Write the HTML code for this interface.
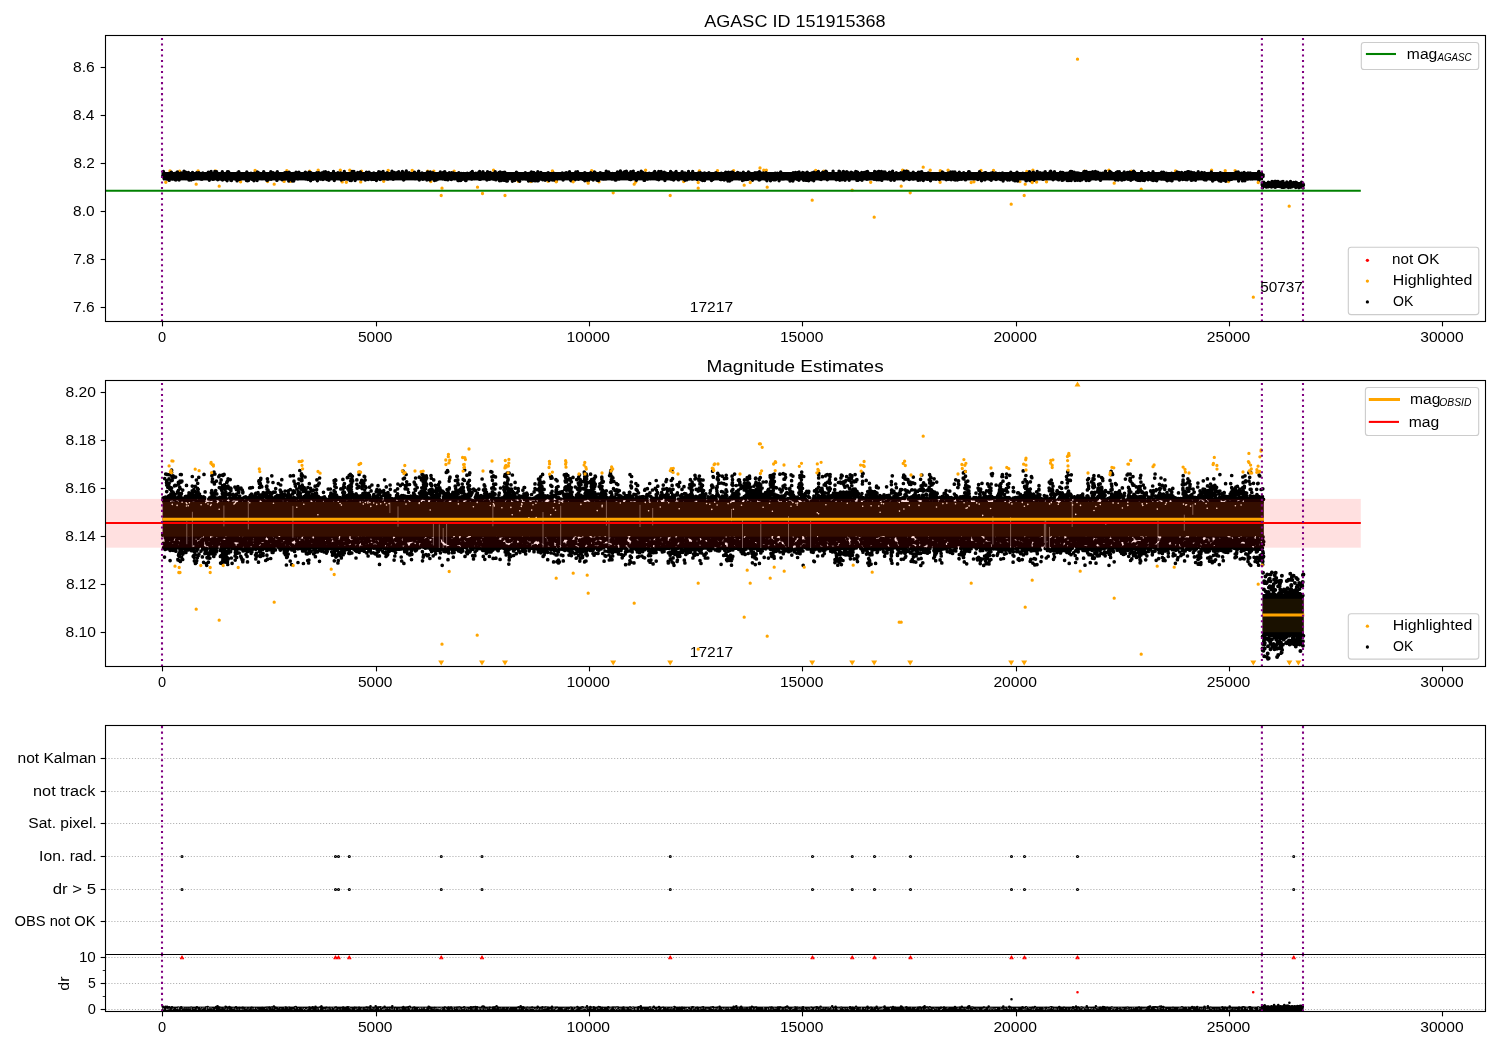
<!DOCTYPE html><html><head><meta charset="utf-8"><style>html,body{margin:0;padding:0;background:#fff;}svg{display:block;font-family:"Liberation Sans",sans-serif;will-change:transform;}</style></head><body>
<svg width="1500" height="1050" viewBox="0 0 1500 1050">
<rect width="1500" height="1050" fill="#fff"/>
<text x="704.30" y="27.20" font-size="16.9" textLength="181.35" lengthAdjust="spacingAndGlyphs" fill="#000">AGASC ID 151915368</text>
<clipPath id="c1"><rect x="105.5" y="35.5" width="1380.0" height="286.0"/></clipPath>
<g clip-path="url(#c1)">
<path d="M170.0 170.9h0M165.8 182.3h0M179.6 171.3h0M198.1 171.0h0M215.5 171.0h0M240.6 181.7h0M255.1 170.4h0M267.6 181.5h0M286.8 170.7h0M284.1 181.4h0M290.4 181.4h0M309.6 171.3h0M318.2 170.3h0M340.3 170.2h0M342.2 181.9h0M349.8 170.2h0M346.3 182.2h0M361.5 171.1h0M360.7 181.9h0M383.7 181.3h0M388.2 170.5h0M412.2 170.4h0M427.7 171.3h0M433.8 171.1h0M430.8 181.6h0M454.1 171.1h0M493.5 170.3h0M518.3 181.3h0M530.9 181.6h0M552.4 170.9h0M548.0 181.2h0M556.5 181.2h0M591.7 170.6h0M587.8 181.6h0M599.0 181.8h0M635.7 182.0h0M645.6 170.2h0M683.7 181.6h0M699.4 170.9h0M717.5 170.6h0M733.6 170.6h0M763.8 170.2h0M766.3 170.3h0M815.7 170.5h0M823.8 171.2h0M870.7 182.2h0M902.6 170.2h0M907.1 170.9h0M930.2 170.3h0M940.3 170.7h0M940.1 182.2h0M948.1 170.2h0M973.9 181.8h0M981.0 170.4h0M993.5 170.4h0M1026.8 171.4h0M1019.9 181.6h0M1032.9 170.2h0M1036.6 182.1h0M1046.5 181.7h0M1084.6 171.3h0M1108.9 170.2h0M1131.4 171.3h0M1175.5 171.0h0M1211.6 170.3h0M1225.2 170.7h0M1235.1 170.6h0M1228.4 181.6h0" stroke="#ffa500" stroke-width="3.4" stroke-linecap="round" fill="none"/>
<rect x="163" y="172" width="1100" height="8.4" fill="#000"/>
<rect x="1263" y="182" width="40" height="5.5" fill="#000"/>
<path d="M1153.4 177.2h0M1166.2 179.7h0M1193.4 177.1h0M1043.0 179.4h0M688.4 175.9h0M739.2 175.7h0M599.9 174.5h0M602.4 175.6h0M208.3 172.1h0M1042.0 175.8h0M433.4 175.7h0M194.8 174.4h0M676.1 171.4h0M952.9 171.9h0M642.6 177.4h0M563.4 174.1h0M887.5 178.8h0M341.8 174.4h0M175.0 176.6h0M814.8 172.9h0M746.5 175.0h0M1115.8 175.0h0M620.4 176.8h0M1028.0 180.0h0M182.2 177.8h0M192.5 172.4h0M821.5 175.9h0M411.6 175.1h0M236.6 175.0h0M303.2 178.0h0M575.1 179.8h0M533.7 175.4h0M783.2 178.9h0M1139.7 179.1h0M565.1 173.8h0M365.3 180.0h0M798.9 180.2h0M164.9 176.6h0M586.2 180.1h0M511.8 177.2h0M589.0 178.8h0M218.4 177.5h0M772.7 174.3h0M849.7 176.3h0M987.7 175.9h0M1216.7 175.6h0M553.1 173.6h0M885.1 174.1h0M649.2 173.2h0M399.3 178.1h0M1141.6 171.7h0M983.7 176.4h0M1200.5 174.9h0M1067.0 173.2h0M1172.6 177.8h0M303.5 174.9h0M179.8 178.4h0M381.1 175.6h0M616.2 176.3h0M919.6 175.6h0M645.2 177.3h0M727.7 178.7h0M1000.4 175.6h0M240.2 176.3h0M909.3 179.6h0M216.2 174.8h0M436.3 180.0h0M957.7 175.5h0M914.6 174.6h0M608.7 172.0h0M486.8 174.2h0M1074.2 172.2h0M465.0 174.8h0M196.9 177.1h0M434.7 175.9h0M185.8 174.3h0M1055.1 173.6h0M297.1 175.2h0M1234.8 173.4h0M397.0 172.8h0M499.5 180.7h0M806.8 176.9h0M501.8 174.5h0M580.1 177.8h0M277.2 179.6h0M590.9 174.8h0M190.3 175.3h0M409.1 172.7h0M1163.8 172.8h0M471.6 179.0h0M460.8 180.6h0M910.4 174.1h0M1134.6 172.3h0M488.2 179.3h0M576.8 178.6h0M949.4 177.5h0M1034.7 179.3h0M838.3 174.9h0M359.6 176.7h0M361.5 177.9h0M997.0 175.8h0M940.7 177.5h0M1149.3 175.7h0M1021.1 177.5h0M626.3 175.9h0M309.2 172.2h0M1142.9 176.3h0M928.3 173.0h0M797.1 174.6h0M913.2 172.1h0M586.5 178.1h0M540.5 175.5h0M796.1 175.6h0M694.0 178.6h0M943.1 178.0h0M1193.1 175.6h0M1095.4 171.4h0M589.1 177.7h0M572.6 175.7h0M1182.9 175.3h0M597.0 177.7h0M1043.6 174.5h0M264.6 175.9h0M659.2 178.0h0M730.9 177.9h0M1053.0 174.5h0M1128.7 178.9h0M330.6 178.6h0M842.0 179.8h0M855.2 175.7h0M329.3 176.6h0M1080.3 178.4h0M771.9 177.2h0M1221.3 177.0h0M367.6 175.9h0M740.5 175.9h0M518.6 175.2h0M869.9 174.6h0M832.0 176.6h0M726.7 175.9h0M520.2 173.6h0M717.3 176.5h0M572.4 179.9h0M1143.2 179.1h0M670.6 171.5h0M685.7 173.9h0M447.2 177.9h0M442.0 176.3h0M1212.7 176.7h0M508.2 176.4h0M1118.5 175.7h0M817.3 173.8h0M1242.1 179.0h0M343.1 173.7h0M1199.2 175.9h0M1013.0 180.0h0M787.9 178.9h0M943.0 176.5h0M957.9 176.3h0M656.2 174.7h0M861.1 174.9h0M414.1 175.0h0M186.0 178.5h0M907.3 174.7h0M684.9 177.0h0M1159.5 177.3h0M453.2 177.1h0M1063.1 175.3h0M1248.4 177.9h0M1151.3 176.6h0M1224.3 176.9h0M337.6 174.9h0M344.3 171.4h0M413.9 177.2h0M560.5 177.8h0M289.6 175.5h0M328.4 175.8h0M182.8 176.3h0M1190.1 174.0h0M560.1 177.7h0M851.8 177.4h0M662.9 177.9h0M980.6 178.3h0M1050.1 171.7h0M584.2 177.5h0M751.9 175.4h0M269.8 178.6h0M476.8 178.3h0M407.8 177.3h0M502.2 176.4h0M519.7 181.2h0M795.6 176.5h0M528.9 174.3h0M522.4 178.8h0M1077.7 173.0h0M175.9 180.1h0M168.3 178.2h0M225.4 179.2h0M1115.5 177.9h0M860.2 176.9h0M964.0 173.5h0M1216.9 175.4h0M402.5 176.9h0M1175.4 175.8h0M429.6 176.8h0M733.8 175.2h0M912.4 174.1h0M1040.3 176.7h0M435.7 177.8h0M687.7 175.9h0M212.7 173.9h0M479.5 172.4h0M1242.5 180.9h0M1159.0 173.9h0M803.4 174.6h0M1028.4 174.8h0M1155.8 178.3h0M527.9 175.0h0M1242.0 177.7h0M656.3 176.8h0M337.4 173.5h0M746.1 176.8h0M816.1 173.5h0M925.3 175.8h0M901.2 177.3h0M208.1 175.3h0M866.1 174.1h0M1177.2 175.3h0M900.3 175.3h0M1236.2 177.3h0M725.7 172.1h0M1054.5 171.8h0M316.9 177.5h0M1148.5 176.0h0M643.0 175.9h0M1127.7 176.1h0M515.7 176.3h0M849.9 174.8h0M1094.6 176.1h0M945.7 177.9h0M845.0 176.4h0M1231.2 176.7h0M259.4 173.9h0M274.8 176.7h0M769.8 173.7h0M1213.6 175.1h0M918.3 176.2h0M503.4 176.8h0M281.1 178.7h0M656.1 177.9h0M691.3 176.8h0M678.1 175.1h0M844.4 175.6h0M462.9 175.5h0M1131.8 179.5h0M479.9 177.0h0M280.4 174.9h0M546.7 174.3h0M1192.7 178.8h0M338.0 174.1h0M468.2 176.8h0M1182.7 176.5h0M545.7 178.5h0M1090.7 174.1h0M212.5 176.9h0M1140.7 176.4h0M423.7 177.5h0M361.3 179.1h0M979.7 176.4h0M1251.9 175.7h0M1218.7 178.6h0M990.8 173.3h0M1169.1 176.6h0M1249.3 174.1h0M771.1 173.6h0M321.7 172.9h0M1097.7 172.2h0M598.4 177.9h0M506.7 178.5h0M714.0 176.6h0M200.9 177.9h0M183.1 175.7h0M453.5 175.1h0M818.6 173.7h0M987.6 178.0h0M1216.4 178.4h0M1063.3 178.7h0M1198.7 174.5h0M863.1 175.4h0M970.5 173.3h0M809.2 178.8h0M252.2 177.8h0M230.7 177.5h0M999.4 176.5h0M385.3 175.6h0M1032.1 175.4h0M673.4 178.3h0M170.1 174.6h0M780.7 178.3h0M650.3 176.6h0M243.8 174.2h0M449.9 173.1h0M500.1 174.8h0M543.1 176.2h0M940.7 173.7h0M346.7 177.4h0M650.6 178.5h0M830.6 176.9h0M1204.4 172.7h0M289.1 172.1h0M249.8 178.2h0M373.6 179.4h0M405.4 174.7h0M341.7 177.1h0M246.2 175.7h0M393.2 174.4h0M408.4 177.7h0M690.5 174.6h0M875.7 177.9h0M563.1 180.0h0M347.7 175.7h0M266.7 180.3h0M452.1 173.3h0M350.6 178.0h0M692.1 175.9h0M1121.6 180.0h0M951.3 176.6h0M386.3 174.2h0M201.9 179.2h0M236.9 173.1h0M642.3 176.8h0M562.8 174.5h0M913.9 178.8h0M254.9 176.0h0M442.8 178.1h0M917.5 175.8h0M787.9 174.1h0M731.4 172.1h0M1155.2 180.2h0M287.3 177.1h0M377.7 173.6h0M785.2 175.8h0M784.9 178.6h0M1241.6 173.2h0M1238.6 181.0h0M809.1 175.8h0M998.0 175.8h0M930.4 179.1h0M308.9 177.1h0M825.6 173.6h0M499.1 178.5h0M557.7 177.1h0M334.6 178.5h0M171.7 173.9h0M1102.4 173.3h0M952.0 177.8h0M990.7 175.4h0M479.6 171.5h0M622.0 174.3h0M356.4 177.5h0M825.5 174.2h0M1086.5 178.8h0M1020.0 175.4h0M1190.6 175.9h0M449.3 172.6h0M934.7 174.6h0M302.0 176.3h0M753.0 177.6h0M283.9 176.9h0M757.4 178.6h0M759.4 171.7h0M544.5 176.2h0M547.3 175.8h0M945.4 174.2h0M692.1 175.7h0M611.3 174.1h0M286.6 177.4h0M473.3 175.2h0M1095.1 177.0h0M1232.7 174.6h0M573.4 179.1h0M1121.3 176.4h0M1124.4 179.5h0M402.6 175.2h0M464.0 174.9h0M928.8 176.5h0M499.4 175.4h0M1214.3 174.3h0M564.5 176.2h0M966.5 176.1h0M941.2 175.0h0M397.7 174.8h0M1115.9 173.4h0M524.4 176.9h0M283.7 173.5h0M217.7 179.8h0M660.0 176.1h0M859.4 178.0h0M461.3 173.4h0M1089.4 176.7h0M457.0 175.8h0M1095.6 178.0h0M198.9 177.5h0M451.7 172.6h0M338.1 178.5h0M655.4 172.7h0M548.8 179.1h0M597.1 176.0h0M1100.0 173.1h0M800.6 178.0h0M829.1 175.8h0M591.9 174.0h0M1052.1 174.2h0M715.0 177.4h0M983.9 173.2h0M1169.0 174.3h0M836.3 179.7h0M641.6 174.1h0M452.7 177.0h0M1166.6 177.2h0M1004.7 178.7h0M1042.8 177.8h0M406.3 171.0h0M643.3 174.8h0M1135.3 178.5h0M433.3 174.2h0M1058.6 179.9h0M755.6 176.8h0M403.4 172.8h0M575.9 177.6h0M246.4 180.6h0M903.6 174.1h0M962.8 177.5h0M194.4 173.6h0M494.4 175.0h0M1008.9 176.9h0M383.1 177.1h0M753.7 177.1h0M1049.8 176.3h0M790.0 181.0h0M297.1 174.3h0M1163.5 172.2h0M984.6 177.5h0M784.5 176.8h0M529.0 173.4h0M803.6 180.2h0M593.6 174.6h0M293.2 173.5h0M297.0 177.6h0M212.4 177.3h0M350.1 180.5h0M432.9 172.6h0M862.0 173.1h0M801.3 175.9h0M812.7 175.2h0M1067.5 175.8h0M267.2 174.6h0M590.7 172.8h0M249.8 175.2h0M623.6 177.1h0M249.3 178.0h0M235.5 174.9h0M277.3 177.5h0M591.8 177.1h0M1002.7 175.5h0M472.9 175.2h0M979.2 176.3h0M419.3 180.1h0M478.7 176.4h0M681.5 173.9h0M245.1 176.0h0M656.7 174.8h0M805.0 178.9h0M1070.4 171.5h0M224.3 173.8h0M1043.2 177.8h0M789.7 177.4h0M799.2 176.6h0M218.7 177.7h0M1131.2 172.8h0M467.8 176.8h0M764.2 173.7h0M755.5 173.4h0M1164.5 177.4h0M824.7 174.1h0M1254.0 175.3h0M418.1 177.0h0M891.5 173.4h0M797.6 177.9h0M727.9 181.1h0M853.5 175.4h0M768.7 178.4h0M533.4 178.2h0M868.9 173.2h0M254.3 173.2h0M689.9 175.8h0M661.1 171.5h0M397.3 175.7h0M788.0 177.1h0M900.1 176.7h0M300.1 177.7h0M489.5 179.2h0M230.8 175.6h0M820.0 179.0h0M252.4 177.4h0M415.1 176.8h0M655.6 175.7h0M659.9 178.2h0M198.8 174.0h0M1205.5 178.1h0M415.8 178.1h0M834.1 174.2h0M407.1 173.4h0M818.4 174.4h0M550.9 176.1h0M513.3 177.5h0M684.8 177.8h0M808.0 180.6h0M821.1 179.6h0M920.5 176.6h0M458.2 175.3h0M263.4 173.5h0M441.4 178.0h0M522.2 177.9h0M831.2 175.1h0M618.7 175.2h0M505.2 176.4h0M270.8 171.7h0M819.4 175.9h0M283.6 177.2h0M731.6 176.4h0M920.4 173.6h0M848.5 175.9h0M338.4 177.1h0M554.4 180.2h0M1198.5 178.6h0M262.4 177.5h0M909.8 175.6h0M643.0 172.9h0M838.0 174.7h0M596.0 173.1h0M298.8 176.5h0M781.7 178.8h0M169.2 178.3h0M1113.8 177.6h0M1041.9 176.0h0M574.0 178.6h0M754.1 175.7h0M743.3 172.2h0M1241.1 176.8h0M210.6 176.0h0M490.2 172.4h0M610.6 174.6h0M1029.4 171.8h0M966.2 175.2h0M628.6 178.3h0M175.4 174.4h0M875.9 178.9h0M610.3 176.3h0M291.1 175.0h0M857.2 172.0h0M652.3 177.7h0M499.9 178.0h0M458.8 172.8h0M735.9 175.7h0M435.2 178.5h0M595.5 174.5h0M1199.6 177.2h0M688.5 171.5h0M441.6 174.1h0M736.4 178.3h0M1172.5 173.6h0M1116.2 172.4h0M908.2 172.6h0M1152.4 175.5h0M995.6 173.0h0M911.3 175.5h0M633.8 176.9h0M327.0 179.6h0M968.5 175.4h0M860.8 179.6h0M1228.1 178.0h0M515.9 176.2h0M1127.8 176.9h0M403.1 179.0h0M1204.3 179.7h0M1258.9 177.8h0M214.4 175.8h0M519.9 178.6h0M1261.6 176.5h0M1228.6 177.1h0M900.9 176.2h0M310.6 180.7h0M169.8 173.3h0M436.9 175.9h0M1202.3 173.9h0M1048.7 177.8h0M634.3 178.2h0M1000.6 179.6h0M1155.9 175.5h0M492.7 176.4h0M1125.2 177.4h0M459.3 176.6h0M524.4 177.3h0M211.7 176.4h0M338.9 176.6h0M769.0 176.0h0M188.9 176.6h0M763.4 173.0h0M349.6 175.1h0M986.9 173.4h0M303.4 176.5h0M390.4 174.2h0M458.6 177.4h0M804.1 179.3h0M1052.6 173.1h0M991.8 174.7h0M978.6 177.0h0M913.1 179.0h0M760.7 178.0h0M539.7 177.3h0M360.5 176.0h0M1113.5 174.6h0M613.0 176.6h0M878.4 177.1h0M237.7 176.8h0M559.8 174.9h0M273.1 172.7h0M552.8 174.3h0M969.8 175.4h0M538.1 173.8h0M913.6 176.6h0M298.1 173.6h0M586.4 175.7h0M614.0 176.5h0M723.0 178.4h0M414.0 176.1h0M931.7 179.0h0M1133.9 174.6h0M1057.2 174.2h0M196.5 178.0h0M699.9 174.0h0M541.3 175.9h0M793.2 172.7h0M254.2 178.7h0M965.8 177.9h0M621.4 173.9h0M1201.7 172.5h0M183.5 176.3h0M622.4 176.2h0M698.4 178.5h0M1077.5 180.2h0M995.3 177.0h0M362.9 175.7h0M501.3 176.0h0M972.6 175.6h0M624.6 172.6h0M452.1 174.2h0M1187.1 175.9h0M1090.8 172.4h0M553.8 173.2h0M767.5 179.0h0M1185.5 174.6h0M400.9 177.4h0M1163.5 178.8h0M1136.3 176.0h0M962.4 178.2h0M917.9 175.5h0M916.7 174.0h0M761.7 176.0h0M803.6 176.6h0M379.8 176.4h0M781.9 176.6h0M903.4 174.8h0M697.1 178.3h0M910.4 175.3h0M667.0 175.1h0M1047.1 178.0h0M956.2 174.2h0M260.5 176.2h0M1009.5 180.0h0M476.1 176.2h0M252.2 179.4h0M296.0 176.2h0M519.2 175.6h0M740.1 176.3h0M526.1 175.4h0M386.5 175.2h0M1009.4 175.7h0M574.0 178.1h0M1124.7 176.6h0M431.7 175.6h0M922.1 174.4h0M556.1 180.6h0M1098.0 175.5h0M874.2 179.2h0M909.6 173.2h0M264.7 174.6h0M989.8 179.2h0M552.7 173.8h0M977.5 173.9h0M1093.1 175.9h0M297.3 175.1h0M179.4 175.2h0M997.0 176.9h0M1228.9 178.7h0M1153.8 176.8h0M642.0 176.6h0M1080.3 179.1h0M188.4 178.8h0M226.9 175.6h0M802.7 172.4h0M743.3 174.3h0M1070.7 178.5h0M419.5 174.7h0M671.9 174.5h0M1251.9 175.2h0M495.9 179.9h0M607.8 176.0h0M831.4 175.0h0M1258.1 174.6h0M363.7 173.8h0M923.3 180.5h0M618.5 175.6h0M603.7 176.3h0M445.3 175.6h0M674.9 178.3h0M795.4 174.4h0M594.4 172.0h0M719.3 175.3h0M862.7 176.8h0M1100.3 180.3h0M780.2 176.3h0M583.7 174.5h0M1221.1 176.3h0M352.4 174.4h0M212.6 174.3h0M1162.6 176.6h0M455.2 176.9h0M329.3 174.7h0M586.7 178.8h0M540.0 176.2h0M553.0 176.5h0M1099.6 174.7h0M482.3 176.9h0M308.5 177.6h0M400.0 177.1h0M1208.1 174.8h0M634.7 177.2h0M559.6 175.0h0M1018.4 176.9h0M1192.6 177.9h0M724.2 180.0h0M1059.3 175.0h0M453.8 173.8h0M548.3 176.6h0M797.2 179.3h0M422.8 175.1h0M465.5 180.5h0M369.0 172.1h0M451.3 179.6h0M1086.6 178.7h0M1037.6 178.6h0M287.9 174.8h0M546.7 179.3h0M957.7 179.1h0M1109.1 178.5h0M779.3 176.0h0M962.5 175.9h0M423.9 178.7h0M1023.3 177.3h0M1066.3 175.3h0M610.6 174.0h0M422.2 176.4h0M198.9 172.7h0M855.6 177.3h0M858.9 176.4h0M163.8 172.7h0M735.2 177.7h0M1195.7 179.0h0M194.3 176.2h0M313.8 173.7h0M226.1 175.1h0M643.1 177.8h0M586.1 173.5h0M1120.6 174.8h0M235.6 179.0h0M383.3 175.5h0M1195.2 175.0h0M183.4 177.5h0M447.8 179.9h0M596.6 177.1h0M163.1 173.2h0M478.7 172.5h0M826.3 175.3h0M839.9 171.8h0M832.7 175.6h0M879.1 178.1h0M839.0 171.2h0M200.6 175.3h0M883.4 176.7h0M805.3 175.3h0M402.2 176.5h0M624.4 176.8h0M424.2 178.2h0M1118.2 180.0h0M469.5 176.8h0M341.9 174.1h0M1039.6 173.8h0M1000.5 173.9h0M1100.7 177.4h0M908.3 176.5h0M621.4 176.7h0M686.0 176.3h0M773.8 179.9h0M818.7 178.5h0M1203.2 178.7h0M454.7 174.7h0M1008.5 176.0h0M181.1 172.9h0M371.9 174.8h0M1202.3 176.6h0M438.9 173.5h0M725.2 175.3h0M1171.6 180.7h0M883.2 175.6h0M700.3 172.7h0M935.2 173.7h0M1239.7 176.4h0M1198.8 178.2h0M362.1 176.0h0M316.7 178.5h0M479.5 176.8h0M322.3 173.9h0M1003.7 179.0h0M1080.5 175.2h0M317.4 180.7h0M243.1 175.1h0M518.9 176.5h0M918.8 174.8h0M1010.5 176.1h0M669.7 177.1h0M866.1 175.7h0M1172.7 178.9h0M1131.6 176.8h0M292.1 180.2h0M947.8 176.7h0M1017.5 179.5h0M1161.4 179.1h0M622.8 175.3h0M334.3 180.5h0M684.1 179.3h0M570.1 177.6h0M596.0 175.8h0M1046.3 175.8h0M880.2 175.7h0M911.3 176.5h0M881.1 173.5h0M318.5 176.6h0M226.8 175.1h0M597.5 179.9h0M1098.0 177.7h0M876.7 179.8h0M1033.8 180.6h0M847.8 176.9h0M1026.1 180.9h0M1259.3 177.0h0M947.8 178.0h0M1111.2 173.6h0M1233.6 177.0h0M977.9 179.5h0M1057.6 177.1h0M249.0 175.6h0M202.6 175.8h0M1179.2 174.6h0M424.2 174.4h0M498.7 173.4h0M311.4 179.2h0M861.1 178.5h0M195.2 175.5h0M1042.3 173.1h0M491.0 175.8h0M981.5 180.7h0M1165.2 173.5h0M922.5 175.1h0M629.9 174.7h0M850.5 177.7h0M1104.2 173.0h0M945.6 177.2h0M440.2 174.5h0M170.9 175.3h0M1131.1 173.2h0M848.9 177.1h0M232.4 175.4h0M769.1 175.1h0M811.0 178.8h0M485.5 177.0h0M1138.0 180.4h0M426.5 176.9h0M320.9 176.7h0M503.1 177.0h0M535.1 180.9h0M1135.9 178.8h0M885.9 175.4h0M296.8 177.6h0M595.9 175.2h0M275.6 177.9h0M939.5 175.5h0M1103.8 174.6h0M265.4 177.3h0M712.9 179.5h0M431.8 178.0h0M476.3 177.8h0M984.7 176.5h0M1238.2 172.0h0M469.6 175.8h0M759.9 175.9h0M504.2 177.9h0M230.9 180.4h0M825.8 177.7h0M333.5 172.3h0M919.6 176.2h0M985.2 175.9h0M319.2 178.1h0M819.0 176.0h0M391.9 171.7h0M1002.7 174.8h0M477.3 175.4h0M921.7 171.6h0M875.8 175.8h0M795.8 176.0h0M402.1 178.1h0M1081.0 175.9h0M553.2 174.9h0M1010.9 176.5h0M685.4 176.0h0M655.8 178.3h0M946.7 174.5h0M537.8 171.8h0M1003.1 181.1h0M652.4 177.8h0M977.8 176.4h0M930.5 180.8h0M1203.3 173.9h0M612.4 174.0h0M546.7 175.3h0M1257.8 177.2h0M731.0 175.7h0M623.2 177.4h0M934.0 175.7h0M437.9 179.1h0M1217.0 177.8h0M992.5 172.8h0M877.1 176.0h0M483.8 173.6h0M1053.6 175.6h0M1174.5 176.2h0M1033.8 180.6h0M1166.9 175.8h0M264.0 172.6h0M978.6 176.5h0M1116.3 173.0h0M686.8 179.9h0M250.7 177.9h0M759.9 179.8h0M429.5 175.1h0M198.4 173.3h0M1192.8 176.8h0M1078.9 173.1h0M861.0 173.9h0M986.6 174.7h0M901.8 175.4h0M672.1 172.6h0M296.0 172.2h0M480.4 179.3h0M719.7 175.3h0M803.4 176.1h0M494.5 177.7h0M302.6 177.7h0M539.4 174.9h0M366.9 175.2h0M1187.1 179.8h0M405.8 178.4h0M596.4 177.9h0M759.1 180.0h0M440.3 172.0h0M707.4 176.5h0M771.0 175.7h0M216.6 171.8h0M1205.6 177.3h0M754.8 177.8h0M323.3 176.9h0M1244.1 172.4h0M347.7 175.6h0M963.4 176.9h0M693.7 175.4h0M446.1 176.9h0M580.5 177.6h0M692.3 179.1h0M570.9 176.9h0M434.5 180.5h0M620.6 176.2h0M642.3 176.6h0M919.7 177.8h0M380.0 176.0h0M212.6 175.3h0M1080.5 179.0h0M238.8 171.8h0M857.7 172.1h0M766.9 180.7h0M1236.0 178.4h0M371.6 177.5h0M1139.8 176.8h0M306.0 177.4h0M351.3 174.0h0M882.3 175.4h0M344.9 173.8h0M808.2 179.1h0M905.7 177.2h0M300.6 177.4h0M1032.5 177.2h0M628.3 175.4h0M1227.2 174.3h0M175.1 179.8h0M249.0 177.9h0M845.3 175.5h0M445.7 177.7h0M605.9 178.9h0M1163.2 179.1h0M541.1 177.9h0M218.9 178.1h0M320.0 176.0h0M774.2 179.5h0M1015.5 178.9h0M996.8 178.8h0M681.7 173.1h0M426.3 177.4h0M304.0 178.4h0M408.3 177.5h0M383.1 171.5h0M1161.6 172.3h0M611.4 176.5h0M291.0 174.6h0M865.1 177.0h0M665.9 176.0h0M194.5 177.6h0M1241.2 175.3h0M1204.4 174.1h0M451.6 177.5h0M1079.6 175.6h0M663.6 173.5h0M904.2 171.3h0M881.8 180.4h0M968.3 175.5h0M647.5 175.5h0M323.9 171.9h0M1048.0 173.6h0M647.4 175.7h0M649.2 176.8h0M998.4 178.4h0M917.1 174.3h0M1251.4 177.3h0M589.6 179.0h0M861.5 174.9h0M254.7 176.1h0M286.4 172.5h0M442.9 174.4h0M470.7 172.9h0M653.8 177.6h0M414.4 175.2h0M1193.2 179.8h0M633.7 176.2h0M583.5 178.2h0M1155.6 177.5h0M1038.6 176.5h0M1010.5 174.3h0M1168.9 180.1h0M973.5 176.1h0M499.0 172.4h0M1220.9 175.5h0M192.4 173.1h0M1150.2 179.0h0M624.3 178.0h0M534.3 180.0h0M685.0 180.3h0M602.7 174.6h0M1109.8 171.4h0M1050.0 173.8h0M984.6 177.3h0M418.7 171.1h0M646.8 174.6h0M245.1 178.3h0M980.0 174.4h0M208.9 175.6h0M598.4 174.1h0M328.9 180.2h0M1100.6 180.2h0M1173.8 173.9h0M481.3 174.2h0M1123.0 176.0h0M358.5 177.8h0M945.5 177.6h0M438.5 177.7h0M653.0 178.4h0M835.2 178.6h0M549.1 180.6h0M380.3 176.7h0M809.7 175.5h0M1036.6 176.2h0M1258.9 180.5h0M517.4 178.9h0M446.1 178.1h0M246.7 179.7h0M387.9 179.0h0M191.1 180.1h0M437.4 174.6h0M961.8 177.1h0M288.8 178.6h0M874.1 178.2h0M487.2 175.6h0M414.5 172.2h0M694.9 175.6h0M642.8 174.6h0M654.4 176.1h0M292.0 179.5h0M784.1 178.4h0M1155.7 174.0h0M172.7 174.5h0M251.7 177.0h0M807.6 179.3h0M513.2 176.8h0M439.9 176.9h0M1250.2 173.0h0M501.8 175.7h0M1176.4 174.6h0M841.6 176.4h0M195.8 175.2h0M455.2 174.4h0M245.9 174.0h0M754.8 177.0h0M1162.6 175.0h0M220.4 178.9h0M193.4 176.1h0M194.8 175.1h0M463.1 178.3h0M345.5 173.4h0M1228.6 178.9h0M1015.8 175.1h0M1196.7 178.0h0M800.9 175.1h0M1066.5 173.9h0M943.0 172.4h0M484.1 176.3h0M881.1 177.1h0M481.0 172.9h0M673.6 180.1h0M1068.3 176.0h0M405.5 173.0h0M355.1 180.5h0M1100.1 174.9h0M672.5 179.4h0M353.9 171.5h0M512.4 181.2h0M471.4 176.5h0M1149.2 176.3h0M683.0 176.6h0M1175.6 173.6h0M680.3 178.0h0M1196.8 177.3h0M1171.6 177.0h0M787.4 175.2h0M1028.3 173.7h0M478.6 176.9h0M289.6 178.5h0M827.8 176.1h0M223.3 175.8h0M677.2 174.7h0M845.1 177.4h0M1007.6 180.0h0M1149.7 175.9h0M387.2 174.0h0M1115.4 180.0h0M708.9 172.7h0M848.2 176.4h0M671.2 175.8h0M1095.9 178.9h0M492.8 176.0h0M171.4 172.2h0M1075.5 173.5h0M891.0 176.0h0M951.4 176.4h0M299.2 175.2h0M389.5 174.6h0M851.1 172.3h0M985.1 173.0h0M890.4 174.4h0M818.7 174.5h0M883.4 175.6h0M325.2 173.6h0M658.7 179.7h0M525.3 172.7h0M973.1 178.2h0M732.2 177.9h0M955.3 180.1h0M927.5 179.4h0M1159.1 173.4h0M1105.2 176.6h0M219.3 177.9h0M897.7 177.9h0M573.7 177.6h0M273.5 175.0h0M689.1 178.8h0M1090.9 175.8h0M1039.3 175.0h0M279.0 176.9h0M385.3 175.0h0M927.6 174.8h0M1228.5 177.1h0M247.5 180.8h0M260.2 177.0h0M928.4 176.5h0M840.7 174.8h0M1055.5 176.8h0M380.8 173.5h0M706.7 177.4h0M1044.3 176.6h0M583.5 176.7h0M602.5 177.2h0M198.6 175.3h0M1040.9 177.6h0M654.2 177.4h0M578.7 177.7h0M884.1 176.0h0M1101.6 177.9h0M1116.3 175.3h0M539.5 179.3h0M832.2 175.6h0M589.1 179.3h0M1086.1 176.8h0M1036.2 176.1h0M891.1 173.6h0M1069.2 177.6h0M723.8 177.5h0M791.2 176.8h0M341.6 177.0h0M941.9 176.9h0M479.8 174.1h0M781.1 173.9h0M164.8 177.6h0M600.0 176.6h0M840.5 179.3h0M856.9 180.4h0M783.2 178.4h0M440.0 177.7h0M883.0 177.3h0M890.5 176.1h0M812.0 174.9h0M577.6 171.8h0M329.9 178.0h0M775.3 177.8h0M219.6 176.4h0M1171.3 176.7h0M550.7 178.5h0M474.0 178.2h0M658.7 176.7h0M276.8 175.9h0M1136.0 177.4h0M1241.0 178.4h0M1068.9 180.5h0M794.2 174.6h0M1198.2 177.5h0M526.3 174.8h0M674.6 175.0h0M351.4 180.5h0M630.1 174.8h0M1183.8 176.0h0M892.9 174.6h0M763.3 178.3h0M752.6 175.5h0M861.7 172.4h0M834.0 176.2h0M660.7 178.1h0M724.9 176.7h0M274.1 176.7h0M650.7 174.6h0M905.4 173.7h0M408.4 175.7h0M467.4 173.6h0M1048.6 175.0h0M312.1 174.5h0M377.7 175.7h0M1063.7 177.8h0M295.7 176.7h0M493.4 179.0h0M1164.8 177.2h0M617.1 175.4h0M1062.6 174.0h0M1004.3 177.0h0M184.5 173.1h0M404.3 177.3h0M1166.5 173.3h0M516.3 173.7h0M607.2 174.0h0M1191.7 172.4h0M283.3 176.8h0M1232.3 175.0h0M874.5 175.0h0M854.5 177.3h0M163.4 171.5h0M856.9 175.4h0M1067.7 176.9h0M596.4 178.5h0M243.0 176.7h0M307.9 175.2h0M247.9 178.5h0M619.4 177.7h0M1062.1 180.4h0M227.1 180.8h0M609.2 175.4h0M603.8 179.1h0M600.8 176.6h0M742.4 174.3h0M751.8 178.0h0M387.2 178.9h0M1037.2 171.5h0M731.8 179.7h0M550.1 174.3h0M1224.0 180.4h0M939.6 177.1h0M342.0 176.4h0M1229.5 179.9h0M799.2 175.8h0M537.1 180.8h0M423.9 173.7h0M237.2 175.1h0M431.1 173.6h0M480.7 177.3h0M541.4 176.2h0M1250.3 178.1h0M814.8 178.7h0M374.1 178.0h0M570.5 178.8h0M638.5 178.3h0M254.0 176.1h0M678.2 174.2h0M722.1 174.4h0M1164.0 178.0h0M639.5 174.6h0M920.7 173.8h0M910.8 173.9h0M355.1 175.6h0M787.0 177.0h0M656.9 175.5h0M341.6 173.6h0M188.8 176.8h0M1258.9 171.5h0M262.2 175.4h0M1138.7 178.3h0M566.1 176.8h0M252.5 178.9h0M1224.5 176.9h0M889.5 177.0h0M607.9 175.8h0M1085.1 175.0h0M941.7 177.3h0M620.0 177.7h0M952.9 171.9h0M974.9 174.3h0M352.1 171.5h0M951.2 174.2h0M1171.6 173.2h0M919.6 174.7h0M1042.6 175.1h0M1252.5 178.2h0M1039.3 178.6h0M679.7 173.9h0M781.4 175.1h0M1006.8 177.9h0M858.7 174.3h0M240.6 175.3h0M228.7 172.0h0M462.7 177.5h0M1063.4 176.3h0M406.5 173.2h0M513.7 173.6h0M1068.8 173.4h0M304.5 177.5h0M470.6 174.7h0M444.8 173.3h0M214.6 175.1h0M980.1 178.0h0M515.5 179.4h0M611.3 178.6h0M529.2 176.7h0M235.0 176.8h0M1092.7 176.5h0M310.6 178.0h0M476.9 177.2h0M956.1 174.1h0M546.1 174.4h0M720.5 175.6h0M526.0 178.1h0M779.2 175.1h0M511.9 174.9h0M665.0 178.2h0M172.3 179.1h0M179.2 173.6h0M720.6 176.1h0M1062.0 178.4h0M1262.0 175.0h0M1046.8 177.8h0M739.9 173.3h0M871.9 175.4h0M901.7 177.0h0M965.8 179.6h0M1254.5 178.2h0M540.9 172.5h0M653.9 172.5h0M1020.2 174.5h0M400.3 177.3h0M268.1 177.7h0M1152.2 178.6h0M180.1 177.2h0M1146.7 174.8h0M1169.7 175.3h0M344.8 173.9h0M993.9 178.2h0M480.5 173.1h0M461.0 176.1h0M1245.5 176.8h0M1139.1 178.6h0M1004.1 174.8h0M642.6 176.6h0M1247.9 173.9h0M790.6 178.7h0M1241.5 175.5h0M956.7 175.6h0M214.0 173.7h0M1041.3 174.5h0M1085.1 174.5h0M1132.6 174.3h0M847.4 178.2h0M203.9 173.4h0M1117.6 176.0h0M627.1 177.3h0M378.9 173.4h0M392.0 171.2h0M384.4 176.9h0M1060.5 172.1h0M242.5 174.5h0M1173.5 175.9h0M181.1 176.2h0M958.4 175.7h0M416.4 173.9h0M729.3 178.8h0M357.7 176.5h0M1153.1 180.5h0M334.1 173.9h0M676.5 175.6h0M832.5 175.5h0M661.5 177.2h0M400.5 176.0h0M481.8 176.0h0M1191.4 180.4h0M300.4 176.3h0M181.9 176.6h0M1163.0 176.6h0M1138.2 174.5h0M916.9 177.4h0M682.1 171.6h0M1210.6 179.0h0M617.4 172.0h0M176.8 175.0h0M641.7 176.0h0M745.2 175.3h0M766.2 175.0h0M1140.4 178.6h0M237.1 180.9h0M1102.9 178.0h0M737.6 176.9h0M968.6 174.7h0M618.0 173.8h0M488.6 178.8h0M532.1 178.4h0M464.7 178.9h0M661.9 178.2h0M820.7 178.8h0M1077.4 174.7h0M354.5 174.2h0M658.0 173.7h0M748.3 176.3h0M1063.3 175.4h0M944.4 176.6h0M848.6 173.0h0M905.0 175.9h0M655.9 177.8h0M1050.5 175.9h0M1084.4 171.5h0M785.9 176.3h0M291.3 175.7h0M631.8 177.6h0M453.9 175.7h0M373.7 177.5h0M489.2 175.2h0M1064.6 176.6h0M545.4 178.2h0M635.6 175.0h0M583.9 176.9h0M365.7 176.4h0M791.6 177.8h0M621.3 175.2h0M1193.7 177.1h0M843.4 171.5h0M1239.3 175.9h0M1108.1 177.4h0M702.8 177.4h0M180.6 173.5h0M396.9 173.8h0M293.9 177.4h0M974.6 176.9h0M314.2 177.4h0M872.8 176.1h0M517.6 176.8h0M691.6 178.0h0M995.6 174.3h0M491.0 173.1h0M351.6 178.2h0M479.6 174.2h0M1201.4 177.7h0M771.2 174.6h0M478.6 173.5h0M322.9 179.6h0M237.6 176.1h0M530.2 173.3h0M838.5 175.1h0M665.5 175.5h0M1056.8 175.3h0M1257.7 176.3h0M790.3 173.8h0M542.3 175.5h0M1037.5 176.9h0M260.2 177.4h0M998.8 176.6h0M1133.2 173.9h0M1017.0 172.1h0M271.1 179.3h0M802.2 173.9h0M1045.7 174.7h0M615.7 175.5h0M1091.8 176.8h0M345.3 175.8h0M744.6 174.5h0M777.1 176.1h0M1030.4 180.7h0M616.1 180.1h0M446.8 175.6h0M946.5 177.8h0M288.3 172.6h0M567.5 176.6h0M677.8 177.3h0M1029.9 175.5h0M630.2 179.5h0M781.5 178.2h0M909.3 176.9h0M906.3 171.1h0M1223.3 175.3h0M672.5 177.4h0M792.0 175.3h0M183.9 171.7h0M373.7 174.8h0M436.4 179.3h0M395.0 177.1h0M734.0 178.4h0M382.0 176.3h0M790.1 180.0h0M1071.8 171.5h0M242.5 173.6h0M429.9 180.1h0M709.4 178.4h0M213.3 176.4h0M320.2 175.5h0M795.5 172.4h0M602.4 174.9h0M1157.5 175.9h0M790.6 174.4h0M996.0 179.5h0M543.3 178.4h0M577.7 175.6h0M1102.1 177.6h0M839.9 175.5h0M1169.3 176.7h0M440.4 175.0h0M288.7 181.1h0M908.1 172.3h0M300.2 176.3h0M246.2 178.5h0M592.3 178.4h0M918.3 172.2h0M559.3 174.0h0M991.6 176.1h0M663.8 174.2h0M476.2 174.4h0M750.7 175.7h0M828.1 175.4h0M327.6 178.5h0M813.8 172.3h0M348.0 178.2h0M1228.5 176.1h0M747.7 177.6h0M388.7 175.0h0M209.3 180.3h0M398.7 171.6h0M513.0 179.3h0M793.9 175.5h0M893.1 175.1h0M946.0 179.6h0M648.2 175.5h0M856.3 177.8h0M772.0 179.4h0M488.9 174.8h0M403.6 180.0h0M602.1 178.7h0M921.8 175.5h0M310.6 177.0h0M862.7 174.4h0M185.3 176.2h0M364.7 178.0h0M899.9 177.8h0M1052.2 176.3h0M1007.2 175.5h0M915.0 174.4h0M442.3 174.0h0M1250.1 175.6h0M824.2 177.2h0M1164.5 175.0h0M1193.5 174.6h0M425.3 173.4h0M1230.3 177.9h0M251.9 175.6h0M864.2 172.4h0M445.1 178.6h0M266.1 178.4h0M789.4 176.5h0M396.5 174.8h0M1028.3 176.2h0M670.7 173.9h0M459.5 178.3h0M175.5 178.8h0M924.4 178.3h0M863.3 176.5h0M1049.0 176.3h0M584.4 177.5h0M1169.8 180.0h0M188.5 173.8h0M1174.1 176.1h0M1004.4 175.1h0M275.2 173.5h0M1249.3 176.9h0M261.3 178.6h0M989.4 174.0h0M431.6 178.1h0M923.3 177.5h0M1084.1 177.1h0M292.4 179.6h0M519.8 175.2h0M1148.1 179.7h0M688.2 175.0h0M331.0 177.2h0M258.1 172.7h0M297.9 178.8h0M279.0 176.4h0M555.4 174.8h0M1017.5 174.3h0M661.2 176.5h0M270.8 179.1h0M550.7 177.2h0M695.1 175.1h0M656.0 174.3h0M868.5 173.7h0M911.8 175.0h0M985.8 172.7h0M752.5 175.4h0M195.5 177.9h0M1009.9 176.5h0M1024.7 176.0h0M965.6 174.9h0M644.3 177.4h0M1139.0 177.3h0M268.6 179.2h0M977.4 174.6h0M819.0 173.5h0M933.4 174.9h0M236.6 173.6h0M1228.4 176.5h0M195.8 174.5h0M357.2 174.1h0M731.3 176.4h0M793.3 178.6h0M358.4 177.6h0M479.0 174.5h0M1170.1 176.2h0M516.3 177.3h0M652.7 177.4h0M285.3 175.6h0M788.9 173.6h0M934.2 177.0h0M978.2 174.0h0M418.6 174.7h0M569.0 175.6h0M883.0 177.8h0M1233.7 175.5h0M1010.1 176.9h0M403.9 175.0h0M234.6 175.1h0M523.8 178.5h0M745.3 175.3h0M462.0 177.0h0M1032.2 176.7h0M444.9 172.0h0M298.9 173.0h0M825.8 171.3h0M999.4 177.1h0M388.2 176.3h0M530.0 175.3h0M448.5 174.9h0M194.2 174.8h0M914.2 174.3h0M218.5 175.9h0M836.2 175.5h0M853.0 173.8h0M746.2 179.5h0M209.3 177.9h0M203.6 174.7h0M729.6 181.1h0M702.6 180.5h0M179.5 178.4h0M174.4 178.4h0M1014.0 175.3h0M519.8 175.9h0M951.8 172.9h0M381.1 175.0h0M455.0 178.2h0M1151.4 175.3h0M380.2 172.3h0M612.0 179.1h0M711.5 180.5h0M946.3 179.7h0M515.6 173.3h0M877.4 177.7h0M407.2 173.6h0M912.7 175.4h0M185.9 177.1h0M368.2 179.5h0M229.7 174.9h0M274.8 175.4h0M986.3 173.5h0M673.4 175.9h0M1024.9 174.2h0M1236.0 175.4h0M367.4 177.8h0M1009.1 176.6h0M1232.6 176.8h0M503.1 177.1h0M247.5 178.0h0M670.9 179.0h0M759.9 173.6h0M920.1 172.3h0M791.0 177.6h0M494.7 177.8h0M341.3 179.0h0M536.8 178.0h0M678.7 179.6h0M366.8 177.2h0M491.3 174.8h0M1135.8 178.0h0M628.8 173.6h0M300.5 175.1h0M895.3 176.5h0M553.3 175.5h0M729.6 178.6h0M594.9 175.3h0M288.9 180.5h0M974.0 173.9h0M788.8 178.0h0M1251.4 175.1h0M167.7 179.0h0M798.1 175.2h0M631.2 177.2h0M641.2 171.3h0M958.0 174.7h0M429.4 179.5h0M602.8 176.3h0M309.3 176.8h0M786.5 178.4h0M644.1 180.4h0M209.4 173.4h0M416.1 175.4h0M597.8 175.0h0M748.1 177.9h0M264.8 174.5h0M844.4 172.2h0M1062.8 172.5h0M529.0 178.0h0M236.0 176.8h0M323.9 178.1h0M1002.5 173.0h0M748.5 174.4h0M312.4 175.3h0M347.4 177.8h0M1079.8 177.0h0M910.6 175.3h0M928.4 174.0h0M317.1 176.8h0M1253.0 175.1h0M442.1 178.1h0M552.3 180.0h0M420.1 175.9h0M1200.3 173.8h0M857.9 180.4h0M771.7 177.6h0M618.5 176.7h0M952.1 176.7h0M678.4 176.2h0M670.8 176.2h0M329.7 176.7h0M1069.3 172.7h0M235.4 174.8h0M1161.6 176.1h0M1171.5 176.5h0M738.7 177.0h0M342.3 176.9h0M402.4 171.5h0M316.3 174.3h0M934.1 174.9h0M561.9 176.5h0M1244.0 175.9h0M538.3 180.7h0M525.5 175.8h0M907.6 175.1h0M1129.5 172.3h0M742.4 180.5h0M297.0 176.9h0M350.4 175.7h0M949.8 175.0h0M1005.6 176.8h0M1252.4 175.4h0M793.6 179.2h0M1023.5 174.7h0M905.5 174.7h0M767.8 175.0h0M1052.4 177.1h0M386.9 176.6h0M331.1 178.2h0M503.5 177.8h0M586.4 177.6h0M1207.9 176.6h0M1070.8 178.0h0M982.0 177.3h0M1144.1 176.9h0M584.7 172.8h0M1246.7 175.3h0M1161.8 174.8h0M366.4 172.2h0M578.4 179.2h0M501.6 179.7h0M375.0 178.5h0M1194.4 177.4h0M592.6 179.5h0M1119.3 171.8h0M819.3 178.8h0M228.3 171.8h0M639.8 176.1h0M1021.3 176.8h0M513.7 177.8h0M484.8 177.5h0M265.5 177.7h0M684.4 174.2h0M1200.1 174.8h0M183.1 173.8h0M1138.8 176.2h0M822.8 175.1h0M471.1 172.5h0M1151.6 178.4h0M1183.7 173.6h0M1233.9 175.5h0M671.9 174.3h0M618.8 173.9h0M894.2 176.9h0M1141.1 174.5h0M547.8 173.0h0M528.0 175.1h0M612.5 173.4h0M185.7 172.2h0M1087.4 178.0h0M666.3 178.5h0M676.4 172.7h0M859.2 179.4h0M1053.1 179.8h0M939.2 173.4h0M529.8 177.4h0M487.0 175.5h0M529.3 178.3h0M748.4 171.9h0M1055.2 177.2h0M171.3 175.1h0M828.9 176.8h0M1091.6 177.9h0M780.7 171.9h0M582.1 176.2h0M684.4 175.8h0M729.0 177.9h0M852.9 178.3h0M245.2 177.9h0M1035.0 174.4h0M769.9 177.8h0M467.6 174.3h0M1170.5 177.9h0M601.3 175.6h0M1015.6 176.2h0M490.1 176.5h0M766.1 172.7h0M371.5 175.4h0M463.8 173.4h0M525.0 178.6h0M320.6 179.1h0M999.8 173.4h0M658.7 171.5h0M544.6 176.7h0M806.7 175.1h0M415.6 173.5h0M644.6 180.4h0M787.5 175.5h0M840.7 173.4h0M627.6 174.9h0M980.6 176.8h0M1116.9 179.0h0M1223.1 177.4h0M779.3 173.6h0M1225.2 175.6h0M1195.6 180.2h0M883.9 172.0h0M310.6 176.5h0M868.4 178.6h0M747.4 177.0h0M936.0 175.9h0M460.7 174.1h0M1255.8 176.4h0M543.8 177.3h0M1263.1 176.5h0M466.8 178.3h0M688.4 176.2h0M912.8 178.6h0M448.5 176.5h0M610.1 177.7h0M891.1 175.0h0M991.2 180.2h0M1171.9 179.0h0M770.1 177.8h0M1222.5 174.5h0M472.9 176.4h0M833.1 171.2h0M996.5 175.7h0M254.1 176.6h0M1029.0 174.4h0M1064.4 176.3h0M782.0 177.9h0M1179.5 180.1h0M932.6 176.4h0M566.5 172.8h0M1050.7 171.3h0M733.8 176.3h0M914.7 177.8h0M1250.5 178.7h0M929.2 176.5h0M1018.4 175.1h0M1061.1 174.4h0M383.2 175.7h0M203.9 175.9h0M246.0 177.6h0M674.2 176.2h0M1225.8 181.2h0M653.6 176.4h0M1179.6 177.2h0M485.3 178.4h0M318.9 178.5h0M610.0 174.3h0M1092.0 172.4h0M1227.6 173.9h0M755.3 177.1h0M581.0 177.7h0M1029.5 177.1h0M630.7 177.4h0M495.1 179.2h0M995.0 174.8h0M253.9 180.7h0M1017.7 181.1h0M1212.9 178.3h0M275.8 175.9h0M1023.4 177.1h0M188.4 172.5h0M300.1 176.8h0M484.8 174.3h0M1262.8 175.9h0M220.9 175.5h0M664.9 180.5h0M649.6 174.1h0M357.4 176.8h0M1239.1 175.7h0M422.8 179.3h0M1155.0 178.7h0M760.4 172.9h0M947.5 174.4h0M981.1 176.9h0M905.3 174.3h0M1053.3 176.9h0M1132.7 176.0h0M318.4 174.1h0M260.7 175.5h0M661.9 177.2h0M281.0 176.3h0M813.1 176.6h0M1199.2 177.1h0M729.4 176.4h0M347.6 179.0h0M291.0 173.9h0M748.1 177.5h0M980.8 175.1h0M1050.2 176.8h0M994.7 178.4h0M674.2 177.4h0M1126.2 177.2h0M758.0 178.0h0M914.6 177.0h0M165.2 175.5h0M702.6 177.7h0M258.0 178.4h0M396.5 177.6h0M494.1 177.0h0M793.9 177.2h0M246.8 172.0h0M946.6 174.7h0M597.1 175.7h0M402.4 177.8h0M1214.6 179.3h0M890.2 176.1h0M532.3 174.0h0M297.8 177.8h0M701.9 178.2h0M1012.1 178.4h0M726.3 175.1h0M503.5 174.2h0M286.8 174.6h0M408.9 173.2h0M1032.5 178.4h0M338.1 176.7h0M1242.5 180.9h0M965.5 179.9h0M606.4 178.1h0M370.5 174.7h0M675.0 177.4h0M1211.2 177.6h0M293.4 173.6h0M430.7 173.2h0M247.1 174.7h0M959.4 179.2h0M1209.4 175.7h0M775.5 173.3h0M490.2 176.4h0M1223.6 178.1h0M808.9 173.7h0M1219.5 180.9h0M573.3 174.7h0M322.8 178.6h0M239.5 177.9h0M456.5 174.5h0M639.5 175.5h0M1003.1 176.7h0M678.7 175.1h0M459.0 177.8h0M1153.9 176.4h0M797.7 172.7h0M826.1 176.0h0M1065.4 173.4h0M901.1 175.1h0M428.5 176.4h0M1211.5 176.3h0M340.2 178.2h0M338.9 175.8h0M876.9 174.8h0M804.0 180.1h0M414.9 177.2h0M935.8 176.1h0M271.9 176.2h0M685.6 174.9h0M1205.2 176.6h0M1148.9 174.1h0M827.3 179.7h0M1035.8 178.8h0M892.6 171.2h0M419.3 173.5h0M1107.7 175.5h0M835.3 174.2h0M818.4 171.5h0M1211.9 178.1h0M778.1 173.7h0M521.2 178.2h0M627.5 176.6h0M774.3 179.6h0M1122.6 173.6h0M1089.9 180.0h0M600.3 173.3h0M700.3 179.3h0M217.5 178.4h0M866.0 177.0h0M1046.2 173.5h0M380.2 179.6h0M862.4 177.8h0M316.8 172.8h0M1086.2 171.5h0M966.7 174.8h0M1191.3 174.2h0M475.2 177.6h0M350.0 176.3h0M790.9 177.2h0M226.3 175.2h0M1066.3 178.1h0M387.5 174.6h0M309.3 173.3h0M325.5 171.7h0M937.0 177.6h0M216.9 174.7h0M626.7 171.8h0M362.4 174.2h0M1021.9 175.6h0M222.1 177.7h0M378.7 171.6h0M1012.2 175.7h0M730.4 178.3h0M289.3 177.6h0M1252.5 178.0h0M571.1 180.7h0M624.4 173.7h0M979.0 174.9h0M704.5 178.5h0M1076.0 179.7h0M752.4 177.1h0M433.0 175.3h0M752.4 173.8h0M1085.9 177.5h0M471.1 176.8h0M862.4 173.7h0M800.7 175.4h0M925.4 174.0h0M558.9 177.5h0M412.0 175.3h0M894.1 178.5h0M1095.9 179.0h0M681.6 176.7h0M313.0 179.3h0M1047.6 178.3h0M744.0 179.9h0M913.7 174.9h0M274.1 177.8h0M1026.5 180.6h0M572.6 177.9h0M1142.3 175.3h0M435.2 176.8h0M169.2 180.4h0M514.0 176.0h0M959.5 175.1h0M955.0 178.6h0M1095.9 175.2h0M394.3 172.4h0M816.4 172.8h0M242.7 176.5h0M409.7 174.3h0M212.9 179.4h0M854.9 174.7h0M1148.4 173.3h0M824.3 174.3h0M826.1 173.3h0M1157.5 179.1h0M525.5 175.1h0M775.5 179.8h0M1053.8 177.3h0M376.4 180.6h0M936.7 176.4h0M247.4 178.4h0M569.5 171.8h0M366.1 175.3h0M638.6 174.3h0M387.5 178.7h0M230.0 176.3h0M651.9 177.7h0M592.3 174.8h0M970.6 173.5h0M178.0 175.8h0M862.4 179.1h0M211.3 176.0h0M697.2 179.6h0M184.8 175.1h0M1165.4 175.7h0M699.4 175.4h0M687.9 175.4h0M240.7 175.0h0M1028.7 176.0h0M455.7 174.6h0M680.3 173.8h0M957.4 180.0h0M1033.9 178.3h0M587.6 175.8h0M229.3 175.2h0M1248.0 173.0h0M443.4 177.7h0M208.8 174.5h0M845.0 180.2h0M1124.2 171.9h0M259.2 177.1h0M212.9 178.9h0M908.0 174.7h0M792.9 181.0h0M447.6 178.7h0M454.3 178.6h0M1007.3 175.0h0M185.6 178.1h0M427.4 178.3h0M561.7 176.7h0M1015.0 180.9h0M508.4 177.7h0M222.3 171.7h0M980.9 177.2h0M920.2 180.1h0M302.7 175.6h0M964.0 178.2h0M848.7 174.6h0M567.5 176.5h0M799.1 172.0h0M716.0 172.6h0M1036.2 175.7h0M1210.1 175.5h0M537.9 172.4h0M261.9 177.9h0M563.9 177.2h0M822.5 174.2h0M444.8 171.8h0M332.9 177.5h0M395.9 174.8h0M1096.8 177.7h0M948.6 179.2h0M300.8 176.1h0M492.2 175.9h0M460.7 178.0h0M286.3 176.1h0M1086.2 171.8h0M480.8 177.5h0M784.4 177.3h0M583.5 175.2h0M239.7 177.6h0M202.6 174.9h0M927.3 175.3h0M853.9 177.7h0M704.5 173.0h0M357.7 172.5h0M537.4 176.0h0M720.7 173.6h0M400.2 177.5h0M797.3 174.9h0M1086.9 172.2h0M358.2 175.2h0M1187.6 171.6h0M721.5 179.6h0M1238.9 176.5h0M1228.0 178.2h0M232.8 177.5h0M913.1 176.2h0M430.4 173.6h0M846.1 177.5h0M1141.9 175.3h0M667.0 174.3h0M881.4 171.4h0M897.8 178.5h0M369.2 175.7h0M631.2 174.7h0M483.0 171.8h0M694.2 177.9h0M1002.1 176.4h0M322.2 178.6h0M771.5 176.2h0M717.5 174.6h0M586.4 177.6h0M1089.2 172.5h0M548.2 172.7h0M1043.2 175.8h0M240.3 178.0h0M646.2 178.4h0M282.4 176.2h0M1094.8 175.7h0M894.1 176.2h0M396.4 175.2h0M572.5 175.2h0M302.5 177.8h0M1136.9 174.8h0M1145.4 175.7h0M1145.0 178.8h0M829.3 176.3h0M453.7 175.0h0M664.5 177.6h0M894.5 175.4h0M630.9 177.1h0M226.3 174.4h0M740.6 174.8h0M258.9 173.0h0M421.3 178.2h0M1062.1 179.0h0M838.3 178.3h0M1040.0 176.8h0M910.3 176.2h0M886.6 175.3h0M434.7 177.3h0M942.2 176.1h0M301.5 174.4h0M182.5 177.9h0M535.8 178.4h0M335.0 177.2h0M927.7 176.0h0M477.0 175.1h0M200.6 175.8h0M1016.4 177.1h0M1191.9 173.5h0M945.3 175.5h0M1214.2 174.3h0M1024.7 178.9h0M1185.8 173.1h0M903.5 173.0h0M1026.5 174.4h0M1038.2 176.4h0M291.0 174.5h0M514.7 180.6h0M841.5 177.3h0M516.4 172.2h0M1123.5 176.1h0M222.3 176.9h0M303.4 173.9h0M523.4 176.4h0M539.9 176.4h0M1079.3 174.6h0M179.0 175.5h0M1073.2 176.8h0M1233.2 175.5h0M217.1 175.9h0M1210.5 173.8h0M889.5 177.1h0M307.8 175.2h0M1077.8 178.7h0M293.7 181.1h0M585.4 180.0h0M425.2 174.7h0M585.7 177.2h0M322.9 175.6h0M579.7 177.3h0M788.8 174.6h0M673.6 173.6h0M736.7 176.4h0M1146.0 174.3h0M1100.1 178.4h0M286.7 178.1h0M971.7 176.9h0M1039.1 175.6h0M1163.6 175.9h0M595.0 178.3h0M1178.9 176.2h0M775.5 176.3h0M678.5 179.9h0M722.1 176.8h0M616.4 175.0h0M922.2 175.5h0M748.0 179.2h0M1129.3 174.6h0M679.0 174.8h0M220.2 178.5h0M335.0 178.5h0M616.9 178.7h0M681.7 173.9h0M1058.1 176.8h0M812.7 174.9h0M349.1 176.9h0M495.4 172.8h0M752.9 175.8h0M1036.0 178.4h0M942.9 176.9h0M867.5 171.5h0M443.8 178.4h0M790.6 177.3h0M432.7 175.4h0M234.4 176.3h0M997.7 175.8h0M878.3 178.5h0M1250.6 176.1h0M985.2 172.7h0M440.6 174.2h0M193.4 179.2h0M636.3 178.2h0M536.8 178.1h0M730.3 174.9h0M574.8 177.5h0M215.3 178.3h0M237.9 176.6h0M557.3 177.7h0M811.1 178.8h0M355.7 178.4h0M360.1 177.1h0M417.9 176.7h0M979.1 173.5h0M1003.9 176.0h0M699.0 177.8h0M222.5 180.0h0M1197.9 176.6h0M1119.0 178.0h0M494.4 176.3h0M172.1 173.8h0M704.1 177.0h0M347.7 177.0h0M580.9 174.4h0M602.9 174.0h0M505.5 176.7h0M1168.1 175.1h0M591.4 177.4h0M285.9 173.5h0M795.5 178.3h0M1140.5 174.7h0M417.3 176.4h0M721.3 173.1h0M578.5 178.4h0M906.3 176.1h0M506.4 181.1h0M443.4 172.5h0M1220.3 172.7h0M1069.0 177.6h0M936.7 178.4h0M885.0 171.9h0M1190.6 177.3h0M225.4 178.4h0M647.5 179.1h0M848.4 176.1h0M304.3 173.3h0M1258.6 171.8h0M918.1 180.4h0M998.3 177.5h0M1226.2 178.9h0M799.0 175.8h0M1167.7 175.8h0M573.1 175.9h0M1177.2 174.1h0M721.0 175.9h0M1016.1 174.2h0M461.6 175.2h0M686.9 178.3h0M775.0 176.4h0M730.1 175.2h0M1179.2 180.0h0M665.6 178.9h0M1127.0 175.8h0M284.8 172.7h0M394.2 178.6h0M355.9 179.0h0M363.8 174.9h0M807.3 179.6h0M274.6 174.4h0M903.9 175.1h0M1122.1 174.6h0M1178.3 176.6h0M223.6 176.0h0M433.8 179.2h0M648.0 175.2h0M178.5 176.8h0M904.3 175.8h0M663.1 176.6h0M632.5 173.8h0M333.8 176.0h0M238.4 179.5h0M1135.8 177.7h0M821.3 173.4h0M543.8 175.3h0M1131.6 173.6h0M291.1 175.0h0M600.5 174.6h0M243.2 173.7h0M1036.2 177.1h0M1134.5 177.9h0M476.0 176.4h0M1063.4 174.9h0M1210.3 176.9h0M416.1 173.9h0M1225.8 179.1h0M532.2 180.9h0M942.3 172.0h0M753.4 177.2h0M547.2 176.3h0M824.6 176.3h0M162.8 175.4h0M714.9 173.1h0M712.3 176.2h0M860.6 175.1h0M1005.1 176.3h0M1131.5 175.7h0M1045.4 174.8h0M1122.2 180.1h0M575.8 173.6h0M279.0 175.5h0M878.7 173.2h0M212.2 175.6h0M1213.5 180.0h0M693.4 175.8h0M445.0 174.4h0M196.7 172.7h0M1090.7 177.2h0M1080.6 174.5h0M310.0 178.0h0M1012.5 175.1h0M258.6 175.0h0M928.6 176.1h0M749.2 172.8h0M868.3 178.7h0M313.6 174.0h0M1035.3 176.4h0M1028.9 177.3h0M1089.0 180.5h0M605.9 176.9h0M447.7 178.1h0M767.8 175.1h0M931.6 176.0h0M999.8 176.6h0M656.8 178.4h0M832.9 173.5h0M874.0 176.9h0M813.7 180.7h0M952.7 174.3h0M503.2 172.5h0M421.1 174.6h0M480.5 175.7h0M1034.3 179.8h0M1228.8 177.8h0M512.5 179.2h0M882.9 174.3h0M802.5 176.4h0M1131.8 176.4h0M179.0 173.9h0M847.2 176.4h0M1120.1 175.0h0M1224.9 177.3h0M620.9 172.5h0M692.7 171.4h0M1087.0 179.1h0M1191.6 176.3h0M422.4 175.6h0M1140.1 180.5h0M294.6 179.0h0M219.1 177.2h0M198.6 174.2h0M245.2 177.2h0M268.3 176.8h0M420.9 175.2h0M479.5 179.2h0M1229.9 178.4h0M1045.8 177.2h0M276.5 174.6h0M374.9 174.7h0M925.9 178.7h0M823.7 176.5h0M653.4 174.9h0M631.1 176.4h0M983.7 176.5h0M703.5 175.2h0M954.9 176.2h0M175.1 177.6h0M273.0 177.1h0M367.0 174.4h0M814.7 174.7h0M803.0 177.2h0M1119.1 173.4h0M1138.9 176.4h0M1052.1 175.7h0M527.2 173.9h0M227.4 171.8h0M1137.0 174.2h0M1187.1 176.2h0M189.4 175.7h0M166.7 178.8h0M358.2 176.2h0M559.7 176.1h0M939.6 177.4h0M664.8 175.2h0M890.4 179.6h0M1058.5 174.7h0M356.8 174.3h0M503.7 175.5h0M1231.4 179.4h0M758.1 175.1h0M705.2 174.5h0M769.3 177.6h0M765.1 178.9h0M960.4 175.5h0M1120.8 177.1h0M849.7 174.4h0M857.6 179.0h0M799.2 174.2h0M425.7 175.2h0M1003.8 175.7h0M380.7 174.0h0M446.0 176.1h0M536.3 177.9h0M740.4 174.8h0M1063.3 180.1h0M554.9 176.7h0M826.1 176.6h0M641.6 174.1h0M653.9 175.9h0M1226.6 178.7h0M875.7 173.8h0M182.0 174.2h0M1114.0 173.7h0M714.3 173.5h0M1223.4 178.1h0M299.6 174.9h0M1219.0 180.3h0M884.0 173.1h0M846.7 175.0h0M710.2 176.3h0M1227.3 174.5h0M1083.8 171.6h0M739.3 175.1h0M575.6 176.3h0M590.3 174.2h0M688.7 176.4h0M360.4 172.0h0M419.6 176.3h0M890.9 180.2h0M1011.6 178.8h0M1160.6 178.5h0M336.7 175.2h0M502.7 175.6h0M366.0 178.6h0M851.9 175.1h0M494.8 177.7h0M514.9 174.5h0M236.7 177.2h0M1013.8 177.0h0M1188.9 171.6h0M312.7 176.3h0M702.1 177.2h0M1026.9 177.5h0M1119.4 176.4h0M549.4 178.9h0M228.3 176.2h0M1006.1 175.0h0M943.7 178.5h0M598.5 180.5h0M1244.6 175.6h0M951.2 179.8h0M790.4 176.1h0M812.1 172.9h0M250.5 174.3h0M1219.0 174.8h0M1252.3 178.7h0M343.9 176.2h0M1008.8 175.4h0M800.4 176.8h0M596.5 179.2h0M812.8 176.0h0M295.9 175.1h0M548.2 176.9h0M529.6 174.7h0M912.6 176.9h0M743.7 178.7h0M191.5 176.0h0M480.0 175.0h0M585.0 176.6h0M562.3 173.0h0M1028.7 179.7h0M1075.0 180.5h0M1210.3 176.6h0M1198.2 171.7h0M700.5 174.5h0M777.5 173.1h0M826.5 171.7h0M721.0 176.2h0M204.4 175.3h0M284.2 175.1h0M1039.2 178.4h0M991.4 176.5h0M504.5 174.4h0M380.1 177.0h0M788.6 173.7h0M1096.1 175.1h0M223.2 174.4h0M880.2 176.6h0M410.5 174.9h0M444.4 174.9h0M648.3 176.5h0M342.8 177.0h0M982.7 176.8h0M268.3 178.6h0M707.8 173.8h0M898.3 176.5h0M1076.3 179.8h0M771.7 176.3h0M305.4 172.2h0M1052.7 178.0h0M1196.1 175.7h0M195.7 177.0h0M1170.0 176.8h0M846.8 177.1h0M820.4 178.7h0M590.0 176.5h0M341.7 177.7h0M823.6 173.0h0M1137.0 173.9h0M189.1 175.3h0M773.5 179.7h0M864.4 174.2h0M1174.5 175.4h0M179.1 177.2h0M569.5 175.1h0M302.2 173.8h0M504.8 172.2h0M1161.5 178.0h0M360.8 173.6h0M557.9 176.9h0M1067.3 177.1h0M987.7 174.1h0M1172.1 177.2h0M298.9 172.2h0M241.6 176.1h0M406.8 173.2h0M707.1 176.6h0M910.9 176.1h0M291.8 177.0h0M853.7 177.2h0M407.1 174.1h0M1222.3 173.5h0M774.4 173.5h0M316.3 178.6h0M1079.4 173.8h0M706.3 175.3h0M1010.3 177.4h0M759.5 175.8h0M1136.8 173.7h0M472.3 171.5h0M1230.2 178.7h0M182.3 174.4h0M577.6 172.7h0M335.7 174.5h0M1249.7 176.3h0M184.0 171.3h0M480.0 176.3h0M590.0 176.2h0M245.5 177.3h0M1173.4 176.2h0M1011.2 174.4h0M755.0 172.6h0M609.8 175.3h0M376.3 174.9h0M344.0 179.3h0M609.8 175.1h0M837.8 176.5h0M1102.4 175.8h0M430.3 172.0h0M1112.4 177.2h0M890.9 174.7h0M337.9 172.7h0M197.4 176.4h0M189.6 178.2h0M1224.0 176.4h0M432.8 175.3h0M235.2 174.9h0M888.1 174.8h0M466.0 178.4h0M1201.6 176.4h0M893.3 176.6h0M1139.0 177.2h0M879.0 171.4h0M968.8 176.5h0M670.2 177.2h0M630.1 176.0h0M1022.8 173.1h0M363.5 174.4h0M235.0 177.8h0M1165.7 177.1h0M584.6 177.2h0M778.0 173.8h0M597.2 176.6h0M981.9 179.3h0M1017.8 176.6h0M364.5 179.0h0M1012.9 178.5h0M512.1 178.4h0M789.4 174.9h0M694.5 174.3h0M1094.1 174.4h0M622.4 178.0h0M1071.3 178.7h0M1198.6 173.9h0M795.6 173.6h0M1060.7 176.1h0M1139.2 178.8h0M414.1 176.1h0M659.4 177.4h0M1154.9 177.3h0M1000.1 177.8h0M1094.8 175.5h0M825.6 176.8h0M580.2 177.8h0M1028.8 176.0h0M542.6 179.8h0M803.3 174.0h0M394.5 174.8h0M603.7 174.0h0M656.5 178.3h0M287.8 178.9h0M274.4 174.5h0M1137.5 176.0h0M1248.0 175.2h0M340.6 172.9h0M565.5 174.4h0M904.7 176.3h0M320.0 177.5h0M236.0 174.7h0M1160.2 176.2h0M473.1 177.7h0M1215.0 179.6h0M735.6 177.3h0M808.9 174.5h0M757.1 172.7h0M721.0 176.6h0M458.0 175.4h0M852.2 174.5h0M646.8 174.4h0M1096.9 174.6h0M481.1 176.3h0M374.6 177.5h0M1110.3 173.7h0M752.5 180.3h0M414.8 178.6h0M1018.8 176.0h0M478.1 176.6h0M954.3 179.7h0M884.6 173.8h0M484.2 174.7h0M869.5 174.6h0M700.9 173.7h0M195.1 177.1h0M1239.4 176.0h0M449.7 176.4h0M585.4 176.5h0M1131.9 175.3h0M922.3 179.3h0M349.6 175.6h0M868.8 174.1h0M186.4 172.6h0M986.9 174.8h0M828.3 176.1h0M891.9 176.0h0M787.5 177.1h0M552.3 175.2h0M884.4 176.8h0M668.8 176.9h0M987.0 173.7h0M201.1 176.5h0M454.6 177.0h0M334.4 175.4h0M725.6 179.0h0M846.3 175.8h0M404.6 173.9h0M1204.2 178.4h0M570.5 180.1h0M177.9 173.2h0M962.2 176.1h0M285.7 178.4h0M178.6 177.0h0M480.9 178.2h0M678.9 178.7h0M427.6 171.9h0M526.5 178.1h0M307.3 173.1h0M555.4 174.0h0M1038.9 173.6h0M505.0 177.6h0M803.0 172.8h0M393.9 175.9h0M299.7 173.4h0M512.6 181.0h0M199.1 174.4h0M683.9 175.7h0M938.9 173.8h0M626.7 174.3h0M410.9 178.4h0M519.8 177.2h0M1064.7 173.4h0M428.0 174.7h0M527.5 176.2h0M918.8 179.7h0M436.9 175.8h0M1186.2 177.0h0M352.8 178.3h0M189.5 180.1h0M632.5 177.0h0M757.4 173.9h0M789.4 174.3h0M518.7 180.4h0M1021.7 177.3h0M1092.7 171.7h0M699.4 174.8h0M1065.2 174.9h0M1048.4 175.1h0M359.1 177.5h0M317.0 177.9h0M307.9 179.5h0M257.3 172.0h0M1017.9 177.2h0M582.8 175.9h0M318.3 174.0h0M767.0 178.0h0M488.8 173.2h0M214.9 172.9h0M619.0 179.1h0M1072.1 176.9h0M938.6 178.2h0M1247.7 179.1h0M684.9 173.0h0M1223.0 179.7h0M583.6 176.5h0M701.6 177.1h0M983.8 178.0h0M667.3 177.4h0M346.4 175.1h0M944.4 176.4h0M1171.2 176.5h0M554.9 178.4h0M620.4 171.0h0M502.7 179.6h0M920.8 173.9h0M704.6 180.6h0M415.6 176.6h0M1151.7 180.1h0M178.2 175.2h0M1081.7 179.9h0M1113.9 176.5h0M266.5 177.1h0M181.1 176.7h0M874.6 171.5h0M804.8 173.2h0M352.5 172.5h0M639.0 176.0h0M268.4 175.7h0M618.0 177.4h0M740.7 177.3h0M1147.5 178.9h0M575.4 174.8h0M337.1 176.7h0M1209.9 175.4h0M864.0 173.4h0M310.9 172.7h0M228.6 176.1h0M582.0 174.3h0M429.3 174.7h0M566.5 174.1h0M461.7 173.6h0M1167.2 180.7h0M1056.5 175.9h0M900.9 172.7h0M261.5 175.7h0M1033.9 176.1h0M600.2 172.7h0M1118.9 177.8h0M218.9 174.0h0M323.3 177.4h0M305.6 175.6h0M1060.8 174.0h0M1212.6 181.1h0M983.9 174.8h0M501.7 173.0h0M219.4 174.9h0M1223.8 174.4h0M350.5 178.3h0M1054.9 176.7h0M681.7 173.1h0M535.5 180.2h0M614.1 175.0h0M247.6 173.3h0M291.0 178.9h0M1117.2 176.9h0M661.1 173.7h0M902.5 173.0h0M528.7 176.1h0M693.5 174.2h0M1037.3 177.1h0M873.5 176.5h0M601.4 173.2h0M670.2 173.4h0M1248.5 175.6h0M198.1 178.4h0M604.8 174.3h0M305.9 177.9h0M277.9 174.8h0M221.2 177.0h0M1005.3 175.2h0M665.8 176.8h0M767.0 174.1h0M494.6 174.5h0M597.0 180.3h0M660.0 178.0h0M1075.1 173.1h0M262.8 178.6h0M360.2 175.6h0M349.3 178.8h0M675.1 172.8h0M688.0 175.4h0M911.5 174.6h0M1250.7 174.5h0M1172.2 173.4h0M426.9 180.0h0M611.5 175.5h0M746.8 175.6h0M1033.4 172.3h0M726.0 179.0h0M338.2 178.3h0M217.6 175.6h0M536.8 173.1h0M830.6 176.9h0M360.6 176.0h0M663.1 172.7h0M584.8 180.8h0M1219.8 178.2h0M932.9 174.0h0M1236.6 174.6h0M733.8 178.3h0M703.6 178.6h0M1238.6 177.7h0M611.3 176.8h0M771.7 175.3h0M188.9 180.1h0M348.6 175.3h0M478.3 176.4h0M432.2 176.8h0M639.8 175.1h0M1141.4 177.7h0M393.2 179.2h0M214.8 171.5h0M781.9 175.9h0M562.8 179.0h0M213.8 179.1h0M999.3 175.5h0M1195.0 177.7h0M983.1 176.7h0M1042.9 176.2h0M997.4 175.1h0M1240.0 178.7h0M316.2 179.1h0M1128.2 179.2h0M934.9 177.0h0M1208.0 176.8h0M1095.2 178.4h0M770.5 180.7h0M887.0 175.3h0M433.4 175.8h0M530.8 180.5h0M327.0 173.7h0M606.2 171.3h0M1072.3 178.3h0M538.3 179.5h0M1133.3 178.8h0M377.9 178.4h0M874.7 178.5h0M420.3 174.2h0M863.4 178.4h0M1028.3 174.1h0M1129.6 172.3h0M1001.6 176.2h0M319.0 173.6h0M917.1 173.5h0M486.4 174.7h0M719.8 175.6h0M318.1 176.8h0M649.3 173.7h0M887.4 174.5h0M288.4 176.2h0M810.9 176.6h0M1137.1 177.0h0M742.4 178.3h0M522.1 177.2h0M389.8 176.8h0M673.2 177.5h0M596.9 176.1h0M926.4 176.6h0M977.9 174.2h0M930.7 176.8h0M997.2 178.7h0M1032.4 174.7h0M961.3 179.3h0M438.0 175.0h0M798.4 178.9h0M593.2 180.0h0M247.5 176.8h0M855.4 175.0h0M318.7 177.4h0M917.4 175.0h0M754.4 174.3h0M241.0 178.7h0M626.3 171.3h0M764.4 178.2h0M436.8 174.4h0M1187.5 178.2h0M1209.3 175.4h0M276.9 180.4h0M952.5 175.3h0M633.3 171.1h0M1080.1 180.6h0M1194.1 176.2h0M713.6 176.1h0M860.7 175.9h0M566.7 175.5h0M895.4 176.3h0M1253.4 174.4h0M528.5 181.0h0M195.1 174.0h0M1231.6 178.1h0M192.4 178.6h0M919.6 175.5h0M801.0 178.4h0M607.3 174.6h0M1186.0 173.9h0M294.8 174.9h0M425.4 178.2h0M1075.3 178.4h0M170.2 173.9h0M451.8 178.5h0M348.8 174.0h0M625.7 176.0h0M973.3 177.8h0M1211.3 172.0h0M431.4 177.3h0M176.9 175.1h0M979.5 172.9h0M1164.0 177.8h0M178.6 176.4h0M838.5 176.4h0M816.2 175.5h0M773.7 174.7h0M852.7 172.9h0M469.5 175.4h0M1147.0 173.8h0M406.1 174.5h0M1203.3 177.2h0M1210.3 178.3h0M1077.9 177.0h0M588.4 176.9h0M1205.4 175.7h0M398.9 177.7h0M703.7 178.6h0M718.3 175.3h0M316.6 175.4h0M1248.4 174.0h0M361.6 175.4h0M690.5 174.8h0M257.1 180.5h0M471.8 179.0h0M1076.6 173.0h0M910.4 177.4h0M564.0 175.6h0M877.4 172.0h0M350.1 176.5h0M889.2 174.2h0M1142.2 176.7h0M178.0 176.9h0M492.6 174.7h0M445.2 179.5h0M259.6 176.4h0M1170.1 174.4h0M921.1 172.3h0M839.8 180.2h0M836.7 173.8h0M903.1 175.7h0M476.4 176.5h0M383.9 177.9h0M247.2 173.2h0M333.5 171.5h0M381.1 176.2h0M1040.0 172.6h0M517.2 176.0h0M588.3 180.8h0M976.7 174.8h0M1228.8 178.1h0M276.7 173.7h0M808.7 180.8h0M622.3 174.6h0M362.3 176.9h0M536.5 175.9h0M1024.4 175.0h0M458.1 178.4h0M779.2 175.7h0M664.2 173.9h0M182.5 174.4h0M1109.1 174.8h0M1111.3 175.6h0M1082.4 176.2h0M641.4 173.9h0M635.1 174.4h0M903.7 180.1h0M1248.5 175.5h0M711.8 179.1h0M490.6 175.0h0M685.3 176.4h0M792.2 174.9h0M855.7 171.4h0M1197.3 174.8h0M799.2 178.2h0M1067.5 178.6h0M682.4 178.0h0M661.3 174.6h0M1160.5 175.3h0M475.8 173.2h0M495.4 176.7h0M764.6 177.8h0M285.2 176.7h0M344.1 174.0h0M731.2 177.3h0M867.7 176.0h0M1241.2 177.2h0M286.8 175.8h0M209.0 176.0h0M920.3 174.1h0M1148.9 174.1h0M263.7 171.6h0M490.1 176.4h0M912.5 175.9h0M868.3 173.6h0M1119.9 178.8h0M892.0 178.2h0M1206.1 180.0h0M485.4 175.6h0M983.2 175.5h0M811.6 176.8h0M595.7 178.0h0M956.0 179.6h0M1093.5 173.6h0M800.6 175.9h0M950.7 171.9h0M616.2 174.9h0M1109.6 177.5h0M585.9 177.7h0M849.2 180.3h0M818.6 177.4h0M727.7 175.5h0M1173.4 174.3h0M937.2 176.9h0M811.4 179.8h0M947.8 173.5h0M943.0 174.2h0M527.0 176.6h0M510.9 175.8h0M833.7 177.5h0M316.2 175.3h0M1055.1 175.8h0M1009.2 176.5h0M868.5 176.4h0M529.1 179.5h0M1240.0 173.4h0M979.5 172.2h0M1111.0 172.1h0M954.6 175.6h0M777.5 176.5h0M474.6 177.0h0M361.3 176.7h0M1061.5 176.1h0M846.8 171.6h0M423.0 174.1h0M392.4 176.6h0M698.5 173.0h0M861.5 174.7h0M1001.4 175.5h0M691.2 176.8h0M438.0 174.0h0M908.0 171.8h0M305.2 175.7h0M351.7 175.2h0M571.9 178.0h0M781.4 174.9h0M183.4 175.0h0M311.6 175.3h0M941.8 175.2h0M615.1 180.1h0M654.7 171.5h0M681.9 177.0h0M355.3 174.1h0M1224.9 176.7h0M1178.9 172.5h0M860.9 176.3h0M263.5 174.2h0M919.1 177.0h0M1053.0 178.7h0M531.4 173.5h0M328.4 172.4h0M962.5 178.7h0M862.0 180.2h0M594.7 176.0h0M487.5 171.6h0M1185.1 172.4h0M258.3 178.1h0M504.0 180.4h0M690.1 175.4h0M811.3 173.1h0M444.2 178.6h0M816.7 172.9h0M286.3 174.8h0M747.8 174.8h0M256.1 174.6h0M591.9 177.3h0M946.9 174.2h0M382.4 176.2h0M330.1 178.4h0M1225.4 179.0h0M634.7 178.5h0M225.7 175.3h0M630.8 171.6h0M462.3 176.4h0M1062.8 176.3h0M1130.5 176.2h0M1001.4 175.6h0M904.4 176.5h0M791.1 174.1h0M226.2 178.0h0M879.0 179.8h0M588.8 176.5h0M472.8 176.0h0M784.5 177.7h0M429.0 177.0h0M1249.5 177.4h0M820.8 176.3h0M986.9 175.6h0M282.1 179.8h0M202.8 172.9h0M352.2 178.4h0M365.4 174.1h0M768.5 177.2h0M884.6 173.6h0M1148.6 172.6h0M267.4 173.7h0M710.3 173.9h0M888.6 178.6h0M620.8 174.1h0M241.9 174.6h0M268.8 173.8h0M172.4 175.7h0M516.1 176.5h0M339.3 177.1h0M1207.8 174.8h0M856.9 173.1h0M270.3 175.9h0M895.2 177.5h0M717.9 178.0h0M1076.8 173.7h0M369.9 174.9h0M544.4 176.8h0M700.7 174.5h0M725.8 173.3h0M320.2 176.6h0M1076.8 175.1h0M336.3 176.5h0M672.1 177.7h0M788.9 175.2h0M645.2 173.2h0M537.4 174.5h0M957.6 178.0h0M739.7 176.6h0M915.0 177.4h0M1001.9 175.7h0M1179.8 177.6h0M705.0 174.9h0M622.1 174.0h0M1175.0 176.0h0M1225.5 176.3h0M1123.6 174.9h0M386.6 175.9h0M1162.7 178.3h0M874.5 174.4h0M737.6 172.5h0M307.1 177.4h0M341.2 180.0h0M1116.1 177.7h0M480.4 173.2h0M684.4 176.7h0M633.5 178.0h0M586.8 178.2h0M631.0 179.5h0M471.0 177.8h0M1153.0 171.8h0M728.9 177.8h0M485.9 174.3h0M396.4 173.5h0M1044.9 171.9h0M1031.4 173.2h0M1066.7 175.0h0M818.1 178.3h0M526.2 179.0h0M395.8 177.0h0M573.2 178.9h0M261.3 175.1h0M465.9 174.0h0M545.1 180.3h0M289.9 177.5h0M329.8 175.2h0M294.3 178.2h0M590.8 174.5h0M1182.7 179.5h0M1218.4 173.6h0M276.3 175.0h0M817.9 175.5h0M168.5 175.4h0M896.3 172.7h0M851.7 177.6h0M727.4 177.9h0M468.7 176.0h0M674.5 177.1h0M205.2 174.6h0M883.9 177.9h0M1019.1 175.2h0M256.7 173.7h0M1262.4 175.5h0M357.7 175.5h0M1170.6 176.9h0M1240.2 177.9h0M629.4 179.3h0M1088.3 173.0h0M781.0 172.7h0M462.6 176.6h0M918.9 178.8h0M557.7 178.4h0M331.2 175.8h0M1012.0 176.1h0M372.1 175.5h0M1191.1 180.0h0M381.2 175.5h0M518.1 177.4h0M1044.9 173.1h0M1083.1 178.1h0M604.7 175.6h0M833.5 175.1h0M1201.7 175.6h0M482.8 175.7h0M457.9 180.6h0M277.8 177.7h0M920.9 177.5h0M923.3 174.4h0M297.6 173.6h0M954.9 171.9h0M479.6 174.7h0M725.4 177.0h0M781.0 176.9h0M804.8 173.2h0M770.6 177.7h0M602.2 174.7h0M933.8 178.9h0M394.1 175.2h0M1119.9 175.7h0M589.6 174.7h0M1013.5 175.1h0M832.3 175.8h0M659.7 177.4h0M686.3 177.4h0M740.6 175.0h0M623.3 172.8h0M780.7 177.4h0M687.1 178.7h0M1091.2 174.9h0M450.3 175.3h0M991.1 175.5h0M615.6 176.4h0M1100.1 177.9h0M1074.1 174.0h0M245.2 177.3h0M1183.4 179.3h0M1056.9 177.2h0M884.4 174.2h0M373.8 173.0h0M1079.0 176.2h0M813.7 179.2h0M417.7 177.4h0M866.9 179.3h0M294.6 175.9h0M932.3 176.5h0M374.8 174.4h0M499.2 177.7h0M187.8 175.2h0M573.6 174.7h0M830.2 175.0h0M885.0 177.2h0M620.6 177.6h0M470.8 177.8h0M267.3 180.6h0M554.6 177.9h0M1023.2 174.5h0M1190.0 178.6h0M1176.2 174.4h0M255.3 173.9h0M303.2 178.4h0M567.7 175.1h0M777.9 176.5h0M217.8 175.1h0M261.1 175.9h0M1070.8 172.4h0M1259.7 178.2h0M644.9 178.7h0M1035.3 175.7h0M936.0 179.3h0M1008.9 178.7h0M625.9 178.4h0M1185.5 179.5h0M298.3 174.2h0M455.6 178.1h0M862.4 175.8h0M437.3 177.9h0M1086.0 175.7h0M1067.1 180.5h0M1031.2 180.1h0M1129.4 175.9h0M862.3 177.2h0M363.2 176.9h0M524.6 177.4h0M167.2 178.2h0M597.9 174.2h0M862.6 173.1h0M929.6 178.9h0M949.1 177.4h0M448.3 175.4h0M1179.4 174.8h0M762.0 173.2h0M390.9 175.4h0M1194.0 172.6h0M902.8 176.2h0M914.2 176.6h0M831.4 174.4h0M164.0 178.4h0M769.9 178.1h0M957.2 177.0h0M895.5 174.2h0M399.5 174.3h0M685.2 173.9h0M959.3 172.2h0M1155.5 176.4h0M415.5 177.3h0M793.1 173.3h0M238.3 177.2h0M355.8 175.6h0M580.1 176.7h0M181.2 177.3h0M552.7 178.2h0M1121.2 174.1h0M495.3 178.0h0M328.6 175.2h0M277.3 171.8h0M770.5 180.7h0M605.5 176.0h0M851.9 175.1h0M605.1 178.9h0M742.8 177.5h0M608.7 174.6h0M480.0 176.5h0M173.7 176.6h0M473.9 175.6h0M979.5 171.7h0M542.3 176.6h0M1012.5 174.6h0M208.5 173.5h0M936.9 176.5h0M1071.2 180.5h0M430.8 173.3h0M580.1 177.0h0M453.2 172.9h0M642.5 172.3h0M1174.5 175.4h0M929.8 178.3h0M277.4 176.9h0M1259.9 176.7h0M911.0 178.4h0M1058.5 176.9h0M1087.1 174.7h0M1174.8 174.0h0M1017.5 175.9h0M459.3 176.9h0M984.9 175.6h0M898.5 175.1h0M621.9 174.3h0M1120.4 173.8h0M175.5 173.1h0M718.2 174.7h0M1136.3 179.8h0M748.2 178.8h0M583.1 179.4h0M281.5 176.7h0M371.6 175.9h0M454.1 178.0h0M1256.0 175.2h0M766.3 178.7h0M500.9 176.8h0M1139.0 177.7h0M835.0 174.0h0M486.9 180.1h0M882.9 176.3h0M190.7 177.0h0M737.2 174.9h0M741.9 175.0h0M237.9 177.9h0M889.5 172.1h0M188.1 178.3h0M376.2 174.8h0M978.6 178.3h0M604.7 174.4h0M956.1 176.3h0M756.0 176.5h0M673.4 178.0h0M814.9 174.3h0M184.8 176.9h0M165.9 176.6h0M1195.2 177.9h0M922.3 174.2h0M364.7 176.2h0M925.7 174.5h0M1181.9 175.3h0M1084.0 178.4h0M868.9 178.6h0M740.6 174.5h0M847.9 175.4h0M363.3 176.0h0M653.6 173.9h0M1126.8 174.8h0M562.2 173.8h0M457.2 177.4h0M735.8 174.5h0M1057.3 179.0h0M1133.5 171.5h0M1262.1 177.3h0M1224.2 178.0h0M281.3 174.9h0M664.3 172.3h0M770.6 176.6h0M908.8 173.0h0M285.1 178.9h0M563.4 176.4h0M576.8 176.3h0M831.3 175.9h0M568.9 177.9h0M509.8 176.6h0M367.5 177.3h0M892.3 176.5h0M502.6 175.4h0M387.9 178.3h0M1165.9 179.8h0M586.0 178.7h0M477.3 176.2h0M262.1 177.6h0M734.6 174.2h0M538.2 174.5h0M806.5 174.4h0M504.9 175.3h0M679.1 177.6h0M303.7 174.8h0M230.9 174.9h0M1189.9 172.7h0M971.1 174.6h0M624.6 171.8h0M381.8 177.9h0M892.9 175.3h0M826.3 177.8h0M846.0 178.7h0M1238.9 177.5h0M551.0 176.8h0M1184.5 176.3h0M639.7 174.8h0M1236.1 172.1h0M1233.1 177.0h0M619.6 174.0h0M711.7 174.0h0M1147.8 174.9h0M1145.3 176.0h0M267.6 177.6h0M718.4 174.2h0M270.6 173.4h0M1094.6 178.2h0M459.8 177.3h0M525.1 178.3h0M514.5 176.0h0M953.8 173.3h0M518.9 179.5h0M648.0 178.6h0M1124.4 174.2h0M647.2 176.8h0M1172.9 178.5h0M1172.1 180.7h0M662.7 178.6h0M417.8 176.8h0M1195.7 175.7h0M776.7 175.3h0M553.6 176.0h0M227.8 174.8h0M673.3 177.3h0M200.5 175.9h0M852.8 175.3h0M597.1 173.9h0M483.4 176.3h0M404.3 174.8h0M995.8 177.4h0M1152.5 174.2h0M172.0 177.4h0M745.7 176.2h0M248.5 180.5h0M201.3 174.0h0M1244.9 180.7h0M507.4 181.1h0M750.1 176.3h0M1156.7 180.8h0M869.6 178.6h0M547.2 173.6h0M935.5 175.3h0M1024.5 178.7h0M873.3 176.8h0M588.2 178.3h0M994.4 177.6h0M573.6 179.7h0M561.2 175.8h0M472.3 173.8h0M1234.8 175.3h0M294.1 176.8h0M220.6 174.3h0M484.3 176.2h0M298.5 176.4h0M565.8 175.7h0M1195.9 176.2h0M1206.1 175.7h0M413.6 177.9h0M487.9 176.5h0M605.3 177.7h0M1208.1 173.5h0M454.3 176.4h0M1002.1 175.7h0M866.2 171.9h0M1130.8 180.2h0M467.3 173.3h0M1184.1 178.0h0M1259.7 177.8h0M598.8 178.7h0M1192.6 175.3h0M968.6 171.7h0M410.9 177.0h0M648.8 175.9h0M438.8 177.7h0M1156.6 176.1h0M415.4 178.6h0M1128.9 177.0h0M467.4 175.4h0M1144.4 180.6h0M1035.6 174.9h0M969.2 171.7h0M458.3 176.6h0M951.6 177.7h0M852.6 177.2h0M545.2 175.2h0M1248.4 176.4h0M1215.8 175.0h0M881.7 175.2h0M1161.9 177.9h0M530.6 175.5h0M349.6 177.7h0M531.3 176.1h0M788.3 176.9h0M1155.4 175.8h0M1086.1 178.7h0M427.8 176.3h0M1063.4 174.4h0M1136.7 176.4h0M805.0 179.2h0M707.8 176.9h0M679.9 173.7h0M379.8 174.6h0M446.2 174.1h0M720.4 179.6h0M726.5 177.2h0M747.0 178.5h0M654.4 178.0h0M1097.9 175.2h0M346.8 178.5h0M358.5 176.0h0M1188.6 176.9h0M807.2 172.1h0M842.6 175.6h0M681.9 175.0h0M633.9 174.1h0M548.4 176.7h0M750.1 173.6h0M1072.9 175.5h0M211.1 171.4h0M1199.9 175.8h0M371.5 174.7h0M701.2 179.8h0M1073.4 176.5h0M308.7 177.9h0M878.8 171.4h0M829.6 174.8h0M772.6 173.7h0M1076.5 178.9h0M305.5 178.8h0M405.0 175.8h0M1166.3 176.6h0M1207.7 176.7h0M299.2 176.5h0M900.7 177.0h0M270.2 177.4h0M1191.2 175.7h0M1201.3 174.7h0M923.3 179.6h0M690.7 174.8h0M879.9 174.3h0M779.1 180.8h0M1070.7 176.2h0M1079.9 175.7h0M1110.6 172.6h0M1085.4 173.8h0M405.8 178.5h0M389.1 175.1h0M930.0 178.8h0M769.4 173.9h0M1228.6 178.5h0M224.4 176.6h0M607.3 175.0h0M1117.7 171.8h0M656.8 179.1h0M310.1 177.0h0M522.7 176.7h0M1221.7 178.8h0M1011.8 174.6h0M1086.6 179.3h0M449.1 178.1h0M1045.9 177.3h0M168.3 177.5h0M404.1 174.3h0M851.4 175.7h0M887.4 177.0h0M664.1 175.1h0M1218.2 179.9h0M569.6 178.3h0M462.1 179.4h0M387.1 172.8h0M984.8 179.9h0M1061.3 175.0h0M1070.4 174.6h0M847.4 175.3h0M200.9 179.0h0M618.7 176.8h0M346.6 177.1h0M474.2 178.5h0M192.9 178.2h0M926.7 178.9h0M437.9 178.4h0M782.0 177.3h0M1221.6 178.1h0M422.0 173.0h0M477.3 175.9h0M444.8 171.7h0M235.4 176.4h0M787.1 176.9h0M770.3 174.8h0M822.0 175.0h0M1222.5 179.2h0M797.3 175.9h0M834.1 175.9h0M1142.9 180.4h0M1125.1 176.5h0M739.2 178.8h0M829.5 176.9h0M566.7 177.6h0M710.6 178.9h0M694.4 175.5h0M746.5 178.2h0M421.9 174.8h0M824.0 175.1h0M475.0 177.5h0M504.5 175.4h0M500.1 172.0h0M1026.5 176.0h0M239.8 179.3h0M1258.1 173.9h0M344.2 177.3h0M843.5 175.0h0M418.2 172.4h0M916.4 175.2h0M1105.5 171.1h0M640.2 178.4h0M678.7 175.0h0M1245.5 177.2h0M811.3 176.2h0M565.6 173.0h0M415.7 174.7h0M1097.2 178.4h0M932.3 178.1h0M505.3 175.8h0M719.8 174.9h0M313.9 176.3h0M1018.0 173.7h0M1153.3 176.8h0M963.7 172.7h0M946.2 174.8h0M305.8 178.5h0M1165.5 176.2h0M817.8 174.6h0M1149.1 176.5h0M984.1 175.7h0M1140.6 176.5h0M1052.3 178.1h0M967.4 176.0h0M822.7 172.2h0M469.7 176.9h0M439.0 174.3h0M1170.1 178.7h0M1040.6 178.1h0M440.4 176.1h0M277.3 177.3h0M1127.4 172.4h0M177.4 172.0h0M849.6 175.0h0M941.5 177.2h0M630.5 178.5h0M1168.6 174.8h0M873.9 174.0h0M1255.3 174.2h0M923.2 174.4h0M776.6 176.7h0M251.0 173.1h0M1132.8 177.4h0M291.7 173.7h0M466.1 180.5h0M876.5 175.7h0M915.7 176.0h0M1181.6 172.5h0M1204.0 177.0h0M1177.0 172.0h0M1032.3 178.0h0M583.0 174.9h0M959.4 176.9h0M333.8 177.1h0M519.7 178.7h0M1259.5 178.9h0M866.6 178.4h0M1185.0 177.7h0M345.3 174.6h0M821.8 173.4h0M364.9 177.8h0M940.5 177.2h0M1183.1 174.9h0M643.1 175.7h0M181.8 177.7h0M528.8 178.5h0M258.0 174.8h0M666.1 173.2h0M1045.2 171.7h0M1243.2 175.4h0M468.7 175.3h0M326.8 173.3h0M214.5 178.3h0M501.3 180.6h0M446.5 174.5h0M390.8 177.4h0M1136.4 175.6h0M477.3 177.2h0M337.3 176.3h0M328.7 175.9h0M961.1 178.4h0M636.3 177.2h0M589.8 175.4h0M938.3 177.5h0M858.0 174.6h0M671.1 175.9h0M844.8 177.0h0M502.0 177.5h0M638.1 172.4h0M906.6 176.9h0M186.5 173.0h0M611.9 176.2h0M583.1 177.9h0M518.3 173.5h0M714.2 174.0h0M921.2 177.8h0M976.1 176.9h0M1010.8 172.2h0M845.3 177.8h0M179.6 174.4h0M434.2 173.5h0M897.8 176.2h0M291.7 175.3h0M801.1 176.6h0M179.4 176.3h0M1086.2 180.5h0M346.5 178.0h0M641.1 176.4h0M295.5 176.9h0M357.0 176.8h0M681.1 176.9h0M736.7 175.2h0M1113.4 176.7h0M390.9 174.3h0M1133.6 174.6h0M423.5 175.6h0M596.3 178.3h0M1218.4 178.5h0M728.5 172.1h0M442.8 178.8h0M661.2 176.2h0M1068.1 176.2h0M1121.0 178.7h0M286.7 175.0h0M730.1 174.4h0M575.8 172.0h0M254.2 173.6h0M646.3 177.7h0M487.2 174.3h0M975.6 173.9h0M180.4 176.5h0M660.9 173.8h0M541.8 174.6h0M625.9 173.8h0M639.7 176.6h0M1240.1 174.9h0M917.3 174.7h0M585.6 175.9h0M533.8 172.4h0M643.6 175.3h0M1190.8 172.1h0M819.5 173.3h0M1212.5 175.5h0M388.7 176.0h0M736.1 176.0h0M956.6 178.6h0M1071.0 176.2h0M276.8 177.4h0M609.4 174.6h0M1122.8 174.1h0M838.1 179.2h0M318.7 172.7h0M625.5 178.0h0M715.0 174.6h0M164.6 177.3h0M626.0 172.7h0M684.6 176.8h0M1222.4 177.3h0M732.8 172.1h0M742.8 175.0h0M246.7 177.6h0M203.7 177.8h0M668.9 176.5h0M856.7 174.6h0M402.6 175.3h0M793.7 173.6h0M267.5 173.9h0M464.2 176.4h0M736.8 176.5h0M500.8 177.9h0M652.2 176.3h0M947.1 177.6h0M359.0 175.8h0M884.4 177.1h0M1221.0 181.2h0M1070.8 173.8h0M575.6 176.5h0M865.8 174.9h0M286.8 177.5h0M957.1 177.3h0M986.1 174.5h0M405.9 175.8h0M580.8 176.7h0M828.3 175.5h0M887.0 176.4h0M845.4 178.7h0M986.8 177.6h0M1099.0 175.2h0M679.5 176.3h0M179.1 180.0h0M1050.1 174.5h0M282.9 178.8h0M746.1 175.0h0M948.2 173.0h0M1051.3 174.3h0M746.5 177.2h0M859.4 175.4h0M1224.4 175.2h0M1010.5 174.9h0M475.4 173.9h0M1191.7 173.8h0M909.1 174.4h0M495.2 171.8h0M466.4 176.9h0M650.2 176.6h0M723.5 176.8h0M1092.8 177.9h0M665.3 174.7h0M945.5 176.4h0M531.4 172.0h0M678.9 176.2h0M519.5 175.8h0M594.3 177.4h0M932.4 178.1h0M417.6 175.2h0M701.4 173.2h0M979.4 176.9h0M173.7 177.6h0M612.6 177.6h0M1013.2 175.4h0M885.2 173.8h0M1059.7 175.2h0M445.5 173.9h0M839.0 171.2h0M501.8 177.2h0M255.4 177.0h0M1027.9 177.7h0M491.5 174.3h0M969.4 176.1h0M1011.5 173.9h0M1049.8 172.6h0M481.8 177.0h0M1045.2 171.8h0M431.5 175.1h0M894.3 180.2h0M172.0 178.4h0M1027.2 177.7h0M231.9 177.6h0M953.3 175.9h0M859.0 174.6h0M231.5 180.6h0M804.4 175.9h0M940.1 175.1h0M1051.7 177.2h0M1243.0 176.2h0M426.5 178.6h0M631.3 174.2h0M566.3 174.4h0M891.6 174.8h0M371.6 179.6h0M778.6 178.3h0M425.0 176.3h0M391.6 175.9h0M992.9 177.1h0M766.3 174.1h0M1019.6 177.6h0M892.1 174.6h0M1099.1 176.3h0M686.8 175.8h0M176.4 176.4h0M1263.2 175.0h0M415.3 177.6h0M1069.3 176.8h0M381.9 174.3h0M724.7 177.5h0M480.3 175.3h0M885.8 176.6h0M249.8 178.1h0M241.9 175.3h0M670.7 175.9h0M1097.2 176.0h0M675.6 176.0h0M292.4 181.0h0M1255.8 176.8h0M278.9 173.9h0M504.1 176.8h0M785.4 175.3h0M459.1 180.6h0M932.4 175.0h0M624.1 173.2h0M1037.5 177.6h0M253.3 175.1h0M1068.0 175.2h0M1156.5 175.8h0M442.2 174.7h0M424.0 174.9h0M1133.7 171.3h0M618.0 175.4h0M600.5 177.4h0M806.0 180.4h0M766.9 176.4h0M1057.4 177.7h0M899.9 174.1h0M939.4 179.6h0M636.4 180.2h0M728.1 177.4h0M1103.8 175.0h0M1116.6 175.7h0M835.8 179.1h0M813.3 173.6h0M496.3 179.2h0M691.3 173.7h0M378.5 174.4h0M697.3 176.5h0M228.5 177.8h0M446.3 178.3h0M1271.0 185.6h0M1295.8 187.5h0M1272.6 184.7h0M1274.6 183.9h0M1280.4 185.6h0M1275.7 181.4h0M1272.9 183.4h0M1263.9 183.2h0M1287.4 184.2h0M1287.9 182.6h0M1280.4 186.2h0M1281.5 184.3h0M1276.9 185.0h0M1299.4 184.8h0M1269.0 184.3h0M1267.5 183.8h0M1301.3 186.9h0M1273.4 186.2h0M1275.3 187.2h0M1278.0 184.6h0M1292.5 185.3h0M1292.6 185.4h0M1298.9 184.3h0M1270.4 184.8h0M1295.7 182.2h0M1263.4 182.9h0M1301.4 183.3h0M1295.4 183.0h0M1298.7 185.5h0M1277.5 185.4h0M1272.7 185.5h0M1273.8 184.4h0M1273.9 186.4h0M1293.0 186.3h0M1281.9 185.7h0M1298.9 184.3h0M1275.0 187.3h0M1262.2 182.9h0M1263.8 182.2h0M1296.7 182.7h0M1286.1 186.8h0M1298.2 185.0h0M1270.0 183.9h0M1277.1 181.4h0M1293.0 184.5h0M1283.2 183.2h0M1290.5 181.5h0M1296.6 186.6h0M1270.2 184.9h0M1266.1 187.0h0M1297.1 184.8h0M1280.0 185.7h0M1293.8 183.7h0M1303.2 185.8h0M1266.8 184.2h0M1273.3 185.8h0M1303.0 185.2h0M1276.8 183.1h0M1299.5 184.9h0M1287.6 185.1h0M1287.8 183.7h0M1264.5 184.6h0M1264.9 186.3h0M1292.2 186.8h0M1292.7 184.9h0M1274.5 181.4h0M1290.8 186.0h0M1298.9 187.8h0M1266.8 184.5h0M1281.1 183.5h0M1298.5 185.3h0M1266.4 185.2h0M1275.3 186.2h0M1292.2 183.8h0M1299.1 187.6h0M1294.5 186.3h0M1263.1 183.2h0M1279.3 186.5h0M1268.8 184.6h0M1264.2 185.9h0M1278.3 185.4h0M1275.5 184.9h0M1293.3 185.3h0M1284.0 184.2h0M1274.0 183.7h0M1284.0 184.5h0M1276.1 184.4h0M1274.9 185.5h0M1292.0 185.1h0M1268.3 182.2h0M1262.6 186.2h0M1262.1 184.8h0M1275.6 186.2h0M1281.7 185.9h0M1302.6 185.3h0M1301.8 185.7h0M1268.6 182.5h0M1290.6 187.3h0M1262.4 187.9h0M1290.0 185.9h0M1303.2 184.0h0M1287.0 186.0h0M1290.6 184.3h0M1288.5 187.5h0M1262.3 184.1h0M1273.7 183.0h0M1280.3 183.5h0M1283.7 183.7h0M1284.6 186.0h0M1289.9 184.8h0M1280.5 185.3h0M1273.7 184.3h0M1290.9 187.0h0M1264.3 184.9h0M1264.7 185.2h0M1281.9 187.4h0M1277.7 185.3h0M1274.0 184.0h0M1274.3 184.5h0M1296.1 186.7h0M1287.8 185.5h0M1262.8 183.6h0M1272.2 186.7h0M1280.1 182.5h0M1272.0 181.4h0M1279.4 183.3h0M1282.1 181.8h0M1266.7 184.5h0M1277.3 184.9h0M1283.1 184.4h0M1281.0 183.9h0M1287.9 183.2h0M1276.8 186.3h0M1276.7 181.7h0M1280.5 186.0h0M1296.0 185.3h0M1300.4 184.7h0M1284.9 185.6h0M1293.5 182.4h0M1282.0 186.4h0M1291.4 185.7h0M1281.1 186.6h0M1283.0 181.6h0M1291.5 185.3h0M1299.3 184.6h0M1275.2 181.4h0M1302.3 184.3h0M1286.7 184.9h0M1263.2 183.6h0M1280.0 185.5h0M1302.3 185.7h0M1271.5 184.1h0M1291.7 184.3h0M1296.2 186.1h0M1288.1 183.3h0M1285.0 185.6h0M1300.8 187.0h0M1265.1 184.8h0M1276.2 185.4h0M1303.5 184.9h0M1301.8 186.2h0M1263.5 182.4h0M1281.0 182.1h0M1282.8 183.5h0M1266.5 183.9h0M1266.3 186.4h0M1266.9 187.0h0M1265.6 185.8h0M1268.5 186.8h0M1272.6 184.2h0M1296.1 184.0h0M1268.5 182.4h0M1290.8 186.7h0M1294.9 185.7h0M1301.6 184.8h0M1270.6 182.7h0M1287.8 183.2h0M1265.0 185.6h0M1266.3 184.8h0M1295.1 186.6h0M1297.4 185.1h0M1302.1 183.7h0M1302.1 182.9h0M1275.3 184.8h0M1283.9 187.4h0M1303.1 188.0h0M1291.2 183.6h0M1271.3 185.6h0M1270.3 183.7h0M1282.1 185.2h0M1278.1 181.4h0M1297.9 183.8h0M1286.8 181.9h0M1284.6 187.1h0M1273.0 184.2h0M1286.0 185.6h0M1283.4 184.9h0M1280.5 182.7h0M1277.3 185.8h0M1285.3 186.5h0M1281.9 185.2h0M1262.7 185.7h0M1269.0 186.6h0M1264.8 185.7h0M1280.3 184.6h0M1301.6 182.2h0M1300.6 183.5h0M1278.9 183.6h0M1302.3 186.0h0M1271.4 187.0h0M1278.0 184.9h0M1299.3 186.4h0M1283.0 181.4h0M1272.4 185.3h0M1287.6 182.9h0M1269.5 186.3h0M1285.6 186.9h0M1276.8 186.6h0M1272.8 186.1h0M1268.2 186.7h0" stroke="#000" stroke-width="3.4" stroke-linecap="round" fill="none"/>
<path d="M196.2 184.2h0M219.2 186.2h0M274.2 184.2h0M442.0 188.2h0M441.2 195.5h0M477.5 187.2h0M482.5 193.5h0M505.0 195.5h0M556.2 181.8h0M573.2 181.8h0M588.2 183.2h0M613.2 192.8h0M634.2 184.2h0M670.2 195.5h0M698.2 182.5h0M698.2 188.2h0M744.2 185.2h0M750.2 182.5h0M767.2 187.2h0M812.2 200.2h0M852.2 190.2h0M874.2 217.2h0M760.0 168.0h0M901.2 186.2h0M910.2 192.8h0M923.2 167.2h0M971.2 182.5h0M1011.2 204.2h0M1024.2 195.5h0M1025.2 184.2h0M1032.2 182.5h0M1114.2 183.2h0M1141.2 189.2h0M1258.2 182.5h0M1289.2 206.2h0M1253.3 297.2h0M1077.5 59.2h0" stroke="#ffa500" stroke-width="3.3" stroke-linecap="round" fill="none"/>
<line x1="105.5" y1="190.8" x2="1360.8" y2="190.8" stroke="#008000" stroke-width="2.08"/>
</g>
<line x1="162.00" y1="321.5" x2="162.00" y2="35.5" stroke="#800080" stroke-width="2.08" stroke-dasharray="2.08 3.44"/>
<line x1="1261.90" y1="321.5" x2="1261.90" y2="35.5" stroke="#800080" stroke-width="2.08" stroke-dasharray="2.08 3.44"/>
<line x1="1303.00" y1="321.5" x2="1303.00" y2="35.5" stroke="#800080" stroke-width="2.08" stroke-dasharray="2.08 3.44"/>
<rect x="105.5" y="35.5" width="1380.0" height="286.0" fill="none" stroke="#000" stroke-width="1.11"/>
<line x1="162.50" y1="321.5" x2="162.50" y2="326.36" stroke="#000" stroke-width="1.11"/>
<text x="157.89" y="342.20" font-size="14.9" textLength="8.13" lengthAdjust="spacingAndGlyphs" fill="#000">0</text>
<line x1="376.50" y1="321.5" x2="376.50" y2="326.36" stroke="#000" stroke-width="1.11"/>
<text x="357.99" y="342.20" font-size="14.9" textLength="34.52" lengthAdjust="spacingAndGlyphs" fill="#000">5000</text>
<line x1="589.50" y1="321.5" x2="589.50" y2="326.36" stroke="#000" stroke-width="1.11"/>
<text x="566.61" y="342.20" font-size="14.9" textLength="43.45" lengthAdjust="spacingAndGlyphs" fill="#000">10000</text>
<line x1="802.50" y1="321.5" x2="802.50" y2="326.36" stroke="#000" stroke-width="1.11"/>
<text x="779.94" y="342.20" font-size="14.9" textLength="43.45" lengthAdjust="spacingAndGlyphs" fill="#000">15000</text>
<line x1="1016.50" y1="321.5" x2="1016.50" y2="326.36" stroke="#000" stroke-width="1.11"/>
<text x="993.42" y="342.20" font-size="14.9" textLength="43.56" lengthAdjust="spacingAndGlyphs" fill="#000">20000</text>
<line x1="1229.50" y1="321.5" x2="1229.50" y2="326.36" stroke="#000" stroke-width="1.11"/>
<text x="1206.75" y="342.20" font-size="14.9" textLength="43.56" lengthAdjust="spacingAndGlyphs" fill="#000">25000</text>
<line x1="1442.50" y1="321.5" x2="1442.50" y2="326.36" stroke="#000" stroke-width="1.11"/>
<text x="1420.22" y="342.20" font-size="14.9" textLength="43.42" lengthAdjust="spacingAndGlyphs" fill="#000">30000</text>
<line x1="100.64" y1="307.50" x2="105.5" y2="307.50" stroke="#000" stroke-width="1.11"/>
<text x="73.09" y="312.30" font-size="14.9" textLength="21.62" lengthAdjust="spacingAndGlyphs" fill="#000">7.6</text>
<line x1="100.64" y1="259.50" x2="105.5" y2="259.50" stroke="#000" stroke-width="1.11"/>
<text x="73.22" y="264.30" font-size="14.9" textLength="21.49" lengthAdjust="spacingAndGlyphs" fill="#000">7.8</text>
<line x1="100.64" y1="211.50" x2="105.5" y2="211.50" stroke="#000" stroke-width="1.11"/>
<text x="73.10" y="216.30" font-size="14.9" textLength="21.48" lengthAdjust="spacingAndGlyphs" fill="#000">8.0</text>
<line x1="100.64" y1="163.50" x2="105.5" y2="163.50" stroke="#000" stroke-width="1.11"/>
<text x="73.48" y="168.30" font-size="14.9" textLength="21.35" lengthAdjust="spacingAndGlyphs" fill="#000">8.2</text>
<line x1="100.64" y1="115.50" x2="105.5" y2="115.50" stroke="#000" stroke-width="1.11"/>
<text x="72.98" y="120.30" font-size="14.9" textLength="21.47" lengthAdjust="spacingAndGlyphs" fill="#000">8.4</text>
<line x1="100.64" y1="67.50" x2="105.5" y2="67.50" stroke="#000" stroke-width="1.11"/>
<text x="72.97" y="72.30" font-size="14.9" textLength="21.75" lengthAdjust="spacingAndGlyphs" fill="#000">8.6</text>
<text x="689.82" y="312.00" font-size="14.9" textLength="43.25" lengthAdjust="spacingAndGlyphs" fill="#000">17217</text>
<text x="1260.16" y="291.90" font-size="14.9" textLength="42.61" lengthAdjust="spacingAndGlyphs" fill="#000">50737</text>
<rect x="1361.3" y="42.5" width="117.40" height="27.00" rx="2.8" ry="2.8" fill="#fff" fill-opacity="0.8" stroke="#cccccc" stroke-width="1.1"/>
<line x1="1365.9" y1="54" x2="1396" y2="54" stroke="#008000" stroke-width="2.08"/>
<text x="1406.85" y="58.80" font-size="14.9" textLength="30.44" lengthAdjust="spacingAndGlyphs" fill="#000">mag</text>
<text x="1437.47" y="61.00" font-size="10.4" textLength="34.18" lengthAdjust="spacingAndGlyphs" font-style="italic" fill="#000">AGASC</text>
<rect x="1348.3" y="247.3" width="130.50" height="67.30" rx="2.8" ry="2.8" fill="#fff" fill-opacity="0.8" stroke="#cccccc" stroke-width="1.1"/>
<path d="M1367.4 260.3h0" stroke="#ff0000" stroke-width="3.3" stroke-linecap="round" fill="none"/>
<path d="M1367.4 281.1h0" stroke="#ffa500" stroke-width="3.3" stroke-linecap="round" fill="none"/>
<path d="M1367.4 301.9h0" stroke="#000" stroke-width="3.3" stroke-linecap="round" fill="none"/>
<text x="1391.98" y="263.80" font-size="14.9" textLength="47.33" lengthAdjust="spacingAndGlyphs" fill="#000">not OK</text>
<text x="1392.76" y="284.70" font-size="14.9" textLength="79.58" lengthAdjust="spacingAndGlyphs" fill="#000">Highlighted</text>
<text x="1393.09" y="305.80" font-size="14.9" textLength="20.32" lengthAdjust="spacingAndGlyphs" fill="#000">OK</text>
<text x="706.45" y="372.00" font-size="16.9" textLength="177.19" lengthAdjust="spacingAndGlyphs" fill="#000">Magnitude Estimates</text>
<clipPath id="c2"><rect x="105.5" y="380.5" width="1380.0" height="286.0"/></clipPath>
<g clip-path="url(#c2)">
<rect x="162.6" y="502" width="1101.2" height="34" fill="#000"/>
<path d="M163.7 498.8h0M163.1 498.1h0M164.7 478.6h0M165.0 549.3h0M165.1 549.5h0M164.5 557.1h0M165.2 549.5h0M168.7 496.2h0M167.2 498.3h0M169.1 483.3h0M169.2 498.0h0M168.8 483.6h0M168.4 498.4h0M169.7 487.2h0M166.9 474.4h0M170.1 488.7h0M165.7 474.0h0M166.4 498.0h0M165.8 497.1h0M166.7 491.6h0M169.4 474.7h0M166.5 482.6h0M167.5 498.2h0M168.0 498.5h0M168.6 484.4h0M167.8 487.3h0M168.6 496.1h0M166.8 480.9h0M168.4 498.6h0M166.6 498.6h0M166.7 485.0h0M166.4 497.5h0M169.7 548.5h0M169.2 549.1h0M173.9 497.5h0M171.1 493.6h0M175.0 494.4h0M171.0 496.6h0M173.1 492.2h0M172.8 497.1h0M170.2 496.5h0M172.9 477.9h0M174.4 498.9h0M171.8 498.4h0M174.3 495.9h0M172.2 498.9h0M174.6 485.8h0M174.6 498.5h0M173.5 497.0h0M171.5 490.6h0M172.6 493.7h0M170.5 494.8h0M173.1 475.8h0M171.9 476.3h0M171.8 496.1h0M175.0 485.4h0M170.5 498.8h0M171.3 488.2h0M173.8 496.6h0M174.2 497.4h0M172.0 491.7h0M171.5 493.6h0M170.2 497.9h0M174.7 548.1h0M173.1 550.3h0M172.6 549.3h0M175.3 550.0h0M171.8 548.5h0M170.1 560.6h0M173.5 549.7h0M170.2 550.5h0M178.6 483.8h0M177.8 493.0h0M177.5 491.8h0M178.4 493.2h0M175.6 477.1h0M178.4 482.3h0M176.1 485.5h0M179.4 497.4h0M178.5 490.3h0M178.5 498.9h0M178.1 492.7h0M179.0 495.8h0M178.8 554.0h0M175.9 551.2h0M177.9 559.3h0M178.0 560.0h0M178.5 555.3h0M179.2 553.5h0M180.0 481.1h0M181.0 498.0h0M181.3 474.6h0M182.7 490.1h0M181.5 498.4h0M181.0 494.2h0M181.5 481.8h0M180.1 488.4h0M179.7 487.2h0M180.4 482.3h0M181.4 493.4h0M181.9 481.2h0M180.4 496.2h0M180.4 474.5h0M180.9 496.2h0M182.2 552.6h0M181.6 557.2h0M180.0 550.1h0M180.3 561.4h0M182.1 551.9h0M180.9 548.4h0M182.7 559.5h0M179.6 556.3h0M180.7 551.3h0M179.5 560.5h0M182.9 554.1h0M180.6 553.2h0M181.9 548.5h0M179.6 552.5h0M187.9 495.8h0M183.3 498.5h0M185.3 497.0h0M186.5 485.4h0M185.3 496.5h0M185.6 496.7h0M187.5 549.0h0M185.3 549.8h0M186.0 548.1h0M185.4 551.2h0M185.9 552.4h0M188.3 496.9h0M190.8 498.7h0M190.6 496.2h0M190.6 494.5h0M189.0 492.9h0M190.8 493.6h0M189.8 548.9h0M188.7 548.7h0M189.3 548.5h0M191.0 548.8h0M189.8 547.8h0M188.2 549.9h0M192.3 476.5h0M192.1 494.2h0M192.9 491.6h0M192.2 490.8h0M193.0 498.8h0M192.5 498.6h0M192.4 492.6h0M192.3 486.1h0M193.2 498.1h0M193.3 550.1h0M193.2 556.3h0M192.8 548.5h0M191.5 550.7h0M193.3 548.8h0M193.8 489.7h0M196.9 495.5h0M195.5 495.4h0M196.0 494.6h0M194.1 495.1h0M198.1 491.9h0M197.4 494.0h0M195.4 498.1h0M196.1 498.4h0M196.5 547.6h0M196.7 560.7h0M197.4 557.6h0M197.5 549.6h0M193.9 555.4h0M197.8 548.7h0M196.7 551.0h0M194.4 560.9h0M194.2 557.5h0M194.4 551.8h0M197.3 547.8h0M196.3 562.4h0M195.2 554.5h0M196.5 548.0h0M195.4 563.4h0M198.6 497.7h0M199.5 494.1h0M200.9 496.6h0M200.7 498.2h0M199.2 497.4h0M200.4 497.4h0M200.3 498.2h0M198.5 555.3h0M198.2 555.1h0M201.0 551.1h0M199.0 554.2h0M205.1 491.9h0M204.6 497.6h0M202.8 498.8h0M203.5 496.9h0M204.0 474.4h0M203.6 562.3h0M202.4 556.9h0M205.3 548.3h0M205.5 548.5h0M202.6 548.1h0M202.8 549.0h0M204.9 553.6h0M205.2 550.9h0M210.1 497.9h0M206.7 565.3h0M208.8 554.6h0M206.7 552.6h0M206.3 563.7h0M207.0 557.5h0M208.3 556.4h0M209.3 558.2h0M206.6 552.6h0M208.7 554.1h0M207.3 557.9h0M208.4 562.2h0M206.7 549.6h0M209.9 558.1h0M209.9 548.1h0M207.7 553.4h0M210.3 551.3h0M209.9 552.8h0M213.1 495.3h0M210.9 497.0h0M214.2 495.1h0M212.1 494.5h0M211.3 492.8h0M213.6 548.5h0M214.1 552.5h0M212.9 550.6h0M211.9 549.1h0M211.5 553.7h0M213.7 547.6h0M213.8 556.4h0M212.8 550.8h0M214.1 554.7h0M214.4 483.8h0M214.8 497.9h0M216.4 481.1h0M214.9 474.1h0M216.8 493.9h0M217.9 498.2h0M214.6 493.8h0M214.3 482.5h0M215.7 490.6h0M214.8 547.9h0M216.2 552.0h0M215.1 553.9h0M216.8 551.1h0M215.7 552.2h0M215.7 552.0h0M222.4 485.9h0M223.4 496.2h0M222.4 475.1h0M220.8 497.8h0M223.8 498.2h0M219.6 487.8h0M222.5 497.9h0M222.1 497.7h0M221.1 479.9h0M223.6 498.3h0M222.8 494.9h0M219.5 499.0h0M222.6 492.5h0M222.3 493.4h0M219.4 497.8h0M220.2 483.1h0M219.6 497.7h0M218.8 476.7h0M220.5 497.9h0M219.5 498.4h0M219.5 498.1h0M219.3 487.5h0M221.0 497.4h0M221.9 488.3h0M223.0 475.4h0M219.7 475.3h0M219.8 497.5h0M221.6 490.2h0M223.9 487.2h0M223.0 493.3h0M221.1 548.6h0M222.9 559.2h0M222.5 553.3h0M222.8 560.7h0M222.4 549.4h0M221.2 547.9h0M220.5 550.4h0M220.8 549.0h0M220.4 556.4h0M220.6 563.1h0M222.8 554.9h0M221.6 555.3h0M222.3 561.8h0M221.0 555.6h0M223.0 551.8h0M221.5 556.6h0M221.9 563.3h0M223.1 555.9h0M226.8 482.4h0M224.7 498.7h0M226.3 494.9h0M225.0 489.5h0M227.0 494.2h0M227.9 486.9h0M226.2 493.6h0M224.3 484.9h0M229.7 497.9h0M227.0 494.0h0M224.1 474.4h0M225.7 491.8h0M227.4 481.2h0M224.0 494.3h0M228.0 486.2h0M226.3 493.7h0M228.1 487.8h0M229.1 488.6h0M227.9 488.1h0M226.8 486.7h0M229.8 494.2h0M228.1 478.8h0M229.5 493.6h0M226.3 498.5h0M229.8 495.5h0M225.5 554.5h0M228.8 553.0h0M225.9 555.9h0M224.8 547.7h0M225.2 562.1h0M224.9 551.3h0M228.9 551.4h0M226.9 551.7h0M225.6 554.4h0M225.1 551.4h0M227.2 557.5h0M229.1 548.4h0M229.0 548.9h0M228.2 558.7h0M227.9 548.0h0M225.2 558.0h0M224.8 558.7h0M229.2 551.9h0M228.2 547.9h0M227.6 560.4h0M226.3 554.4h0M227.7 564.5h0M227.4 562.4h0M225.3 551.7h0M230.9 490.8h0M230.1 498.5h0M230.3 494.5h0M230.5 488.1h0M231.0 488.7h0M230.8 497.7h0M230.8 498.2h0M230.2 479.6h0M230.6 551.7h0M230.4 551.2h0M232.1 563.3h0M231.3 558.0h0M236.4 489.6h0M237.5 498.5h0M237.1 498.3h0M236.9 488.0h0M233.5 496.7h0M236.6 494.2h0M232.5 498.5h0M236.2 497.5h0M237.9 486.7h0M235.8 488.0h0M234.9 487.0h0M234.9 497.9h0M235.1 495.2h0M237.0 498.8h0M233.1 494.3h0M235.5 497.7h0M235.8 548.0h0M234.2 548.4h0M233.4 548.4h0M235.3 552.4h0M235.0 556.0h0M236.0 550.8h0M235.7 551.1h0M237.6 548.5h0M235.6 554.1h0M236.7 557.4h0M237.8 549.1h0M235.2 560.1h0M236.6 550.8h0M237.8 553.1h0M235.5 549.3h0M242.8 492.8h0M241.0 488.0h0M238.7 492.1h0M239.1 488.9h0M242.9 498.8h0M238.7 492.5h0M238.2 498.8h0M239.7 496.0h0M241.3 498.5h0M242.9 492.0h0M242.3 490.2h0M238.8 548.4h0M242.8 561.7h0M242.1 559.6h0M240.7 556.3h0M240.9 548.9h0M243.1 551.0h0M241.4 557.9h0M239.2 553.0h0M243.0 559.8h0M240.1 547.5h0M244.0 497.6h0M245.7 496.8h0M246.8 498.8h0M246.0 554.5h0M247.7 550.8h0M247.3 551.1h0M244.8 550.0h0M247.5 551.6h0M246.2 549.9h0M247.5 561.9h0M244.0 550.0h0M244.6 548.9h0M245.4 550.6h0M247.1 556.4h0M250.6 496.1h0M249.6 497.1h0M249.7 498.1h0M249.0 497.3h0M249.7 488.0h0M250.3 495.4h0M250.6 487.9h0M251.1 550.5h0M249.3 548.1h0M249.8 551.0h0M249.9 548.6h0M251.0 550.3h0M251.2 553.3h0M251.0 551.5h0M254.1 498.0h0M252.4 487.5h0M251.5 494.0h0M252.9 496.4h0M252.3 549.7h0M251.9 551.7h0M256.5 497.7h0M255.2 494.2h0M256.1 497.9h0M255.8 493.3h0M256.7 496.4h0M257.1 497.1h0M254.6 496.8h0M257.3 498.1h0M257.9 497.6h0M257.1 498.3h0M256.5 498.9h0M256.7 493.5h0M257.6 498.2h0M256.4 553.3h0M258.5 562.2h0M258.2 548.3h0M255.7 549.3h0M258.9 548.6h0M256.8 556.2h0M259.4 551.3h0M256.8 547.6h0M259.4 547.5h0M255.8 558.9h0M255.5 555.1h0M260.2 498.5h0M262.5 496.1h0M261.4 495.6h0M259.9 495.2h0M261.4 486.0h0M260.8 478.3h0M261.8 496.5h0M262.1 494.6h0M261.8 486.8h0M261.2 549.6h0M262.5 553.9h0M260.4 556.4h0M260.1 554.8h0M262.4 549.7h0M262.7 548.3h0M260.5 551.1h0M259.7 555.6h0M263.3 492.7h0M265.9 495.9h0M264.5 496.1h0M263.3 494.7h0M263.4 493.5h0M263.2 492.9h0M265.7 560.5h0M263.1 555.4h0M265.3 548.3h0M263.1 553.5h0M266.9 486.2h0M269.5 492.6h0M268.8 497.1h0M266.5 486.6h0M267.8 498.8h0M266.5 497.5h0M268.1 490.8h0M267.3 497.1h0M267.9 493.1h0M266.1 492.8h0M269.7 497.4h0M267.1 489.2h0M268.5 496.6h0M267.9 481.8h0M267.4 478.8h0M270.2 496.4h0M269.5 492.3h0M270.4 495.8h0M268.0 490.0h0M266.9 555.2h0M266.7 550.5h0M269.2 549.7h0M266.3 549.2h0M270.7 558.5h0M267.5 559.2h0M272.0 498.3h0M271.8 475.8h0M273.6 492.2h0M272.1 497.4h0M273.0 482.5h0M271.7 494.2h0M272.7 498.1h0M272.6 492.6h0M273.6 550.8h0M272.2 552.4h0M272.7 551.6h0M273.0 552.4h0M271.3 550.1h0M273.1 551.1h0M271.2 549.0h0M275.8 498.8h0M275.7 496.7h0M275.2 492.1h0M275.7 488.5h0M275.8 498.4h0M275.4 549.9h0M280.2 490.1h0M278.3 498.1h0M280.9 492.5h0M279.7 498.3h0M281.8 479.7h0M281.1 495.7h0M282.4 494.8h0M277.5 498.7h0M280.7 485.0h0M277.2 495.4h0M279.7 495.7h0M278.3 483.6h0M280.6 498.4h0M276.9 496.2h0M280.3 498.0h0M282.5 494.6h0M280.4 496.4h0M282.1 497.9h0M281.6 492.1h0M277.1 498.8h0M280.4 550.1h0M279.9 549.3h0M280.2 548.0h0M283.6 498.3h0M284.2 496.1h0M282.6 497.1h0M285.1 491.0h0M283.7 498.9h0M286.2 495.3h0M284.4 494.3h0M283.8 498.3h0M286.4 565.0h0M284.3 550.9h0M285.3 552.8h0M287.1 550.6h0M284.4 553.1h0M282.9 548.7h0M284.3 548.0h0M284.9 552.9h0M286.7 557.5h0M286.3 551.4h0M285.4 554.7h0M284.3 553.0h0M287.3 550.8h0M286.9 556.7h0M287.3 556.7h0M288.2 554.0h0M289.6 495.4h0M289.1 497.6h0M290.3 489.6h0M290.3 495.6h0M290.3 475.9h0M288.3 490.9h0M289.8 496.1h0M289.5 495.5h0M288.3 496.5h0M288.6 496.9h0M288.4 493.4h0M288.3 548.7h0M290.2 561.1h0M291.9 498.4h0M292.2 498.9h0M291.6 564.6h0M291.0 548.2h0M292.1 548.0h0M291.8 550.0h0M294.5 492.5h0M293.8 497.3h0M292.6 494.0h0M295.4 486.1h0M294.0 481.2h0M293.5 490.8h0M295.0 483.9h0M293.4 475.7h0M294.9 492.1h0M293.1 492.1h0M295.5 555.9h0M294.6 551.5h0M295.1 548.5h0M292.9 548.9h0M295.0 548.6h0M297.8 494.5h0M296.8 489.0h0M296.7 498.6h0M297.2 548.2h0M298.0 562.5h0M300.3 493.5h0M298.4 496.1h0M298.6 491.9h0M299.0 479.1h0M299.9 497.6h0M299.0 494.0h0M299.7 486.5h0M299.3 488.0h0M299.4 497.1h0M299.4 497.0h0M298.4 483.6h0M303.1 487.3h0M303.2 491.4h0M304.0 488.1h0M304.4 498.5h0M302.2 485.2h0M305.1 477.0h0M301.4 489.1h0M305.2 498.9h0M304.2 487.5h0M305.4 498.3h0M301.7 489.5h0M301.6 478.7h0M304.0 496.6h0M303.2 497.5h0M305.3 495.9h0M303.4 563.5h0M302.6 550.9h0M303.3 548.1h0M301.7 548.1h0M304.3 550.9h0M305.3 550.9h0M305.8 495.0h0M305.9 490.0h0M306.5 492.8h0M306.4 553.7h0M307.7 560.6h0M307.3 554.0h0M313.1 495.6h0M309.8 495.8h0M310.6 488.4h0M310.1 496.1h0M313.4 498.2h0M307.9 487.5h0M313.7 490.2h0M308.4 497.5h0M307.8 496.4h0M310.0 498.9h0M308.7 494.5h0M307.8 498.7h0M308.6 492.3h0M312.7 494.3h0M309.3 483.7h0M307.9 498.7h0M312.2 495.5h0M312.1 498.7h0M307.9 497.9h0M311.5 490.8h0M309.8 492.1h0M308.9 560.0h0M313.0 547.7h0M308.6 563.0h0M311.0 551.3h0M309.4 552.1h0M313.6 553.8h0M308.0 548.7h0M309.7 553.1h0M309.0 551.4h0M310.5 547.7h0M316.9 479.8h0M315.0 493.6h0M316.5 498.5h0M316.6 489.7h0M315.5 496.1h0M315.1 486.2h0M314.7 547.9h0M315.4 556.7h0M315.5 548.6h0M316.2 551.1h0M316.2 547.7h0M316.2 547.7h0M314.6 548.4h0M314.0 549.9h0M315.0 552.6h0M314.0 547.7h0M318.3 496.4h0M319.4 498.9h0M320.9 497.9h0M321.0 550.6h0M320.4 550.5h0M321.0 550.1h0M321.5 551.1h0M318.7 547.7h0M320.6 548.9h0M319.5 561.3h0M317.6 551.8h0M319.6 550.1h0M322.1 498.4h0M324.7 498.9h0M324.6 498.6h0M324.5 496.9h0M322.8 498.9h0M323.5 492.3h0M323.6 497.3h0M323.0 549.1h0M326.4 548.5h0M324.1 552.0h0M326.5 553.1h0M326.5 550.4h0M325.8 548.2h0M324.4 548.2h0M323.7 548.0h0M326.4 549.8h0M326.0 547.5h0M328.2 489.1h0M329.1 499.0h0M327.2 551.6h0M327.6 548.1h0M330.0 497.7h0M330.7 494.7h0M330.4 489.0h0M330.7 498.9h0M329.7 496.4h0M329.2 548.7h0M329.5 548.5h0M330.5 547.8h0M332.0 495.6h0M330.9 493.0h0M331.7 548.2h0M332.6 553.1h0M331.7 551.8h0M332.5 555.2h0M334.4 483.0h0M334.8 498.1h0M334.1 490.7h0M334.8 498.3h0M334.0 496.6h0M334.2 493.8h0M335.0 486.7h0M334.1 498.1h0M334.1 480.5h0M334.8 486.3h0M333.1 495.1h0M334.2 551.1h0M334.3 560.8h0M334.7 552.8h0M335.4 495.9h0M335.2 484.2h0M335.8 480.3h0M336.2 495.8h0M335.4 479.9h0M336.5 495.1h0M335.3 492.0h0M336.2 487.5h0M335.3 554.8h0M335.2 548.6h0M336.8 556.2h0M336.4 549.9h0M335.9 557.1h0M340.7 498.1h0M340.8 488.9h0M337.8 497.2h0M338.5 553.5h0M339.0 553.7h0M338.1 554.9h0M341.3 557.9h0M339.9 555.1h0M340.8 552.9h0M338.3 560.6h0M341.3 557.7h0M340.5 552.6h0M339.3 555.1h0M338.0 549.3h0M337.9 562.9h0M337.9 549.5h0M340.9 553.8h0M341.4 552.7h0M338.9 552.7h0M337.5 550.3h0M341.8 550.9h0M343.4 496.7h0M343.7 486.7h0M342.8 492.6h0M344.0 484.8h0M343.0 488.2h0M343.4 495.5h0M344.1 492.1h0M342.9 479.4h0M344.6 487.3h0M344.9 495.7h0M344.5 492.6h0M342.9 489.1h0M344.4 483.5h0M344.9 550.5h0M344.4 552.8h0M344.5 551.5h0M343.9 553.2h0M343.2 554.7h0M343.3 549.2h0M344.4 551.1h0M345.0 498.4h0M345.0 496.1h0M346.6 497.6h0M346.9 498.2h0M345.3 548.2h0M347.2 547.5h0M345.2 549.7h0M346.8 547.7h0M350.0 495.3h0M349.7 496.5h0M348.4 486.7h0M350.4 474.4h0M350.0 491.1h0M349.7 498.1h0M349.8 493.9h0M348.4 496.9h0M347.4 477.7h0M350.2 485.1h0M347.4 495.4h0M350.1 490.0h0M349.6 493.1h0M347.9 488.8h0M347.7 477.4h0M349.2 475.3h0M350.4 496.4h0M349.0 490.6h0M347.3 496.9h0M349.7 491.3h0M348.3 549.7h0M349.6 551.4h0M349.7 552.7h0M348.8 553.3h0M349.9 553.4h0M350.7 493.8h0M352.4 480.3h0M351.7 496.1h0M350.9 491.3h0M352.7 480.9h0M351.8 492.1h0M351.0 488.3h0M351.6 475.7h0M351.2 493.7h0M351.5 479.0h0M351.1 494.5h0M351.8 496.9h0M351.4 486.4h0M351.3 489.3h0M352.0 479.0h0M351.9 497.5h0M352.9 494.7h0M352.3 476.3h0M351.1 478.8h0M351.7 483.3h0M350.7 481.1h0M351.4 547.6h0M351.3 548.1h0M351.8 553.0h0M354.7 498.3h0M354.5 495.5h0M353.9 549.2h0M355.3 550.5h0M356.1 494.8h0M356.9 484.3h0M356.1 493.9h0M356.5 494.8h0M356.8 479.9h0M356.1 495.5h0M357.2 488.1h0M356.0 558.0h0M357.0 548.2h0M356.7 551.4h0M356.3 548.7h0M358.7 496.2h0M357.7 498.5h0M359.1 548.5h0M359.3 552.3h0M360.3 498.4h0M360.7 495.9h0M361.4 496.9h0M361.0 549.5h0M359.8 550.7h0M362.4 497.9h0M362.9 494.8h0M362.9 496.7h0M363.0 496.2h0M362.9 493.6h0M361.7 496.9h0M362.5 485.8h0M361.7 480.4h0M363.3 550.1h0M362.7 550.4h0M365.2 486.4h0M364.2 495.4h0M364.0 493.1h0M364.8 494.2h0M363.9 481.3h0M363.6 483.7h0M364.7 476.8h0M365.2 492.6h0M365.1 480.1h0M364.2 476.4h0M364.9 497.2h0M364.7 489.5h0M363.8 483.3h0M364.2 548.1h0M364.3 551.3h0M366.0 487.5h0M366.7 495.8h0M367.2 548.1h0M366.8 552.9h0M365.3 548.2h0M369.6 487.2h0M368.4 493.3h0M369.8 496.9h0M369.5 495.4h0M369.4 497.4h0M368.5 497.4h0M368.2 498.8h0M368.4 549.0h0M368.7 550.8h0M369.1 548.4h0M369.4 550.9h0M368.1 556.0h0M371.9 485.0h0M371.1 490.9h0M371.3 552.9h0M370.4 548.9h0M370.3 550.4h0M373.8 494.5h0M373.4 496.3h0M373.6 498.1h0M373.4 497.1h0M373.8 498.1h0M374.3 548.1h0M373.6 548.1h0M373.4 552.8h0M379.5 494.5h0M378.0 485.7h0M375.8 498.7h0M377.5 498.8h0M376.0 496.7h0M379.7 490.0h0M376.9 489.7h0M376.2 491.7h0M375.7 497.5h0M376.9 498.0h0M377.1 491.9h0M375.1 498.3h0M377.7 495.6h0M379.6 498.7h0M377.2 552.5h0M377.6 555.9h0M377.0 549.3h0M379.4 555.9h0M378.1 550.6h0M374.9 547.6h0M377.9 547.9h0M379.5 564.4h0M376.9 552.9h0M378.4 551.5h0M375.2 553.8h0M379.7 547.6h0M375.9 554.0h0M377.2 547.6h0M379.2 547.9h0M382.4 491.7h0M383.7 490.7h0M383.9 493.2h0M381.2 496.6h0M380.0 493.3h0M383.4 495.5h0M384.6 479.8h0M381.2 498.8h0M383.6 548.3h0M382.8 551.6h0M384.2 552.8h0M380.2 549.6h0M383.3 552.2h0M386.9 494.0h0M386.4 493.5h0M386.6 497.1h0M386.3 486.9h0M390.1 485.0h0M386.9 495.2h0M385.8 497.8h0M388.0 492.7h0M386.4 498.7h0M389.9 495.3h0M390.3 489.3h0M388.3 550.2h0M386.1 548.2h0M386.2 551.9h0M386.1 554.3h0M387.7 553.3h0M386.0 556.5h0M389.9 547.7h0M388.4 551.3h0M387.0 555.5h0M387.7 554.5h0M389.6 551.1h0M390.7 498.9h0M392.0 548.7h0M392.6 550.3h0M391.1 548.4h0M394.1 560.1h0M398.6 498.6h0M395.1 490.9h0M397.2 495.8h0M397.9 484.0h0M397.6 493.9h0M396.6 496.8h0M396.6 495.3h0M397.6 488.8h0M394.9 498.8h0M396.2 497.7h0M396.7 497.8h0M398.5 496.5h0M398.8 548.3h0M395.0 549.0h0M394.8 547.6h0M398.1 549.2h0M394.7 551.1h0M395.3 549.4h0M395.6 552.6h0M396.8 548.1h0M398.1 549.2h0M395.9 547.8h0M394.8 556.0h0M400.4 485.6h0M400.3 498.8h0M399.9 549.2h0M401.2 557.0h0M401.7 495.6h0M402.0 496.4h0M402.4 484.1h0M402.3 497.8h0M404.5 478.2h0M403.2 495.7h0M404.7 551.7h0M401.9 548.8h0M401.7 561.0h0M403.9 563.4h0M404.7 550.2h0M405.1 496.6h0M406.5 485.2h0M405.9 487.6h0M406.9 484.6h0M407.7 489.3h0M405.1 488.8h0M405.0 496.1h0M407.4 496.7h0M405.6 498.1h0M406.7 481.8h0M406.8 550.9h0M405.5 548.4h0M407.6 553.6h0M408.4 496.8h0M408.1 498.6h0M409.7 496.7h0M408.6 492.3h0M409.5 484.5h0M410.8 496.0h0M411.5 559.6h0M411.7 548.9h0M410.9 548.8h0M410.1 553.6h0M409.8 555.0h0M411.4 551.3h0M411.9 554.3h0M409.9 547.8h0M410.9 547.9h0M413.6 493.1h0M413.0 498.2h0M413.2 498.2h0M413.6 496.1h0M414.1 494.2h0M413.9 494.4h0M413.4 547.6h0M417.2 496.9h0M414.6 497.5h0M417.2 487.6h0M416.2 496.5h0M415.8 497.8h0M415.7 497.1h0M414.2 482.2h0M415.4 550.8h0M416.5 549.9h0M420.0 496.2h0M420.1 494.0h0M420.8 496.1h0M419.4 493.0h0M418.6 498.8h0M419.8 498.9h0M418.6 547.9h0M420.1 547.6h0M424.4 492.4h0M426.5 497.6h0M422.3 474.6h0M424.2 480.7h0M425.8 495.3h0M424.9 497.9h0M423.3 476.4h0M424.7 477.1h0M424.6 479.4h0M423.3 486.8h0M423.6 493.2h0M424.2 490.2h0M422.1 474.3h0M425.4 495.7h0M422.9 498.0h0M425.0 482.2h0M425.5 488.7h0M426.3 485.7h0M422.2 495.0h0M426.3 475.9h0M425.9 483.4h0M424.5 486.5h0M423.5 479.2h0M425.5 495.7h0M425.0 494.2h0M422.6 494.9h0M422.2 479.7h0M424.9 493.3h0M425.7 494.8h0M426.6 484.3h0M425.5 480.3h0M424.9 491.9h0M425.5 492.6h0M422.9 480.6h0M426.7 478.1h0M422.2 491.7h0M425.5 497.2h0M425.7 482.6h0M426.5 496.1h0M425.0 482.0h0M425.0 492.4h0M423.5 483.9h0M424.3 488.0h0M424.2 490.8h0M425.4 478.6h0M422.4 498.0h0M424.4 491.2h0M423.2 493.6h0M424.4 485.2h0M426.5 496.5h0M424.8 486.1h0M424.2 479.4h0M424.2 491.4h0M425.6 498.3h0M421.8 487.8h0M425.8 479.8h0M423.1 475.1h0M424.8 498.5h0M425.3 480.2h0M423.1 481.5h0M423.1 493.8h0M422.5 560.8h0M423.2 557.1h0M424.6 547.6h0M423.5 555.2h0M426.0 554.6h0M424.8 547.6h0M422.4 551.7h0M427.1 496.8h0M429.1 490.4h0M426.8 498.9h0M426.9 498.6h0M427.1 498.7h0M428.6 493.1h0M428.6 554.9h0M429.9 558.5h0M428.8 547.6h0M427.3 555.7h0M430.5 484.1h0M431.0 475.5h0M430.7 483.7h0M431.1 493.9h0M430.2 492.2h0M430.9 498.8h0M431.2 484.1h0M431.0 491.3h0M431.3 478.2h0M430.5 489.7h0M431.8 496.4h0M432.0 489.0h0M432.3 493.3h0M431.5 485.5h0M432.0 494.0h0M431.0 494.4h0M430.3 497.7h0M430.3 492.9h0M431.2 491.6h0M431.6 498.4h0M431.2 497.1h0M430.6 549.4h0M431.5 551.6h0M430.7 549.5h0M431.4 550.8h0M435.2 485.3h0M434.2 491.3h0M432.6 490.9h0M435.0 495.7h0M434.4 497.6h0M434.5 496.4h0M433.0 496.2h0M434.9 491.1h0M434.7 498.4h0M433.7 479.9h0M433.8 549.6h0M434.7 550.8h0M434.5 547.9h0M433.2 555.8h0M434.0 548.5h0M435.4 498.0h0M435.2 495.0h0M437.4 493.8h0M436.4 488.1h0M436.6 493.7h0M435.6 553.8h0M436.2 549.0h0M437.4 550.2h0M435.8 551.0h0M439.6 482.2h0M438.2 490.4h0M440.2 489.3h0M441.3 491.5h0M439.6 495.6h0M439.8 487.8h0M438.2 498.1h0M438.4 484.7h0M440.4 492.9h0M439.2 498.7h0M438.5 487.5h0M437.7 495.4h0M438.6 549.7h0M439.6 549.6h0M439.6 558.0h0M439.7 550.6h0M437.9 547.5h0M440.4 552.8h0M443.4 497.0h0M443.2 492.8h0M444.1 495.1h0M443.5 492.1h0M444.6 495.1h0M442.4 491.2h0M443.8 549.5h0M442.4 549.4h0M443.9 551.3h0M443.4 549.6h0M442.2 565.3h0M445.4 551.7h0M448.2 492.4h0M449.1 495.2h0M446.5 496.8h0M449.1 489.1h0M449.3 497.9h0M449.3 495.2h0M446.4 493.3h0M447.5 495.8h0M448.1 498.5h0M449.1 498.4h0M446.1 550.5h0M447.2 549.3h0M446.9 550.6h0M448.4 547.7h0M448.0 559.7h0M446.5 548.5h0M448.6 550.3h0M449.3 548.0h0M446.7 551.2h0M448.7 553.0h0M448.9 547.8h0M452.0 498.5h0M452.3 498.3h0M449.8 477.9h0M450.7 494.9h0M451.8 494.4h0M452.8 495.4h0M452.8 495.4h0M452.1 497.1h0M452.9 492.3h0M453.3 557.2h0M452.1 549.6h0M452.4 552.7h0M451.1 548.2h0M452.8 547.9h0M454.1 552.5h0M458.2 494.0h0M457.9 483.3h0M457.3 476.3h0M458.3 484.7h0M455.9 490.1h0M455.4 480.5h0M456.8 476.3h0M455.7 488.2h0M455.8 495.9h0M455.8 493.7h0M457.8 479.9h0M456.2 497.9h0M456.0 491.9h0M458.0 490.9h0M455.2 486.2h0M457.2 496.7h0M458.4 550.8h0M455.4 547.8h0M454.8 549.7h0M456.8 549.1h0M460.6 489.0h0M458.9 491.5h0M461.6 492.8h0M461.9 497.5h0M461.5 497.2h0M461.6 498.9h0M461.3 489.3h0M463.5 490.5h0M462.4 496.6h0M463.2 498.9h0M461.4 487.9h0M462.2 484.0h0M463.2 479.4h0M462.9 498.9h0M462.9 498.4h0M463.3 487.4h0M460.8 497.0h0M459.9 489.6h0M458.8 498.9h0M460.3 498.2h0M462.4 549.4h0M462.5 548.7h0M462.8 551.0h0M460.9 549.0h0M461.2 552.1h0M460.6 549.4h0M459.2 551.1h0M464.2 496.2h0M464.8 498.7h0M465.7 497.4h0M465.0 556.4h0M466.2 496.1h0M469.3 474.5h0M468.1 482.4h0M469.4 490.9h0M469.5 485.6h0M469.1 498.2h0M468.0 494.0h0M469.9 496.2h0M468.3 494.1h0M467.6 483.8h0M470.6 495.7h0M466.2 498.4h0M468.7 489.8h0M467.8 497.6h0M466.6 552.3h0M466.7 547.7h0M467.4 553.7h0M470.2 551.2h0M467.1 549.5h0M469.6 552.0h0M471.0 493.6h0M472.1 492.7h0M473.6 489.2h0M473.5 559.0h0M474.9 555.7h0M474.2 547.8h0M470.7 547.8h0M472.9 549.2h0M470.9 549.8h0M472.7 555.7h0M477.9 498.8h0M475.1 490.6h0M475.3 497.5h0M476.4 494.7h0M475.5 498.0h0M477.4 493.1h0M478.8 489.2h0M478.2 495.8h0M479.4 496.3h0M475.9 497.8h0M475.4 490.3h0M475.7 496.7h0M477.4 549.0h0M475.1 552.0h0M478.4 547.8h0M476.7 550.2h0M482.3 496.6h0M480.0 497.7h0M480.3 496.2h0M483.1 498.8h0M480.3 497.2h0M483.5 497.5h0M482.5 497.7h0M481.0 498.7h0M481.0 495.5h0M483.3 556.4h0M482.8 550.4h0M483.6 547.9h0M485.0 494.8h0M487.8 496.9h0M484.5 490.7h0M486.7 494.7h0M484.2 497.9h0M486.5 492.3h0M484.8 486.2h0M487.3 497.2h0M486.9 496.8h0M484.6 496.4h0M485.6 489.7h0M486.2 553.4h0M484.4 548.4h0M484.8 559.3h0M487.5 550.3h0M484.2 547.6h0M485.0 550.4h0M486.5 550.1h0M491.6 496.5h0M491.2 496.7h0M489.2 494.7h0M488.5 497.3h0M489.8 494.4h0M491.3 494.8h0M490.2 548.8h0M489.4 551.9h0M489.4 556.4h0M489.9 549.3h0M488.2 550.5h0M488.7 547.7h0M488.4 547.8h0M491.2 551.8h0M492.4 480.3h0M492.6 476.6h0M492.2 498.2h0M492.9 497.5h0M493.4 475.8h0M493.0 496.8h0M493.4 487.3h0M493.1 558.4h0M493.0 549.8h0M492.4 550.3h0M494.1 493.3h0M495.5 476.9h0M495.1 494.2h0M494.7 498.1h0M495.0 498.7h0M495.7 484.2h0M495.9 558.2h0M494.3 548.8h0M496.9 498.4h0M499.3 493.1h0M498.6 498.3h0M498.9 495.1h0M500.5 488.0h0M500.1 559.4h0M499.5 547.6h0M500.3 547.9h0M498.2 550.7h0M499.7 547.7h0M497.9 549.0h0M499.9 548.2h0M496.0 548.1h0M497.4 550.0h0M501.6 498.2h0M502.7 497.8h0M501.4 547.7h0M504.9 496.0h0M504.8 492.1h0M505.9 497.8h0M503.9 497.1h0M504.8 496.5h0M505.1 498.6h0M504.7 476.2h0M505.6 493.7h0M503.9 489.8h0M505.1 498.4h0M504.7 483.2h0M503.8 486.8h0M505.4 549.0h0M505.2 551.9h0M505.9 548.1h0M507.9 478.5h0M507.6 499.0h0M509.0 498.7h0M506.4 497.7h0M506.6 486.3h0M510.3 494.8h0M506.1 476.5h0M509.6 489.2h0M506.9 498.6h0M510.3 492.4h0M510.2 497.1h0M506.1 499.0h0M507.7 481.0h0M507.6 487.9h0M508.3 491.7h0M506.5 498.9h0M509.1 496.3h0M507.8 496.0h0M508.2 493.5h0M508.1 479.7h0M508.2 494.8h0M509.9 495.5h0M507.5 484.0h0M510.0 554.6h0M509.2 559.9h0M509.6 554.7h0M508.6 547.6h0M508.8 564.1h0M506.7 548.8h0M507.9 552.2h0M509.7 549.1h0M509.4 557.3h0M508.2 550.3h0M506.2 554.9h0M509.0 547.6h0M507.5 548.0h0M508.5 548.1h0M510.6 556.6h0M506.6 548.3h0M511.4 489.1h0M512.5 491.3h0M514.0 498.6h0M511.0 491.8h0M513.6 492.5h0M512.4 475.0h0M512.2 496.8h0M515.1 482.4h0M512.8 495.1h0M513.8 497.4h0M511.0 484.8h0M515.2 488.2h0M511.5 498.2h0M514.5 494.5h0M511.7 496.8h0M513.5 547.5h0M513.6 550.9h0M514.3 550.0h0M513.0 548.2h0M513.7 550.4h0M513.6 555.5h0M511.0 547.9h0M516.1 496.9h0M518.6 497.4h0M516.4 498.0h0M519.7 498.4h0M520.1 497.7h0M518.3 491.0h0M518.2 488.7h0M517.1 492.8h0M519.3 495.8h0M520.0 552.6h0M518.7 550.7h0M516.3 553.7h0M520.7 496.6h0M523.8 496.9h0M522.9 490.2h0M524.0 493.8h0M523.9 496.5h0M521.1 497.0h0M520.5 496.3h0M524.6 487.5h0M521.7 496.3h0M523.4 498.0h0M524.1 487.6h0M523.4 550.5h0M523.6 551.5h0M522.3 550.2h0M522.7 547.5h0M526.8 498.8h0M525.1 495.5h0M525.7 496.5h0M526.1 497.4h0M527.5 494.6h0M527.2 496.9h0M528.5 498.2h0M527.0 497.3h0M526.7 493.1h0M527.5 547.7h0M525.7 554.0h0M525.4 551.1h0M532.9 498.7h0M529.6 498.7h0M531.6 494.5h0M530.3 498.4h0M530.9 548.1h0M530.6 548.0h0M530.2 548.0h0M529.3 550.2h0M531.3 548.1h0M529.2 550.8h0M531.3 548.2h0M530.2 548.1h0M530.4 548.0h0M537.2 498.6h0M539.0 497.7h0M535.0 497.8h0M538.6 498.6h0M535.0 488.7h0M538.2 496.2h0M539.2 480.0h0M537.2 489.7h0M537.2 496.7h0M534.1 491.9h0M537.7 495.9h0M538.9 484.6h0M535.0 483.9h0M538.5 479.0h0M536.1 496.8h0M538.4 551.9h0M536.0 548.6h0M534.0 551.7h0M535.4 548.3h0M538.1 549.8h0M541.9 483.0h0M539.8 495.2h0M544.0 498.4h0M539.9 485.2h0M539.9 489.6h0M539.8 491.3h0M540.8 488.9h0M542.6 474.4h0M540.7 476.8h0M539.5 482.4h0M539.9 480.3h0M542.6 495.0h0M541.4 499.0h0M540.0 494.2h0M543.3 498.7h0M539.4 488.3h0M540.2 491.4h0M542.7 498.9h0M542.0 486.7h0M540.2 497.8h0M542.8 495.6h0M540.8 482.3h0M541.7 494.3h0M542.2 492.8h0M540.0 486.2h0M541.3 493.4h0M542.7 493.1h0M543.7 482.2h0M542.0 489.6h0M541.3 487.3h0M541.4 498.2h0M543.8 482.3h0M539.9 483.6h0M544.1 489.4h0M543.3 497.5h0M542.9 488.9h0M542.4 495.5h0M541.5 548.9h0M541.8 549.0h0M540.9 548.8h0M540.9 552.8h0M543.6 551.3h0M542.2 549.1h0M543.1 556.4h0M540.6 551.4h0M544.2 554.8h0M541.2 548.8h0M547.4 497.1h0M546.9 497.0h0M547.6 495.9h0M545.0 495.9h0M546.8 548.6h0M544.7 552.6h0M548.2 549.1h0M547.7 552.3h0M547.7 559.7h0M546.4 548.1h0M547.5 547.8h0M546.0 550.1h0M549.7 496.7h0M549.9 548.9h0M550.9 549.7h0M550.7 549.1h0M552.1 494.9h0M552.1 498.7h0M551.4 495.5h0M552.2 496.9h0M551.3 497.7h0M553.0 496.7h0M551.0 553.0h0M552.5 549.5h0M553.8 495.7h0M555.6 495.4h0M554.4 550.4h0M553.5 548.4h0M553.6 561.9h0M554.0 553.6h0M557.6 498.8h0M556.6 489.7h0M557.1 480.8h0M559.5 493.5h0M558.6 497.5h0M556.3 497.2h0M558.2 497.3h0M558.3 498.6h0M555.9 479.6h0M556.5 487.6h0M557.2 498.0h0M557.9 492.7h0M557.8 498.0h0M556.1 490.3h0M558.8 498.5h0M555.9 492.1h0M557.3 493.6h0M558.1 486.5h0M557.2 554.8h0M558.5 562.9h0M557.2 561.4h0M559.4 561.9h0M559.2 549.7h0M557.0 561.8h0M558.4 560.2h0M556.7 549.8h0M557.5 551.2h0M556.1 555.0h0M558.3 551.9h0M557.6 561.5h0M560.2 492.0h0M563.5 495.1h0M559.6 493.5h0M562.2 491.7h0M561.0 499.0h0M563.1 493.7h0M562.3 549.3h0M562.1 547.8h0M563.3 560.9h0M562.9 555.6h0M561.1 555.0h0M566.3 494.0h0M564.8 489.3h0M565.2 494.7h0M564.2 498.3h0M564.3 474.9h0M565.0 487.6h0M567.4 498.2h0M567.7 486.3h0M564.1 496.0h0M565.2 480.9h0M566.3 490.2h0M567.8 489.8h0M565.5 488.1h0M566.7 498.7h0M565.3 474.5h0M565.6 477.6h0M567.2 497.1h0M566.9 494.0h0M566.6 488.4h0M565.7 489.7h0M567.5 494.2h0M567.7 497.8h0M565.7 486.9h0M566.4 548.5h0M565.8 548.1h0M564.8 550.4h0M571.3 481.8h0M568.5 488.8h0M569.7 494.1h0M570.6 490.6h0M571.3 487.5h0M569.8 478.5h0M570.9 489.1h0M569.5 484.7h0M569.0 488.7h0M568.8 495.5h0M570.3 491.8h0M569.3 490.0h0M569.8 490.0h0M570.5 480.3h0M568.8 550.7h0M569.0 555.1h0M568.1 550.2h0M571.4 555.6h0M570.2 551.7h0M568.6 549.3h0M571.0 553.3h0M571.1 547.6h0M569.4 551.0h0M570.2 552.1h0M569.7 548.7h0M571.6 495.2h0M573.0 477.4h0M572.1 492.0h0M572.9 547.7h0M572.6 552.2h0M576.5 495.0h0M575.3 487.0h0M576.6 497.8h0M576.2 558.2h0M576.0 549.6h0M576.6 548.4h0M576.5 548.1h0M574.8 553.6h0M576.2 553.2h0M576.7 479.6h0M579.1 485.2h0M578.5 495.7h0M577.6 497.5h0M577.2 498.8h0M577.4 495.0h0M578.4 493.1h0M578.7 477.1h0M577.3 495.0h0M578.7 490.0h0M578.4 497.1h0M577.3 496.3h0M576.9 548.8h0M578.6 549.8h0M578.0 550.7h0M578.6 555.7h0M580.6 495.9h0M583.3 488.3h0M579.7 482.4h0M580.4 483.0h0M581.0 484.7h0M581.0 488.9h0M579.9 490.3h0M580.2 479.5h0M580.0 488.0h0M579.5 474.8h0M581.0 495.4h0M579.7 548.7h0M581.8 548.5h0M580.4 558.2h0M582.5 557.4h0M579.8 561.1h0M582.3 552.1h0M580.2 558.8h0M581.2 549.0h0M580.3 548.4h0M581.3 558.0h0M580.3 548.7h0M581.5 549.1h0M582.4 547.9h0M579.2 552.1h0M582.2 550.5h0M581.2 553.9h0M580.3 548.1h0M582.6 556.1h0M585.3 489.0h0M586.4 486.2h0M585.5 496.2h0M583.8 498.2h0M585.2 481.9h0M585.8 492.2h0M586.6 478.9h0M587.4 494.6h0M585.1 493.5h0M585.9 485.7h0M584.7 476.7h0M587.1 496.4h0M583.6 498.9h0M585.9 493.8h0M584.2 498.9h0M586.1 485.6h0M586.8 492.4h0M587.1 497.1h0M586.9 476.1h0M587.2 490.4h0M586.7 490.4h0M585.4 480.8h0M586.5 478.5h0M583.5 488.8h0M586.3 485.6h0M586.2 477.1h0M586.8 494.7h0M585.5 493.6h0M583.7 496.4h0M586.4 476.7h0M584.7 478.6h0M584.7 498.4h0M586.0 561.0h0M586.3 552.4h0M585.9 554.2h0M586.9 554.3h0M584.9 561.4h0M584.6 551.0h0M587.2 555.2h0M587.0 555.6h0M585.8 554.0h0M586.8 550.9h0M584.4 548.5h0M584.6 562.0h0M588.5 498.0h0M589.2 497.2h0M587.7 497.2h0M589.3 497.3h0M587.8 549.1h0M588.0 547.6h0M589.6 490.8h0M589.7 498.6h0M589.8 493.8h0M591.2 486.6h0M590.6 491.9h0M590.8 493.2h0M590.5 495.4h0M590.2 481.7h0M590.7 498.2h0M589.4 482.4h0M590.4 492.4h0M590.6 474.2h0M590.5 547.6h0M590.4 550.5h0M595.1 496.6h0M593.1 485.5h0M592.8 489.7h0M595.1 497.8h0M591.4 495.1h0M594.9 486.3h0M593.4 492.6h0M594.1 482.5h0M594.0 478.6h0M593.8 482.3h0M591.7 494.7h0M595.5 496.5h0M591.4 484.0h0M592.6 482.5h0M594.0 488.8h0M595.2 476.0h0M595.0 485.6h0M592.3 498.2h0M591.9 482.2h0M594.4 495.6h0M595.3 484.0h0M593.6 495.9h0M593.9 482.3h0M591.6 479.5h0M594.7 493.6h0M593.1 484.7h0M594.0 482.0h0M591.4 489.5h0M591.7 485.7h0M594.2 485.7h0M594.1 479.1h0M592.5 488.7h0M595.0 495.7h0M595.5 476.8h0M594.8 492.5h0M594.5 547.6h0M593.9 548.5h0M593.0 553.5h0M594.1 555.2h0M593.2 550.3h0M592.0 548.1h0M593.6 554.3h0M598.1 494.1h0M596.2 498.4h0M596.7 547.8h0M598.3 549.2h0M595.7 553.3h0M597.5 549.4h0M598.0 553.4h0M602.3 497.6h0M600.8 496.0h0M599.2 486.6h0M601.1 497.1h0M600.7 488.9h0M601.7 494.8h0M602.1 489.7h0M600.1 497.3h0M601.3 493.5h0M600.4 494.0h0M599.1 498.5h0M601.8 477.2h0M602.2 494.7h0M601.0 497.5h0M600.9 488.9h0M600.6 497.8h0M600.8 498.8h0M598.8 550.2h0M599.3 548.6h0M601.8 547.7h0M601.7 547.5h0M604.6 498.5h0M606.6 497.4h0M605.8 494.3h0M607.3 498.8h0M604.2 499.0h0M605.0 498.7h0M604.9 493.7h0M603.3 497.3h0M606.3 490.8h0M603.9 547.6h0M602.7 553.5h0M605.0 551.0h0M605.1 555.7h0M605.8 556.2h0M604.1 561.2h0M608.9 499.0h0M609.3 497.8h0M611.6 495.6h0M611.8 494.6h0M608.7 498.1h0M609.5 498.1h0M611.2 492.7h0M607.8 551.3h0M609.0 555.0h0M610.3 551.7h0M612.7 556.0h0M612.0 559.7h0M610.8 549.7h0M612.5 551.7h0M612.4 553.0h0M610.7 557.4h0M609.3 560.0h0M611.0 549.4h0M609.1 551.3h0M609.8 549.4h0M613.9 497.9h0M618.1 490.4h0M616.6 489.9h0M617.8 484.6h0M618.0 491.4h0M616.1 493.9h0M617.2 490.0h0M613.5 488.7h0M613.0 497.4h0M617.1 494.5h0M616.5 483.7h0M613.9 481.5h0M616.4 490.1h0M612.8 478.2h0M616.2 494.7h0M615.3 498.3h0M612.9 477.9h0M613.2 497.1h0M617.8 498.3h0M614.9 490.4h0M614.7 498.2h0M614.6 497.7h0M613.6 548.7h0M618.1 551.0h0M613.6 547.6h0M616.3 549.5h0M615.1 548.7h0M615.6 551.5h0M615.2 547.5h0M619.1 495.3h0M619.2 495.9h0M620.0 498.9h0M620.1 499.0h0M619.3 490.6h0M618.8 498.2h0M619.4 549.6h0M619.6 549.9h0M618.7 553.9h0M618.4 553.8h0M618.8 550.4h0M618.4 551.2h0M620.8 496.0h0M622.5 498.5h0M623.9 493.1h0M625.6 495.7h0M621.3 496.9h0M623.1 497.3h0M622.2 498.6h0M624.3 498.3h0M622.6 498.4h0M621.5 554.5h0M625.6 564.7h0M625.6 548.4h0M621.0 550.4h0M625.2 553.9h0M622.2 557.8h0M623.6 555.5h0M622.4 547.7h0M625.6 551.6h0M626.7 496.0h0M629.1 498.7h0M628.1 495.3h0M626.5 498.2h0M629.4 492.3h0M627.1 551.4h0M626.9 549.1h0M626.5 549.2h0M629.2 563.9h0M629.8 492.3h0M630.8 485.8h0M629.6 497.3h0M630.2 496.4h0M631.3 482.0h0M630.8 498.4h0M629.6 495.2h0M630.0 495.0h0M631.5 486.7h0M631.6 476.5h0M630.0 474.6h0M631.4 487.8h0M631.4 498.3h0M631.3 550.0h0M630.9 562.2h0M629.9 560.6h0M630.3 556.2h0M631.4 557.4h0M630.1 550.9h0M632.0 498.9h0M632.3 496.6h0M633.9 494.4h0M633.8 498.8h0M633.6 548.7h0M632.2 551.9h0M635.2 548.4h0M635.1 547.5h0M634.0 562.9h0M631.8 549.4h0M636.2 489.4h0M636.2 496.1h0M637.2 490.6h0M638.5 492.8h0M635.9 483.5h0M636.0 498.8h0M635.9 494.6h0M637.7 485.4h0M637.5 485.4h0M638.7 556.6h0M636.6 549.7h0M636.7 549.4h0M637.4 552.0h0M637.5 557.2h0M637.4 551.1h0M636.9 549.5h0M637.0 550.6h0M642.9 498.4h0M639.2 497.2h0M641.9 498.2h0M640.0 497.2h0M640.0 497.8h0M641.9 498.1h0M641.6 498.9h0M643.0 496.6h0M640.9 498.5h0M641.4 496.9h0M640.4 498.6h0M644.6 557.8h0M642.7 551.6h0M641.9 556.0h0M642.9 549.9h0M643.4 557.3h0M643.2 548.4h0M640.9 548.7h0M643.3 547.5h0M640.7 549.4h0M644.4 548.4h0M644.0 547.9h0M639.6 552.7h0M639.5 548.2h0M642.3 550.1h0M646.7 496.0h0M647.4 488.7h0M647.9 494.6h0M644.7 490.2h0M648.0 495.7h0M646.1 496.6h0M647.0 498.8h0M646.9 494.6h0M645.2 489.3h0M648.0 548.7h0M644.8 549.7h0M645.1 547.8h0M650.8 496.5h0M649.7 483.5h0M649.9 492.8h0M648.8 548.1h0M649.3 553.0h0M651.1 551.7h0M648.6 550.4h0M650.9 560.1h0M650.4 552.4h0M649.1 550.7h0M650.6 555.6h0M650.0 562.2h0M648.9 560.7h0M648.5 555.6h0M649.4 549.1h0M655.3 488.4h0M651.5 497.7h0M655.7 498.3h0M653.7 498.5h0M652.5 490.0h0M651.8 497.9h0M653.1 563.9h0M653.7 550.5h0M653.4 552.7h0M654.0 551.8h0M656.4 490.1h0M657.5 492.6h0M657.8 486.2h0M656.2 494.7h0M656.4 495.5h0M657.3 498.9h0M656.2 497.0h0M657.0 499.0h0M657.7 493.2h0M656.2 480.5h0M656.1 552.5h0M656.9 549.0h0M656.2 561.1h0M656.7 548.2h0M655.8 548.8h0M655.9 550.2h0M660.6 497.5h0M660.2 496.7h0M659.4 498.5h0M659.9 549.4h0M660.4 549.6h0M662.4 494.7h0M662.0 495.2h0M663.0 495.0h0M663.3 485.1h0M662.9 489.1h0M661.3 498.4h0M661.7 492.4h0M661.9 497.8h0M660.8 495.7h0M662.4 551.9h0M663.8 495.3h0M667.6 490.9h0M666.6 479.7h0M666.6 495.4h0M666.7 497.9h0M666.8 493.9h0M663.9 496.8h0M664.0 489.2h0M667.4 498.0h0M666.0 481.6h0M666.7 488.5h0M668.3 496.6h0M665.6 497.4h0M668.1 496.7h0M668.2 494.8h0M665.6 547.9h0M668.3 562.9h0M664.0 551.4h0M666.2 548.2h0M663.5 548.3h0M664.8 549.0h0M668.2 561.4h0M663.7 547.9h0M669.8 489.2h0M668.4 552.8h0M670.1 555.2h0M669.5 548.2h0M670.0 552.5h0M669.3 553.0h0M672.0 498.1h0M672.4 498.8h0M671.4 497.2h0M673.1 557.9h0M672.9 553.1h0M671.7 553.4h0M672.0 561.9h0M671.1 552.2h0M672.5 551.0h0M673.1 557.9h0M670.4 558.8h0M670.8 547.6h0M670.9 559.4h0M675.3 495.3h0M674.4 497.3h0M674.2 495.7h0M673.4 495.0h0M674.8 551.9h0M673.3 563.2h0M675.8 551.4h0M675.9 554.2h0M674.9 552.6h0M673.8 547.6h0M675.2 550.1h0M675.7 548.8h0M674.9 554.4h0M674.0 565.3h0M678.2 499.0h0M676.5 494.5h0M677.4 560.0h0M679.7 553.4h0M677.7 553.5h0M678.4 553.0h0M679.3 555.9h0M677.8 556.4h0M677.7 553.5h0M677.1 561.5h0M676.9 553.6h0M677.9 555.3h0M677.8 548.3h0M679.0 552.4h0M679.9 556.3h0M681.1 498.9h0M680.5 495.9h0M683.8 497.6h0M684.5 493.6h0M685.5 498.6h0M684.0 486.7h0M681.0 496.0h0M685.6 494.6h0M684.6 497.0h0M681.4 498.3h0M684.7 497.7h0M682.0 489.4h0M681.9 494.5h0M685.6 550.0h0M683.7 550.0h0M684.9 562.9h0M681.4 549.2h0M682.8 552.3h0M684.3 560.2h0M685.4 551.1h0M681.4 550.5h0M688.6 496.1h0M686.8 496.7h0M686.4 497.6h0M685.9 493.9h0M687.8 496.5h0M685.7 498.2h0M687.6 552.9h0M688.9 547.8h0M688.6 549.7h0M688.5 548.2h0M685.8 554.5h0M688.4 549.3h0M691.1 489.6h0M690.7 496.1h0M691.5 485.2h0M689.8 484.7h0M690.3 496.8h0M690.9 494.1h0M690.2 496.2h0M691.6 494.9h0M689.9 497.2h0M691.7 493.3h0M690.4 479.7h0M689.1 495.4h0M691.5 491.5h0M689.2 487.8h0M690.4 552.2h0M690.2 549.3h0M690.3 548.8h0M690.3 551.1h0M692.9 498.4h0M691.9 494.2h0M692.3 490.0h0M691.8 486.7h0M692.0 497.0h0M692.3 483.5h0M694.2 485.0h0M692.1 482.0h0M692.5 495.5h0M695.0 475.3h0M695.0 479.0h0M692.4 497.4h0M693.6 554.2h0M694.9 553.4h0M695.0 552.4h0M694.5 548.4h0M694.6 555.3h0M693.3 549.7h0M692.9 557.9h0M695.1 549.6h0M696.0 497.7h0M695.3 498.2h0M695.5 498.3h0M696.2 489.4h0M695.9 496.4h0M695.8 477.9h0M697.9 548.3h0M697.4 554.5h0M696.2 549.7h0M699.5 480.9h0M698.9 480.2h0M701.2 498.8h0M701.3 498.8h0M700.4 495.3h0M701.1 479.9h0M698.3 499.0h0M701.6 486.6h0M698.3 496.8h0M700.9 498.5h0M699.3 488.2h0M699.9 495.5h0M699.7 498.0h0M698.8 479.3h0M699.4 476.1h0M699.8 490.2h0M699.9 484.0h0M698.2 491.1h0M700.8 483.9h0M699.0 489.5h0M700.6 551.5h0M700.5 552.7h0M701.0 563.4h0M699.6 547.8h0M699.3 550.8h0M700.5 552.7h0M700.0 560.6h0M700.8 550.4h0M701.3 549.7h0M703.1 480.0h0M702.5 485.4h0M702.8 497.3h0M703.6 490.6h0M702.7 495.1h0M703.3 494.4h0M702.0 490.8h0M703.0 499.0h0M702.2 489.8h0M702.6 495.8h0M702.5 492.4h0M701.6 498.3h0M701.6 552.9h0M704.8 499.0h0M705.8 493.9h0M704.5 496.7h0M705.2 548.0h0M705.2 554.4h0M705.3 557.9h0M704.0 555.2h0M706.2 553.2h0M708.6 498.6h0M708.1 496.9h0M707.8 558.0h0M708.3 549.5h0M710.9 496.8h0M710.4 490.5h0M711.3 498.8h0M711.4 496.5h0M711.4 497.4h0M710.0 493.1h0M710.8 550.5h0M709.7 550.6h0M710.9 549.3h0M714.9 496.9h0M712.6 495.9h0M716.1 498.9h0M716.0 498.9h0M714.3 496.8h0M715.3 549.9h0M719.8 497.0h0M716.9 494.5h0M718.2 495.0h0M717.6 495.3h0M720.8 498.4h0M716.8 495.7h0M716.8 490.8h0M717.5 550.7h0M717.5 549.1h0M719.7 550.3h0M719.0 550.9h0M720.2 548.0h0M718.4 549.2h0M722.3 496.2h0M721.7 498.2h0M721.4 483.0h0M721.5 491.5h0M720.9 498.8h0M720.9 497.7h0M722.3 476.2h0M721.1 564.3h0M725.7 496.0h0M726.8 491.7h0M725.2 497.1h0M723.9 483.7h0M723.0 492.0h0M726.7 495.6h0M725.4 494.2h0M723.7 496.9h0M726.7 478.3h0M726.1 489.9h0M726.1 484.6h0M724.4 478.7h0M725.2 498.8h0M726.2 475.3h0M726.6 548.6h0M724.6 550.2h0M723.1 548.4h0M725.9 553.2h0M726.6 559.7h0M723.7 555.4h0M726.3 555.2h0M729.9 497.6h0M727.6 498.9h0M728.4 498.8h0M728.0 498.9h0M729.9 498.0h0M729.9 498.9h0M728.1 551.2h0M730.5 555.1h0M728.0 558.1h0M728.1 556.5h0M729.8 550.5h0M730.1 558.2h0M727.2 560.7h0M729.0 547.5h0M729.9 547.8h0M730.2 560.5h0M732.4 482.5h0M733.1 496.6h0M732.7 485.2h0M732.4 498.8h0M732.9 493.4h0M733.3 495.7h0M732.0 484.6h0M732.5 479.5h0M732.2 490.2h0M731.7 491.1h0M733.1 496.2h0M733.2 497.4h0M732.9 489.4h0M732.0 495.5h0M732.1 476.2h0M731.5 565.2h0M732.8 556.3h0M732.8 550.0h0M732.7 548.1h0M732.0 558.7h0M731.7 549.7h0M731.4 560.6h0M735.2 497.7h0M734.8 493.4h0M734.4 498.4h0M736.6 491.6h0M734.8 494.0h0M736.2 496.7h0M733.7 497.4h0M735.3 493.1h0M733.4 494.1h0M735.5 497.2h0M736.5 494.6h0M734.6 474.1h0M736.2 485.5h0M734.1 548.2h0M737.5 495.1h0M738.0 497.7h0M738.5 497.7h0M738.9 494.2h0M738.8 549.4h0M742.0 498.4h0M743.7 551.0h0M741.2 549.1h0M742.3 548.9h0M741.1 551.7h0M742.3 553.6h0M744.2 490.0h0M745.3 487.0h0M747.6 491.3h0M744.3 496.6h0M749.2 487.4h0M745.9 495.3h0M745.5 498.9h0M746.5 487.5h0M745.6 496.0h0M747.3 484.6h0M743.9 486.7h0M747.3 483.0h0M748.1 494.6h0M747.9 486.0h0M744.5 479.9h0M745.9 496.2h0M747.9 478.5h0M749.5 476.2h0M748.4 493.2h0M749.5 493.4h0M749.4 484.1h0M746.1 489.4h0M748.3 497.5h0M745.3 486.5h0M748.1 486.9h0M746.4 491.0h0M749.5 493.8h0M746.4 496.8h0M747.2 477.6h0M744.6 486.8h0M748.8 483.1h0M744.4 486.6h0M748.8 495.9h0M746.9 492.5h0M746.5 495.9h0M744.4 483.3h0M749.2 495.9h0M747.3 479.8h0M746.0 549.1h0M745.1 554.5h0M748.2 553.5h0M743.9 548.4h0M743.9 553.3h0M744.6 553.9h0M748.4 547.8h0M749.7 478.3h0M749.7 490.7h0M750.7 492.9h0M750.9 496.1h0M750.7 487.0h0M750.5 498.4h0M751.5 497.1h0M749.9 489.0h0M750.3 490.1h0M749.6 498.6h0M751.0 551.0h0M751.3 549.8h0M751.7 494.6h0M752.9 490.5h0M753.0 497.8h0M754.4 497.6h0M753.9 491.2h0M754.2 493.0h0M754.7 498.1h0M752.1 496.8h0M753.7 497.5h0M753.3 495.4h0M753.2 497.3h0M752.5 493.7h0M754.0 486.2h0M753.5 552.1h0M752.4 562.8h0M754.9 558.0h0M755.3 555.1h0M751.9 553.4h0M752.7 553.5h0M755.3 548.5h0M755.3 564.6h0M752.6 556.7h0M754.5 548.4h0M759.7 497.4h0M757.2 489.6h0M757.8 494.2h0M759.1 490.8h0M758.5 483.6h0M756.0 496.6h0M755.7 494.7h0M757.8 486.7h0M756.0 489.6h0M760.7 492.7h0M758.2 497.7h0M758.8 485.4h0M758.8 491.4h0M755.7 478.2h0M757.9 486.0h0M758.8 496.6h0M758.1 497.0h0M758.8 496.8h0M760.1 486.7h0M755.5 484.5h0M757.9 493.8h0M760.3 477.6h0M758.3 483.8h0M755.7 493.6h0M760.8 497.5h0M755.8 492.4h0M755.9 484.3h0M756.9 494.2h0M758.4 497.1h0M760.4 494.9h0M759.8 494.3h0M755.5 478.6h0M755.5 484.0h0M756.0 482.3h0M757.6 550.3h0M759.4 563.4h0M761.2 551.4h0M760.8 553.0h0M759.5 547.7h0M756.1 548.0h0M756.2 553.9h0M756.4 558.9h0M760.2 550.6h0M765.5 495.8h0M765.9 498.2h0M762.5 498.9h0M763.9 494.4h0M765.5 492.6h0M762.5 498.8h0M761.5 496.5h0M764.0 495.1h0M763.1 482.0h0M765.8 548.8h0M762.4 550.8h0M764.2 557.4h0M762.4 548.6h0M761.7 551.1h0M762.7 548.7h0M762.3 550.6h0M767.3 497.8h0M767.9 490.4h0M766.2 481.8h0M766.1 495.3h0M766.2 496.6h0M768.3 496.7h0M766.9 492.8h0M767.3 497.9h0M766.3 547.9h0M768.7 489.8h0M769.5 492.2h0M768.5 489.3h0M768.6 495.6h0M768.7 490.5h0M768.3 498.3h0M768.4 558.1h0M769.1 547.9h0M770.2 475.6h0M772.9 485.3h0M772.0 482.6h0M772.5 481.2h0M772.3 483.0h0M773.4 488.4h0M773.2 493.9h0M773.5 494.1h0M772.6 475.1h0M772.6 493.9h0M770.7 481.5h0M773.0 492.6h0M772.2 493.8h0M773.3 490.5h0M771.2 498.6h0M773.3 498.9h0M773.6 482.5h0M773.0 490.5h0M773.3 498.3h0M770.4 485.0h0M773.1 487.1h0M772.7 486.6h0M771.7 486.6h0M772.1 481.3h0M773.7 477.2h0M770.3 483.6h0M773.7 482.1h0M770.2 477.1h0M771.4 494.6h0M770.9 486.9h0M772.9 480.0h0M773.2 498.6h0M771.1 478.6h0M770.5 491.8h0M771.2 497.9h0M770.6 482.3h0M773.6 550.5h0M771.9 547.7h0M772.0 555.3h0M770.4 549.2h0M773.0 553.2h0M772.5 548.9h0M771.9 547.8h0M771.9 556.5h0M771.0 553.4h0M771.4 555.8h0M772.4 547.6h0M772.5 555.6h0M773.4 550.7h0M772.1 554.1h0M773.9 493.7h0M774.6 498.7h0M773.9 494.2h0M775.0 498.9h0M774.5 496.8h0M774.1 497.2h0M774.2 558.2h0M774.7 550.1h0M774.0 556.4h0M774.2 550.5h0M776.9 497.3h0M776.6 497.3h0M776.4 487.8h0M776.4 495.1h0M778.0 549.0h0M775.9 551.3h0M777.9 548.8h0M782.3 497.9h0M779.4 496.3h0M778.4 495.8h0M780.6 496.5h0M781.1 492.0h0M779.8 489.2h0M778.7 497.4h0M780.0 498.3h0M781.5 496.0h0M779.9 474.2h0M781.3 490.5h0M779.3 497.5h0M781.7 548.2h0M780.0 552.0h0M778.1 550.7h0M782.0 547.5h0M778.5 549.4h0M781.0 557.8h0M778.5 550.7h0M778.8 548.3h0M783.1 486.2h0M784.2 497.5h0M785.8 493.8h0M784.1 497.7h0M786.1 488.5h0M784.3 550.5h0M783.3 553.7h0M784.6 551.0h0M784.2 549.4h0M783.1 551.3h0M783.2 551.9h0M785.2 550.9h0M789.2 493.9h0M786.8 492.6h0M788.6 493.3h0M787.6 498.8h0M787.9 498.6h0M787.3 550.6h0M787.6 548.9h0M787.7 549.2h0M788.7 551.7h0M789.8 488.4h0M791.6 480.7h0M792.2 498.7h0M792.8 495.6h0M792.9 476.1h0M792.6 492.1h0M793.4 495.2h0M791.5 498.5h0M789.7 489.5h0M791.9 497.2h0M791.7 485.5h0M792.2 498.3h0M790.5 491.4h0M791.1 474.9h0M790.3 495.0h0M791.3 498.8h0M793.4 499.0h0M790.6 493.7h0M790.1 498.1h0M792.7 497.8h0M791.8 498.4h0M790.4 548.7h0M791.5 548.6h0M790.7 550.8h0M791.5 549.6h0M791.8 555.1h0M796.6 497.6h0M795.4 497.4h0M794.7 497.8h0M797.3 497.0h0M797.0 498.5h0M797.2 498.7h0M795.5 497.3h0M793.7 497.5h0M795.0 498.3h0M794.3 551.8h0M797.4 549.2h0M797.6 557.5h0M795.8 549.2h0M798.1 548.1h0M796.7 553.1h0M798.3 550.3h0M794.4 549.5h0M800.4 484.9h0M802.4 497.7h0M798.9 492.8h0M799.9 475.6h0M800.0 487.8h0M800.8 498.7h0M802.3 494.6h0M802.2 495.3h0M800.2 494.6h0M799.8 483.5h0M799.3 493.7h0M798.6 487.2h0M799.3 493.1h0M799.2 484.5h0M802.5 488.3h0M801.5 498.2h0M799.9 484.4h0M799.7 494.2h0M799.9 489.2h0M801.4 491.4h0M800.6 498.4h0M801.0 482.9h0M800.3 485.7h0M800.0 477.5h0M801.3 486.7h0M800.9 551.1h0M800.7 548.5h0M801.3 548.4h0M800.9 549.1h0M800.1 553.7h0M798.9 548.3h0M798.5 547.9h0M798.9 553.2h0M799.5 547.8h0M799.0 550.4h0M806.8 491.3h0M805.5 495.9h0M805.2 493.5h0M803.9 498.7h0M805.3 493.3h0M803.2 498.0h0M807.0 548.4h0M803.2 565.3h0M802.9 550.9h0M807.2 549.0h0M806.9 548.8h0M808.3 491.5h0M808.8 491.4h0M808.4 493.0h0M808.4 496.6h0M809.2 549.0h0M814.6 496.7h0M814.5 490.9h0M813.9 496.1h0M813.2 552.3h0M813.8 561.1h0M814.4 561.6h0M812.2 548.1h0M814.6 549.7h0M812.6 551.8h0M811.5 551.7h0M811.4 551.8h0M811.5 549.6h0M811.9 547.5h0M818.2 496.3h0M818.4 495.5h0M816.6 492.8h0M819.2 496.2h0M816.7 493.9h0M816.5 489.4h0M819.1 498.3h0M817.7 556.0h0M819.4 550.8h0M815.5 549.1h0M818.0 548.5h0M816.2 547.9h0M815.0 548.8h0M820.2 498.4h0M820.7 549.7h0M820.1 550.8h0M820.8 549.7h0M824.7 495.8h0M822.4 490.7h0M822.5 476.7h0M823.2 496.5h0M824.6 496.0h0M822.4 497.3h0M822.2 490.8h0M823.9 495.8h0M822.5 495.3h0M821.3 497.0h0M822.0 488.4h0M823.3 493.6h0M824.2 484.9h0M821.3 498.5h0M824.2 498.9h0M821.3 492.1h0M824.6 498.4h0M822.7 555.7h0M823.6 550.4h0M824.3 553.6h0M824.8 550.2h0M827.7 482.1h0M827.6 488.2h0M829.7 487.8h0M830.3 488.8h0M825.4 498.5h0M828.2 489.2h0M827.5 498.9h0M827.3 497.5h0M829.5 481.8h0M829.9 483.5h0M826.2 475.0h0M829.5 490.4h0M824.9 492.9h0M825.6 485.3h0M828.3 492.8h0M829.8 482.7h0M830.1 474.5h0M827.3 474.7h0M825.7 483.3h0M827.4 497.8h0M825.6 475.8h0M828.0 496.4h0M830.2 483.1h0M827.8 493.2h0M828.9 497.0h0M829.5 479.6h0M830.0 476.7h0M829.0 495.5h0M828.4 548.0h0M825.7 548.6h0M826.1 549.0h0M828.3 547.9h0M825.0 547.9h0M831.4 497.3h0M831.3 497.9h0M831.6 497.3h0M831.9 496.9h0M831.6 495.5h0M831.3 496.0h0M831.7 497.6h0M830.7 551.2h0M831.8 548.0h0M830.6 548.0h0M832.1 497.8h0M834.2 495.6h0M833.6 496.1h0M832.8 496.3h0M832.3 495.6h0M833.5 493.2h0M834.3 549.8h0M832.9 548.3h0M832.0 549.9h0M832.9 550.1h0M834.2 550.2h0M832.5 551.9h0M832.3 549.3h0M832.4 550.9h0M837.3 495.6h0M834.9 493.2h0M837.8 496.6h0M838.3 498.3h0M836.0 496.2h0M837.6 498.8h0M835.7 498.3h0M839.6 495.3h0M835.6 479.2h0M838.4 482.5h0M837.4 493.5h0M839.1 498.2h0M837.5 498.5h0M835.0 485.1h0M838.6 493.5h0M834.4 493.5h0M835.5 493.2h0M834.7 489.7h0M837.7 554.7h0M835.0 559.7h0M835.4 548.9h0M836.4 548.9h0M836.5 555.5h0M836.6 556.8h0M839.4 549.1h0M835.8 553.0h0M839.7 551.9h0M838.1 561.2h0M838.5 559.1h0M839.7 562.2h0M838.4 548.0h0M840.0 554.5h0M837.0 560.6h0M837.8 565.2h0M837.0 549.4h0M834.9 562.6h0M838.3 548.4h0M844.5 486.1h0M843.5 481.8h0M842.3 494.7h0M840.7 498.3h0M841.8 497.0h0M841.1 495.1h0M840.3 482.0h0M841.4 475.0h0M843.6 496.7h0M840.8 483.1h0M841.8 497.0h0M842.2 475.8h0M843.3 499.0h0M840.5 492.0h0M843.4 492.2h0M843.3 493.4h0M841.8 475.6h0M843.4 483.9h0M840.9 477.9h0M842.6 497.9h0M842.7 553.8h0M842.0 553.0h0M840.5 558.2h0M843.1 547.9h0M844.4 553.1h0M841.8 553.3h0M841.2 559.4h0M840.2 558.8h0M840.6 547.9h0M841.1 552.7h0M842.7 548.3h0M840.5 547.9h0M841.4 564.6h0M841.5 559.7h0M840.8 548.8h0M843.0 560.5h0M845.2 493.6h0M846.2 495.2h0M847.4 498.7h0M846.6 476.6h0M844.6 497.6h0M844.7 497.3h0M844.7 496.3h0M847.4 485.8h0M846.2 498.1h0M845.8 480.7h0M846.6 492.0h0M847.1 494.1h0M844.9 487.2h0M845.1 481.9h0M847.6 494.4h0M845.8 554.9h0M844.8 548.9h0M845.4 550.6h0M844.6 551.7h0M848.1 548.3h0M847.8 552.0h0M844.6 554.6h0M848.2 554.8h0M849.6 478.0h0M849.2 497.6h0M850.0 494.1h0M850.1 480.1h0M849.9 498.2h0M849.5 497.9h0M850.6 494.6h0M851.8 485.6h0M851.3 495.1h0M851.6 475.5h0M849.2 491.9h0M849.4 480.3h0M849.4 479.4h0M850.4 495.8h0M850.2 474.9h0M848.7 494.7h0M849.4 488.3h0M851.3 482.5h0M851.3 478.4h0M851.9 476.6h0M849.1 492.6h0M850.9 497.2h0M848.6 497.7h0M848.8 479.4h0M850.1 556.2h0M848.9 548.5h0M851.3 552.8h0M850.4 558.8h0M850.1 553.0h0M850.8 552.1h0M850.3 549.5h0M849.0 548.2h0M853.3 491.9h0M852.0 490.1h0M855.8 481.4h0M854.7 498.6h0M853.1 494.8h0M855.1 497.6h0M854.1 481.8h0M855.2 491.5h0M853.1 495.2h0M857.5 496.6h0M853.9 498.7h0M852.7 492.4h0M855.2 489.2h0M856.5 479.8h0M855.3 495.2h0M855.6 491.7h0M853.6 489.2h0M856.9 479.7h0M856.5 493.1h0M852.8 489.5h0M856.6 492.9h0M853.8 481.2h0M855.1 474.6h0M857.0 491.4h0M852.6 552.3h0M856.8 558.4h0M852.1 548.6h0M853.0 552.2h0M857.5 561.6h0M853.7 548.9h0M852.7 547.7h0M853.7 549.1h0M854.2 547.9h0M852.5 555.2h0M853.4 548.9h0M854.1 558.9h0M852.2 550.6h0M857.0 555.4h0M857.1 556.4h0M859.8 498.8h0M859.4 498.9h0M858.3 493.4h0M857.9 556.2h0M861.9 493.6h0M860.9 496.6h0M865.2 497.9h0M863.9 497.8h0M862.1 497.4h0M864.4 498.3h0M862.9 552.2h0M862.5 550.5h0M864.1 549.9h0M864.0 549.1h0M869.9 488.0h0M866.4 495.1h0M869.8 495.4h0M867.7 491.5h0M869.0 497.5h0M870.0 498.1h0M868.5 493.1h0M867.7 498.1h0M868.4 493.4h0M868.1 498.9h0M869.4 483.3h0M871.1 492.5h0M866.2 480.4h0M869.9 490.3h0M870.5 490.6h0M868.4 553.3h0M866.5 554.1h0M871.1 564.1h0M871.2 549.1h0M867.4 552.2h0M867.8 563.0h0M866.3 547.6h0M869.4 560.2h0M867.2 551.7h0M869.7 561.0h0M867.9 548.0h0M870.0 554.9h0M868.7 558.6h0M869.0 565.3h0M873.2 494.6h0M873.4 498.6h0M873.1 496.3h0M871.7 497.5h0M872.2 495.3h0M872.4 491.5h0M874.2 493.0h0M873.1 495.9h0M872.0 554.7h0M872.8 550.0h0M872.1 548.8h0M871.7 552.5h0M876.5 487.3h0M878.3 487.8h0M876.9 496.7h0M874.9 498.0h0M876.1 492.7h0M876.6 486.2h0M874.7 491.7h0M877.0 493.2h0M874.7 497.9h0M875.5 496.3h0M875.3 495.9h0M875.5 549.5h0M876.9 548.2h0M877.6 551.6h0M876.6 547.9h0M877.1 552.5h0M875.6 563.4h0M882.7 498.3h0M881.7 498.9h0M883.8 498.2h0M883.7 498.2h0M883.0 498.4h0M884.0 498.6h0M884.0 494.9h0M883.3 496.2h0M884.2 498.3h0M882.6 498.0h0M880.0 495.6h0M883.9 497.9h0M880.0 548.0h0M883.2 549.1h0M880.2 549.1h0M883.5 551.7h0M884.8 552.6h0M884.6 556.2h0M885.0 553.1h0M885.8 547.8h0M887.1 495.6h0M887.9 496.4h0M889.0 495.3h0M886.8 496.3h0M886.7 497.2h0M887.3 497.5h0M886.6 486.8h0M887.1 550.6h0M887.1 552.9h0M890.1 497.2h0M889.9 549.3h0M890.8 559.1h0M889.5 548.4h0M891.4 481.7h0M891.4 484.6h0M891.6 490.2h0M892.3 498.3h0M891.9 498.9h0M891.6 492.9h0M890.9 497.8h0M891.9 490.2h0M892.3 475.8h0M891.7 548.4h0M892.1 547.9h0M891.3 554.9h0M891.2 552.5h0M892.5 551.9h0M892.0 563.2h0M891.3 560.4h0M891.4 555.9h0M892.5 549.1h0M896.2 497.5h0M896.6 494.0h0M893.7 497.2h0M894.7 496.1h0M893.3 498.9h0M895.6 498.4h0M893.4 492.5h0M892.9 498.8h0M895.6 493.8h0M896.4 487.7h0M896.6 494.6h0M895.7 484.0h0M893.9 491.3h0M894.9 496.5h0M894.9 497.4h0M894.0 496.0h0M893.1 548.2h0M897.6 563.9h0M897.5 555.5h0M897.5 553.9h0M897.9 548.6h0M897.9 498.3h0M898.4 495.0h0M898.7 493.9h0M898.1 498.9h0M899.5 493.0h0M898.9 552.8h0M898.9 550.2h0M899.3 552.0h0M898.2 550.2h0M903.8 475.0h0M900.3 491.1h0M902.6 498.1h0M900.5 494.1h0M900.1 498.5h0M900.1 499.0h0M900.6 489.5h0M904.3 497.0h0M901.7 489.6h0M901.2 552.8h0M903.1 550.6h0M904.8 549.0h0M901.3 559.3h0M903.6 559.1h0M904.7 552.9h0M901.8 548.2h0M908.6 482.3h0M906.6 490.9h0M909.1 492.1h0M905.1 497.5h0M907.1 491.4h0M907.6 491.0h0M906.6 495.8h0M907.9 479.5h0M905.0 497.4h0M905.9 493.8h0M905.5 495.5h0M906.7 550.3h0M905.1 553.5h0M905.8 556.3h0M905.2 557.5h0M908.5 551.3h0M906.0 551.8h0M911.5 497.4h0M911.2 497.0h0M910.8 497.9h0M910.5 552.9h0M911.1 561.3h0M910.9 548.8h0M911.4 548.0h0M913.5 498.3h0M912.0 489.8h0M913.9 497.9h0M913.3 477.1h0M915.0 495.3h0M914.7 497.0h0M913.2 497.1h0M915.0 490.2h0M913.6 495.5h0M913.0 496.3h0M912.8 482.9h0M914.5 495.2h0M914.7 483.6h0M915.1 493.7h0M913.4 557.1h0M912.7 553.8h0M912.3 559.5h0M915.3 548.1h0M913.7 561.7h0M914.9 548.9h0M912.1 548.0h0M912.5 547.9h0M912.8 550.2h0M915.0 548.1h0M916.9 496.4h0M916.0 495.5h0M916.8 499.0h0M917.1 498.7h0M917.5 491.4h0M916.1 550.5h0M916.1 555.9h0M917.9 548.7h0M917.1 550.6h0M915.5 553.9h0M915.8 562.1h0M917.1 550.9h0M919.1 498.0h0M920.6 479.3h0M919.0 495.5h0M920.7 549.4h0M920.4 548.4h0M919.6 552.9h0M920.7 549.0h0M918.4 559.0h0M918.9 548.8h0M920.6 553.4h0M918.3 553.5h0M920.8 565.4h0M921.3 488.8h0M921.8 497.5h0M921.8 475.0h0M922.0 549.6h0M921.1 558.4h0M922.7 484.9h0M922.7 495.2h0M923.6 495.8h0M926.2 494.1h0M923.2 489.1h0M923.1 491.1h0M924.5 484.9h0M923.6 482.8h0M925.7 485.2h0M924.2 490.4h0M923.9 550.8h0M922.8 562.8h0M923.3 552.2h0M923.3 550.2h0M924.4 549.3h0M925.1 552.4h0M927.4 490.2h0M926.8 494.9h0M927.3 550.7h0M927.5 553.2h0M929.1 487.4h0M931.1 496.6h0M929.4 490.7h0M929.6 474.7h0M931.5 490.9h0M931.6 494.1h0M929.6 490.9h0M929.7 482.9h0M930.5 495.3h0M931.3 485.1h0M930.4 481.8h0M929.2 479.8h0M930.6 477.1h0M930.2 497.2h0M930.3 481.3h0M931.4 489.9h0M931.3 493.3h0M930.6 481.1h0M930.2 496.8h0M930.6 494.4h0M930.9 477.6h0M929.4 552.1h0M928.9 549.8h0M929.0 547.5h0M932.2 484.7h0M936.7 496.7h0M933.3 483.3h0M935.1 495.5h0M934.7 492.2h0M934.5 492.3h0M933.1 498.9h0M935.2 493.3h0M936.7 482.1h0M935.2 495.4h0M933.4 496.5h0M934.8 494.7h0M937.2 493.5h0M934.1 478.8h0M935.3 495.1h0M932.7 491.4h0M935.6 495.8h0M937.0 493.0h0M931.9 497.6h0M934.3 548.5h0M934.6 556.6h0M933.7 558.0h0M935.7 560.7h0M935.0 548.6h0M935.2 549.9h0M936.5 552.8h0M937.1 549.2h0M934.7 555.1h0M936.8 551.1h0M934.7 552.5h0M935.9 551.8h0M933.9 550.5h0M935.3 550.3h0M935.7 554.2h0M940.1 497.4h0M940.1 559.9h0M937.3 548.8h0M940.1 548.5h0M939.4 550.5h0M937.4 547.8h0M941.9 498.3h0M944.2 493.3h0M942.6 496.3h0M943.4 498.1h0M941.9 497.5h0M941.5 498.5h0M941.8 562.9h0M941.5 548.7h0M941.2 556.0h0M943.9 547.8h0M943.1 548.9h0M941.1 553.4h0M943.8 548.7h0M940.8 550.3h0M946.1 490.6h0M945.6 498.6h0M944.9 496.9h0M946.0 497.0h0M945.5 493.8h0M947.5 495.9h0M947.3 551.6h0M949.2 497.7h0M949.1 498.7h0M949.8 491.1h0M950.1 552.4h0M950.4 550.0h0M951.2 497.6h0M954.3 484.2h0M954.4 494.1h0M952.0 498.0h0M951.3 498.8h0M950.6 498.3h0M952.6 553.4h0M953.7 550.5h0M952.9 550.9h0M951.8 551.1h0M958.5 498.5h0M956.6 496.2h0M955.8 497.1h0M959.1 558.8h0M955.8 551.0h0M956.2 548.2h0M959.0 558.5h0M959.3 554.5h0M960.8 498.8h0M961.8 498.1h0M960.4 496.9h0M960.9 497.8h0M962.6 496.7h0M962.6 498.2h0M963.1 497.7h0M961.8 554.9h0M964.3 561.9h0M960.9 553.8h0M962.2 552.5h0M961.6 551.8h0M963.8 554.8h0M961.6 553.2h0M962.0 552.1h0M963.4 557.5h0M962.5 551.8h0M960.3 554.7h0M964.4 553.6h0M964.5 548.9h0M963.6 557.5h0M966.8 489.2h0M966.4 496.7h0M967.2 498.9h0M967.8 494.6h0M967.5 493.5h0M967.5 486.2h0M966.3 492.9h0M966.8 498.5h0M965.9 482.1h0M967.8 481.1h0M965.7 495.3h0M965.5 476.2h0M965.2 494.5h0M964.7 497.9h0M966.1 547.8h0M965.7 551.0h0M966.7 563.8h0M966.8 551.1h0M965.4 549.2h0M968.2 496.8h0M969.1 493.5h0M969.1 498.5h0M969.1 486.9h0M969.4 496.6h0M968.9 490.9h0M969.6 551.4h0M968.5 550.9h0M973.5 559.0h0M971.1 547.9h0M979.7 494.2h0M978.9 490.3h0M979.4 497.3h0M978.6 484.5h0M976.0 493.1h0M976.1 497.6h0M978.3 498.4h0M978.1 488.1h0M976.0 548.0h0M977.5 559.8h0M977.2 558.4h0M975.5 553.2h0M976.4 548.8h0M978.6 557.3h0M982.4 498.6h0M980.0 496.5h0M982.0 483.3h0M984.6 495.9h0M983.4 493.3h0M980.5 491.4h0M983.3 492.8h0M980.7 489.2h0M985.0 493.7h0M984.3 495.5h0M982.9 497.9h0M980.1 495.3h0M980.2 558.5h0M982.4 559.0h0M980.5 561.0h0M980.2 563.6h0M980.5 547.8h0M984.6 556.1h0M983.7 565.4h0M980.7 550.4h0M980.2 548.4h0M982.8 550.4h0M984.0 548.3h0M980.3 550.7h0M982.6 550.0h0M986.5 490.9h0M988.2 496.9h0M986.4 498.6h0M987.6 483.9h0M986.0 496.7h0M986.6 498.8h0M985.3 497.6h0M986.6 550.0h0M986.1 547.8h0M985.7 558.7h0M987.1 563.6h0M987.0 549.7h0M986.1 563.6h0M985.6 561.0h0M987.5 555.5h0M986.6 555.1h0M987.6 558.2h0M988.0 553.8h0M986.7 548.5h0M987.1 555.9h0M988.0 553.7h0M990.9 488.0h0M990.6 496.8h0M989.4 490.1h0M990.4 493.3h0M989.3 498.9h0M989.1 491.8h0M989.0 486.4h0M991.2 498.0h0M989.3 496.5h0M990.7 490.1h0M990.9 490.7h0M990.5 549.3h0M990.9 548.7h0M988.3 548.0h0M989.4 549.3h0M989.7 550.0h0M990.3 551.8h0M990.9 551.8h0M989.0 547.6h0M989.3 561.2h0M990.9 559.6h0M989.5 548.7h0M989.6 551.0h0M989.7 555.3h0M989.5 550.9h0M989.0 564.0h0M992.3 498.3h0M996.3 497.6h0M996.1 485.1h0M991.8 548.8h0M993.3 555.5h0M991.6 548.6h0M993.6 548.8h0M993.3 547.5h0M996.3 548.9h0M999.5 497.1h0M999.5 489.9h0M997.6 495.9h0M999.7 498.5h0M998.5 494.4h0M999.1 492.6h0M998.1 497.6h0M999.5 485.9h0M997.8 553.6h0M999.0 550.7h0M997.2 555.3h0M998.9 551.4h0M1000.2 484.5h0M1002.4 474.5h0M1000.9 495.0h0M1001.5 492.9h0M1004.0 498.7h0M1002.7 493.5h0M1004.0 490.2h0M1003.0 481.2h0M1004.4 494.5h0M1001.0 483.6h0M1002.7 476.5h0M1002.3 489.9h0M1002.2 491.7h0M1003.9 498.5h0M1001.9 476.6h0M1001.5 494.0h0M1001.0 497.6h0M1002.8 498.3h0M1004.4 499.0h0M1000.2 488.2h0M1000.5 490.8h0M1002.7 491.0h0M1000.5 486.8h0M1001.5 550.4h0M1000.8 559.1h0M1001.8 548.2h0M1004.2 547.9h0M1003.5 558.5h0M1001.8 551.6h0M1004.5 554.1h0M1005.7 497.7h0M1008.2 497.8h0M1009.0 497.6h0M1005.7 498.5h0M1007.5 548.5h0M1008.4 550.1h0M1008.7 549.3h0M1009.0 548.4h0M1004.6 549.7h0M1005.6 550.3h0M1006.9 548.3h0M1009.0 548.0h0M1008.5 549.3h0M1008.4 548.2h0M1006.2 553.5h0M1010.8 499.0h0M1010.0 552.5h0M1011.2 548.6h0M1011.8 550.5h0M1013.3 487.6h0M1013.3 491.4h0M1013.8 491.7h0M1013.1 562.2h0M1013.0 555.0h0M1013.9 556.1h0M1013.4 551.6h0M1012.7 549.3h0M1017.7 492.9h0M1017.7 492.9h0M1015.2 497.6h0M1017.1 498.3h0M1016.0 497.5h0M1016.7 551.6h0M1018.4 492.9h0M1018.8 498.5h0M1019.0 497.2h0M1018.1 497.3h0M1019.3 560.3h0M1017.9 548.8h0M1018.7 558.7h0M1018.8 551.8h0M1018.1 559.4h0M1020.4 494.4h0M1021.7 498.2h0M1021.5 495.7h0M1020.7 553.7h0M1022.8 548.2h0M1021.8 548.0h0M1023.9 550.5h0M1021.2 553.4h0M1023.5 554.9h0M1024.3 547.5h0M1022.3 559.6h0M1021.1 552.2h0M1022.3 550.2h0M1023.5 548.0h0M1027.2 483.6h0M1027.4 497.0h0M1024.9 496.4h0M1025.2 494.2h0M1028.1 494.8h0M1025.7 496.3h0M1028.4 498.4h0M1026.6 487.8h0M1025.4 492.8h0M1027.8 489.7h0M1027.6 494.9h0M1024.5 495.3h0M1024.6 486.4h0M1026.7 486.1h0M1027.6 495.3h0M1025.2 498.1h0M1027.5 489.9h0M1025.6 488.5h0M1027.2 483.3h0M1028.0 493.1h0M1026.5 550.4h0M1025.2 549.2h0M1026.7 553.6h0M1026.7 549.8h0M1026.9 547.5h0M1026.6 551.9h0M1028.0 549.5h0M1024.6 550.7h0M1025.1 552.4h0M1033.4 494.3h0M1030.4 481.8h0M1033.5 494.2h0M1031.8 477.7h0M1033.7 497.4h0M1030.3 493.3h0M1030.2 489.0h0M1029.2 494.7h0M1031.2 498.9h0M1032.9 498.4h0M1030.6 494.6h0M1029.3 490.4h0M1029.8 492.3h0M1031.7 495.4h0M1030.3 489.0h0M1028.9 496.5h0M1028.9 499.0h0M1030.8 498.0h0M1031.4 476.7h0M1029.3 496.3h0M1032.9 550.5h0M1030.2 561.3h0M1029.9 547.8h0M1031.4 548.1h0M1034.3 548.8h0M1030.6 547.8h0M1029.4 547.9h0M1033.6 549.3h0M1030.8 559.4h0M1034.1 558.7h0M1032.8 563.1h0M1031.1 550.9h0M1035.8 496.1h0M1035.8 498.6h0M1035.7 497.0h0M1036.6 491.8h0M1036.3 550.2h0M1035.5 559.1h0M1037.0 564.6h0M1036.9 549.4h0M1037.3 553.7h0M1034.9 550.4h0M1037.0 551.9h0M1034.8 564.9h0M1037.0 547.9h0M1035.8 549.5h0M1035.4 549.0h0M1035.4 547.9h0M1039.9 494.8h0M1039.9 494.8h0M1039.0 485.7h0M1038.9 490.0h0M1038.3 494.2h0M1038.4 496.5h0M1038.9 489.3h0M1040.1 498.1h0M1038.3 549.9h0M1039.5 547.8h0M1040.5 549.8h0M1044.3 495.6h0M1041.4 498.5h0M1044.7 498.9h0M1041.0 561.6h0M1041.7 556.8h0M1045.6 547.8h0M1046.5 498.7h0M1049.4 490.7h0M1045.8 498.5h0M1049.3 482.2h0M1049.1 488.1h0M1046.9 496.3h0M1049.4 498.8h0M1046.6 497.4h0M1047.5 550.5h0M1046.3 558.0h0M1050.3 551.1h0M1048.2 556.3h0M1053.6 494.7h0M1052.6 498.1h0M1053.2 493.2h0M1051.7 498.3h0M1051.0 497.9h0M1050.8 494.4h0M1050.7 551.0h0M1053.5 559.3h0M1053.3 550.5h0M1050.6 550.5h0M1051.5 549.7h0M1052.9 550.4h0M1052.7 548.8h0M1056.1 494.5h0M1054.1 497.0h0M1053.9 554.1h0M1054.5 557.1h0M1055.5 550.7h0M1059.8 487.1h0M1060.1 497.7h0M1059.8 497.0h0M1060.3 499.0h0M1059.9 498.9h0M1057.2 490.6h0M1059.8 492.6h0M1059.6 498.4h0M1059.2 493.7h0M1060.9 496.7h0M1056.9 491.6h0M1057.2 552.5h0M1057.3 550.2h0M1060.5 552.9h0M1060.7 548.8h0M1056.8 549.0h0M1057.4 548.3h0M1058.2 551.0h0M1058.0 550.1h0M1058.5 549.6h0M1059.2 550.4h0M1059.3 550.5h0M1062.0 494.1h0M1064.9 495.0h0M1062.8 494.3h0M1062.2 492.8h0M1061.9 482.5h0M1061.6 488.3h0M1064.4 497.9h0M1064.4 495.7h0M1064.1 498.7h0M1063.2 497.5h0M1063.4 494.9h0M1063.8 548.3h0M1064.6 560.3h0M1063.5 547.7h0M1064.7 550.7h0M1065.5 547.7h0M1061.6 550.9h0M1065.8 497.2h0M1066.8 494.6h0M1066.3 496.1h0M1067.0 479.4h0M1065.9 547.9h0M1067.2 550.3h0M1067.1 548.3h0M1066.9 552.5h0M1067.3 495.8h0M1068.4 492.1h0M1071.3 474.8h0M1069.7 495.4h0M1071.6 497.6h0M1067.6 494.7h0M1068.2 475.0h0M1071.4 497.6h0M1068.3 480.4h0M1070.9 496.1h0M1070.4 494.1h0M1068.9 493.1h0M1068.0 492.6h0M1070.4 480.4h0M1068.6 491.1h0M1069.1 493.4h0M1071.1 495.0h0M1069.7 480.4h0M1068.5 549.4h0M1069.7 548.7h0M1070.8 547.6h0M1069.2 563.4h0M1071.0 554.7h0M1069.6 553.4h0M1069.0 551.4h0M1070.3 550.2h0M1074.2 496.9h0M1074.3 496.9h0M1071.8 548.4h0M1072.4 548.0h0M1071.9 548.4h0M1073.6 552.9h0M1074.8 498.1h0M1075.6 562.5h0M1076.1 551.0h0M1075.2 555.5h0M1075.5 550.8h0M1076.7 497.8h0M1077.3 496.5h0M1077.8 495.8h0M1078.2 551.8h0M1076.7 549.5h0M1076.9 558.7h0M1078.1 551.0h0M1082.9 498.1h0M1082.9 497.1h0M1082.6 495.0h0M1082.0 497.4h0M1078.6 497.0h0M1082.6 499.0h0M1082.7 494.0h0M1080.4 495.9h0M1079.4 498.9h0M1083.0 547.9h0M1081.6 548.3h0M1083.0 550.5h0M1084.4 498.7h0M1087.4 495.8h0M1085.0 565.2h0M1084.6 549.4h0M1085.3 550.6h0M1086.1 548.3h0M1083.6 558.2h0M1088.4 497.7h0M1088.8 498.9h0M1089.3 498.9h0M1087.7 550.3h0M1089.7 554.3h0M1090.3 562.7h0M1088.9 554.7h0M1088.4 547.7h0M1090.3 549.5h0M1090.2 554.6h0M1089.4 547.8h0M1091.3 554.9h0M1087.7 553.1h0M1093.4 487.7h0M1094.7 492.4h0M1093.7 494.0h0M1091.5 481.9h0M1091.9 492.4h0M1092.8 486.9h0M1094.5 486.7h0M1094.2 485.4h0M1094.1 479.0h0M1091.9 493.2h0M1093.7 483.5h0M1094.4 494.3h0M1092.7 498.1h0M1093.9 479.4h0M1092.7 495.9h0M1091.6 492.9h0M1093.1 478.4h0M1093.0 484.7h0M1093.1 483.3h0M1092.3 497.2h0M1093.9 475.7h0M1093.0 479.7h0M1092.4 495.5h0M1093.7 494.3h0M1094.3 498.8h0M1091.8 498.2h0M1093.6 496.7h0M1094.4 557.8h0M1094.1 558.4h0M1091.8 549.0h0M1092.2 550.5h0M1094.7 547.6h0M1093.4 558.2h0M1094.1 548.2h0M1093.8 547.5h0M1093.6 549.3h0M1092.6 558.2h0M1092.5 548.3h0M1094.8 553.1h0M1092.8 555.9h0M1095.3 549.3h0M1096.0 563.2h0M1096.8 554.8h0M1096.7 551.3h0M1095.8 550.8h0M1095.7 549.1h0M1096.7 553.9h0M1097.1 553.1h0M1096.1 552.1h0M1098.4 496.4h0M1099.1 487.5h0M1097.5 498.8h0M1097.9 490.1h0M1098.7 490.0h0M1097.3 491.9h0M1098.0 496.6h0M1098.7 475.9h0M1098.1 490.6h0M1098.0 488.4h0M1099.1 484.3h0M1099.0 489.9h0M1098.3 488.2h0M1099.3 493.2h0M1098.6 484.4h0M1097.7 555.9h0M1099.5 548.6h0M1099.3 555.7h0M1098.0 548.1h0M1100.6 488.7h0M1100.1 497.3h0M1099.8 496.5h0M1101.0 492.5h0M1100.2 483.8h0M1100.9 492.9h0M1100.8 553.2h0M1100.1 550.4h0M1099.9 548.0h0M1101.1 549.2h0M1102.8 480.6h0M1105.2 491.7h0M1104.8 495.1h0M1104.9 498.7h0M1102.6 478.6h0M1102.2 494.9h0M1105.1 495.3h0M1103.3 498.8h0M1104.7 491.5h0M1101.5 490.6h0M1101.7 487.4h0M1101.8 488.7h0M1101.7 477.7h0M1103.2 493.7h0M1105.5 490.7h0M1101.5 498.0h0M1102.6 498.9h0M1105.9 491.5h0M1104.5 551.8h0M1105.6 552.7h0M1105.2 555.8h0M1106.3 547.7h0M1103.1 553.8h0M1104.3 548.4h0M1110.2 497.9h0M1108.1 498.5h0M1108.6 492.6h0M1110.4 554.3h0M1109.5 554.4h0M1111.2 547.6h0M1106.7 552.5h0M1110.0 551.8h0M1110.8 549.7h0M1109.0 565.3h0M1109.4 550.1h0M1109.3 554.4h0M1108.4 550.9h0M1110.6 557.4h0M1111.7 493.9h0M1112.1 489.8h0M1113.4 498.1h0M1111.6 495.1h0M1113.3 551.0h0M1112.0 549.2h0M1113.5 551.8h0M1114.1 498.3h0M1115.4 483.6h0M1115.0 496.7h0M1115.4 492.6h0M1114.8 498.0h0M1115.8 547.8h0M1114.2 561.8h0M1116.9 496.4h0M1116.8 499.0h0M1118.2 495.3h0M1120.0 497.6h0M1116.7 493.4h0M1117.1 498.6h0M1117.6 492.6h0M1119.2 495.6h0M1117.2 494.0h0M1119.6 496.0h0M1119.5 490.9h0M1119.0 497.0h0M1116.3 484.6h0M1116.3 494.1h0M1119.0 498.5h0M1117.0 549.5h0M1119.3 549.4h0M1117.2 550.2h0M1122.5 495.9h0M1120.1 496.3h0M1122.3 487.9h0M1120.7 494.1h0M1124.5 493.3h0M1125.4 479.1h0M1124.2 495.7h0M1122.4 488.0h0M1123.6 549.6h0M1125.4 553.6h0M1120.2 549.2h0M1124.4 548.4h0M1124.2 549.7h0M1121.5 553.3h0M1125.7 548.6h0M1122.2 549.0h0M1121.1 549.1h0M1124.7 550.5h0M1122.2 553.0h0M1120.4 551.4h0M1123.1 552.8h0M1123.8 549.8h0M1123.4 548.1h0M1122.4 551.8h0M1123.4 551.2h0M1123.5 554.5h0M1128.3 498.2h0M1128.3 549.9h0M1127.3 547.6h0M1128.1 548.2h0M1127.7 550.5h0M1129.1 490.3h0M1132.3 483.5h0M1132.8 485.1h0M1130.9 492.0h0M1133.1 496.9h0M1129.2 493.8h0M1130.3 491.6h0M1128.8 495.0h0M1134.1 496.9h0M1131.9 498.2h0M1130.6 481.2h0M1134.0 494.4h0M1131.7 499.0h0M1133.0 476.6h0M1130.6 496.6h0M1129.4 489.4h0M1134.0 485.2h0M1130.4 492.2h0M1133.8 494.9h0M1134.6 552.7h0M1133.8 552.6h0M1128.7 556.3h0M1132.5 552.4h0M1133.5 555.6h0M1130.6 548.2h0M1129.4 548.6h0M1130.6 560.5h0M1131.1 550.8h0M1131.8 558.9h0M1130.6 548.8h0M1130.6 550.3h0M1131.6 550.1h0M1130.0 553.5h0M1136.4 486.9h0M1135.7 496.0h0M1136.7 492.1h0M1134.6 495.3h0M1138.2 492.5h0M1136.9 498.3h0M1134.8 498.6h0M1134.8 496.5h0M1135.7 556.1h0M1136.5 557.4h0M1136.3 549.4h0M1134.7 553.4h0M1137.9 552.8h0M1138.3 552.7h0M1137.2 547.7h0M1135.2 553.6h0M1140.2 478.0h0M1140.8 475.3h0M1139.3 498.9h0M1140.4 496.6h0M1139.9 498.9h0M1140.9 482.1h0M1140.6 490.9h0M1140.8 498.7h0M1138.7 486.9h0M1140.2 486.4h0M1139.0 496.8h0M1138.5 489.9h0M1139.7 489.6h0M1140.9 497.2h0M1139.2 497.3h0M1140.4 489.5h0M1140.0 497.8h0M1139.3 555.7h0M1140.0 559.6h0M1139.4 551.9h0M1140.7 561.2h0M1140.2 560.3h0M1141.0 555.0h0M1140.1 562.8h0M1139.6 556.6h0M1141.0 551.3h0M1139.6 548.6h0M1138.8 556.5h0M1138.6 549.5h0M1142.2 491.9h0M1142.0 491.8h0M1142.0 492.7h0M1143.8 496.2h0M1143.2 492.8h0M1141.7 496.8h0M1142.1 498.2h0M1141.1 498.7h0M1141.2 498.9h0M1143.3 485.1h0M1143.5 498.3h0M1141.9 553.6h0M1143.5 548.1h0M1143.4 551.2h0M1141.5 548.1h0M1143.0 547.7h0M1148.6 497.0h0M1143.9 498.8h0M1148.1 498.5h0M1145.1 495.0h0M1146.4 492.8h0M1144.7 498.7h0M1144.4 497.9h0M1144.7 487.9h0M1144.6 493.7h0M1146.3 494.9h0M1145.7 559.8h0M1144.2 551.0h0M1148.4 551.5h0M1149.6 548.0h0M1144.9 551.3h0M1146.9 555.8h0M1144.7 553.7h0M1145.9 552.3h0M1148.9 550.0h0M1152.1 494.4h0M1152.2 495.6h0M1152.1 497.4h0M1153.4 490.5h0M1151.1 491.7h0M1152.8 494.9h0M1150.7 490.9h0M1150.9 497.0h0M1155.1 551.1h0M1150.3 548.8h0M1154.2 551.4h0M1152.3 554.8h0M1154.8 548.0h0M1150.3 547.9h0M1152.1 551.3h0M1154.1 551.3h0M1150.9 547.7h0M1152.4 552.5h0M1156.3 497.6h0M1156.8 497.7h0M1158.8 494.9h0M1156.2 497.5h0M1158.6 549.7h0M1156.2 560.3h0M1158.7 558.6h0M1157.0 548.0h0M1155.9 548.5h0M1160.2 488.8h0M1161.0 478.0h0M1159.8 488.4h0M1159.2 495.1h0M1159.6 493.1h0M1160.0 495.0h0M1160.7 494.0h0M1159.8 489.8h0M1159.4 484.3h0M1160.4 498.4h0M1160.2 488.2h0M1160.5 547.6h0M1159.2 552.7h0M1160.2 550.4h0M1162.9 497.3h0M1162.6 494.5h0M1162.3 485.4h0M1161.1 497.1h0M1163.4 494.0h0M1163.7 498.1h0M1163.8 558.6h0M1163.5 548.4h0M1163.3 560.5h0M1162.4 557.5h0M1162.4 553.4h0M1161.9 551.3h0M1161.1 552.5h0M1166.9 492.5h0M1165.8 495.5h0M1167.1 497.8h0M1164.9 479.8h0M1167.0 498.6h0M1164.7 489.3h0M1167.1 493.9h0M1167.0 498.2h0M1167.6 497.4h0M1167.2 497.5h0M1165.4 485.9h0M1167.6 497.8h0M1164.0 487.9h0M1165.9 548.8h0M1165.0 551.1h0M1165.3 548.7h0M1165.8 547.8h0M1165.1 560.6h0M1169.3 495.6h0M1170.5 497.3h0M1170.0 498.5h0M1170.7 497.9h0M1172.7 499.0h0M1170.0 496.7h0M1169.4 489.8h0M1172.8 488.4h0M1171.1 494.5h0M1171.0 494.6h0M1171.8 496.5h0M1170.4 496.4h0M1171.6 494.8h0M1171.8 492.1h0M1171.1 491.1h0M1168.3 553.2h0M1167.9 551.2h0M1168.3 556.5h0M1172.4 549.7h0M1168.0 549.4h0M1173.0 496.9h0M1172.9 496.0h0M1174.4 549.6h0M1174.0 547.9h0M1173.1 555.8h0M1173.4 553.5h0M1174.5 548.7h0M1173.2 547.9h0M1178.3 498.6h0M1177.9 498.5h0M1175.4 563.3h0M1177.4 549.7h0M1177.7 548.2h0M1175.1 555.1h0M1178.0 557.6h0M1175.7 550.3h0M1177.4 559.7h0M1182.3 484.6h0M1180.2 498.6h0M1182.9 489.7h0M1182.9 498.5h0M1180.9 498.7h0M1178.5 492.9h0M1179.8 552.0h0M1182.7 547.5h0M1182.8 550.4h0M1181.8 554.6h0M1178.9 547.9h0M1180.9 555.6h0M1187.2 488.4h0M1187.0 498.2h0M1183.2 475.7h0M1183.5 498.1h0M1182.9 488.3h0M1187.3 497.7h0M1184.2 496.1h0M1184.7 491.4h0M1183.1 494.0h0M1186.3 498.7h0M1185.8 492.5h0M1188.1 482.5h0M1185.2 498.9h0M1186.1 549.4h0M1186.7 548.7h0M1187.8 549.1h0M1187.5 556.0h0M1183.4 554.0h0M1185.3 550.9h0M1184.6 560.9h0M1189.0 496.3h0M1193.1 489.1h0M1191.8 494.6h0M1189.9 497.1h0M1191.1 497.8h0M1191.8 497.6h0M1188.8 491.2h0M1194.0 492.4h0M1190.0 495.8h0M1193.7 498.6h0M1189.1 482.0h0M1193.3 497.1h0M1193.4 552.6h0M1191.6 548.9h0M1189.8 550.2h0M1195.0 497.6h0M1194.2 492.0h0M1194.9 498.2h0M1194.6 498.5h0M1195.4 497.8h0M1195.6 562.5h0M1194.4 549.6h0M1194.4 556.9h0M1194.4 549.9h0M1195.2 550.1h0M1195.6 548.9h0M1196.3 498.9h0M1196.0 498.9h0M1196.6 548.8h0M1197.4 556.0h0M1201.2 496.2h0M1197.9 483.1h0M1200.3 493.5h0M1200.0 490.9h0M1199.9 497.9h0M1201.5 492.9h0M1201.2 494.6h0M1198.9 495.5h0M1197.7 487.0h0M1201.4 497.9h0M1200.6 492.8h0M1198.6 559.0h0M1199.0 552.1h0M1200.8 553.2h0M1200.8 553.9h0M1200.7 563.1h0M1199.1 556.1h0M1200.9 562.7h0M1198.2 564.2h0M1198.7 555.5h0M1200.7 557.4h0M1200.7 564.5h0M1200.3 554.7h0M1197.9 559.6h0M1199.5 558.2h0M1201.1 549.5h0M1197.7 556.6h0M1200.8 564.3h0M1198.7 563.6h0M1200.0 552.2h0M1198.5 563.9h0M1200.5 554.4h0M1201.2 551.7h0M1198.9 555.0h0M1203.0 497.4h0M1203.3 480.8h0M1203.1 489.1h0M1202.8 492.2h0M1202.1 497.5h0M1205.6 496.0h0M1204.8 494.8h0M1205.8 497.5h0M1204.7 489.4h0M1205.7 492.1h0M1206.6 491.6h0M1203.9 496.3h0M1206.4 496.9h0M1204.1 548.9h0M1205.9 552.0h0M1206.2 549.7h0M1204.7 550.6h0M1207.5 485.9h0M1212.0 490.6h0M1209.9 492.8h0M1212.3 496.6h0M1210.9 498.5h0M1212.0 486.2h0M1211.8 488.8h0M1208.0 493.9h0M1207.7 490.7h0M1207.4 478.9h0M1212.5 493.5h0M1208.5 496.0h0M1210.5 484.1h0M1207.4 495.2h0M1212.6 494.0h0M1210.7 495.4h0M1210.1 487.6h0M1209.5 498.4h0M1209.8 490.8h0M1209.6 492.0h0M1208.6 498.5h0M1210.9 491.4h0M1207.7 497.6h0M1207.4 495.4h0M1210.1 495.4h0M1209.6 491.8h0M1212.1 498.3h0M1207.4 492.1h0M1209.5 561.2h0M1208.1 549.6h0M1209.0 558.2h0M1209.6 557.4h0M1209.7 557.9h0M1210.3 557.0h0M1207.7 558.0h0M1212.3 562.7h0M1210.9 557.7h0M1208.0 548.4h0M1208.0 552.0h0M1212.1 561.2h0M1209.5 550.8h0M1211.1 548.3h0M1216.3 498.0h0M1213.8 493.6h0M1213.3 493.3h0M1213.8 478.8h0M1214.2 495.5h0M1215.8 495.1h0M1213.6 493.2h0M1213.1 495.5h0M1215.2 488.6h0M1214.4 547.8h0M1212.9 548.8h0M1213.6 550.9h0M1215.1 551.5h0M1215.6 554.4h0M1213.5 555.3h0M1213.8 549.8h0M1215.6 559.8h0M1213.9 550.5h0M1214.3 561.4h0M1215.0 548.5h0M1214.5 548.3h0M1213.6 548.3h0M1218.5 498.9h0M1219.9 474.6h0M1219.8 496.8h0M1216.6 487.3h0M1218.9 493.8h0M1219.1 494.0h0M1218.4 498.8h0M1217.8 491.4h0M1219.9 491.1h0M1217.8 550.6h0M1218.2 551.0h0M1217.6 549.5h0M1219.9 547.9h0M1216.9 554.4h0M1218.4 549.2h0M1219.3 564.6h0M1216.8 555.6h0M1218.6 556.0h0M1220.5 497.9h0M1221.5 550.4h0M1220.5 547.6h0M1220.7 547.9h0M1220.2 548.8h0M1223.8 494.1h0M1222.6 496.6h0M1222.3 494.1h0M1224.9 496.7h0M1222.6 493.6h0M1225.6 483.7h0M1224.5 498.4h0M1222.5 497.4h0M1223.3 498.7h0M1223.7 495.3h0M1225.0 498.2h0M1225.0 496.0h0M1223.7 497.1h0M1224.0 492.7h0M1224.2 492.7h0M1225.5 496.4h0M1225.3 551.2h0M1222.6 556.9h0M1223.9 551.7h0M1225.5 552.2h0M1224.6 549.4h0M1224.7 549.2h0M1223.3 560.7h0M1227.0 496.7h0M1227.7 549.5h0M1226.3 547.7h0M1227.5 549.6h0M1229.2 497.1h0M1228.3 496.8h0M1227.8 552.4h0M1229.2 550.3h0M1232.1 497.7h0M1234.0 489.1h0M1233.9 498.8h0M1234.5 494.8h0M1234.1 498.4h0M1230.7 483.6h0M1232.1 497.9h0M1231.7 475.5h0M1232.2 490.4h0M1231.7 487.7h0M1235.4 495.6h0M1231.7 494.1h0M1230.2 494.0h0M1235.3 498.6h0M1230.5 496.0h0M1231.1 492.7h0M1234.5 498.7h0M1234.3 492.7h0M1231.8 496.1h0M1234.7 494.4h0M1233.4 489.9h0M1234.9 498.2h0M1231.7 494.8h0M1231.6 493.6h0M1230.7 550.6h0M1235.2 554.0h0M1235.2 548.4h0M1235.0 557.7h0M1238.5 497.6h0M1236.8 493.0h0M1238.4 494.2h0M1236.7 492.4h0M1237.4 486.4h0M1236.0 490.1h0M1237.3 494.2h0M1235.9 487.1h0M1236.6 553.4h0M1237.6 547.9h0M1236.4 556.8h0M1236.7 552.3h0M1237.0 550.2h0M1237.9 548.3h0M1239.4 490.5h0M1243.0 497.5h0M1239.8 489.2h0M1239.3 496.6h0M1243.1 494.1h0M1238.9 492.4h0M1242.5 498.7h0M1240.7 497.8h0M1243.2 490.8h0M1240.0 497.4h0M1241.0 498.5h0M1241.9 497.3h0M1243.3 495.3h0M1240.9 493.3h0M1242.1 491.7h0M1240.2 559.0h0M1243.4 550.5h0M1243.1 547.6h0M1242.5 558.3h0M1241.2 551.3h0M1242.1 550.0h0M1242.4 549.7h0M1246.0 493.0h0M1245.1 492.9h0M1245.9 493.9h0M1245.7 480.9h0M1244.7 496.3h0M1245.8 496.2h0M1245.0 475.8h0M1244.4 486.3h0M1246.6 493.1h0M1244.3 487.8h0M1246.2 497.4h0M1245.6 481.8h0M1246.5 496.0h0M1245.7 496.1h0M1245.5 481.4h0M1245.6 497.5h0M1245.5 496.7h0M1246.4 495.3h0M1244.2 558.8h0M1244.5 549.9h0M1246.3 548.5h0M1245.8 553.9h0M1244.3 548.6h0M1250.7 498.7h0M1252.6 498.9h0M1247.4 498.0h0M1251.6 498.1h0M1249.5 564.0h0M1251.2 548.0h0M1251.1 550.9h0M1248.0 561.4h0M1249.7 557.7h0M1247.8 554.5h0M1248.6 548.9h0M1248.3 558.7h0M1247.6 548.6h0M1247.5 549.2h0M1248.0 549.4h0M1251.5 550.7h0M1251.1 549.6h0M1250.8 565.3h0M1249.4 552.6h0M1250.3 549.5h0M1247.6 548.9h0M1250.7 551.1h0M1250.3 550.7h0M1250.8 548.1h0M1248.2 558.7h0M1250.3 552.0h0M1248.1 556.5h0M1251.2 549.0h0M1251.3 551.0h0M1256.7 489.3h0M1253.5 483.3h0M1254.5 497.5h0M1253.5 497.8h0M1252.8 496.6h0M1254.6 498.3h0M1253.8 496.3h0M1256.9 494.5h0M1255.1 561.5h0M1254.1 557.3h0M1256.4 551.9h0M1254.1 549.1h0M1255.9 559.6h0M1255.8 547.7h0M1256.6 549.1h0M1257.7 495.8h0M1257.1 557.3h0M1257.2 551.4h0M1257.8 549.0h0M1258.6 549.5h0M1257.4 562.3h0M1258.6 565.2h0M1262.4 496.7h0M1260.4 497.6h0M1259.4 496.9h0M1259.6 498.4h0M1261.1 489.5h0M1261.0 498.8h0M1261.8 496.8h0M1262.8 488.8h0M1261.9 549.0h0M1260.6 549.2h0M1262.7 564.6h0M1262.1 554.1h0M1261.6 548.0h0M1259.4 558.3h0M1261.4 558.6h0M1262.9 551.6h0M1260.2 555.3h0M1260.1 560.6h0M1262.9 558.0h0M1261.2 557.6h0M1262.8 561.4h0M1259.3 558.1h0M1259.4 560.5h0M1261.2 548.0h0M1261.0 548.3h0M1259.2 559.0h0M1263.2 553.2h0M1263.6 556.4h0M737.1 498.9h0M681.9 503.0h0M1077.1 500.8h0M1025.2 501.6h0M1031.4 499.9h0M501.6 499.8h0M221.1 501.4h0M755.4 500.9h0M225.4 499.6h0M877.2 501.5h0M995.7 501.6h0M689.9 500.5h0M459.4 503.0h0M480.1 500.8h0M1230.0 503.9h0M1126.1 500.1h0M1185.7 500.3h0M252.0 501.2h0M572.7 499.0h0M543.8 500.0h0M936.8 500.6h0M1135.3 497.5h0M980.3 502.4h0M351.0 498.8h0M793.8 502.7h0M211.5 497.6h0M823.9 500.2h0M1254.4 500.7h0M269.7 497.5h0M374.0 501.1h0M1027.1 502.6h0M1102.9 501.0h0M171.5 503.7h0M849.5 498.7h0M324.9 503.0h0M345.0 500.0h0M823.5 502.9h0M1245.6 498.8h0M994.8 501.1h0M1061.5 499.4h0M928.2 499.1h0M740.3 502.1h0M285.0 501.4h0M1016.8 499.7h0M347.2 498.8h0M936.8 502.7h0M371.3 499.3h0M475.9 500.9h0M914.4 502.1h0M596.5 500.4h0M250.5 501.6h0M714.6 499.7h0M782.7 504.0h0M1073.2 503.9h0M853.7 502.1h0M1053.6 502.0h0M848.0 502.3h0M789.1 503.6h0M471.5 503.4h0M949.9 501.0h0M384.4 501.6h0M535.5 499.0h0M951.6 498.0h0M1041.5 503.9h0M295.2 500.1h0M1204.1 498.3h0M1080.7 502.1h0M1076.4 502.5h0M1231.7 501.9h0M895.6 502.4h0M199.5 500.3h0M1195.6 497.7h0M751.6 497.8h0M319.9 503.2h0M914.5 503.5h0M764.7 500.9h0M670.0 502.9h0M1162.6 499.0h0M850.4 497.9h0M874.8 502.8h0M1228.0 500.8h0M352.1 501.1h0M1047.8 498.6h0M639.9 500.1h0M974.0 497.6h0M369.5 497.7h0M669.8 498.6h0M501.6 502.1h0M1214.1 502.5h0M1054.6 500.6h0M628.4 500.1h0M1068.0 498.7h0M864.6 501.9h0M1102.4 498.0h0M1007.3 499.7h0M482.2 502.9h0M449.5 498.0h0M478.3 502.1h0M913.1 502.6h0M1056.8 503.7h0M720.2 497.8h0M499.2 500.1h0M1036.4 499.0h0M403.9 503.1h0M777.0 502.2h0M793.4 498.6h0M362.0 499.3h0M960.5 502.4h0M924.6 499.8h0M946.9 499.8h0M684.2 499.7h0M597.6 497.7h0M803.4 498.1h0M1087.9 497.6h0M1129.2 501.6h0M963.7 501.7h0M296.8 503.0h0M1026.7 500.5h0M396.6 497.8h0M217.4 498.4h0M361.0 501.2h0M790.9 498.3h0M439.3 499.8h0M636.4 499.4h0M688.4 500.4h0M712.5 503.8h0M580.2 498.7h0M875.6 499.9h0M1081.3 501.4h0M902.6 503.8h0M735.1 503.4h0M184.8 498.8h0M350.1 502.6h0M456.1 500.0h0M395.4 502.0h0M551.1 500.2h0M515.7 502.4h0M340.6 500.2h0M916.3 501.6h0M886.7 501.1h0M704.1 503.7h0M1262.1 501.8h0M183.8 501.6h0M1003.0 499.5h0M665.9 503.2h0M335.7 501.5h0M651.2 499.8h0M1018.3 499.2h0M352.7 502.3h0M1231.9 502.7h0M439.3 499.2h0M1092.9 499.5h0M784.7 498.9h0M1178.3 501.8h0M376.4 503.2h0M174.7 500.0h0M308.4 499.6h0M1231.4 503.1h0M720.2 503.6h0M234.3 503.1h0M335.2 500.3h0M291.4 502.1h0M1158.4 499.0h0M325.5 498.5h0M388.4 497.5h0M884.4 503.4h0M349.9 499.7h0M879.0 499.4h0M360.0 503.7h0M343.4 503.4h0M1003.5 503.7h0M980.4 500.0h0M445.7 498.9h0M1122.8 501.9h0M539.6 499.9h0M1095.5 501.7h0M774.5 498.2h0M393.8 502.1h0M414.2 499.6h0M825.9 498.2h0M479.9 503.6h0M1251.0 503.2h0M568.5 499.4h0M499.2 501.7h0M1040.4 502.4h0M782.7 499.8h0M752.3 497.6h0M800.3 498.5h0M708.5 497.7h0M402.6 500.4h0M412.5 498.3h0M172.0 503.2h0M1253.0 498.7h0M769.3 498.6h0M1165.1 499.9h0M331.3 500.5h0M373.7 501.1h0M764.2 497.9h0M1054.6 500.5h0M708.2 498.1h0M766.6 502.5h0M1036.3 500.3h0M957.5 498.6h0M738.0 499.1h0M1232.1 499.3h0M558.6 503.8h0M753.3 501.3h0M1226.3 502.9h0M254.7 503.9h0M1253.0 502.9h0M1038.7 499.2h0M182.0 500.6h0M386.9 498.8h0M1193.8 501.0h0M1140.9 501.8h0M1118.4 503.5h0M558.6 498.1h0M510.1 503.3h0M299.5 501.3h0M209.4 503.4h0M915.4 499.5h0M916.8 498.5h0M1040.5 500.6h0M639.3 502.7h0M485.3 503.4h0M812.5 501.0h0M1028.5 500.6h0M750.5 499.9h0M649.6 503.3h0M489.7 503.6h0M918.1 498.7h0M816.2 500.4h0M335.4 503.7h0M439.3 503.8h0M1155.1 501.0h0M686.3 502.4h0M246.4 503.1h0M1190.2 499.2h0M209.6 497.9h0M1175.3 503.7h0M700.4 503.0h0M851.4 500.0h0M868.9 498.3h0M637.3 499.6h0M1263.5 499.3h0M440.9 501.9h0M554.2 501.9h0M672.5 499.3h0M349.6 497.9h0M1173.6 502.9h0M635.4 499.4h0M587.4 503.1h0M192.0 498.0h0M841.9 498.1h0M595.3 503.4h0M256.7 503.2h0M252.4 499.5h0M991.0 498.7h0M403.1 499.2h0M653.5 498.7h0M772.7 501.1h0M828.6 502.0h0M385.1 499.1h0M558.9 498.2h0M244.6 501.1h0M329.3 499.2h0M195.0 503.8h0M1079.3 502.8h0M813.2 498.5h0M839.7 499.5h0M293.1 501.4h0M243.9 497.6h0M220.1 503.4h0M1137.2 501.3h0M603.3 498.8h0M214.5 503.5h0M1214.9 500.7h0M367.5 503.8h0M1094.9 501.5h0M1083.2 501.4h0M381.4 501.8h0M293.5 499.3h0M164.3 497.6h0M193.8 497.9h0M329.2 502.8h0M1128.4 500.1h0M239.3 502.9h0M1215.6 498.3h0M460.4 500.3h0M165.3 500.2h0M531.0 498.9h0M370.8 502.8h0M1096.3 499.4h0M412.2 500.3h0M429.6 503.9h0M204.6 498.5h0M203.1 499.1h0M300.4 503.8h0M784.2 501.7h0M756.8 498.1h0M1049.1 500.7h0M503.4 500.6h0M1112.5 501.1h0M186.7 498.1h0M565.3 500.2h0M326.3 499.6h0M762.2 503.1h0M445.6 502.6h0M539.5 501.7h0M203.2 497.7h0M377.3 503.7h0M186.8 501.2h0M810.9 503.7h0M473.1 500.8h0M230.8 501.8h0M814.5 499.1h0M559.3 503.3h0M628.3 499.7h0M448.6 499.1h0M600.9 502.0h0M1259.0 502.6h0M848.7 502.7h0M969.2 501.2h0M688.1 504.0h0M830.2 503.7h0M924.2 498.0h0M669.6 499.3h0M1091.1 498.5h0M1211.3 498.8h0M952.1 501.1h0M539.4 503.8h0M1102.7 502.0h0M639.9 497.5h0M220.8 502.3h0M545.4 497.7h0M827.4 501.5h0M250.2 500.5h0M927.5 499.5h0M317.7 499.1h0M1224.8 497.8h0M710.4 498.8h0M378.6 503.3h0M239.7 502.1h0M1197.1 500.8h0M529.8 503.8h0M427.1 498.6h0M802.3 498.7h0M394.5 503.9h0M865.2 498.7h0M932.7 503.1h0M868.1 503.4h0M847.7 499.6h0M503.7 503.6h0M954.1 498.3h0M1006.7 497.6h0M1165.6 498.0h0M559.8 503.1h0M977.2 503.9h0M542.5 503.8h0M841.0 498.6h0M426.7 503.6h0M1068.1 501.3h0M698.7 499.6h0M329.6 501.6h0M590.9 500.0h0M884.8 503.3h0M315.5 499.1h0M1101.8 503.0h0M331.8 501.1h0M976.5 498.4h0M196.2 501.7h0M641.6 499.6h0M789.0 503.8h0M909.2 497.9h0M1085.4 502.3h0M619.7 503.0h0M1065.7 499.0h0M1024.9 503.9h0M640.8 501.2h0M896.4 503.8h0M1044.9 497.8h0M510.9 503.6h0M275.4 503.7h0M320.4 503.2h0M1030.3 499.4h0M318.0 501.3h0M1197.4 499.7h0M660.7 497.9h0M498.3 500.6h0M513.2 499.7h0M818.3 502.5h0M265.7 503.0h0M241.1 500.2h0M1151.1 502.9h0M1016.6 498.9h0M726.9 501.6h0M1136.7 498.6h0M694.9 503.4h0M703.1 503.3h0M235.4 498.9h0M1079.4 500.8h0M433.3 501.2h0M605.4 503.1h0M170.2 499.1h0M913.8 502.2h0M1026.6 500.3h0M1021.1 501.8h0M797.2 502.0h0M513.8 503.4h0M1251.9 502.2h0M449.3 503.9h0M829.1 500.6h0M879.8 498.3h0M777.0 503.5h0M1023.7 499.2h0M426.0 498.9h0M413.4 501.3h0M1236.5 498.9h0M681.6 501.6h0M921.2 498.5h0M820.5 497.7h0M852.9 499.9h0M232.9 498.8h0M196.7 503.3h0M843.5 499.3h0M1025.1 503.8h0M712.7 497.6h0M1225.8 503.9h0M590.7 503.5h0M468.0 499.6h0M509.1 501.1h0M843.9 502.0h0M963.6 502.5h0M767.3 501.1h0M1084.1 500.0h0M925.5 501.3h0M1063.9 502.4h0M834.4 503.3h0M1000.7 499.3h0M219.8 497.9h0M692.6 499.8h0M859.2 501.1h0M983.2 500.1h0M692.8 502.1h0M1211.4 502.1h0M825.8 500.0h0M1209.4 499.1h0M1086.0 499.7h0M773.6 501.7h0M873.6 497.8h0M1075.9 500.2h0M728.4 500.0h0M545.7 497.9h0M1210.1 499.9h0M276.9 503.5h0M760.6 499.8h0M1238.8 502.7h0M937.6 503.9h0M575.4 501.4h0M911.1 500.7h0M314.0 502.3h0M367.1 498.4h0M1011.3 499.5h0M1148.9 500.4h0M892.1 503.3h0M195.9 500.6h0M817.8 500.1h0M1198.6 503.2h0M637.4 502.1h0M666.0 500.0h0M964.9 501.5h0M246.2 502.2h0M318.0 498.2h0M200.7 500.8h0M1190.4 501.0h0M955.1 503.2h0M1007.2 503.6h0M172.2 499.0h0M982.6 501.3h0M979.8 498.3h0M372.3 502.2h0M762.5 503.2h0M865.8 501.3h0M704.2 503.5h0M524.5 499.7h0M715.6 503.4h0M224.3 498.4h0M580.6 501.0h0M870.5 500.4h0M261.2 498.6h0M1185.1 500.2h0M751.3 498.4h0M1091.3 500.5h0M847.3 502.0h0M752.8 497.7h0M691.0 501.0h0M303.7 499.4h0M359.7 501.0h0M935.9 499.5h0M429.1 503.9h0M725.7 503.0h0M838.1 498.1h0M595.3 499.1h0M707.5 501.5h0M796.6 498.6h0M315.8 498.2h0M384.4 503.7h0M1211.4 502.0h0M575.0 503.8h0M869.3 498.2h0M1109.8 497.9h0M605.4 500.5h0M486.9 498.9h0M1251.6 499.6h0M487.4 502.9h0M944.7 501.9h0M1183.6 501.1h0M595.9 499.7h0M419.3 500.0h0M700.2 498.6h0M667.4 498.2h0M629.8 499.6h0M217.0 503.9h0M716.2 499.9h0M797.2 503.5h0M1066.1 499.1h0M1096.6 503.2h0M910.5 501.1h0M262.3 499.4h0M587.6 503.6h0M621.4 500.4h0M703.5 502.5h0M898.9 500.2h0M176.6 502.6h0M332.0 497.8h0M923.4 501.4h0M751.7 500.1h0M998.3 497.9h0M1091.3 503.5h0M1058.6 499.2h0M1259.5 503.1h0M929.7 502.9h0M455.6 503.9h0M336.1 500.5h0M1159.4 502.8h0M255.2 501.7h0M1062.3 500.6h0M317.7 502.0h0M1082.2 503.6h0M174.7 503.7h0M724.7 501.3h0M1252.8 501.2h0M647.1 502.7h0M714.6 498.8h0M786.3 499.5h0M447.6 500.2h0M929.9 498.7h0M417.9 502.7h0M483.3 502.4h0M794.5 503.8h0M488.1 504.0h0M324.8 499.6h0M873.0 503.6h0M580.1 503.0h0M930.0 503.4h0M793.4 499.5h0M508.0 499.0h0M689.1 501.2h0M281.1 499.9h0M652.7 502.7h0M817.3 499.6h0M479.0 502.0h0M549.9 503.2h0M934.6 497.8h0M466.6 502.9h0M1023.8 502.6h0M946.8 500.3h0M626.9 501.5h0M1111.8 500.1h0M225.7 502.1h0M1231.3 498.3h0M1255.9 498.1h0M1044.1 503.3h0M210.8 499.3h0M278.4 497.7h0M1007.6 501.0h0M597.6 501.7h0M604.6 502.7h0M499.1 499.4h0M958.8 498.5h0M1246.6 503.9h0M1087.6 499.6h0M673.2 499.2h0M803.2 503.0h0M277.8 501.1h0M778.2 503.5h0M670.6 499.9h0M1120.9 503.8h0M590.1 498.3h0M189.5 499.1h0M779.9 503.6h0M943.3 502.5h0M966.2 499.2h0M190.9 502.6h0M188.4 503.7h0M1261.3 502.5h0M769.9 502.0h0M672.4 503.4h0M1129.3 499.5h0M834.6 499.8h0M365.9 498.5h0M1260.2 502.5h0M327.4 500.3h0M839.4 500.6h0M392.6 500.3h0M223.7 502.5h0M995.8 503.8h0M1208.2 498.1h0M167.9 498.1h0M300.1 499.9h0M436.6 497.5h0M993.7 497.5h0M509.6 499.3h0M331.2 503.7h0M776.7 499.0h0M307.1 501.1h0M1103.1 500.1h0M582.1 501.6h0M453.0 501.8h0M660.1 497.6h0M560.7 503.8h0M215.3 501.9h0M499.5 502.8h0M629.2 503.2h0M928.6 502.5h0M577.0 502.5h0M931.1 501.2h0M439.2 499.5h0M861.9 499.0h0M602.5 501.3h0M454.6 500.2h0M1111.9 501.0h0M713.9 500.8h0M628.7 500.3h0M1096.6 498.8h0M809.5 497.5h0M1000.7 500.0h0M825.2 498.7h0M985.2 498.6h0M766.1 497.7h0M1098.9 503.7h0M179.9 500.3h0M570.3 500.6h0M979.4 499.8h0M1036.5 499.2h0M1192.0 497.8h0M821.3 501.7h0M327.4 499.7h0M683.2 499.0h0M1196.8 497.9h0M888.9 499.4h0M878.3 501.5h0M407.5 502.7h0M398.4 503.4h0M949.3 498.4h0M410.8 499.3h0M802.6 499.7h0M614.1 500.8h0M659.9 498.7h0M237.8 499.0h0M680.1 503.0h0M387.8 503.7h0M250.8 501.9h0M286.5 499.1h0M820.8 499.0h0M680.3 504.0h0M1004.2 499.4h0M1199.1 503.2h0M442.5 500.4h0M1016.8 498.9h0M386.2 502.7h0M762.5 499.9h0M231.4 498.3h0M684.8 498.6h0M794.1 502.1h0M773.1 502.3h0M640.5 503.0h0M1226.2 503.7h0M426.6 500.6h0M643.6 500.5h0M204.4 501.9h0M575.4 498.8h0M1134.8 500.7h0M683.2 498.2h0M1195.7 500.2h0M840.7 498.1h0M282.6 503.0h0M1144.2 500.9h0M306.0 501.0h0M952.5 503.3h0M342.9 497.8h0M621.6 502.5h0M1204.5 498.8h0M491.7 499.6h0M621.3 499.7h0M216.0 503.5h0M1185.0 503.7h0M419.2 500.6h0M871.2 502.5h0M1014.3 503.2h0M304.3 499.6h0M316.7 498.3h0M1214.3 500.0h0M535.7 498.7h0M737.8 501.3h0M728.9 500.1h0M724.8 501.4h0M276.7 500.0h0M739.6 498.4h0M1132.0 500.0h0M520.2 500.9h0M422.4 497.5h0M711.8 500.9h0M391.5 501.9h0M606.1 503.2h0M722.7 499.9h0M193.5 499.9h0M593.0 500.6h0M443.2 499.5h0M1231.2 502.2h0M1042.5 501.4h0M1159.9 503.9h0M462.6 503.5h0M655.9 503.7h0M315.3 503.2h0M166.4 502.4h0M1229.7 498.3h0M509.4 503.1h0M1122.1 501.2h0M795.4 499.1h0M1133.8 498.8h0M995.6 501.9h0M1235.5 501.6h0M868.0 498.5h0M416.3 502.0h0M687.4 502.1h0M913.1 498.3h0M536.5 503.8h0M611.7 501.1h0M1244.9 498.6h0M440.2 500.5h0M852.6 502.3h0M1141.9 500.2h0M1246.2 502.6h0M287.4 499.0h0M501.1 500.1h0M1073.6 502.2h0M573.2 497.5h0M365.2 500.6h0M1047.7 501.3h0M448.0 498.7h0M360.8 501.0h0M899.2 500.8h0M1046.9 498.2h0M647.1 500.5h0M1029.6 502.9h0M454.1 498.6h0M356.1 500.1h0M483.4 503.5h0M535.1 497.8h0M526.0 503.8h0M811.3 501.0h0M421.4 498.1h0M1259.3 497.9h0M782.8 503.7h0M227.6 502.8h0M391.4 503.4h0M981.9 503.7h0M745.8 499.3h0M823.8 501.5h0M400.6 503.2h0M432.5 502.3h0M822.0 497.9h0M1202.4 503.0h0M175.5 503.7h0M513.3 498.8h0M294.8 500.4h0M895.3 501.3h0M788.9 502.0h0M674.4 499.4h0M806.9 500.3h0M186.2 497.9h0M575.3 498.2h0M581.1 497.8h0M1066.0 502.0h0M419.1 501.2h0M453.7 498.9h0M574.4 501.5h0M406.4 501.7h0M447.0 500.2h0M699.7 497.8h0M957.7 499.4h0M848.0 501.3h0M699.7 500.7h0M250.8 504.0h0M766.6 501.4h0M679.9 501.9h0M181.3 502.1h0M236.4 498.1h0M1183.3 500.8h0M852.1 503.1h0M526.7 500.5h0M344.6 501.1h0M1181.8 498.9h0M579.0 500.6h0M480.0 499.2h0M1212.8 501.0h0M715.9 501.0h0M1252.4 499.2h0M417.2 500.6h0M176.8 497.9h0M577.5 502.4h0M229.4 503.4h0M652.4 501.4h0M495.3 499.6h0M664.5 503.3h0M1103.9 503.6h0M354.7 500.1h0M1126.7 500.9h0M869.3 502.3h0M1146.8 503.5h0M1236.4 499.0h0M1188.4 497.7h0M840.3 503.7h0M1178.2 501.8h0M509.1 501.0h0M166.8 504.0h0M366.7 499.8h0M1165.7 499.4h0M339.8 499.3h0M1031.6 503.4h0M696.7 499.0h0M1008.4 502.9h0M986.3 502.0h0M671.0 501.9h0M1068.6 499.8h0M1050.7 499.9h0M721.1 501.2h0M657.2 503.5h0M911.6 498.7h0M825.5 501.1h0M823.9 498.9h0M495.0 504.0h0M702.9 503.8h0M1206.0 501.5h0M610.3 503.3h0M272.9 501.1h0M200.8 500.6h0M875.0 503.4h0M1036.8 502.9h0M224.5 500.0h0M266.8 501.0h0M913.1 498.6h0M506.3 497.7h0M482.0 501.8h0M721.6 497.7h0M1034.6 498.4h0M1035.3 497.6h0M473.8 500.8h0M669.3 500.4h0M349.2 499.0h0M1036.3 501.4h0M680.9 501.6h0M202.5 498.7h0M492.8 503.6h0M603.1 503.9h0M808.6 503.6h0M187.8 500.7h0M379.3 499.2h0M352.2 503.4h0M541.2 499.0h0M980.5 502.9h0M323.7 498.8h0M1108.3 502.8h0M736.5 500.5h0M1219.0 501.1h0M1248.3 500.9h0M780.4 499.6h0M899.4 502.0h0M1248.6 503.5h0M169.2 497.7h0M213.9 503.2h0M331.4 498.1h0M495.1 499.5h0M492.8 503.1h0M1183.7 499.7h0M1231.4 501.5h0M1014.0 502.3h0M201.3 498.0h0M344.7 499.1h0M325.3 501.1h0M1258.0 500.2h0M230.0 503.4h0M1002.7 500.9h0M882.9 502.7h0M451.8 498.4h0M872.7 498.4h0M1036.0 501.6h0M163.4 500.8h0M741.2 499.5h0M1234.8 499.3h0M754.2 500.7h0M340.5 500.7h0M273.9 502.4h0M499.9 502.8h0M564.2 502.2h0M1216.7 502.4h0M220.4 500.0h0M1192.9 503.3h0M375.4 502.3h0M1070.5 499.8h0M287.0 500.0h0M535.4 502.5h0M232.6 498.1h0M1218.9 501.6h0M313.5 499.6h0M343.8 502.1h0M1180.0 501.6h0M720.4 498.5h0M370.1 502.2h0M1087.0 501.5h0M1173.0 500.5h0M745.6 502.7h0M839.7 501.0h0M292.8 502.2h0M1260.7 502.4h0M230.4 498.7h0M651.4 502.0h0M419.1 502.6h0M431.6 502.0h0M1258.7 499.7h0M607.4 501.5h0M367.2 497.5h0M627.4 503.3h0M592.2 501.4h0M709.3 502.1h0M214.8 499.3h0M829.3 503.0h0M895.8 502.2h0M1022.1 502.4h0M1186.9 501.4h0M728.9 503.3h0M471.4 500.0h0M359.4 499.5h0M536.0 502.6h0M549.5 504.0h0M250.0 500.0h0M950.4 501.3h0M729.9 499.6h0M1187.8 499.1h0M214.1 501.0h0M1103.2 498.9h0M419.1 503.1h0M929.4 502.7h0M272.1 499.4h0M655.4 499.5h0M708.8 502.2h0M188.2 499.7h0M940.5 501.5h0M238.9 497.6h0M1204.0 498.8h0M290.0 500.5h0M308.9 501.9h0M435.3 497.9h0M991.4 497.7h0M1150.3 501.5h0M1132.9 503.8h0M686.9 500.2h0M602.4 502.5h0M967.5 502.9h0M1249.2 501.3h0M1256.6 499.7h0M803.3 499.0h0M1229.9 502.8h0M976.9 502.0h0M1055.2 499.9h0M831.2 502.7h0M970.1 498.7h0M646.4 498.0h0M1200.7 501.9h0M852.5 500.8h0M965.4 503.9h0M497.0 499.5h0M496.8 502.8h0M957.8 500.2h0M253.3 499.1h0M1022.1 497.8h0M727.8 503.1h0M416.8 502.9h0M1006.7 498.1h0M776.4 498.8h0M1117.2 499.8h0M189.6 497.6h0M271.4 500.4h0M350.9 500.7h0M485.5 501.7h0M434.8 500.4h0M1157.7 498.3h0M745.3 498.7h0M447.8 503.4h0M1086.0 498.2h0M685.5 502.1h0M401.3 499.4h0M1000.1 500.7h0M1119.1 501.3h0M1176.9 503.8h0M843.1 500.1h0M1020.8 503.5h0M213.4 498.7h0M526.9 502.0h0M247.7 499.6h0M1019.2 503.2h0M714.2 502.2h0M701.6 501.9h0M507.1 502.7h0M1135.4 502.2h0M839.6 497.7h0M1251.9 498.4h0M249.1 498.0h0M1176.0 499.6h0M922.3 498.6h0M948.0 501.5h0M711.3 503.4h0M881.9 498.4h0M1237.9 498.4h0M1174.4 499.5h0M936.9 497.9h0M597.1 497.7h0M738.4 503.8h0M1196.5 498.2h0M367.9 499.0h0M1167.9 501.0h0M285.0 499.9h0M468.0 499.7h0M904.6 498.4h0M491.8 502.4h0M1137.7 498.7h0M870.3 503.3h0M482.0 497.6h0M175.4 503.5h0M1175.4 497.9h0M420.2 498.8h0M1007.8 499.3h0M1140.7 500.0h0M1114.0 501.1h0M579.8 499.4h0M527.8 501.8h0M753.5 498.8h0M866.0 497.8h0M925.6 502.6h0M389.1 501.1h0M374.5 500.8h0M718.4 502.9h0M393.8 499.0h0M391.8 498.5h0M686.9 503.9h0M1238.3 498.3h0M301.9 498.8h0M451.9 499.1h0M468.2 501.2h0M815.2 497.5h0M321.2 501.2h0M1025.0 499.6h0M917.9 502.9h0M616.9 499.7h0M498.2 500.6h0M398.6 502.0h0M726.3 500.1h0M591.8 501.6h0M746.6 503.5h0M336.0 498.6h0M805.7 502.9h0M348.9 500.0h0M1226.1 498.7h0M839.3 497.9h0M637.6 500.1h0M775.4 498.8h0M705.6 503.7h0M686.3 497.8h0M228.2 503.2h0M338.4 499.1h0M1233.8 502.0h0M341.4 500.7h0M516.4 503.6h0M1061.9 500.1h0M817.2 502.4h0M1184.7 498.8h0M610.8 501.8h0M911.4 501.6h0M458.4 497.9h0M269.4 500.4h0M1013.9 500.5h0M822.7 500.9h0M1255.6 502.4h0M784.1 497.6h0M888.5 501.7h0M1118.1 500.7h0M556.3 501.3h0M410.5 497.6h0M1212.6 502.9h0M867.4 499.6h0M794.7 500.4h0M348.0 498.2h0M439.6 502.0h0M190.4 501.5h0M543.7 499.6h0M251.0 503.8h0M455.8 500.7h0M324.2 499.1h0M759.1 499.6h0M438.1 500.6h0M300.6 501.3h0M298.7 501.0h0M555.4 502.1h0M776.2 500.5h0M761.5 497.5h0M582.5 497.9h0M263.1 497.7h0M965.9 503.0h0M392.9 501.5h0M326.0 503.0h0M976.1 499.7h0M670.4 500.1h0M186.6 499.5h0M329.9 503.6h0M401.1 501.5h0M192.6 503.8h0M609.8 498.3h0M460.3 502.7h0M347.1 503.3h0M456.3 498.2h0M383.4 503.2h0M258.1 500.6h0M807.8 501.7h0M1075.1 499.5h0M955.4 503.7h0M383.4 502.8h0M1133.6 499.5h0M1159.8 497.9h0M417.5 499.1h0M756.0 497.9h0M461.6 500.8h0M477.9 500.2h0M447.1 502.9h0M645.2 501.5h0M875.8 498.6h0M611.5 501.2h0M848.8 499.7h0M763.1 500.5h0M629.5 499.5h0M888.4 498.2h0M187.5 499.7h0M722.2 502.8h0M331.1 499.3h0M1163.6 497.7h0M427.9 498.4h0M605.3 498.0h0M1250.1 503.6h0M279.5 503.2h0M825.0 499.9h0M813.0 502.3h0M1105.0 501.7h0M316.1 499.3h0M197.4 502.1h0M1013.4 501.7h0M387.0 499.5h0M1110.5 502.7h0M961.0 497.7h0M343.4 502.7h0M347.1 498.7h0M1079.5 501.1h0M190.8 501.7h0M1249.5 499.1h0M775.0 498.7h0M304.7 501.2h0M163.3 498.9h0M215.6 497.9h0M359.7 502.9h0M1013.3 498.1h0M403.5 502.5h0M945.3 498.4h0M823.2 501.1h0M355.6 500.1h0M255.7 498.0h0M177.2 498.6h0M290.8 503.3h0M603.8 501.7h0M302.9 503.0h0M686.2 498.7h0M169.8 497.9h0M347.2 502.9h0M1245.5 499.8h0M1096.1 498.4h0M646.3 502.7h0M556.9 501.2h0M277.1 501.1h0M1018.3 500.8h0M659.4 502.2h0M1241.1 500.8h0M328.6 500.3h0M822.3 501.0h0M295.3 498.0h0M1195.6 498.6h0M875.8 501.1h0M304.8 502.5h0M1168.8 499.1h0M289.6 500.9h0M220.5 499.8h0M762.3 501.2h0M423.5 502.6h0M627.9 499.0h0M231.0 499.4h0M1229.8 497.9h0M1248.7 503.8h0M220.4 498.6h0M1103.0 502.6h0M225.8 498.1h0M570.6 503.6h0M374.7 503.7h0M1145.7 501.3h0M1024.7 503.1h0M1211.8 502.2h0M1009.5 498.2h0M341.9 500.4h0M1257.2 502.6h0M379.4 502.9h0M210.6 498.4h0M357.6 502.2h0M805.9 499.7h0M611.7 498.9h0M533.0 502.7h0M258.2 499.7h0M1131.2 501.9h0M908.5 499.0h0M202.2 502.0h0M1111.0 499.4h0M1107.0 501.9h0M473.8 500.9h0M192.6 497.6h0M698.5 502.7h0M425.8 497.9h0M689.7 503.7h0M212.9 498.0h0M1256.2 497.9h0M814.1 500.5h0M307.6 499.8h0M453.9 498.4h0M856.8 503.3h0M750.2 499.3h0M1105.4 499.4h0M654.2 499.8h0M1020.8 499.7h0M368.6 498.8h0M892.8 499.2h0M172.5 503.1h0M531.2 498.8h0M540.2 502.5h0M844.3 500.1h0M902.0 503.7h0M769.2 503.7h0M350.1 499.1h0M1032.8 502.7h0M942.6 501.7h0M1247.6 501.8h0M772.9 502.4h0M513.1 499.5h0M1223.1 499.5h0M768.3 498.1h0M726.2 498.6h0M823.2 502.7h0M258.9 499.2h0M593.7 503.9h0M498.2 502.7h0M894.4 501.8h0M1090.4 500.5h0M515.7 501.8h0M875.9 501.8h0M606.3 498.5h0M460.1 501.9h0M1123.3 498.0h0M655.0 500.4h0M477.6 501.1h0M1115.2 500.4h0M239.9 499.8h0M807.1 502.9h0M1018.1 503.0h0M214.0 503.4h0M707.4 502.1h0M700.0 501.5h0M1247.7 500.5h0M973.0 498.8h0M603.9 499.2h0M479.1 502.5h0M705.1 502.2h0M364.8 501.9h0M1137.5 497.5h0M1256.2 499.4h0M569.9 498.2h0M188.0 503.9h0M456.7 498.1h0M610.7 501.2h0M997.0 501.2h0M736.4 502.5h0M991.0 498.6h0M1211.8 500.3h0M412.5 501.0h0M737.5 501.7h0M386.1 498.5h0M376.6 501.4h0M619.1 501.7h0M783.8 501.5h0M1137.4 503.4h0M380.7 502.6h0M846.4 499.3h0M168.7 500.6h0M736.4 502.8h0M674.2 502.5h0M923.8 502.0h0M296.0 503.2h0M711.5 497.7h0M688.7 502.4h0M874.4 500.9h0M759.0 499.5h0M355.1 498.7h0M549.1 498.0h0M619.4 497.9h0M291.6 502.6h0M1164.2 501.2h0M934.7 501.7h0M964.3 499.7h0M697.7 503.3h0M1114.1 502.3h0M719.9 501.0h0M751.3 503.6h0M1043.8 499.9h0M234.5 503.8h0M592.3 499.7h0M694.1 499.4h0M981.4 499.2h0M926.7 498.0h0M729.7 502.3h0M208.8 499.0h0M502.2 500.2h0M262.1 497.9h0M1184.8 500.5h0M497.9 501.4h0M264.4 500.6h0M748.2 502.3h0M941.5 502.9h0M573.9 501.3h0M941.7 502.7h0M626.8 497.7h0M541.9 499.8h0M632.6 499.9h0M793.4 502.9h0M472.1 501.5h0M447.9 498.9h0M594.7 499.7h0M279.7 502.8h0M1246.0 501.1h0M606.0 502.9h0M517.8 502.9h0M543.9 503.1h0M585.8 498.7h0M549.5 503.1h0M1193.1 502.9h0M767.3 499.9h0M655.5 502.2h0M1013.1 499.9h0M1245.4 502.2h0M371.6 503.9h0M817.7 501.3h0M450.1 498.8h0M651.8 501.8h0M879.1 503.9h0M271.9 498.7h0M509.4 501.2h0M1004.0 497.5h0M901.7 498.3h0M1124.4 501.0h0M838.1 500.6h0M179.4 499.3h0M1177.5 501.7h0M330.7 499.7h0M339.9 497.7h0M526.6 502.5h0M583.7 498.2h0M1132.1 501.8h0M577.8 500.4h0M1045.8 503.3h0M333.6 498.4h0M870.1 501.2h0M301.4 498.0h0M509.2 499.8h0M929.9 502.9h0M689.4 499.1h0M1253.6 503.0h0M826.2 498.1h0M832.9 501.6h0M241.0 501.0h0M1164.5 500.2h0M253.0 499.0h0M1149.8 500.0h0M533.4 498.3h0M829.0 499.0h0M790.1 502.7h0M495.7 502.0h0M1028.2 500.4h0M444.6 503.7h0M620.0 503.4h0M764.7 498.5h0M721.0 497.9h0M457.9 503.1h0M275.9 500.7h0M167.6 497.5h0M188.3 502.3h0M485.7 502.0h0M545.4 498.3h0M682.7 504.0h0M598.0 499.7h0M835.7 504.0h0M883.6 502.1h0M263.2 500.8h0M612.8 500.7h0M416.4 501.4h0M412.0 502.5h0M388.7 503.5h0M1153.4 499.6h0M265.3 503.8h0M892.0 501.9h0M1195.1 501.8h0M1221.0 498.5h0M1122.7 502.4h0M1249.1 499.5h0M356.9 499.6h0M406.8 499.7h0M1008.0 499.1h0M1188.1 502.3h0M937.1 497.7h0M182.5 502.6h0M495.1 498.2h0M224.6 499.7h0M867.4 498.2h0M390.6 500.0h0M710.2 500.8h0M572.6 501.2h0M1174.2 501.7h0M1083.2 500.7h0M1208.8 503.0h0M768.8 498.5h0M645.8 500.3h0M184.7 500.3h0M1042.3 503.1h0M504.2 503.1h0M1215.7 500.1h0M380.0 502.2h0M1217.7 502.3h0M488.2 501.2h0M448.6 499.1h0M1187.0 502.3h0M332.3 503.4h0M1038.7 502.9h0M215.7 502.6h0M829.4 497.8h0M896.1 498.1h0M669.6 500.9h0M1191.5 497.9h0M880.9 499.1h0M1028.4 501.1h0M646.3 498.9h0M1157.3 499.5h0M275.4 499.9h0M389.9 499.3h0M1232.8 497.7h0M874.0 502.6h0M1241.2 498.5h0M738.3 502.1h0M566.8 501.0h0M343.2 498.9h0M377.1 497.9h0M928.0 503.3h0M1137.1 502.9h0M1232.4 503.7h0M677.1 503.3h0M742.0 498.1h0M1141.2 500.1h0M985.1 501.3h0M572.2 497.8h0M1110.2 501.6h0M259.2 503.5h0M1220.9 542.2h0M539.5 545.3h0M1013.1 548.9h0M185.8 536.3h0M964.7 543.8h0M633.5 534.5h0M430.0 545.0h0M828.3 535.6h0M1066.7 542.2h0M166.2 541.0h0M677.8 548.3h0M296.8 540.2h0M416.3 534.9h0M1103.6 547.2h0M783.6 538.4h0M972.1 535.0h0M719.0 546.1h0M517.3 548.4h0M855.9 539.0h0M281.2 538.7h0M1054.1 541.5h0M621.8 540.9h0M368.6 541.6h0M596.9 536.8h0M463.4 537.1h0M439.4 541.1h0M1162.5 545.4h0M443.0 548.2h0M330.7 536.0h0M439.8 546.3h0M1051.9 544.5h0M809.5 540.5h0M1174.2 548.4h0M838.6 535.0h0M384.3 535.1h0M904.4 540.4h0M1071.1 540.1h0M418.8 537.5h0M325.2 546.8h0M1119.5 543.7h0M690.3 543.3h0M772.2 540.9h0M1052.1 541.9h0M279.2 548.0h0M231.4 540.8h0M398.6 545.4h0M1236.4 540.7h0M223.8 543.5h0M334.5 543.4h0M363.8 534.8h0M352.7 536.0h0M337.1 538.6h0M433.3 535.4h0M476.0 548.2h0M265.7 545.3h0M725.0 534.5h0M591.5 540.7h0M1247.4 543.4h0M1194.7 536.8h0M577.3 535.2h0M598.8 547.6h0M1108.9 541.0h0M949.4 535.4h0M694.6 541.1h0M947.7 546.7h0M633.6 544.8h0M823.6 538.9h0M945.4 537.3h0M569.6 542.0h0M484.3 546.9h0M210.2 546.8h0M1183.9 545.6h0M548.4 543.6h0M363.3 534.9h0M718.4 543.7h0M1252.7 541.8h0M887.1 535.2h0M294.3 546.8h0M690.6 544.9h0M1185.9 545.5h0M244.6 543.4h0M187.2 546.8h0M664.9 536.9h0M483.2 539.3h0M1061.8 546.5h0M728.1 536.1h0M176.1 542.1h0M248.4 544.2h0M336.5 535.4h0M1202.6 542.9h0M730.4 539.8h0M1113.2 548.0h0M538.8 537.4h0M1258.1 546.7h0M623.6 542.5h0M1173.8 534.5h0M1029.5 540.1h0M190.8 545.2h0M1216.7 538.1h0M687.3 540.9h0M497.8 537.6h0M458.4 543.5h0M1087.6 539.2h0M976.3 545.5h0M702.2 543.3h0M843.3 538.4h0M856.1 543.3h0M504.6 535.9h0M457.0 542.1h0M861.0 540.6h0M1223.8 548.2h0M1219.7 548.7h0M422.4 545.4h0M567.7 544.6h0M763.2 547.4h0M433.2 539.5h0M824.0 539.0h0M521.2 545.8h0M485.1 539.7h0M1245.6 545.3h0M720.8 540.3h0M681.1 536.8h0M711.4 547.0h0M295.8 538.8h0M787.7 538.6h0M304.8 537.2h0M541.6 538.7h0M872.1 539.9h0M462.2 548.2h0M448.9 542.7h0M274.9 534.8h0M739.4 544.2h0M880.1 539.5h0M1058.5 544.3h0M552.9 546.4h0M962.3 540.6h0M792.5 543.0h0M841.6 534.3h0M502.6 547.1h0M554.8 537.9h0M982.3 540.8h0M571.0 542.9h0M929.6 543.2h0M809.3 544.7h0M910.1 535.8h0M972.1 546.3h0M875.8 548.5h0M237.1 540.7h0M1171.6 539.1h0M1129.3 539.5h0M822.3 548.1h0M581.9 546.7h0M919.9 538.0h0M345.6 536.1h0M873.8 542.2h0M1079.2 540.4h0M1177.3 539.1h0M266.1 544.0h0M760.6 542.5h0M307.6 544.6h0M380.3 543.7h0M304.8 538.0h0M968.5 546.2h0M719.9 543.5h0M270.3 535.0h0M1137.2 538.7h0M396.8 544.5h0M257.9 547.6h0M256.1 538.1h0M186.5 539.0h0M423.4 536.4h0M653.4 542.4h0M759.7 534.9h0M847.4 545.4h0M707.3 538.4h0M761.3 547.9h0M1146.3 538.1h0M644.5 539.1h0M949.7 537.1h0M199.4 534.5h0M503.1 539.1h0M792.6 539.3h0M1237.6 544.1h0M1190.4 535.0h0M1178.0 538.6h0M309.8 544.0h0M493.5 547.8h0M1148.4 538.9h0M1177.6 545.5h0M1105.2 541.4h0M763.7 537.7h0M882.0 546.9h0M413.8 540.2h0M1116.3 542.6h0M762.5 547.7h0M1258.3 534.9h0M833.4 543.2h0M370.5 546.1h0M969.8 536.4h0M684.7 547.0h0M1041.0 534.6h0M590.1 539.2h0M549.0 539.9h0M1158.3 544.9h0M209.7 542.8h0M597.2 536.3h0M274.0 539.0h0M816.0 539.5h0M427.0 535.0h0M809.7 539.9h0M950.3 539.9h0M215.2 539.9h0M922.9 544.4h0M803.2 546.1h0M1215.2 547.9h0M291.6 537.9h0M370.5 544.4h0M319.2 542.5h0M826.0 546.8h0M512.1 539.4h0M684.2 534.7h0M286.5 542.1h0M936.2 538.8h0M758.5 540.2h0M561.4 535.9h0M903.3 543.8h0M1163.8 541.2h0M932.5 534.3h0M1262.4 548.1h0M1194.1 547.9h0M976.8 544.9h0M625.7 543.6h0M284.9 539.0h0M632.4 540.1h0M1074.5 543.0h0M527.8 537.2h0M876.0 545.6h0M418.0 536.3h0M1038.0 537.0h0M1068.9 542.9h0M1216.2 547.1h0M502.5 545.1h0M1034.2 544.3h0M1134.4 534.4h0M1082.2 545.5h0M1110.5 548.5h0M428.1 541.3h0M947.8 548.0h0M866.2 535.1h0M357.5 539.6h0M910.8 541.4h0M472.7 545.0h0M237.7 537.3h0M607.2 539.5h0M1019.5 542.8h0M998.8 539.0h0M837.4 539.8h0M488.8 541.9h0M334.5 542.5h0M873.8 543.7h0M1174.5 539.4h0M375.1 535.2h0M969.8 548.8h0M721.4 537.5h0M305.5 545.5h0M820.5 548.1h0M242.1 548.8h0M965.0 544.7h0M320.4 543.0h0M714.5 541.8h0M288.3 538.3h0M184.1 543.6h0M647.5 537.5h0M838.9 541.2h0M1085.5 542.8h0M288.2 539.2h0M935.1 544.9h0M807.9 545.2h0M485.8 545.4h0M288.5 541.1h0M352.3 536.1h0M1031.4 534.4h0M1069.5 546.1h0M397.1 538.5h0M713.7 537.5h0M1124.1 539.9h0M1142.2 541.3h0M519.9 545.7h0M1213.2 543.2h0M1071.8 537.2h0M689.1 536.6h0M645.5 544.4h0M899.2 547.4h0M498.6 545.6h0M419.4 541.3h0M364.5 547.3h0M262.7 545.5h0M967.2 546.5h0M1070.6 544.8h0M1081.4 548.7h0M1027.7 542.1h0M1005.3 542.9h0M506.4 538.4h0M1011.3 540.2h0M880.6 547.2h0M893.2 541.2h0M767.2 543.9h0M887.8 541.3h0M1219.4 535.7h0M1054.0 535.0h0M758.6 537.2h0M416.4 536.1h0M556.3 541.5h0M883.4 541.9h0M878.8 542.9h0M1162.4 547.6h0M206.4 548.3h0M881.5 538.1h0M1142.8 547.1h0M860.4 539.5h0M754.9 546.7h0M1016.3 542.5h0M648.0 540.2h0M692.8 546.8h0M471.5 546.4h0M455.8 548.9h0M784.6 541.1h0M576.3 538.5h0M1049.2 535.2h0M1177.6 540.4h0M223.5 535.7h0M438.6 546.0h0M524.1 539.2h0M1044.5 536.5h0M822.8 541.7h0M271.2 539.9h0M1257.8 539.8h0M562.0 539.0h0M364.9 538.1h0M397.9 547.0h0M802.2 547.6h0M560.0 534.2h0M852.3 548.4h0M1240.9 540.6h0M224.1 547.8h0M607.2 544.9h0M935.8 548.1h0M584.9 544.0h0M1187.4 534.3h0M853.2 542.9h0M1139.1 542.5h0M656.9 541.0h0M723.3 544.7h0M615.9 544.2h0M1070.3 545.6h0M1226.6 534.3h0M355.8 539.5h0M1100.9 540.1h0M520.3 540.6h0M357.7 538.5h0M441.5 546.6h0M841.1 537.4h0M215.4 541.2h0M906.7 542.2h0M172.3 535.5h0M306.3 539.4h0M395.8 545.4h0M584.6 541.2h0M1220.7 536.0h0M373.4 538.2h0M868.6 534.8h0M297.9 548.8h0M1210.7 547.3h0M1190.4 540.4h0M732.5 544.3h0M515.4 541.1h0M355.9 538.9h0M818.6 538.5h0M598.7 547.7h0M1112.8 537.3h0M886.7 540.4h0M1258.1 546.5h0M1227.6 543.5h0M691.0 537.5h0M503.6 545.3h0M854.7 542.3h0M236.7 537.6h0M797.3 543.4h0M705.1 546.3h0M922.9 535.3h0M584.9 537.8h0M1071.8 547.4h0M788.6 540.3h0M785.5 543.0h0M631.7 545.7h0M1148.6 536.0h0M275.4 536.5h0M486.7 548.4h0M943.8 541.7h0M874.2 546.2h0M1259.6 540.1h0M352.8 543.7h0M532.2 536.6h0M405.1 534.6h0M312.1 534.5h0M787.9 546.7h0M788.6 535.4h0M212.4 538.8h0M834.0 543.9h0M1170.0 539.3h0M400.6 546.1h0M361.0 548.8h0M828.4 547.9h0M393.0 534.9h0M921.3 538.5h0M1225.8 539.9h0M702.3 545.0h0M576.9 534.8h0M1243.1 537.4h0M324.5 542.4h0M1106.4 544.0h0M238.2 545.3h0M508.6 534.5h0M1201.6 540.4h0M322.7 547.9h0M326.8 536.9h0M336.8 537.4h0M1109.0 536.4h0M1113.2 536.7h0M662.1 544.3h0M454.4 540.9h0M356.6 534.4h0M406.0 546.1h0M964.8 542.9h0M1035.2 536.0h0M1101.9 542.7h0M357.0 548.4h0M844.2 544.5h0M811.7 539.8h0M494.6 542.0h0M420.9 534.5h0M639.0 546.1h0M766.5 535.1h0M850.2 548.5h0M489.8 547.3h0M439.2 538.8h0M1115.0 546.8h0M534.4 546.3h0M262.4 546.6h0M549.7 537.6h0M190.4 547.9h0M564.4 534.9h0M534.8 539.3h0M254.5 545.6h0M597.2 538.4h0M677.8 539.9h0M1216.4 537.9h0M324.2 536.8h0M201.7 541.2h0M505.2 546.5h0M547.9 537.2h0M321.0 536.3h0M822.9 544.0h0M271.8 542.2h0M182.1 537.3h0M221.4 539.8h0M1108.9 540.8h0M330.0 537.7h0M1159.1 534.4h0M1179.6 542.4h0M1217.7 538.6h0M805.5 534.6h0M593.3 544.4h0M365.9 546.2h0M866.0 540.3h0M986.8 546.0h0M328.0 540.3h0M351.5 546.0h0M1006.6 544.6h0M755.6 540.0h0M997.1 539.7h0M805.3 547.5h0M345.9 548.0h0M1172.2 536.7h0M618.9 539.7h0M1070.8 536.6h0M1017.6 535.5h0M1070.3 539.4h0M842.4 545.6h0M189.3 542.6h0M803.5 546.4h0M1096.1 536.9h0M412.5 549.0h0M1061.1 544.8h0M521.5 538.4h0M1254.7 544.0h0M356.9 540.9h0M1220.2 535.7h0M738.7 547.1h0M1207.2 541.8h0M500.6 544.9h0M694.9 541.2h0M671.3 546.9h0M1033.0 539.7h0M537.8 539.8h0M227.1 545.2h0M336.4 543.4h0M427.9 539.6h0M703.8 534.9h0M1217.3 538.7h0M943.1 540.1h0M1210.1 546.1h0M935.0 537.4h0M321.2 536.6h0M960.0 544.8h0M942.2 542.5h0M570.4 544.0h0M299.6 537.8h0M271.1 534.4h0M219.4 535.1h0M930.6 540.3h0M846.4 534.7h0M890.8 545.3h0M232.0 540.4h0M195.9 543.7h0M851.9 541.8h0M930.5 537.4h0M608.7 548.2h0M422.7 543.8h0M504.0 543.7h0M754.2 539.5h0M929.2 542.0h0M571.9 541.8h0M642.3 541.9h0M1156.2 540.6h0M775.3 536.1h0M938.4 544.5h0M729.4 540.9h0M508.8 536.2h0M1094.6 541.9h0M477.8 537.3h0M589.5 543.3h0M274.1 545.9h0M457.7 534.0h0M297.1 546.3h0M578.9 544.6h0M1080.4 537.0h0M220.9 538.1h0M693.0 538.0h0M372.7 534.2h0M188.7 545.3h0M1150.1 546.3h0M305.6 542.7h0M228.4 548.7h0M998.5 536.9h0M1093.3 536.0h0M324.7 534.9h0M635.7 543.6h0M554.6 539.9h0M1182.6 546.5h0M781.8 540.0h0M210.4 534.0h0M1187.6 546.8h0M634.7 548.4h0M663.7 547.6h0M285.1 546.9h0M877.8 541.4h0M519.6 546.4h0M1068.5 536.8h0M485.4 536.3h0M762.8 542.8h0M1113.9 545.9h0M291.0 544.8h0M278.1 546.9h0M1001.1 547.0h0M1042.6 541.3h0M579.9 539.9h0M215.1 535.8h0M306.8 547.1h0M203.5 539.3h0M1190.0 547.1h0M864.9 535.0h0M1042.1 538.6h0M738.0 545.9h0M207.9 537.5h0M522.7 541.5h0M228.1 535.7h0M787.1 540.6h0M200.6 545.7h0M378.6 534.8h0M930.2 547.5h0M890.4 540.7h0M1068.1 537.3h0M1193.8 539.6h0M718.4 545.8h0M736.0 544.7h0M237.2 538.5h0M998.2 543.8h0M1254.2 540.9h0M479.5 548.0h0M1055.1 534.8h0M1020.8 543.2h0M616.8 538.2h0M923.8 544.7h0M1048.0 539.7h0M1037.1 546.9h0M293.4 539.1h0M304.8 542.5h0M256.4 545.5h0M427.5 547.6h0M328.6 542.0h0M915.1 534.7h0M296.2 544.7h0M963.1 542.3h0M223.2 546.4h0M1190.4 535.3h0M835.4 535.0h0M695.2 543.1h0M672.5 548.4h0M864.6 545.9h0M1200.1 534.9h0M922.6 544.7h0M584.4 534.9h0M215.8 535.2h0M792.2 544.5h0M457.1 547.3h0M404.3 540.9h0M683.0 542.5h0M843.5 547.4h0M612.1 547.4h0M541.0 542.2h0M364.4 543.6h0M252.1 542.8h0M235.1 537.7h0M817.3 543.5h0M872.6 539.5h0M1193.0 540.9h0M213.1 547.4h0M790.6 545.2h0M762.7 539.9h0M257.4 534.9h0M562.3 538.9h0M329.1 546.4h0M217.1 548.2h0M1201.4 540.0h0M1075.7 539.9h0M942.0 542.6h0M176.9 545.5h0M617.0 540.6h0M1123.8 538.3h0M1038.8 541.5h0M806.0 537.8h0M664.9 542.2h0M1092.2 547.7h0M874.9 543.3h0M185.5 545.5h0M1231.0 547.9h0M853.8 541.5h0M1221.7 545.1h0M288.8 538.6h0M448.1 543.2h0M717.8 543.0h0M960.5 544.0h0M1127.0 535.5h0M611.9 538.7h0M298.6 535.6h0M521.1 535.1h0M242.0 545.3h0M935.5 538.1h0M940.2 534.4h0M644.1 543.1h0M563.8 536.2h0M582.1 539.9h0M484.0 540.7h0M1164.4 546.4h0M1243.7 535.6h0M509.1 547.9h0M978.9 534.1h0M999.0 545.0h0M1129.0 534.5h0M1155.7 546.4h0M686.8 539.4h0M435.5 542.7h0M1183.2 545.5h0M1105.1 540.9h0M678.8 539.9h0M532.6 542.1h0M943.3 546.7h0M647.9 538.3h0M1168.5 539.5h0M999.1 537.2h0M1175.4 540.0h0M341.9 547.0h0M794.2 543.6h0M572.7 547.6h0M249.2 536.5h0M512.7 535.6h0M715.9 541.5h0M873.1 538.8h0M256.4 542.9h0M488.8 539.0h0M666.5 542.2h0M770.0 542.8h0M702.9 545.8h0M473.1 540.5h0M928.4 540.6h0M474.6 534.1h0M1169.5 546.8h0M241.0 537.7h0M1180.8 542.4h0M1088.5 543.8h0M570.3 541.0h0M1248.5 540.7h0M1092.0 548.1h0M719.2 545.5h0M230.9 546.7h0M496.2 546.6h0M874.7 534.4h0M414.3 540.2h0M1094.7 545.4h0M380.0 539.8h0M310.4 535.5h0M727.2 540.3h0M967.2 537.6h0M927.2 542.9h0M544.6 543.2h0M1003.5 541.6h0M886.7 549.0h0M1194.8 544.8h0M1134.0 548.8h0M347.4 542.5h0M183.3 540.4h0M795.9 543.7h0M568.8 546.9h0M537.4 538.9h0M782.7 548.5h0M737.7 539.8h0M1234.5 540.1h0M1001.7 537.5h0M785.5 536.3h0M1116.0 535.1h0M700.5 536.2h0M650.4 536.6h0M568.4 538.7h0M713.0 548.4h0M417.9 538.3h0M408.6 547.9h0M783.9 546.9h0M268.0 535.0h0M650.8 535.3h0M361.8 541.6h0M251.3 540.5h0M274.4 534.7h0M540.7 540.7h0M282.2 545.6h0M663.6 536.2h0M642.1 538.7h0M756.7 538.0h0M472.9 536.9h0M619.2 537.6h0M826.1 542.9h0M776.9 544.7h0M981.8 539.4h0M491.8 535.0h0M1216.5 539.0h0M1229.8 534.4h0M982.8 547.1h0M582.3 548.6h0M355.0 548.7h0M223.7 545.5h0M349.1 534.3h0M880.0 548.7h0M319.3 536.8h0M1223.2 544.1h0M625.4 537.4h0M755.3 546.3h0M808.5 540.4h0M813.5 544.9h0M678.5 537.1h0M863.1 535.6h0M175.0 549.0h0M1101.6 540.0h0M636.7 544.1h0M435.1 547.1h0M199.4 543.1h0M679.3 546.2h0M271.3 545.3h0M679.2 547.8h0M1112.9 543.4h0M301.7 535.1h0M753.1 540.9h0M237.8 535.1h0M1001.4 534.6h0M857.0 542.2h0M1017.9 535.1h0M428.0 541.5h0M702.1 545.3h0M1115.8 543.1h0M885.2 534.3h0M950.7 538.9h0M1020.7 535.4h0M345.3 547.4h0M328.1 544.8h0M1034.4 539.1h0M1159.6 534.6h0M321.5 546.3h0M799.6 534.9h0M1136.5 536.7h0M315.2 535.8h0M175.1 535.4h0M972.9 546.4h0M768.9 537.0h0M269.8 539.1h0M217.7 540.7h0M666.2 538.0h0M698.8 536.0h0M471.7 547.7h0M930.7 537.7h0M706.1 543.4h0M250.8 535.5h0M233.4 544.9h0M474.4 540.5h0M1183.9 543.3h0M928.2 548.0h0M619.2 534.8h0M1054.6 540.8h0M605.3 545.1h0M315.7 539.1h0M1084.4 541.7h0M681.8 540.4h0M697.6 547.8h0M170.5 538.9h0M642.4 548.5h0M951.7 534.9h0M775.8 535.6h0M462.0 538.3h0M1006.5 536.2h0M476.2 544.9h0M1139.8 545.4h0M1221.7 534.5h0M1084.1 543.7h0M731.6 544.1h0M786.6 536.9h0M1229.2 539.8h0M754.6 537.9h0M838.3 537.8h0M296.6 535.8h0M1197.6 534.7h0M665.2 547.2h0M1200.0 539.2h0M630.0 546.5h0M207.2 544.2h0M1035.8 534.2h0M842.7 546.8h0M1218.3 545.0h0M609.3 545.9h0M265.6 541.5h0M1146.9 541.3h0M519.5 544.8h0M639.8 547.7h0M702.8 538.1h0M770.2 541.0h0M928.3 542.7h0M831.3 548.7h0M443.7 547.0h0M218.8 541.1h0M639.8 546.9h0M401.9 536.8h0M183.7 548.5h0M632.5 536.8h0M565.2 547.8h0M400.5 540.9h0M631.6 546.6h0M1182.3 539.8h0M1018.6 544.9h0M779.5 544.9h0M182.9 540.8h0M413.8 545.6h0M404.9 537.5h0M467.3 546.1h0M637.4 542.0h0M1191.4 544.5h0M1053.2 540.6h0M278.8 540.0h0M607.1 537.6h0M980.7 547.7h0M1148.7 540.9h0M584.7 535.8h0M337.4 543.1h0M241.1 545.7h0M1032.4 540.0h0M719.7 535.9h0M859.9 535.5h0M681.1 548.0h0M1143.8 535.1h0M1189.0 539.2h0M1198.5 537.9h0M513.6 546.2h0M1177.9 536.1h0M906.6 542.4h0M1014.8 543.7h0M739.1 534.9h0M572.8 544.2h0M871.5 534.3h0M195.7 543.5h0M462.7 543.7h0M897.2 548.8h0M894.5 544.2h0M254.3 546.2h0M320.3 542.3h0M911.2 543.1h0M1007.4 548.0h0M191.5 541.3h0M288.2 536.5h0M393.3 543.9h0M602.0 537.3h0M682.4 535.8h0M518.8 539.2h0M1116.9 543.3h0M307.6 548.2h0M302.3 543.5h0M328.7 544.2h0M220.6 537.9h0M732.3 539.5h0M273.3 534.1h0M1112.9 543.2h0M416.4 538.5h0M1091.1 537.5h0M1077.0 538.6h0M349.1 546.8h0M1240.2 547.8h0M891.4 546.7h0M907.2 539.0h0M1017.6 538.5h0M1171.9 538.0h0M256.2 539.4h0M1017.4 548.1h0M446.2 542.0h0M749.8 544.6h0M797.9 547.3h0M1221.9 537.1h0M1176.0 541.2h0M719.7 544.3h0M748.4 537.6h0M660.1 548.0h0M657.5 548.9h0M405.1 538.2h0M428.0 536.3h0M766.5 540.6h0M466.9 534.9h0M515.2 547.4h0M193.0 535.7h0M229.9 545.4h0M547.6 548.3h0M649.5 544.6h0M1237.1 536.3h0M1181.7 544.5h0M970.3 548.2h0M588.3 547.4h0M763.4 537.8h0M498.1 542.3h0M377.0 537.3h0M1111.6 548.3h0M1098.2 540.4h0M1099.5 536.3h0M214.8 543.3h0M1164.7 537.0h0M812.2 542.9h0M446.8 538.3h0M979.1 535.7h0M236.1 548.8h0M169.8 534.3h0M176.6 541.0h0M551.4 537.2h0M536.8 546.6h0M1148.8 538.0h0M1091.6 540.1h0M853.6 537.6h0M212.5 543.6h0M522.3 538.8h0M1086.6 543.4h0M268.6 547.2h0M1141.6 546.5h0M736.4 548.2h0M445.6 541.3h0M1201.4 539.5h0M1116.8 540.9h0M825.5 537.6h0M1000.4 546.2h0M1251.1 539.4h0M256.6 535.2h0M738.1 546.3h0M388.3 540.7h0M666.1 540.1h0M429.7 543.7h0M247.5 547.0h0M782.2 547.7h0M678.1 537.9h0M524.3 546.5h0M1012.3 540.4h0M973.7 537.5h0M373.6 535.2h0M579.1 534.7h0M1177.5 548.9h0M438.6 542.5h0M515.3 548.1h0M925.3 548.8h0M1070.4 544.7h0M730.6 540.0h0M1130.6 536.7h0M799.8 539.2h0M749.5 534.0h0M166.1 539.8h0M1118.5 541.8h0M933.5 543.6h0M1235.0 534.7h0M1253.7 544.5h0M729.8 545.5h0M1156.2 539.4h0M1094.1 542.3h0M673.7 538.7h0M1243.8 545.3h0M1152.4 538.5h0M901.7 545.6h0M1261.1 543.9h0M1234.1 542.5h0M443.4 536.1h0M367.0 538.8h0M823.9 537.4h0M1043.6 539.5h0M575.8 542.8h0M1216.6 547.6h0M808.4 542.6h0M993.7 545.0h0M201.8 539.9h0M998.4 540.5h0M487.3 547.4h0M1011.8 542.2h0M290.4 534.8h0M269.7 540.0h0M473.8 535.0h0M896.2 545.2h0M612.6 546.3h0M528.8 544.1h0M1044.9 541.6h0M963.4 535.9h0M569.4 541.8h0M757.4 534.6h0M981.7 542.2h0M1107.5 539.1h0M840.8 546.5h0M937.7 546.7h0M222.1 537.9h0M906.5 546.7h0M609.7 534.1h0M1045.2 548.4h0M620.4 544.0h0M1182.2 542.6h0M923.4 542.1h0M864.4 536.2h0M524.8 536.3h0M1247.0 540.1h0M984.0 540.3h0M228.3 548.1h0M461.6 539.3h0M1056.3 542.6h0M651.4 542.1h0M482.3 544.7h0M1138.7 548.1h0M1054.0 547.3h0M329.3 546.4h0M1071.6 544.8h0M1026.0 539.3h0M906.1 539.7h0M962.8 543.0h0M773.8 547.8h0M1014.9 545.7h0M376.1 538.8h0M1002.9 543.6h0M690.5 544.3h0M294.3 535.3h0M1094.3 544.2h0M903.2 545.6h0M817.1 540.0h0M543.6 536.1h0M742.8 545.6h0M1144.5 547.6h0M972.6 542.6h0M759.9 537.9h0M1094.3 542.5h0M854.3 538.4h0M1037.7 545.5h0M271.3 547.8h0M1192.0 537.5h0M1243.4 536.9h0M552.2 539.1h0M1151.2 547.7h0M1130.6 547.3h0M551.7 543.5h0M1013.6 536.3h0M966.1 535.0h0M414.4 545.6h0M318.3 538.3h0M648.4 541.3h0M451.6 541.1h0M679.6 536.9h0M1168.1 541.7h0M767.9 542.4h0M465.9 546.8h0M487.6 538.4h0M1060.3 537.9h0M518.9 544.0h0M673.0 537.1h0M170.9 539.6h0M720.4 537.3h0M981.8 547.3h0M385.4 542.7h0M602.2 536.3h0M184.2 547.6h0M470.2 543.4h0M952.3 545.4h0M617.1 541.5h0M341.1 548.8h0M640.0 539.7h0M1173.5 545.5h0M193.5 541.3h0M616.2 538.1h0M758.4 544.6h0M328.4 534.6h0M227.4 542.3h0M1011.7 534.6h0M789.4 541.2h0M194.4 543.8h0M1189.2 542.9h0M210.7 542.7h0M1021.3 538.6h0M594.9 539.1h0M306.7 542.9h0M180.6 545.7h0M288.1 542.7h0M742.8 538.8h0M425.4 548.2h0M189.5 547.2h0M417.6 534.2h0M214.9 542.2h0M974.4 544.3h0M711.3 534.0h0M1251.8 537.7h0M313.7 545.9h0M1260.1 535.0h0M546.7 548.1h0M454.4 539.8h0M543.3 548.5h0M772.0 545.9h0M648.7 543.6h0M286.1 542.6h0M312.3 546.4h0M1186.1 539.1h0M910.0 549.0h0M1003.9 547.7h0M256.1 535.9h0M494.5 547.5h0M379.5 546.6h0M1226.9 538.0h0M1196.2 544.0h0M257.1 537.6h0M1141.1 538.1h0M451.6 536.9h0M704.8 543.3h0M202.6 542.9h0M662.8 534.2h0M1195.5 545.9h0M204.5 539.8h0M773.4 542.4h0M364.4 542.9h0M1000.3 538.6h0M656.0 547.0h0M1153.1 541.1h0M747.4 539.1h0M225.4 541.8h0M534.9 547.2h0M1228.9 539.4h0M232.3 545.4h0M734.6 540.8h0M818.9 548.0h0M1151.1 538.4h0M909.2 544.8h0M892.8 544.2h0M288.3 538.6h0M1007.1 543.8h0M852.1 545.1h0M886.6 537.9h0M300.3 547.1h0M1130.3 541.0h0M424.2 543.2h0M253.1 547.1h0M888.0 534.6h0M1119.1 548.0h0M706.5 535.4h0M292.5 546.5h0M316.9 546.0h0M815.2 545.9h0M432.7 534.6h0M940.2 540.5h0M486.6 545.7h0M529.0 539.3h0M921.9 545.6h0M830.3 546.5h0M904.4 547.8h0M319.9 537.9h0M276.0 535.4h0M199.6 536.6h0M186.0 539.0h0M872.3 542.0h0M638.1 537.8h0M195.5 536.7h0M942.0 544.5h0M709.0 539.1h0M1145.9 545.5h0M760.9 541.1h0M226.9 538.6h0M857.2 538.3h0M186.0 544.2h0M898.4 539.1h0M739.3 545.7h0M261.7 538.5h0M1249.4 545.1h0M236.9 539.2h0M960.9 541.0h0M752.3 534.3h0M905.8 536.7h0M472.0 545.8h0M611.9 534.9h0M1183.9 545.8h0M857.7 535.0h0M905.2 534.3h0M238.1 546.8h0M183.9 546.3h0M1182.2 536.2h0M1069.7 534.1h0M716.6 536.3h0M867.6 538.0h0M1248.2 544.1h0M374.0 536.8h0M243.6 535.1h0M639.6 547.7h0M720.8 539.3h0M1105.9 538.6h0M180.7 542.7h0M819.7 537.2h0M784.3 535.9h0M521.6 537.8h0M1087.6 544.0h0M1067.6 534.3h0M298.1 546.1h0M963.9 546.7h0M540.4 545.2h0M588.8 544.1h0M938.5 548.2h0M821.3 536.7h0M1243.4 535.7h0M476.5 539.0h0M1047.6 537.0h0M1187.6 543.0h0M462.4 546.9h0M413.0 544.2h0M750.4 544.4h0M875.5 543.1h0M186.6 548.7h0M436.4 545.6h0M793.6 540.4h0M1070.0 536.9h0M766.8 545.8h0M819.9 536.7h0M760.1 542.9h0M844.6 535.7h0M911.8 540.1h0M952.1 539.8h0M1013.1 542.9h0M743.7 542.3h0M956.9 536.3h0M208.5 536.2h0M764.5 547.2h0M885.2 538.8h0M1146.6 538.7h0M504.0 548.4h0M778.4 546.7h0M676.0 545.0h0M955.0 548.0h0M417.4 542.8h0M483.2 540.1h0M732.9 537.9h0M703.8 537.0h0M383.2 545.8h0M969.4 540.7h0M966.4 542.6h0M1127.6 543.8h0M887.2 540.2h0M751.3 536.7h0M678.8 534.1h0M297.0 545.6h0M238.2 546.1h0M257.5 548.0h0M1003.1 543.9h0M911.3 542.6h0M874.5 536.2h0M489.1 548.2h0M1156.2 536.9h0M277.7 538.1h0M634.9 535.8h0M248.2 537.7h0M196.9 543.7h0M685.9 543.8h0M351.6 547.9h0M1044.7 542.4h0M974.0 542.1h0M1036.4 539.2h0M309.7 534.7h0M501.4 541.6h0M176.8 547.7h0M959.5 535.5h0M968.1 539.4h0M1145.6 543.2h0M464.6 535.1h0M296.5 546.3h0M668.4 542.6h0M843.2 540.1h0M186.6 541.7h0M839.8 546.7h0M995.8 543.4h0M738.0 541.4h0M1192.8 546.0h0M659.5 541.4h0M593.1 547.3h0M580.3 542.1h0M796.2 536.8h0M505.6 548.5h0M423.0 540.4h0M669.5 545.3h0M696.9 548.7h0M737.0 538.8h0M1246.7 543.2h0M237.4 535.9h0M842.4 548.1h0M172.5 541.2h0M256.4 545.6h0M269.2 535.2h0M478.9 538.4h0M1028.7 548.8h0M200.6 535.0h0M912.8 547.6h0M371.9 544.9h0M801.6 548.5h0M702.4 536.6h0M173.9 546.8h0M389.7 543.6h0M689.5 543.4h0M448.3 537.4h0M497.4 541.6h0M307.6 538.7h0M1175.1 535.4h0M484.3 542.6h0M184.6 537.1h0M839.2 537.3h0M607.7 545.4h0M415.5 539.3h0M979.1 547.3h0M867.6 534.8h0M661.5 535.5h0M1216.9 535.3h0M628.0 543.5h0M473.6 539.2h0M648.6 538.1h0M1079.1 542.7h0M977.7 536.8h0M243.0 538.8h0M1017.7 537.9h0M952.0 544.5h0M698.8 534.6h0M191.3 545.0h0M816.4 548.9h0M601.6 545.5h0M316.3 543.3h0M689.8 535.9h0M347.3 545.4h0M714.5 536.1h0M643.0 537.9h0M1198.1 544.8h0M504.6 534.0h0M430.4 547.4h0M692.4 544.0h0M1167.0 543.3h0M911.1 534.7h0M416.3 546.0h0M955.1 542.5h0M383.0 548.1h0M401.3 547.4h0M424.7 543.5h0M998.5 537.6h0M822.1 539.1h0M724.9 546.7h0M561.9 536.2h0M233.7 534.5h0M904.5 541.2h0M839.1 536.3h0M951.9 544.3h0M315.6 538.9h0M363.2 537.5h0M1097.2 536.5h0M880.6 545.1h0M337.1 544.0h0M704.0 541.5h0M1082.2 545.0h0M249.4 542.0h0M654.6 543.3h0M786.4 544.6h0M583.8 547.9h0M991.0 538.8h0M1015.9 534.6h0M341.3 545.2h0M172.9 535.8h0M1000.8 548.8h0M489.9 545.5h0M489.2 539.6h0M884.9 542.3h0M989.5 545.3h0M1106.4 546.8h0M964.8 539.2h0M843.9 548.8h0M1092.6 546.2h0M378.1 543.6h0M228.9 538.8h0M715.5 541.7h0M586.2 538.6h0M550.5 540.1h0M464.1 546.7h0M834.3 535.1h0M416.7 534.4h0M341.3 538.9h0M369.3 546.9h0M1207.0 536.0h0M933.4 536.9h0M327.6 547.0h0M549.3 543.7h0M729.5 538.5h0M356.2 535.3h0M1179.4 542.0h0M241.3 535.6h0M319.3 540.5h0M348.6 541.5h0M1235.6 538.0h0M983.3 541.1h0M1075.1 545.2h0M1256.7 547.5h0M556.8 540.7h0M1211.8 545.7h0M666.0 537.3h0M451.5 546.8h0M554.5 538.6h0M1070.6 538.9h0M291.0 536.0h0M209.3 543.4h0M328.9 547.7h0M312.9 541.4h0M775.1 547.4h0M346.8 543.7h0M213.5 540.0h0M1156.6 534.7h0M872.9 544.4h0M456.0 541.2h0M709.4 536.7h0M985.7 534.8h0M1146.7 544.5h0M613.2 543.7h0M733.2 547.3h0M1066.1 547.5h0M262.1 539.1h0M480.9 537.2h0M332.3 548.1h0M747.0 546.2h0M1263.3 544.7h0M853.6 536.4h0M1137.2 534.9h0M905.9 536.2h0M693.9 540.4h0M991.2 539.5h0M750.7 540.8h0M1102.2 541.8h0M1116.6 541.4h0M353.9 543.9h0M352.3 537.7h0M1004.7 536.6h0M1117.4 538.1h0M1058.0 539.6h0M188.8 543.1h0M181.5 541.0h0M165.8 548.7h0M475.3 534.0h0M1221.6 543.1h0M458.5 547.6h0M835.3 536.6h0M759.9 541.1h0M709.2 535.6h0M180.6 544.0h0M614.1 547.8h0M525.0 536.3h0M401.1 542.3h0M1052.2 541.6h0M1010.0 541.7h0M528.9 546.5h0M423.9 542.4h0M625.3 547.8h0M552.8 537.3h0M668.2 543.3h0M391.6 539.1h0M835.7 534.2h0M956.5 541.9h0M492.2 542.6h0M1002.0 540.0h0M979.3 541.1h0M714.5 538.0h0M638.3 536.8h0M424.3 547.2h0M1116.1 537.7h0M854.2 535.5h0M341.7 543.8h0M733.3 541.5h0M337.4 536.2h0M362.5 543.6h0M355.1 538.0h0M1191.1 535.1h0M621.8 542.6h0M694.9 538.0h0M319.1 539.3h0M829.8 546.2h0M239.9 547.0h0M1048.8 543.1h0M687.2 545.9h0M868.9 547.0h0M333.2 545.4h0M382.0 539.7h0M1058.3 541.3h0M169.5 537.2h0M354.4 540.6h0M864.4 539.3h0M1042.2 539.2h0M923.5 539.5h0M177.5 542.2h0M293.6 546.7h0M1103.4 545.8h0M168.5 534.4h0M181.3 538.5h0M1211.5 535.2h0M525.9 542.2h0M328.1 543.3h0M766.3 544.7h0M296.8 541.0h0M943.7 547.5h0M593.8 540.6h0M447.7 537.6h0M400.3 536.1h0M439.3 535.5h0M337.0 535.3h0M369.0 537.0h0M743.9 542.8h0M1009.1 537.7h0M945.8 546.6h0M843.6 544.0h0M996.6 543.8h0M358.5 534.9h0M582.6 539.0h0M409.5 548.7h0M452.0 548.4h0M911.1 541.3h0M237.3 538.7h0M454.7 538.9h0M321.6 540.7h0M1038.0 544.5h0M841.4 536.4h0M682.9 537.5h0M954.3 539.4h0M1145.0 541.7h0M866.7 537.5h0M1183.1 535.4h0M995.6 539.6h0M1062.6 538.8h0M668.8 544.9h0M1096.9 541.0h0M516.5 534.9h0M334.3 536.2h0M1120.3 544.7h0M246.9 537.3h0M199.0 546.6h0M1251.0 540.3h0M1250.9 544.2h0M976.2 544.5h0M759.5 543.7h0M819.6 539.0h0M836.5 537.7h0M1126.2 537.5h0M683.3 536.0h0M261.7 540.1h0M605.2 540.2h0M406.2 544.9h0M189.3 538.6h0M886.3 536.1h0M409.4 538.4h0M1095.4 536.4h0M657.3 547.8h0M466.4 539.4h0M195.2 541.5h0M188.4 542.4h0M360.9 534.1h0M936.8 536.5h0M382.2 546.5h0M490.7 541.3h0M434.4 540.8h0M977.3 536.0h0M408.1 534.2h0M167.2 537.5h0M530.9 537.7h0M330.3 543.5h0M899.2 536.9h0M1129.7 538.4h0M171.1 542.6h0M840.5 540.2h0M622.9 548.1h0M1101.0 536.2h0M450.2 543.8h0M431.0 536.0h0M770.5 540.6h0M425.0 540.3h0M949.5 540.9h0M485.0 545.6h0M988.4 543.0h0M368.5 539.5h0M808.4 539.6h0M326.4 547.6h0M175.2 542.6h0M672.7 548.3h0M553.8 536.6h0M490.9 545.9h0M585.0 548.6h0M1014.0 540.9h0M680.3 539.2h0M996.9 545.9h0M1102.5 546.5h0M397.6 538.4h0M1250.3 546.1h0M430.5 537.3h0M1042.6 542.6h0M686.2 547.0h0M597.2 536.0h0M968.8 544.0h0M722.1 543.2h0M664.2 542.5h0M906.2 545.3h0M311.8 546.5h0M1129.5 547.4h0M486.4 548.0h0M1245.4 547.8h0M620.5 539.4h0M936.0 535.7h0M170.0 534.9h0M485.9 542.8h0M342.4 538.2h0M606.5 534.2h0M1073.9 534.8h0M624.3 537.1h0M180.6 548.3h0M353.9 546.6h0M1026.2 548.3h0M1101.4 536.0h0M582.1 548.4h0M1078.2 537.4h0M1017.7 544.0h0M1039.7 539.5h0M426.6 543.3h0M770.8 546.4h0M529.9 544.4h0M1249.3 537.4h0M207.2 540.1h0M365.5 541.4h0M852.0 544.0h0M1207.6 545.4h0M1071.5 548.3h0M753.4 547.0h0M964.4 536.8h0M613.0 535.2h0M518.1 537.9h0M787.8 538.2h0M703.3 541.2h0M362.3 541.5h0M907.0 542.7h0M559.4 538.5h0M1245.1 537.3h0M883.4 538.6h0M340.8 547.9h0M603.3 541.8h0M569.5 548.3h0M1146.3 548.1h0M469.0 542.5h0M732.6 538.8h0M1087.1 541.6h0M867.9 546.5h0M540.8 541.6h0M791.4 541.9h0M847.9 543.4h0M218.4 541.3h0M1042.7 539.6h0M728.0 534.9h0M654.3 541.8h0M234.6 540.6h0M738.3 544.8h0M1126.8 538.3h0M410.1 537.3h0M672.0 538.0h0M1011.2 536.8h0M890.7 548.2h0M1220.3 544.4h0M613.1 541.7h0M977.4 541.1h0M174.8 547.1h0M872.7 536.4h0M1058.3 548.5h0M881.1 548.5h0M1106.1 541.6h0M508.2 541.4h0M1243.8 535.3h0M783.0 537.9h0M400.4 537.3h0M881.6 548.6h0M462.9 537.0h0M264.4 548.5h0M1118.9 548.4h0M683.7 546.5h0M931.7 534.1h0M353.6 535.3h0M800.5 537.2h0M616.3 548.2h0M1048.4 548.0h0M428.8 548.0h0M729.4 547.4h0M963.4 540.4h0M502.8 535.5h0M1154.2 540.5h0M1080.7 541.1h0M762.1 543.2h0M1183.2 538.4h0M269.5 535.5h0M1150.1 539.6h0M622.8 537.1h0M1190.3 541.9h0M861.3 547.7h0M360.6 539.1h0M1229.5 541.4h0M254.4 535.2h0M1028.3 543.6h0M731.1 534.9h0M552.0 537.1h0M974.0 538.4h0M859.9 544.8h0M200.3 541.9h0M460.2 534.0h0M980.9 538.1h0M1251.1 544.0h0M451.2 542.5h0M950.5 541.7h0M414.5 548.3h0M1155.9 537.1h0M1239.8 545.7h0M201.7 541.6h0M354.2 538.5h0M597.8 534.5h0M500.5 536.0h0M548.6 535.9h0M326.3 542.0h0M683.1 534.3h0M540.8 538.3h0M830.8 536.6h0M997.0 536.2h0M621.1 542.7h0M1094.4 546.9h0M238.0 549.0h0M558.1 537.6h0M1026.3 534.9h0M565.1 546.9h0M545.0 546.5h0M1168.4 548.6h0M832.9 536.5h0M877.6 540.4h0M176.4 540.3h0M217.4 540.0h0M1230.7 544.4h0M1208.6 543.0h0M334.6 547.6h0M706.4 546.0h0M490.1 543.2h0M552.6 543.0h0M245.2 538.6h0M173.9 545.2h0M1045.2 537.4h0M245.6 546.0h0M286.2 536.0h0M761.1 534.6h0M389.4 540.1h0M1029.0 543.1h0M1079.8 544.1h0M1052.2 534.4h0M1014.9 544.1h0M1199.3 545.9h0M675.8 543.8h0M552.7 544.6h0M1103.6 545.7h0M436.0 538.7h0M218.3 538.5h0M1202.7 546.3h0M1130.1 543.8h0M736.9 537.7h0M735.9 540.8h0M561.4 536.3h0M756.2 540.3h0M1251.4 541.5h0M973.6 546.7h0M357.6 540.9h0M1248.7 546.7h0M367.8 535.1h0M565.5 537.4h0M381.1 548.1h0M231.5 537.3h0M681.9 535.4h0M877.5 543.7h0M261.6 537.2h0M1101.6 545.7h0M1222.5 537.3h0M285.7 537.1h0M164.1 546.8h0M223.0 548.8h0M788.2 534.6h0M785.1 538.4h0M784.7 548.7h0M626.8 534.3h0M623.1 534.3h0M251.3 537.3h0M249.2 547.8h0M573.1 535.8h0M337.9 534.3h0M374.8 537.2h0M691.6 536.5h0M1245.0 540.6h0M495.2 537.7h0M658.5 546.1h0M667.8 545.6h0M754.5 544.3h0M256.5 536.6h0M279.9 539.9h0M290.0 543.1h0M255.8 543.5h0M886.6 534.6h0M791.9 544.3h0M749.0 541.0h0M250.2 537.8h0M456.6 543.3h0M1170.3 546.2h0M308.2 536.9h0M651.9 538.9h0M1216.0 536.7h0M382.9 541.4h0M256.3 537.2h0M702.3 541.5h0M182.1 544.8h0M1225.2 538.5h0M1140.8 543.1h0M510.8 540.7h0M639.8 548.1h0M347.7 545.3h0M456.6 536.5h0M502.3 547.6h0M175.8 548.8h0M462.3 534.7h0M550.4 534.7h0M1255.6 547.6h0M993.7 543.8h0M523.8 537.9h0M576.9 534.0h0M323.3 543.0h0M337.2 546.8h0M1094.4 548.5h0M243.3 543.8h0M834.9 535.9h0M1107.9 538.7h0M895.2 535.7h0M1101.7 545.3h0M1185.1 542.5h0M1053.1 539.3h0M683.6 540.2h0M1038.8 544.3h0M935.2 537.1h0M475.0 536.1h0M492.4 545.4h0M224.7 534.7h0M691.6 544.5h0M1018.1 542.0h0M693.8 536.9h0M1091.4 538.3h0M782.6 545.8h0M206.5 541.9h0M1162.8 538.5h0M822.7 544.5h0M756.1 535.7h0M168.5 548.7h0M899.4 543.1h0M261.3 547.7h0M780.2 545.5h0M527.8 546.7h0M354.6 540.9h0M1039.3 536.0h0M892.0 541.7h0M1031.2 539.3h0M265.0 543.4h0M956.7 542.0h0M1034.5 547.2h0M1207.1 546.8h0M271.2 546.5h0M1167.0 540.6h0M310.4 546.3h0M500.7 547.0h0M759.3 546.9h0M832.6 541.7h0M841.0 546.1h0M721.1 536.6h0M830.5 546.9h0M870.8 541.4h0M468.8 539.3h0M507.9 539.7h0M1063.4 540.9h0M1028.2 540.4h0M882.5 540.8h0M685.6 539.6h0M1095.6 547.3h0M850.7 546.9h0M304.0 541.8h0M666.0 540.2h0M525.0 544.7h0M736.1 536.4h0M801.3 542.5h0M968.9 541.8h0M878.4 548.2h0M797.1 534.1h0M758.9 535.8h0M976.4 534.7h0M968.8 547.9h0M1132.5 548.8h0M203.0 548.0h0M205.6 536.9h0M939.8 539.6h0M914.4 548.9h0M532.3 541.9h0M1166.7 544.5h0M231.0 538.7h0M652.9 534.4h0M463.1 544.5h0M229.0 539.5h0M934.3 544.7h0M318.1 536.5h0M482.6 545.6h0M685.4 535.9h0M652.3 535.1h0M405.9 544.5h0M724.8 547.7h0M1209.9 537.5h0M1078.1 547.0h0M162.7 535.1h0M425.5 544.9h0M1127.0 535.2h0M680.4 541.0h0M912.6 549.0h0M467.9 545.9h0M393.5 547.3h0M752.1 544.2h0M1148.7 535.9h0M356.9 548.8h0M616.8 548.1h0M710.2 547.6h0M652.7 548.7h0M551.4 542.3h0M1221.1 536.9h0M597.9 538.5h0M387.3 540.6h0M272.6 539.3h0M1033.0 535.8h0M1164.7 544.1h0M738.4 544.1h0M1231.9 535.5h0M1126.9 538.5h0M844.3 540.8h0M373.6 538.4h0M954.3 535.2h0M421.8 540.8h0M453.0 540.4h0M266.4 534.1h0M917.2 537.2h0M587.0 540.6h0M831.9 535.1h0M269.4 534.5h0M597.7 538.9h0M219.6 536.8h0M529.7 548.2h0M738.4 545.9h0M1226.7 542.4h0M1119.5 542.0h0M963.3 539.5h0M647.2 535.4h0M680.7 547.4h0M948.3 534.5h0M895.0 535.2h0M442.4 538.0h0M803.7 541.1h0M888.4 537.1h0M432.6 535.6h0M893.8 544.6h0M831.7 539.4h0M165.8 546.7h0M659.0 546.3h0M846.4 548.0h0M633.6 548.4h0M487.6 536.6h0M702.1 546.4h0M562.1 535.3h0M388.3 538.0h0M311.0 540.9h0M698.7 543.2h0M380.4 541.0h0M251.5 536.5h0M334.8 539.5h0M1061.8 544.6h0M807.7 544.5h0M708.1 547.4h0M827.1 536.2h0M221.0 544.8h0M257.0 535.4h0M258.0 536.0h0M599.9 544.4h0M380.6 535.7h0M912.4 542.0h0M1219.3 543.1h0M569.0 540.0h0M347.5 541.1h0M740.2 543.5h0M492.2 540.7h0M739.5 537.1h0M315.4 547.7h0M760.1 545.9h0M798.7 544.9h0M998.8 544.5h0M884.4 540.3h0M882.5 543.6h0M429.4 542.2h0M1057.0 539.7h0M968.7 544.3h0M966.2 545.3h0M741.8 538.7h0M549.5 535.8h0M572.7 548.8h0M449.6 547.9h0M639.5 546.5h0M834.3 542.0h0M461.7 544.3h0M364.3 546.0h0M583.6 546.7h0M273.0 543.3h0M1013.8 541.2h0M584.9 540.0h0M600.9 543.2h0M669.3 548.6h0M291.9 539.9h0M1065.6 545.9h0M791.4 543.8h0M234.2 540.6h0M399.3 538.6h0M562.4 544.4h0M166.2 547.6h0M704.9 547.3h0M832.3 542.1h0M927.1 537.3h0M1118.0 544.0h0M180.2 544.6h0M300.7 547.4h0M584.5 534.1h0M276.4 541.6h0M659.7 541.8h0M864.4 542.4h0M513.2 536.3h0M918.2 538.0h0M1124.0 547.8h0M1180.3 542.1h0M501.3 545.7h0M1210.9 538.9h0M1032.7 539.2h0M1027.2 537.4h0M986.2 537.3h0M759.7 538.3h0M479.5 545.1h0M665.3 540.2h0M833.2 535.1h0M1182.2 536.4h0M640.8 537.9h0M631.9 535.8h0M1146.2 546.7h0M641.5 534.0h0M1016.4 548.8h0M274.0 540.3h0M869.0 547.6h0M840.3 537.0h0M1018.7 537.2h0M317.0 539.3h0M1234.8 535.6h0M213.3 540.7h0M658.1 537.3h0M1047.9 539.8h0M621.0 546.1h0M893.0 538.5h0M996.4 547.3h0M282.3 545.8h0M1204.1 541.9h0M623.8 539.2h0M1098.3 548.1h0M297.1 543.4h0M718.6 538.8h0M747.6 535.1h0M756.6 546.7h0M299.8 537.2h0M1115.6 539.0h0M1107.3 546.7h0M716.0 537.3h0M1123.2 539.8h0M976.7 534.8h0M758.7 544.3h0M165.7 535.1h0M181.8 537.7h0M1189.7 548.6h0M191.9 537.2h0M698.6 546.8h0M357.3 534.3h0M1187.4 543.4h0M365.9 534.0h0M950.3 542.1h0M665.3 538.0h0M168.2 538.0h0M415.1 546.9h0M666.1 539.9h0M760.4 547.1h0M217.7 542.0h0M955.6 546.3h0M320.3 544.7h0M901.9 541.2h0M694.5 546.1h0M1222.0 539.6h0M697.8 536.1h0M492.7 542.7h0M921.0 542.7h0M1155.8 539.9h0M433.1 545.0h0M375.4 538.5h0M854.0 541.7h0M1002.3 545.2h0M761.4 544.1h0M1132.4 534.8h0M936.8 539.4h0M1186.9 546.1h0M481.4 535.6h0M716.7 535.8h0M989.6 535.9h0M194.5 548.0h0M923.4 548.6h0M335.2 546.3h0M619.1 535.6h0M373.0 540.7h0M877.6 547.0h0M1117.1 545.6h0M971.2 548.7h0M729.5 545.7h0M371.6 546.3h0M939.3 542.2h0M815.6 534.2h0M242.2 545.7h0M603.4 541.1h0M378.5 535.0h0M500.0 542.4h0M525.8 541.7h0M395.3 545.5h0M737.7 547.8h0M804.5 546.3h0M821.8 537.0h0M529.8 539.2h0M286.0 538.4h0M167.1 539.2h0M457.4 537.1h0M539.6 534.8h0M849.0 535.7h0M453.1 541.5h0M1263.7 541.7h0M190.3 540.6h0M816.4 548.6h0M677.0 548.7h0M263.9 539.4h0M545.3 540.0h0M450.5 537.2h0M317.0 540.4h0M744.7 539.8h0M1030.7 538.2h0M548.9 536.7h0M992.3 534.0h0M533.0 537.1h0M165.2 545.2h0M656.1 545.3h0M906.0 541.1h0M1086.3 541.6h0M1240.2 548.2h0M345.4 539.5h0M674.7 539.1h0M1062.1 542.8h0M1215.1 542.0h0M232.7 548.6h0M1225.3 540.5h0M357.6 545.8h0M874.7 546.0h0M1105.3 547.9h0M964.6 535.2h0M1152.5 544.1h0M950.8 536.9h0M630.8 538.6h0M1001.7 548.9h0M1141.2 546.1h0M1172.4 542.8h0M786.6 539.3h0M255.2 548.5h0M635.0 534.3h0M1042.4 542.2h0M832.7 541.6h0M1042.5 545.0h0M434.6 539.8h0M1101.0 545.4h0M470.8 548.8h0M1258.5 541.8h0M273.7 535.4h0M495.2 543.8h0M1057.3 540.8h0M239.7 541.3h0M1205.3 545.3h0M673.9 535.9h0M909.6 536.9h0M1259.6 546.8h0M840.4 545.4h0M721.5 542.7h0M1062.1 537.3h0M342.1 540.6h0M961.9 548.1h0M904.4 536.4h0M237.5 535.4h0M950.6 547.2h0M830.9 535.5h0M1100.0 543.9h0M922.2 540.0h0M873.4 537.3h0M249.6 537.9h0M233.9 546.2h0M292.1 545.8h0M498.5 541.7h0M255.7 539.8h0M731.9 534.3h0M306.6 544.9h0M790.7 546.3h0M719.5 535.1h0M269.6 541.0h0M260.8 539.7h0M340.6 548.6h0M455.9 543.8h0M440.8 544.0h0M1260.5 547.4h0M593.3 547.1h0M810.1 535.0h0M755.4 538.7h0M634.5 540.7h0M775.7 539.1h0M877.4 542.9h0M479.4 540.4h0M1223.9 543.6h0M1214.9 541.4h0M290.7 538.2h0M1125.3 546.0h0M753.5 540.1h0M610.6 540.1h0M925.9 541.6h0M895.2 544.8h0M435.2 541.1h0M731.7 544.1h0M330.3 539.9h0M245.8 538.5h0M1230.5 538.9h0M245.1 534.2h0M823.4 544.7h0M445.6 534.8h0M820.2 538.2h0M361.8 547.9h0M222.2 541.2h0M1167.3 539.4h0M943.9 544.6h0M186.2 548.9h0M715.3 535.7h0M943.1 541.3h0M1119.6 536.8h0M885.6 539.1h0M569.3 534.6h0M372.8 546.3h0M458.8 542.9h0M1093.1 546.5h0M387.6 540.4h0M464.4 538.2h0M166.3 542.7h0M845.2 542.7h0M708.2 535.0h0M805.1 535.5h0M522.1 538.3h0M336.1 546.2h0M526.9 537.6h0M1177.7 541.5h0M553.6 547.3h0M201.6 534.7h0M560.6 539.9h0M181.7 537.0h0M364.6 534.3h0M986.1 543.0h0M659.0 536.5h0M335.5 548.1h0M796.5 543.4h0M751.7 545.1h0M984.6 546.2h0M361.1 547.3h0M930.7 535.0h0M641.5 548.4h0M459.3 542.5h0M215.3 540.9h0M258.8 539.6h0M843.9 535.6h0M243.4 542.7h0M396.6 540.4h0M382.6 547.5h0M948.4 539.1h0M402.5 544.0h0M993.4 537.6h0M919.9 537.0h0M764.9 541.4h0M349.1 542.5h0M781.5 536.2h0M208.5 538.8h0M1078.6 541.4h0M588.5 544.0h0M392.6 541.1h0M1216.3 545.1h0M346.5 544.1h0M1112.1 541.1h0M847.2 539.1h0M961.1 538.1h0M317.5 543.1h0M315.4 547.9h0M1068.7 537.9h0M348.0 543.2h0M1175.3 536.1h0M925.8 537.5h0M1257.5 543.9h0M508.2 536.0h0M1031.9 548.2h0M1198.9 547.2h0M413.3 537.2h0M210.0 548.2h0M1052.8 543.8h0M320.1 537.6h0M723.2 544.0h0M1160.0 543.8h0M1016.8 537.7h0M632.2 545.5h0M916.3 536.4h0M645.4 538.9h0M336.9 540.3h0M746.8 537.7h0M1232.8 543.7h0M554.0 538.6h0M472.9 541.5h0M353.9 541.2h0M443.4 537.6h0M747.6 545.5h0M687.9 535.6h0M635.6 545.5h0M905.1 539.7h0M772.4 544.3h0M1161.1 541.3h0M405.2 538.5h0M1260.8 534.3h0M242.0 548.6h0M698.0 534.2h0M193.0 541.2h0M1234.1 548.1h0M273.1 546.3h0M1025.2 539.0h0M1078.0 543.3h0M232.5 543.2h0M845.4 536.3h0M287.2 547.8h0M907.6 534.3h0M1087.8 547.7h0M287.4 545.3h0M459.0 539.9h0M761.2 536.2h0M598.9 537.9h0M251.7 539.3h0M1237.9 541.8h0M601.8 543.6h0M940.0 545.6h0M610.7 535.7h0M220.8 544.2h0M661.0 540.2h0M400.7 538.0h0M1259.2 540.8h0M769.3 536.5h0M457.1 538.1h0M1083.8 541.4h0M964.9 538.8h0M714.7 541.3h0M426.4 541.4h0M421.3 536.1h0M1172.7 534.1h0M322.0 538.5h0M1258.5 535.3h0M396.0 535.4h0M317.3 544.7h0M1040.8 545.1h0M799.8 542.3h0M1171.1 548.4h0M1001.3 548.2h0M876.1 544.3h0M331.8 535.9h0M1083.9 547.3h0M1113.5 544.9h0M844.6 542.8h0M714.6 544.4h0M919.2 547.6h0M487.4 535.7h0M195.5 541.1h0M844.9 534.9h0M1027.4 541.5h0M533.4 546.2h0M807.0 543.1h0M1089.9 540.3h0M363.3 538.4h0M249.0 544.8h0M527.6 546.8h0M264.9 536.5h0M899.2 542.6h0M974.7 536.1h0M948.3 538.3h0M738.5 542.5h0M346.1 541.3h0M868.8 543.2h0M444.0 538.1h0M681.9 541.2h0M1217.3 538.3h0M965.8 545.0h0M977.6 545.1h0M267.9 549.0h0M256.7 543.1h0M843.0 544.9h0M686.5 541.6h0M287.6 540.7h0M1165.6 547.7h0M430.8 548.2h0M1196.1 544.2h0M368.5 539.3h0M786.9 541.9h0M364.0 543.4h0M568.4 537.1h0M1025.2 543.0h0M999.3 541.0h0M480.4 548.7h0M1168.9 540.4h0M902.1 543.3h0M974.5 537.7h0M1226.6 546.6h0M695.5 536.3h0M646.0 548.5h0M827.1 535.2h0M837.3 547.5h0M1241.3 538.3h0M970.4 543.3h0M1217.4 539.2h0M1090.2 543.7h0M596.7 543.1h0M719.3 548.8h0M615.9 539.0h0M872.5 537.5h0M1063.6 540.3h0M806.8 546.4h0M638.3 546.7h0M748.7 536.1h0M373.7 547.5h0M1050.7 541.5h0M1138.4 537.1h0M474.2 535.5h0M807.9 544.2h0M270.5 534.2h0M1262.7 539.8h0M597.5 538.4h0M483.0 548.3h0M265.0 541.5h0M875.8 542.4h0M664.4 542.4h0M1076.5 546.1h0M405.3 538.9h0M1017.5 535.8h0M1003.9 541.4h0M838.1 535.5h0M484.6 539.3h0M213.3 534.6h0M426.3 534.8h0M1133.7 545.1h0M329.6 541.8h0M410.8 546.6h0M1225.1 537.1h0M437.0 544.9h0M234.1 535.6h0M641.2 535.3h0M585.4 539.4h0M814.6 538.3h0M440.9 535.1h0M500.8 541.5h0M352.1 541.8h0M495.5 543.9h0M325.0 538.2h0M986.6 545.8h0M842.5 538.5h0M620.9 543.3h0M1233.9 545.0h0M870.9 538.2h0M1050.3 545.4h0M597.1 537.6h0M853.3 539.2h0M306.4 540.2h0M1089.7 543.0h0M1052.5 538.6h0M1210.5 537.3h0M1085.4 547.7h0M291.6 548.5h0M517.4 536.5h0M672.0 544.6h0M1120.0 548.1h0M925.5 536.8h0M529.3 545.1h0M317.4 546.9h0M215.6 543.5h0M570.4 543.8h0M274.1 547.7h0M412.5 547.6h0M873.8 541.5h0M441.7 535.9h0M831.4 544.1h0M218.1 541.6h0M824.7 536.6h0M443.5 534.0h0M1202.5 548.8h0M575.8 543.6h0M691.6 546.8h0M1150.5 544.2h0M995.0 540.6h0M215.2 539.4h0M1058.1 534.7h0M221.4 548.9h0M822.2 548.6h0M920.4 547.6h0M1099.3 541.2h0M1103.8 537.0h0M910.1 539.8h0M912.3 540.3h0M1213.0 535.8h0M861.4 542.1h0M787.1 544.5h0M551.7 534.2h0M1121.6 540.1h0M187.1 547.7h0M497.8 545.5h0M792.1 534.8h0M833.6 541.2h0M1154.4 542.6h0M331.5 547.7h0M362.0 539.6h0M691.1 535.5h0M685.6 535.6h0M974.1 535.9h0M421.4 540.8h0M829.3 540.9h0M1133.7 543.8h0M933.2 535.6h0M351.7 548.1h0M1248.6 539.9h0M487.5 544.0h0M1221.3 536.6h0M975.6 546.3h0M1236.7 535.4h0M596.6 543.9h0M299.8 545.3h0M265.8 544.2h0M584.5 540.9h0M390.2 540.2h0M440.6 536.1h0M341.1 546.9h0M1057.2 536.9h0M742.4 536.1h0M906.5 543.5h0M367.4 537.1h0M871.4 543.2h0M767.4 542.6h0M417.3 544.8h0M637.2 545.0h0M780.1 547.7h0M732.1 536.6h0M684.9 547.7h0M791.7 540.2h0M742.7 535.5h0M419.1 535.8h0M907.4 546.9h0M417.7 547.1h0M424.3 540.8h0M720.5 541.7h0M579.5 540.4h0M494.8 535.0h0M457.9 539.9h0M360.6 537.7h0M935.5 540.0h0M639.8 546.7h0M372.3 547.5h0M1145.3 538.2h0M1258.1 539.7h0M671.8 541.0h0M714.7 534.8h0M175.8 535.3h0M1159.8 544.1h0M1084.1 536.5h0M788.7 537.7h0M654.3 542.3h0M1229.7 540.2h0M216.0 545.3h0M935.6 542.8h0M995.4 539.3h0M226.8 541.7h0M235.0 538.0h0M720.6 548.1h0M1218.1 543.1h0M618.7 540.6h0M850.6 546.3h0M851.7 545.7h0M319.0 536.9h0M1257.9 542.3h0M746.6 545.1h0M472.8 536.3h0M712.3 536.5h0M1170.0 534.3h0M280.3 543.1h0M1070.2 547.2h0M1079.1 539.8h0M843.7 547.8h0M254.7 546.7h0M1250.8 535.1h0M900.4 548.0h0M614.7 548.3h0M749.7 545.3h0M358.5 542.7h0M899.5 536.4h0M598.6 542.1h0M1028.0 546.2h0M1095.5 540.5h0M625.2 542.5h0M173.9 545.6h0M296.7 536.1h0M286.4 543.0h0M750.4 536.5h0M226.4 541.0h0M1066.7 534.8h0M946.6 537.9h0M698.7 536.4h0M766.7 547.0h0M1244.8 548.5h0M834.7 544.1h0M789.8 548.2h0M1030.1 543.3h0M329.4 540.7h0M811.3 545.3h0M1162.2 546.9h0M449.2 541.9h0M498.7 541.0h0M188.6 548.8h0M1082.7 536.3h0M785.6 539.4h0M633.0 542.0h0M383.7 535.9h0M1239.2 535.3h0M555.2 536.1h0M1135.3 544.0h0M343.0 539.4h0M356.2 548.7h0M668.5 535.2h0M168.5 548.5h0M1257.4 545.7h0M841.2 542.6h0M1061.6 549.0h0M975.6 537.9h0M1210.6 538.2h0M515.0 546.3h0M369.3 541.3h0M421.3 539.7h0M593.2 535.4h0M789.2 539.6h0M747.4 538.4h0M999.7 538.7h0M1204.8 546.8h0M168.5 535.7h0M323.2 540.5h0M514.6 536.3h0M462.7 540.2h0M225.7 542.0h0M730.3 546.4h0M173.4 537.6h0M1173.5 544.7h0M342.7 546.7h0M1131.7 535.3h0M1121.1 548.6h0M929.4 546.4h0M789.8 534.9h0M375.2 546.3h0M940.9 538.4h0M1024.1 542.6h0M994.5 539.8h0M992.7 535.4h0M942.3 537.3h0M1037.2 547.3h0M424.1 544.2h0M746.7 543.6h0M470.8 538.5h0M827.7 548.3h0M1252.6 536.3h0M854.9 542.0h0M640.3 541.6h0M391.3 536.6h0M656.7 545.2h0M521.1 546.4h0M389.9 537.0h0M962.7 543.3h0M828.5 548.5h0M799.6 543.2h0M708.2 545.6h0M724.0 536.8h0M580.5 547.7h0M419.5 536.9h0M1248.1 540.2h0M243.4 540.9h0M320.0 542.5h0M1187.6 542.0h0M457.1 541.5h0M903.5 537.7h0M266.7 542.8h0M705.4 534.7h0M332.0 546.0h0M686.1 539.5h0M1215.2 547.8h0M281.8 546.4h0M743.7 539.3h0M1113.6 538.2h0M721.4 543.5h0M247.1 545.3h0M632.1 538.2h0M408.5 548.4h0M1014.7 545.3h0M990.5 542.8h0M491.1 534.6h0M343.5 543.9h0M245.9 535.1h0M900.1 547.2h0M1004.2 537.2h0M1187.1 539.1h0M424.0 542.2h0M883.8 540.9h0M708.7 540.5h0M1072.6 535.8h0M860.8 548.6h0M214.5 546.3h0M724.0 537.8h0M268.7 535.1h0M868.1 543.0h0M903.8 537.5h0M448.5 548.5h0M826.6 534.9h0M671.2 535.0h0M968.8 546.8h0M702.5 535.0h0M852.8 548.4h0M658.4 538.4h0M281.6 539.2h0M621.7 547.0h0M743.1 544.7h0M764.3 535.0h0M259.6 549.0h0M1257.2 548.6h0M888.2 540.2h0M268.5 543.6h0M697.5 544.6h0M302.3 534.1h0M324.4 545.0h0M455.5 540.0h0M661.5 547.4h0M712.6 545.0h0M386.1 541.8h0M352.4 546.0h0M950.8 540.0h0M916.7 541.3h0M297.6 542.7h0M478.0 536.1h0M910.1 539.3h0M835.8 543.4h0M1136.8 537.5h0M651.5 541.7h0M808.6 535.4h0M1099.4 535.7h0M656.0 534.3h0M366.7 542.5h0M1057.5 543.3h0M1157.9 539.3h0M709.5 534.0h0M817.6 534.1h0M435.4 546.9h0M375.0 545.9h0M729.5 544.6h0M881.3 546.7h0M262.5 544.7h0M778.0 546.5h0M697.1 538.9h0M332.4 536.2h0M347.7 537.8h0M474.6 542.6h0M668.4 545.2h0M538.6 548.5h0M208.5 544.6h0M491.4 544.5h0M429.8 535.6h0M706.8 545.6h0M679.6 545.5h0M874.4 538.4h0M233.5 540.8h0M363.2 542.1h0M732.5 539.7h0M484.4 545.2h0M283.6 546.4h0M1224.8 536.8h0M820.7 537.4h0M497.3 541.6h0M169.7 545.6h0M574.8 541.1h0M309.4 541.9h0M505.4 545.8h0M646.0 534.8h0M854.2 546.6h0M1102.2 538.1h0M993.3 546.5h0M210.1 539.7h0M885.2 539.6h0M218.2 535.7h0M1211.1 540.7h0M1026.5 546.4h0M1104.2 540.5h0M768.9 541.1h0M809.3 546.6h0M563.2 538.3h0M850.6 535.5h0M340.3 543.3h0M448.4 535.3h0M214.4 541.8h0M741.8 538.2h0M1140.1 538.2h0M731.2 544.1h0M342.3 540.3h0M683.7 543.5h0M490.6 546.3h0M311.2 540.8h0M1128.9 545.6h0M176.4 537.1h0M263.9 538.7h0M730.6 540.7h0M1154.6 546.0h0M905.3 535.1h0M1246.3 534.7h0M214.7 549.0h0M225.7 544.6h0M1126.7 547.1h0M880.4 540.6h0M229.3 545.5h0M228.1 534.5h0M929.3 545.2h0M405.0 536.9h0M708.8 545.4h0M572.4 541.6h0M362.3 547.6h0M616.9 537.0h0M397.2 539.7h0M1150.8 535.8h0M635.8 537.3h0M1254.4 534.1h0M641.1 546.5h0M373.9 541.9h0M589.1 538.7h0M603.3 547.6h0M954.9 543.4h0M258.8 543.2h0M391.2 539.3h0M616.9 542.5h0M922.5 535.9h0M1038.2 536.8h0M407.4 547.2h0M255.9 539.0h0M511.6 548.4h0M414.3 546.6h0M599.5 543.2h0M242.3 540.2h0M612.5 536.0h0M1002.4 535.1h0M290.2 541.0h0M229.6 537.9h0M731.9 547.6h0M841.3 540.5h0M811.1 542.7h0M970.0 535.5h0M824.5 547.1h0M1248.8 538.1h0M1263.0 536.9h0M641.0 546.4h0M342.3 547.5h0M675.2 540.0h0M1102.6 536.5h0M961.3 548.6h0M714.5 540.5h0M486.6 534.2h0M837.1 536.1h0M224.2 541.7h0M427.2 534.6h0M845.4 545.4h0M1105.2 536.6h0M1088.7 537.7h0M931.6 544.4h0M1229.9 545.3h0M836.7 543.8h0M869.3 539.6h0M665.2 548.3h0M693.6 547.2h0M1234.4 537.1h0M1087.1 539.7h0M1055.6 546.0h0M1194.4 536.4h0M433.9 534.3h0M208.3 534.8h0M992.5 542.7h0M698.1 543.2h0M1060.0 538.2h0M979.2 546.1h0M531.4 535.3h0M488.8 547.5h0M1244.8 538.9h0M550.9 535.5h0M274.8 534.4h0M1210.2 547.0h0M1210.0 534.9h0M1109.3 546.9h0M314.7 545.5h0M1030.2 537.0h0M1070.7 540.4h0M755.3 534.2h0M692.7 538.1h0M715.9 545.7h0M1010.5 536.3h0M1003.3 537.4h0M755.2 534.5h0M343.4 546.9h0M216.1 544.6h0M810.8 541.6h0M785.8 537.0h0M293.6 538.7h0M542.6 537.6h0M946.3 548.9h0M1220.4 540.4h0M347.0 539.2h0M1012.2 544.8h0M364.2 538.0h0M267.4 548.7h0M787.1 535.9h0M345.8 548.4h0M251.3 544.2h0M307.8 536.0h0M1172.1 545.8h0M927.7 539.9h0M913.1 546.6h0M852.9 543.9h0M462.4 542.1h0M532.9 538.0h0M443.9 540.2h0M1117.3 545.6h0M800.9 540.8h0M1082.1 539.0h0M276.4 536.1h0M967.1 536.6h0M1129.0 546.1h0M1199.0 543.4h0M1037.5 545.1h0M1074.3 535.4h0M810.7 535.7h0M381.9 538.8h0M675.3 544.4h0M1149.8 538.3h0M327.2 537.6h0M234.0 545.1h0M608.5 547.2h0M619.1 537.5h0M616.5 535.8h0M1076.4 539.4h0M714.7 536.4h0M485.1 540.2h0M909.3 544.8h0M300.1 548.4h0M1170.1 539.0h0M1220.9 541.6h0M320.3 546.4h0M1159.4 548.1h0M1167.3 535.3h0M1249.1 537.5h0M623.0 546.3h0M228.1 541.5h0M492.8 548.8h0M426.2 544.4h0M674.5 542.7h0M385.4 548.2h0M957.8 534.1h0M502.5 544.8h0M1258.4 547.2h0M884.0 543.9h0M169.1 538.1h0M1231.1 540.9h0M902.2 543.2h0M191.7 534.6h0M484.5 547.1h0M944.1 544.0h0M662.9 536.9h0M795.0 538.6h0M1155.5 548.5h0M210.6 546.8h0M961.3 544.9h0M800.6 539.4h0M281.4 540.6h0M408.4 536.8h0M492.6 539.3h0M660.5 548.2h0M621.1 547.0h0M791.5 547.3h0M600.5 544.2h0M333.3 543.3h0M166.7 544.0h0M944.3 536.8h0M330.2 540.8h0M1146.6 547.0h0M1126.6 548.9h0M592.1 534.1h0M1006.3 535.1h0M1177.7 538.9h0M172.6 538.4h0M188.7 534.5h0M613.7 541.5h0M587.3 542.7h0M390.6 537.1h0M1114.3 536.8h0M524.7 542.8h0M1226.0 543.7h0M400.0 541.0h0M510.3 534.1h0M863.8 536.7h0M1166.0 538.7h0M199.1 542.5h0M284.5 536.2h0M213.4 540.8h0M710.4 542.8h0M1011.9 535.9h0M706.3 538.1h0M167.3 536.4h0M309.9 544.7h0M564.1 544.1h0M1012.2 545.6h0M602.9 547.2h0M477.1 548.8h0M432.0 546.1h0M624.1 545.0h0M769.9 536.8h0M1218.3 541.7h0M759.2 534.5h0M985.9 546.3h0M1238.5 544.6h0M376.9 535.0h0M1098.5 541.5h0M969.8 537.8h0M690.7 536.0h0M418.0 537.6h0M208.8 539.5h0M914.0 542.5h0M261.7 540.6h0M545.6 545.0h0M253.9 535.7h0M217.6 541.1h0M723.1 543.4h0M286.4 534.9h0M390.0 546.5h0M421.4 540.9h0M458.5 534.6h0M1038.3 546.1h0M719.8 534.3h0M568.9 542.2h0M198.8 534.4h0M1124.5 547.0h0M994.8 547.0h0M182.4 548.2h0M1049.6 539.4h0M962.3 542.1h0M809.1 543.3h0M665.3 545.8h0M570.8 547.8h0M1143.8 546.0h0M181.2 539.2h0M1162.7 544.4h0M937.5 546.1h0M1173.1 540.5h0M952.8 543.1h0M1056.1 547.7h0M810.3 544.6h0M1136.1 538.0h0M170.5 537.7h0M825.5 542.1h0M713.8 537.9h0M450.4 544.3h0M893.6 535.2h0M179.1 535.5h0M672.2 545.0h0M998.7 540.1h0M960.6 543.5h0M1165.2 545.9h0M951.9 546.9h0M971.0 542.5h0M756.3 548.2h0M1048.4 543.5h0M354.6 539.0h0M988.4 539.2h0M1091.9 538.1h0M473.0 541.7h0M1013.6 537.5h0M956.9 539.5h0M1153.0 545.4h0M288.7 548.9h0M852.2 543.5h0M1221.8 545.8h0M303.7 548.8h0M527.6 536.9h0M604.0 545.6h0M515.6 543.0h0M820.5 541.7h0M867.8 542.6h0M429.8 542.6h0M367.6 545.7h0M195.0 537.0h0M1011.6 540.1h0M791.1 535.4h0M952.4 536.6h0M668.9 547.1h0M885.7 534.6h0M703.3 545.8h0M923.2 544.8h0M276.1 544.1h0M778.1 539.6h0M1184.8 535.0h0M930.0 547.0h0M306.1 542.4h0M523.4 547.3h0M624.6 541.0h0M376.7 536.2h0M1110.1 548.9h0M262.8 534.7h0M879.5 546.4h0M524.5 546.3h0M1012.7 545.8h0M791.3 548.3h0M584.8 535.3h0M1228.6 543.2h0M616.3 546.9h0M1026.9 545.3h0M957.9 544.5h0M638.0 548.9h0M1181.0 548.0h0M871.3 536.9h0M1207.1 536.3h0M528.8 537.9h0M1048.7 535.4h0M500.7 544.0h0M1176.2 541.2h0M437.9 544.5h0M535.5 545.6h0M558.3 546.5h0M689.2 549.0h0M344.4 537.8h0M418.6 541.5h0M464.0 547.3h0M1184.0 535.8h0M312.7 540.7h0M379.7 538.0h0M718.2 546.7h0M349.8 541.3h0M1001.7 541.3h0M506.9 540.6h0M769.6 541.0h0M762.0 546.1h0M435.1 542.3h0M1077.6 544.3h0M670.9 543.8h0M228.8 546.2h0M624.0 542.7h0M441.7 545.3h0M626.4 542.8h0M401.5 543.2h0M695.9 542.9h0M1125.0 542.8h0M1134.8 545.8h0M1256.4 540.2h0M1030.9 536.8h0M498.8 543.1h0M439.0 538.4h0M884.6 534.5h0M495.6 543.2h0M1107.0 544.3h0M284.2 536.5h0M537.8 539.3h0M389.2 548.1h0M1026.7 541.6h0M453.6 543.3h0M985.0 544.6h0M1104.7 540.6h0M973.5 546.2h0M665.3 548.6h0M212.7 534.9h0M369.4 548.2h0M288.2 548.2h0M341.9 536.9h0M904.5 543.3h0M248.4 539.0h0M284.6 542.9h0M869.9 536.4h0M216.9 545.6h0M236.9 535.8h0M1153.0 538.3h0M307.1 541.8h0M593.8 547.5h0M201.4 535.2h0M774.6 537.6h0M1162.5 534.3h0M514.1 542.7h0M811.9 542.8h0M1106.5 537.8h0M689.6 547.8h0M511.6 544.8h0M1146.3 538.4h0M520.8 543.0h0M228.9 534.8h0M636.7 535.8h0M890.3 540.1h0M757.7 547.7h0M1248.7 543.6h0M568.1 542.7h0M753.1 546.8h0M737.0 535.4h0M750.0 537.6h0M195.1 534.6h0M777.8 539.8h0M1193.0 536.1h0M287.3 540.3h0M551.9 546.5h0M327.5 541.3h0M304.9 535.8h0M1100.2 537.5h0M608.3 547.8h0M1235.3 547.0h0M1022.4 537.0h0M1192.1 536.4h0M869.1 545.1h0M167.5 543.3h0M611.9 546.6h0M1149.9 544.6h0M1189.6 545.9h0M321.8 542.4h0M1085.5 543.2h0M708.3 548.0h0M815.0 542.1h0M570.7 540.4h0M489.7 537.6h0M799.5 536.5h0M1198.3 538.3h0M816.1 547.2h0M170.9 539.7h0M571.0 545.1h0M1069.2 542.0h0M188.7 543.3h0M905.7 538.8h0M1196.0 538.6h0M982.5 545.2h0M317.6 536.4h0M1164.9 537.2h0M998.9 540.4h0M386.1 537.9h0M877.2 536.2h0M1168.7 547.6h0M588.3 540.4h0M856.3 542.5h0M776.0 542.8h0M1065.3 534.4h0M337.4 535.8h0M374.9 534.2h0M700.2 542.8h0M247.1 544.0h0M466.0 545.7h0M1022.2 534.3h0M623.9 542.6h0M981.5 546.3h0M766.1 545.6h0M543.2 541.9h0M748.9 546.3h0M1236.1 540.8h0M1253.5 535.3h0M854.2 538.8h0M1054.1 547.7h0M559.0 537.1h0M248.2 546.7h0M1092.8 547.5h0M495.1 545.2h0M1030.4 541.9h0M167.9 545.1h0M1027.6 536.2h0M484.6 536.2h0M408.2 540.7h0M1142.5 544.5h0M1051.1 539.5h0M259.7 542.6h0M1139.0 546.0h0M988.5 536.0h0M590.8 540.2h0M246.0 541.6h0M564.2 545.1h0M884.4 541.2h0M902.8 538.0h0M343.4 535.7h0M522.0 547.2h0M1021.1 547.8h0M398.0 547.0h0M269.0 546.8h0M953.5 535.3h0M1233.0 540.4h0M489.7 544.0h0M414.9 541.0h0M648.1 547.6h0M1153.2 536.6h0M745.1 546.8h0M509.6 546.7h0M1232.0 545.2h0M944.5 537.0h0M462.6 548.1h0M1113.6 548.0h0M725.1 548.2h0M902.3 535.9h0M559.9 543.4h0M485.9 547.0h0M541.5 545.8h0M1076.1 546.5h0M757.2 545.1h0M686.5 540.1h0M466.5 535.4h0M994.0 535.0h0M837.3 548.4h0M175.5 534.6h0M1006.2 540.0h0M789.8 540.6h0M1112.9 534.5h0M189.7 534.1h0M176.7 547.4h0M994.2 545.1h0M738.0 543.7h0M296.4 545.5h0M1055.7 535.2h0M1007.1 535.0h0M407.7 535.9h0M862.0 539.1h0M854.9 538.2h0M780.2 543.6h0M1206.8 539.9h0M319.0 547.6h0M1089.1 546.1h0M902.3 547.0h0M1150.9 534.6h0M558.3 542.3h0M457.0 538.0h0M872.7 548.2h0M950.1 548.7h0M398.0 543.7h0M1035.1 542.0h0M904.7 545.2h0M977.6 538.2h0M970.2 547.8h0M626.8 537.6h0M1223.9 543.9h0M316.1 539.1h0M713.6 544.7h0M629.0 545.5h0M697.3 546.8h0M790.1 545.6h0M903.4 542.3h0M469.4 544.2h0M231.1 542.3h0M527.0 542.8h0M503.5 535.6h0M307.8 536.8h0M327.1 546.8h0M182.9 543.7h0M680.1 545.3h0M1073.6 537.8h0M1019.6 544.5h0M882.7 547.8h0M696.0 544.9h0M1116.4 539.1h0M594.2 539.7h0M741.1 547.2h0M422.9 539.1h0M462.6 546.2h0M718.4 539.1h0M824.1 538.9h0M750.9 544.5h0M1164.1 547.3h0M728.7 541.9h0M553.6 536.3h0M163.3 543.3h0M181.8 548.0h0M953.3 535.1h0M625.9 537.2h0M557.3 544.8h0M642.5 545.0h0M1169.2 536.1h0M227.1 544.7h0M1017.4 544.2h0M361.0 547.5h0M937.3 545.2h0M205.6 538.4h0M385.7 543.5h0M899.7 541.5h0M547.5 534.9h0M1250.0 538.4h0M793.2 542.9h0M424.0 545.9h0M399.4 545.1h0M467.7 543.8h0M1081.7 546.2h0M1166.5 548.5h0M622.4 543.1h0M923.4 542.4h0M493.5 543.9h0M658.0 542.7h0M958.2 540.7h0M887.1 542.8h0M1047.3 544.3h0M611.1 541.4h0M309.9 541.7h0M417.6 545.8h0M919.8 539.7h0M823.3 534.9h0M1236.2 544.0h0M183.3 547.2h0M429.0 544.1h0M1107.8 537.2h0M815.1 547.3h0M378.4 538.4h0M797.9 534.0h0M880.4 546.3h0M1126.4 545.0h0M742.5 540.0h0M559.6 540.5h0M633.3 538.5h0M871.9 547.5h0M463.7 542.9h0M1095.0 544.4h0M1197.0 534.9h0M937.7 540.5h0M317.9 541.3h0M506.8 546.0h0M392.3 534.2h0M234.4 534.1h0M510.4 541.1h0M1167.5 545.2h0M712.5 539.2h0M1177.6 540.5h0M910.9 544.6h0M225.6 543.9h0M815.6 537.4h0M1000.6 545.0h0M754.2 546.8h0M481.0 543.8h0M606.6 546.2h0M889.4 543.1h0M783.4 546.6h0M311.1 535.7h0M614.0 548.4h0M566.1 537.8h0M206.6 543.2h0M620.0 541.9h0M1099.1 538.9h0M635.5 540.5h0M227.4 543.1h0M991.3 548.8h0M988.6 536.7h0M807.3 538.2h0M181.5 544.9h0M263.4 547.5h0M396.5 538.4h0M202.6 544.5h0M1010.6 538.9h0M403.2 543.8h0M1221.8 538.5h0M163.5 547.9h0M1105.8 542.7h0M1098.9 541.4h0M1126.8 540.5h0M314.9 542.4h0M871.6 542.8h0M1080.8 540.1h0M541.6 547.5h0M636.6 535.9h0M903.9 545.4h0M988.6 543.8h0M1087.1 543.1h0M235.7 547.7h0M1199.2 534.8h0M170.8 535.7h0M753.2 537.7h0M563.1 544.6h0M1039.6 534.1h0M1098.2 542.6h0M1175.2 542.3h0M1201.5 536.6h0M640.1 544.4h0M358.1 541.3h0M774.7 548.3h0M1162.1 535.2h0M269.6 534.8h0M645.4 540.7h0M868.6 543.2h0M574.9 542.4h0M593.8 540.1h0M1004.3 537.2h0M656.2 536.0h0M1065.4 547.1h0M587.8 536.2h0M322.0 545.6h0M188.1 544.6h0M708.4 545.9h0M480.2 541.9h0M607.7 539.2h0M1175.7 547.4h0M769.7 535.3h0M834.8 541.5h0M765.6 535.9h0M1048.4 546.4h0M878.9 535.7h0M1244.3 536.6h0M1011.5 535.5h0M1154.0 534.0h0M895.3 547.5h0M357.5 541.6h0M1004.7 534.1h0M773.4 546.5h0M340.0 541.1h0M211.7 543.1h0M1003.2 544.2h0M911.3 540.2h0M1247.1 544.7h0M503.2 547.8h0M1125.4 545.3h0M954.9 537.2h0M428.2 542.6h0M601.4 538.3h0M202.1 542.5h0M584.8 538.2h0M852.0 534.7h0M491.6 540.2h0M842.0 540.0h0M410.9 540.2h0M1203.9 535.1h0M1122.3 540.2h0M832.4 540.0h0M781.5 537.0h0M1060.8 540.9h0M829.8 548.3h0M1187.7 547.8h0M839.7 535.0h0M544.6 535.6h0M333.9 539.0h0M908.4 542.1h0M228.3 544.3h0M1140.5 543.9h0M1236.6 540.3h0M783.1 536.0h0M169.5 535.9h0M384.0 540.1h0M392.4 547.6h0M495.2 540.8h0M1068.9 543.4h0M1244.7 537.4h0M948.8 544.1h0M233.3 538.3h0M826.1 539.7h0M1229.4 539.3h0M882.1 547.6h0M592.9 539.2h0M625.9 541.5h0M642.8 534.4h0M687.0 544.6h0M819.5 537.6h0M1030.0 545.1h0M758.3 544.5h0M566.7 538.0h0M783.4 548.3h0M1233.8 548.1h0M976.4 537.4h0M704.8 535.2h0M697.2 539.0h0M1192.6 538.0h0M871.4 539.2h0M437.8 548.0h0M917.6 542.6h0M565.8 537.5h0M525.5 536.4h0M746.0 541.4h0M1124.5 547.8h0M686.5 548.0h0M709.8 536.6h0M214.9 536.5h0M1202.3 548.4h0M975.4 540.1h0M932.1 543.1h0M819.2 543.6h0M1041.8 542.6h0M425.5 544.9h0M1218.0 536.0h0M416.2 534.4h0M456.1 547.2h0M1036.7 542.7h0M184.2 537.1h0M484.3 535.7h0M886.5 539.2h0M523.2 546.6h0M586.4 540.5h0M1187.5 544.6h0M933.5 538.1h0M1150.4 536.1h0M545.4 534.4h0M739.0 535.2h0M1123.3 548.9h0M731.9 546.0h0M915.5 542.8h0M172.0 541.0h0M813.2 540.0h0M328.0 548.3h0M210.6 544.7h0M1051.5 542.2h0M254.9 535.8h0M936.7 537.7h0M558.5 537.9h0M1088.5 539.9h0M385.6 548.3h0M1013.5 543.7h0M1183.5 539.1h0M1071.7 540.5h0M347.0 543.4h0M347.9 535.6h0M269.0 535.4h0M1006.5 546.0h0M716.4 538.8h0M230.6 540.5h0M1026.8 536.3h0M964.7 536.1h0M833.2 549.0h0M920.1 534.7h0M1200.3 537.1h0M208.2 537.3h0M447.9 537.9h0M786.3 538.5h0M724.9 540.8h0M517.6 546.5h0M1083.8 535.3h0M1044.9 540.5h0M371.0 536.9h0M318.7 537.2h0M594.8 547.3h0M941.7 546.6h0M1206.6 536.1h0M995.0 539.6h0M362.7 534.0h0M1065.8 539.9h0M186.4 540.1h0M1168.9 536.4h0M413.3 547.3h0M327.0 542.4h0M631.7 544.9h0M963.9 542.5h0M1023.4 539.0h0M601.1 548.9h0M862.9 543.9h0M264.7 547.0h0M1074.3 535.6h0M702.9 542.0h0M431.1 534.7h0M1224.2 544.7h0M1026.8 544.1h0M464.7 543.8h0M898.1 538.2h0M1124.0 535.7h0M461.7 548.9h0M711.5 543.4h0M1029.3 549.0h0M633.0 544.2h0M404.1 548.0h0M1038.3 544.8h0M297.5 540.3h0M511.0 535.3h0M930.3 546.1h0M670.4 540.0h0M648.1 544.8h0M1075.2 542.8h0M1026.7 537.5h0M1218.9 544.5h0M450.9 535.7h0M576.3 534.3h0M833.5 535.9h0M1058.6 546.1h0M191.2 535.6h0M240.3 543.0h0M1118.9 538.1h0M534.1 540.2h0M884.7 543.9h0M834.5 544.2h0M1252.5 539.0h0M980.2 543.8h0M273.6 543.9h0M1029.3 545.2h0M1262.3 545.1h0M327.7 545.9h0M1106.4 544.1h0M398.2 541.3h0M1177.8 537.1h0M773.6 548.6h0M801.9 534.5h0M1095.1 543.5h0M277.5 546.2h0M184.4 539.3h0M1021.2 544.8h0M748.3 544.9h0M507.6 541.2h0M899.6 538.6h0M633.2 544.3h0M1080.9 543.2h0M614.8 535.6h0M616.9 543.5h0M818.1 544.2h0M925.8 542.2h0M383.2 539.2h0M1199.2 536.1h0M631.4 539.1h0M287.3 540.1h0M188.6 534.9h0M867.1 548.6h0M703.7 540.8h0M637.8 544.9h0M940.3 544.2h0M631.0 548.3h0M1109.4 546.7h0M519.2 537.1h0M363.8 534.7h0M467.0 539.8h0M1252.9 538.3h0M1121.1 536.6h0M825.6 544.1h0M808.9 541.0h0M1109.5 547.5h0M682.8 535.2h0M764.7 540.3h0M1062.6 537.2h0M868.7 536.1h0M603.5 537.8h0M917.6 538.0h0M527.2 547.5h0M355.6 547.3h0M658.1 541.0h0M893.5 536.5h0M636.4 535.2h0M708.8 539.3h0M612.4 539.4h0M658.8 547.8h0M1261.2 545.4h0M665.2 539.3h0M390.3 539.2h0M820.2 542.2h0M413.9 534.7h0M279.7 544.1h0M1112.5 535.8h0M754.9 547.5h0M1221.8 543.3h0M680.5 541.0h0M668.8 535.6h0M421.2 545.1h0M767.1 543.0h0M462.5 537.9h0M721.4 535.3h0M1167.0 542.0h0M739.7 547.6h0M178.3 547.7h0M1173.1 547.8h0M1197.3 542.3h0M846.8 546.2h0M841.1 534.4h0M671.9 541.6h0M393.2 547.2h0M495.0 535.2h0M794.2 535.1h0M954.3 542.6h0M526.5 536.6h0M644.3 537.2h0M415.9 548.6h0M733.0 543.0h0M714.3 544.8h0M1165.3 546.6h0M727.7 541.1h0M320.7 542.1h0M961.7 544.8h0M168.5 543.1h0M451.1 540.4h0M397.6 537.1h0M917.6 544.1h0M546.1 545.6h0M484.5 545.2h0M1025.4 534.7h0M174.8 544.8h0M1234.5 547.8h0M554.7 547.5h0M1192.8 534.8h0M1191.0 542.9h0M620.6 535.8h0M661.4 534.6h0M797.4 545.8h0M761.0 537.3h0M1261.3 537.3h0M397.8 535.1h0M187.0 537.4h0M471.5 540.7h0M335.7 543.4h0M1119.0 537.0h0M249.5 544.9h0M694.3 546.9h0M857.2 542.6h0M871.6 536.9h0M352.7 544.7h0M453.4 547.4h0M789.3 545.5h0M423.6 547.2h0M297.4 546.2h0M310.7 537.8h0M925.1 540.8h0M289.8 539.1h0M1128.3 547.4h0M1212.1 545.0h0M680.8 542.9h0M1167.3 542.0h0M720.9 534.7h0M560.3 538.3h0M423.0 543.1h0M953.2 543.9h0M785.3 534.7h0M344.1 543.7h0M603.4 538.5h0M408.9 537.6h0M819.8 543.7h0M1163.0 537.3h0M1063.4 546.9h0M934.6 545.3h0M769.7 543.1h0M767.1 537.6h0M1159.8 546.2h0M1022.1 539.2h0M819.8 548.5h0M685.1 544.0h0M1155.9 539.0h0M1066.2 542.1h0M422.2 537.8h0M280.5 539.9h0M287.0 534.1h0M660.8 543.6h0M444.9 534.0h0M1046.5 543.9h0M1091.2 535.8h0M412.3 537.9h0M930.5 544.3h0M1234.4 544.0h0M451.8 548.3h0M1191.1 539.8h0M809.3 537.8h0M727.2 539.2h0M926.1 537.8h0M565.1 546.4h0M950.0 539.9h0M806.4 534.5h0M934.2 536.0h0M349.2 548.5h0M353.6 536.9h0M1198.4 543.3h0M580.2 542.6h0M702.6 541.1h0M866.9 540.4h0M901.7 545.2h0M532.9 539.2h0M350.3 534.4h0M1253.5 540.2h0M292.5 545.2h0M1014.9 543.4h0M603.1 538.4h0M1161.9 539.4h0M465.6 547.0h0M590.2 539.1h0M761.2 548.6h0M191.1 546.5h0M721.0 535.7h0M933.3 542.4h0M683.7 545.6h0M317.8 541.8h0M677.9 534.4h0M949.9 544.6h0M580.0 543.7h0M900.7 545.2h0M960.7 542.3h0M1123.1 547.1h0M383.2 534.4h0M883.8 547.4h0M764.2 546.5h0M173.5 537.2h0M568.4 542.8h0M1096.2 536.0h0M934.6 542.5h0M536.4 538.6h0M870.0 541.6h0M1125.5 535.6h0M895.6 543.1h0M227.2 542.6h0M186.3 534.4h0M830.0 539.8h0M550.7 547.6h0M643.5 547.4h0M1009.1 544.3h0M999.1 535.2h0M197.5 546.8h0M622.8 534.7h0M540.0 547.2h0M939.2 543.7h0M1151.9 538.1h0M326.9 542.7h0M304.2 534.8h0M389.3 537.6h0M1194.1 540.3h0M319.5 541.3h0M1162.5 534.5h0M483.8 543.7h0M711.5 539.9h0M874.2 534.8h0M182.8 536.1h0M193.9 538.6h0M971.3 543.7h0M425.4 535.5h0M354.3 542.0h0M1082.4 545.7h0M316.0 546.0h0M311.4 534.5h0M634.3 545.9h0M1184.6 535.4h0M488.4 544.3h0M819.9 537.4h0M443.0 547.4h0M192.5 538.8h0M221.9 536.1h0M204.0 547.9h0M687.3 535.5h0M423.2 543.3h0M1132.4 547.4h0M1176.0 539.0h0M517.7 536.3h0M824.5 539.2h0M939.9 537.8h0M1035.9 544.2h0M290.2 543.4h0M1092.5 548.9h0M790.7 543.1h0M964.6 548.6h0M442.7 547.0h0M980.8 538.8h0M709.7 541.7h0M546.5 542.9h0M847.4 542.3h0M527.9 537.8h0M348.5 540.4h0M775.9 539.3h0M1126.0 547.6h0M976.9 538.3h0M1056.7 534.7h0M693.4 542.4h0M831.2 535.0h0M1168.3 546.9h0M288.6 547.5h0M666.4 548.5h0M767.4 540.7h0M540.2 535.7h0M432.7 541.8h0M624.5 542.0h0M174.7 544.1h0M1150.8 534.2h0M903.5 539.0h0M1072.4 541.2h0M476.2 548.1h0M189.8 548.0h0M804.6 541.9h0M320.0 537.0h0M283.9 537.8h0M514.5 538.1h0M826.4 539.0h0M455.7 544.7h0M754.3 547.6h0M386.3 537.1h0M525.2 538.6h0M432.7 541.4h0M167.7 539.9h0M1139.4 546.3h0M269.3 541.0h0M1023.9 545.5h0M760.2 542.8h0M741.8 534.2h0M963.8 541.3h0M245.8 541.8h0M765.1 542.5h0M166.4 537.6h0M1062.7 547.8h0M480.0 536.7h0M806.7 545.3h0M596.7 534.9h0M551.1 545.4h0M660.7 534.6h0M698.5 538.8h0M1204.7 541.6h0M1243.2 540.0h0M383.0 541.0h0M453.4 544.3h0M255.1 540.4h0M520.6 536.3h0M241.9 544.3h0M263.2 538.8h0M935.4 540.3h0M862.3 538.0h0M271.4 538.4h0M655.7 544.1h0M1008.5 545.8h0M1150.8 543.2h0M986.3 544.0h0M552.8 548.3h0M178.6 538.6h0M172.1 547.2h0M292.4 546.9h0M258.9 536.2h0M1232.5 541.3h0M529.4 539.3h0M411.7 544.9h0M746.3 545.8h0M1217.0 547.7h0M1079.8 548.4h0M352.5 547.1h0M423.9 544.9h0M1150.6 534.0h0M901.2 542.7h0M373.2 539.2h0M290.2 543.0h0M1082.7 542.7h0M1153.6 538.4h0M851.1 537.7h0M545.5 535.0h0M722.8 546.9h0M474.0 536.1h0M416.2 538.5h0M623.6 538.8h0M788.5 541.7h0M842.3 545.3h0M852.2 547.4h0M1239.3 542.3h0M821.5 542.3h0M1255.8 542.5h0M1111.7 547.6h0M743.2 546.2h0M1066.6 543.3h0M965.6 548.2h0M407.7 547.2h0M1151.1 546.3h0M186.7 534.5h0M587.3 537.3h0M222.6 545.1h0M300.5 542.3h0M952.5 540.3h0M998.3 534.7h0M741.4 543.6h0M573.3 545.9h0M229.9 539.5h0M901.8 539.9h0M806.6 541.3h0M268.6 536.8h0M1160.6 543.2h0M1261.3 545.2h0M255.8 539.6h0M979.6 540.9h0M953.0 543.5h0M271.3 546.9h0M274.2 546.3h0M686.4 538.9h0M852.9 537.8h0M889.0 540.0h0M283.9 542.8h0M753.5 541.2h0M812.2 538.2h0M774.7 541.9h0M377.0 535.9h0M358.2 548.7h0M251.6 535.8h0M673.8 537.1h0M1127.8 539.3h0M435.4 537.3h0M865.0 545.2h0M1035.6 538.4h0M732.4 539.9h0M837.1 547.8h0M679.8 534.8h0M1079.8 538.5h0M813.5 546.3h0M941.6 544.0h0M667.8 543.5h0M1145.4 547.6h0M469.8 541.5h0M620.2 539.3h0M544.1 546.9h0M438.7 548.3h0M1024.2 543.7h0M374.0 534.1h0M453.4 543.0h0M1252.6 536.7h0M758.1 548.3h0M819.1 547.2h0M535.2 537.2h0M175.2 534.8h0M322.0 534.7h0M176.7 537.5h0M682.1 534.3h0M621.7 543.5h0M308.2 546.5h0M499.1 544.8h0M243.1 541.4h0M824.2 542.6h0M766.1 546.7h0M1072.5 537.5h0M255.0 541.4h0M301.7 546.0h0M960.7 544.5h0M931.0 536.6h0M581.1 543.9h0M1137.7 542.8h0M681.4 540.9h0M321.8 543.1h0M664.4 540.9h0M852.2 538.8h0M625.6 539.0h0M1053.7 536.9h0M604.3 540.0h0M538.1 536.6h0M926.2 539.7h0M240.0 538.8h0M1188.2 545.5h0M934.0 535.9h0M662.0 539.3h0M664.5 548.8h0M465.1 546.4h0M561.5 541.6h0M1156.1 539.7h0M602.8 538.2h0M426.6 539.7h0M426.4 540.8h0M1087.3 537.7h0M775.8 536.0h0M1004.4 540.1h0M1242.0 545.0h0M1136.7 534.8h0M1247.4 535.3h0M523.7 545.0h0M614.4 536.7h0M1212.0 544.7h0M752.6 542.0h0M873.9 540.3h0M808.0 546.8h0M810.6 548.9h0M1197.8 541.3h0M1187.3 547.8h0M1115.5 539.8h0M1177.3 542.8h0M346.8 538.5h0M787.8 543.5h0M902.3 548.9h0M791.6 545.2h0M276.4 542.4h0M369.6 540.9h0M764.9 536.6h0M994.5 547.8h0M1101.5 548.1h0M244.8 539.2h0M856.3 547.9h0M891.6 536.8h0M848.1 534.0h0M364.2 537.0h0M240.9 546.6h0M709.6 546.0h0M1069.6 546.1h0M1069.6 536.0h0M1172.5 537.6h0M180.7 546.0h0M198.4 536.2h0M858.2 544.9h0M997.2 543.8h0M1134.0 546.0h0M746.3 546.8h0M398.8 537.1h0M227.8 535.7h0M986.4 538.2h0M437.6 536.4h0M968.6 545.5h0M394.5 534.9h0M466.1 543.1h0M924.9 544.0h0M523.5 541.7h0M693.4 546.7h0M874.2 548.3h0M886.1 544.7h0M1228.5 541.2h0M549.1 539.4h0M270.2 536.6h0M908.9 535.1h0M945.9 536.8h0M1090.3 544.9h0M457.2 537.1h0M859.1 546.4h0M227.3 539.1h0M704.0 538.9h0M298.0 534.7h0M851.9 546.9h0M170.8 548.2h0M1101.7 538.8h0M1151.7 538.1h0M653.0 537.7h0M948.7 540.0h0M1235.9 544.3h0M224.9 548.5h0M257.2 540.7h0M1125.3 538.6h0M575.7 534.6h0M519.2 547.4h0M184.0 543.2h0M1052.1 545.3h0M434.1 547.8h0M654.5 536.1h0M478.4 540.0h0M589.2 542.8h0M1173.2 539.7h0M993.9 541.3h0M376.8 546.3h0M885.7 545.7h0M1152.4 543.5h0M953.3 546.8h0M634.0 544.3h0M220.5 534.5h0M436.5 548.4h0M917.8 546.6h0M181.8 535.2h0M201.6 536.0h0M181.8 546.4h0M1167.1 545.9h0M1009.3 540.1h0M312.4 539.8h0M613.0 541.6h0M1152.7 540.8h0M960.7 548.3h0M1057.9 545.4h0M370.4 548.4h0M1109.5 543.6h0M462.3 535.6h0M1169.0 535.1h0M712.5 546.5h0M721.1 539.5h0M254.0 536.8h0M829.4 536.3h0M571.4 537.4h0M1155.6 541.6h0M651.5 545.7h0M886.8 538.7h0M956.4 536.1h0M945.7 541.2h0M549.8 542.9h0M1181.4 538.8h0M754.7 548.2h0M304.7 544.4h0M757.9 546.2h0M191.7 539.9h0M280.3 538.7h0M898.8 536.4h0M678.3 546.3h0M354.3 543.2h0M462.8 534.3h0M1196.8 542.0h0M492.6 536.3h0M540.6 547.7h0M1037.6 540.0h0M668.0 535.1h0M785.8 534.1h0M308.2 546.6h0M688.4 535.2h0M945.2 548.6h0M656.8 539.3h0M183.1 539.5h0M813.6 535.3h0M397.5 545.5h0M306.7 547.8h0M1227.3 539.4h0M1198.7 540.2h0M1089.3 541.5h0M257.1 538.5h0M1011.5 544.3h0M694.8 541.2h0M228.1 538.5h0M1108.6 541.8h0M1241.5 545.5h0M553.2 541.1h0M399.1 546.9h0M856.5 544.4h0M1052.4 546.6h0M186.6 537.5h0M982.3 548.5h0M165.3 537.7h0M887.4 537.4h0M364.8 542.8h0M664.0 544.0h0M887.0 547.5h0M1171.4 540.2h0M449.0 540.5h0M897.9 535.4h0M947.7 547.2h0M309.3 547.6h0M535.3 536.6h0M789.4 538.8h0M227.4 546.6h0M1182.5 547.1h0M580.2 545.1h0M1009.4 537.0h0M418.3 534.0h0M1199.4 541.8h0M888.4 540.7h0M522.9 538.9h0M734.2 543.1h0M476.4 544.2h0M388.6 534.9h0M200.3 544.5h0M1014.6 535.2h0M642.7 544.9h0M587.5 548.3h0M1023.1 537.9h0M740.7 541.6h0M405.5 542.2h0M171.8 537.5h0M658.3 543.6h0M640.4 542.8h0M804.3 546.6h0M234.9 537.4h0M942.6 545.5h0M259.3 538.9h0M905.0 538.4h0M652.7 543.1h0M834.4 547.9h0M1145.0 544.9h0M549.2 544.1h0M183.1 547.0h0M608.0 536.7h0M1257.5 537.3h0M1060.9 538.9h0M264.5 547.5h0M771.3 540.2h0M169.8 536.0h0M484.5 543.3h0M812.9 535.7h0M230.9 535.5h0M574.9 547.3h0M506.8 547.4h0M788.8 538.0h0M1219.2 535.0h0M517.1 538.7h0M1154.3 535.2h0M882.2 547.7h0M552.4 541.8h0M656.9 538.7h0M264.1 547.3h0M1125.0 537.4h0M357.4 543.0h0M957.1 544.8h0M1008.4 545.6h0M1055.7 535.2h0M869.9 536.5h0M234.1 534.5h0M707.0 545.2h0M1102.2 538.4h0M947.4 535.9h0M611.3 535.0h0M283.6 544.0h0M696.1 536.2h0M165.2 534.4h0M1238.1 539.5h0M1203.7 535.6h0M803.8 545.7h0M575.9 541.4h0M404.3 539.5h0M1085.8 539.2h0M992.6 538.9h0M503.6 534.3h0M260.4 538.9h0M260.3 534.1h0M1228.9 546.6h0M303.4 534.6h0M1124.3 540.6h0M302.1 540.4h0M512.4 548.5h0M466.0 545.3h0M709.3 542.8h0M1188.3 547.9h0M245.2 534.9h0M185.3 536.1h0M1224.8 548.6h0M1020.3 546.8h0M1180.3 540.6h0M1132.0 539.3h0M649.6 542.8h0M580.9 535.4h0M544.6 539.2h0M725.0 534.1h0M815.5 537.4h0M387.7 544.9h0M257.4 546.2h0M798.4 541.4h0M590.0 539.7h0M978.3 543.8h0M239.3 544.8h0M1196.2 543.1h0M1063.7 548.4h0M917.7 536.1h0M1060.3 547.8h0M632.2 543.6h0M1075.1 536.5h0M1058.2 542.9h0M716.2 538.3h0M287.4 547.7h0M1222.7 541.6h0M1236.3 545.1h0M456.2 548.0h0M957.5 542.0h0M851.1 547.8h0M281.5 547.5h0M725.2 534.4h0M759.3 544.1h0M1119.5 537.3h0M356.4 540.5h0M475.1 536.0h0M1116.4 540.9h0M983.1 546.3h0M420.5 541.5h0M487.9 541.1h0M235.2 537.5h0M965.6 536.5h0M1005.8 547.6h0M301.3 535.2h0M1240.6 546.5h0M640.9 544.9h0M800.4 543.8h0M426.2 540.4h0M817.3 539.9h0M266.3 541.6h0M265.0 548.0h0M1056.0 545.8h0M1056.4 545.6h0M692.7 536.6h0M1121.7 538.7h0M446.5 539.4h0M793.5 540.6h0M481.0 536.9h0M609.0 541.5h0M754.4 538.1h0M455.9 541.2h0M390.7 540.8h0M425.2 544.9h0M224.1 536.9h0M525.0 547.7h0M808.2 534.3h0M834.7 538.6h0M781.4 538.3h0M1046.2 544.6h0M620.4 543.9h0M744.4 544.3h0M478.6 541.9h0M318.8 535.5h0M260.7 540.6h0M1017.0 534.5h0M675.7 542.0h0M569.8 544.8h0M955.0 535.5h0M427.0 546.9h0M445.5 547.0h0M798.0 545.1h0M582.0 543.0h0M232.7 543.5h0M1248.3 547.9h0M311.1 539.3h0M492.4 544.2h0M266.9 543.9h0M1134.9 536.6h0M366.9 546.0h0M897.6 535.8h0M329.3 542.9h0M376.7 542.1h0M1245.7 534.9h0M193.4 543.0h0M816.9 543.6h0M1221.8 538.8h0M1228.9 545.7h0M743.9 547.1h0M944.9 541.8h0M1144.0 541.8h0M751.6 539.6h0M373.0 536.0h0M287.2 548.5h0M381.2 538.7h0M1072.6 541.7h0M631.0 546.0h0M885.9 547.2h0M761.2 541.4h0M304.3 535.2h0M437.8 541.2h0M715.6 540.7h0M370.1 546.3h0M515.2 543.0h0M702.6 548.3h0M1005.2 545.5h0M382.6 544.9h0M654.5 535.7h0M398.7 545.5h0M1094.3 535.1h0M377.6 536.4h0M997.4 545.0h0M814.1 546.2h0M348.8 548.1h0M899.2 535.3h0M395.2 539.6h0M327.6 536.5h0M214.6 535.5h0M841.4 536.5h0M1222.2 534.8h0M278.8 545.7h0M913.0 539.9h0M1166.1 544.4h0M390.8 547.4h0M1151.6 545.8h0M1235.7 543.6h0M449.2 537.9h0M590.5 545.5h0M985.0 535.1h0M1142.6 540.4h0M368.2 548.5h0M343.2 548.7h0M340.2 544.1h0M246.0 543.8h0M299.7 535.1h0M1110.8 540.5h0M260.5 547.2h0M287.5 546.2h0M677.0 541.8h0M1116.2 534.7h0M476.5 543.0h0M869.6 548.4h0M1083.8 540.1h0M606.6 545.7h0M623.3 541.2h0M300.8 546.6h0M280.0 541.8h0M724.0 546.8h0M752.5 547.7h0M1132.3 545.3h0M1154.4 547.7h0M656.1 536.7h0M527.9 538.5h0M791.1 536.9h0M198.2 538.6h0M671.6 545.7h0M454.1 547.2h0M958.9 537.7h0M366.9 539.7h0M752.5 544.5h0M274.5 543.1h0M417.9 535.8h0M496.4 539.9h0M633.3 546.6h0M835.7 545.1h0M246.9 538.1h0M1117.7 544.4h0M196.2 544.9h0M768.2 541.8h0M837.9 536.2h0M1077.7 548.5h0M957.7 539.2h0M990.3 536.0h0M829.6 543.8h0M1231.2 541.7h0M237.5 537.2h0M1021.0 539.4h0M227.6 538.8h0M1143.8 543.7h0M845.1 534.5h0M1161.7 547.2h0M593.5 542.1h0M262.6 548.0h0M533.5 549.0h0M706.9 545.9h0M1097.2 548.6h0M1057.9 540.1h0M934.0 547.4h0M1193.7 546.2h0M313.1 544.2h0M929.9 548.7h0M922.7 537.2h0M396.2 540.7h0M335.2 542.3h0M529.4 539.8h0M1074.0 545.4h0M174.9 534.3h0M219.6 544.0h0M1000.3 534.2h0M626.4 543.4h0M1016.4 537.3h0M339.5 547.3h0M1111.4 548.7h0M459.1 548.1h0M694.0 545.3h0M815.5 542.0h0M739.6 544.4h0M1178.1 542.0h0M171.8 545.9h0M750.4 548.7h0M1113.4 536.2h0M1163.5 547.8h0M1017.7 538.4h0M663.1 540.1h0M662.1 548.4h0M615.6 535.0h0M206.4 540.8h0M184.6 540.1h0M1116.3 538.8h0M332.4 546.8h0M378.8 543.9h0M822.2 540.1h0M997.6 543.6h0M438.3 540.3h0M1010.0 548.7h0M747.0 534.1h0M1035.0 539.4h0M1206.0 534.3h0M730.3 548.1h0M649.9 535.1h0M282.0 536.1h0M278.9 545.7h0M1119.8 541.8h0M465.5 546.6h0M361.1 547.0h0M954.9 543.9h0M340.1 546.9h0M692.8 538.8h0M511.1 536.7h0M622.1 543.3h0M939.1 539.5h0M866.6 544.7h0M1092.4 542.8h0M1258.7 541.4h0M644.9 540.4h0M1115.9 536.7h0M331.6 547.0h0M477.3 537.3h0M278.4 543.6h0M385.2 541.2h0M406.8 537.8h0M582.6 548.6h0M1002.9 545.4h0M748.7 542.2h0M542.9 541.1h0M905.8 541.4h0M495.6 548.5h0M309.0 542.9h0M984.3 534.7h0M320.3 541.9h0M822.8 543.0h0M303.5 545.4h0M922.8 541.0h0M346.8 537.1h0M1190.7 537.4h0M211.1 540.6h0M186.7 546.9h0M518.0 544.6h0M828.3 537.6h0M1078.0 543.7h0M1017.7 541.7h0M549.4 535.8h0M730.0 543.1h0M447.0 549.0h0M562.4 539.8h0M681.6 545.4h0M397.9 539.0h0M941.1 536.9h0M942.3 536.8h0M875.7 540.4h0M972.8 546.1h0M393.2 545.1h0M971.7 547.2h0M356.7 541.3h0M1232.7 543.9h0M1094.2 534.8h0M686.5 544.3h0M1043.5 541.4h0M1135.1 548.6h0M1262.5 544.3h0M244.6 535.8h0M721.3 535.6h0M565.5 538.0h0M602.1 548.1h0M1246.5 540.3h0M699.0 541.4h0M712.4 541.0h0M438.1 538.6h0M588.9 542.5h0M1028.6 546.0h0M694.2 542.1h0M1211.9 546.8h0M1093.3 543.4h0M1171.3 540.2h0M520.6 544.9h0M299.4 538.0h0M1022.9 538.7h0M1183.9 535.9h0M1221.7 539.0h0M806.7 538.5h0M830.5 538.1h0M1023.7 540.4h0M309.6 548.5h0M584.0 544.3h0M650.2 546.1h0M288.8 539.4h0M1152.0 539.9h0M393.0 542.5h0M896.9 546.9h0M999.6 548.0h0M1035.1 548.8h0M255.7 536.2h0M938.3 535.4h0M758.1 543.2h0M262.9 536.4h0M316.9 544.8h0M824.3 542.2h0M171.6 488.0h0M171.6 472.5h0M169.8 489.1h0M171.2 480.7h0M172.2 480.3h0M171.6 470.2h0M169.0 478.8h0M195.3 486.3h0M196.4 480.0h0M197.7 483.3h0M196.5 492.9h0M197.5 488.4h0M196.8 496.8h0M198.8 477.3h0M197.2 493.0h0M195.9 491.8h0M198.2 489.3h0M212.4 493.8h0M211.8 490.6h0M212.5 479.1h0M214.0 472.0h0M214.2 496.4h0M214.4 484.0h0M212.2 481.7h0M211.9 475.7h0M213.0 492.9h0M259.4 483.4h0M260.4 484.2h0M259.1 480.5h0M260.3 496.9h0M260.1 482.9h0M260.7 479.3h0M259.5 487.4h0M258.0 492.6h0M258.8 481.3h0M301.1 480.6h0M299.2 492.1h0M299.8 470.5h0M301.9 479.9h0M300.4 495.8h0M301.9 480.6h0M301.5 473.9h0M301.4 475.4h0M302.6 475.6h0M317.8 485.6h0M317.6 485.4h0M316.5 493.4h0M319.6 478.0h0M319.2 483.2h0M318.7 483.9h0M360.7 482.8h0M358.8 487.3h0M359.1 486.5h0M362.1 488.6h0M359.6 472.4h0M358.0 487.4h0M359.1 474.5h0M403.0 471.2h0M405.3 485.6h0M406.1 474.5h0M403.3 478.8h0M405.2 488.7h0M415.8 485.1h0M414.7 495.6h0M414.4 496.6h0M415.5 490.3h0M413.4 496.0h0M414.7 494.9h0M415.0 489.3h0M415.0 484.2h0M415.6 478.0h0M421.4 479.8h0M422.3 478.1h0M421.1 491.4h0M420.7 492.6h0M421.6 478.1h0M419.3 477.2h0M447.8 471.6h0M449.2 481.1h0M447.1 489.5h0M446.3 472.4h0M450.0 477.2h0M449.3 487.9h0M447.5 470.6h0M449.6 478.5h0M464.7 470.0h0M464.7 494.4h0M462.8 489.5h0M464.4 480.4h0M462.9 488.4h0M465.5 495.3h0M463.6 492.0h0M469.4 480.4h0M469.8 472.9h0M471.5 494.2h0M470.1 489.4h0M468.0 487.3h0M466.9 475.2h0M482.0 496.0h0M483.5 489.9h0M484.7 493.3h0M482.1 479.0h0M484.2 484.9h0M492.6 492.0h0M494.0 494.7h0M494.9 489.0h0M490.9 471.7h0M491.9 472.1h0M492.3 491.9h0M493.7 484.2h0M491.9 476.8h0M491.8 488.2h0M504.9 495.5h0M505.9 476.4h0M506.8 477.1h0M507.3 473.1h0M505.1 474.7h0M506.4 489.0h0M509.3 489.9h0M509.1 473.2h0M506.1 494.6h0M551.9 486.3h0M551.1 493.2h0M550.8 485.3h0M551.4 486.0h0M552.1 491.3h0M552.1 478.0h0M550.5 476.4h0M551.5 476.6h0M551.0 478.2h0M567.9 475.5h0M568.3 485.4h0M565.5 482.0h0M566.6 482.0h0M567.8 479.8h0M566.1 479.5h0M566.5 474.4h0M578.8 497.0h0M578.6 487.8h0M578.8 492.7h0M578.3 483.1h0M580.2 481.0h0M579.5 483.1h0M578.8 488.6h0M577.7 494.2h0M579.9 483.5h0M577.4 489.1h0M578.8 484.5h0M585.0 481.0h0M584.6 482.0h0M584.5 480.2h0M582.6 481.5h0M585.9 482.9h0M586.2 481.9h0M584.6 482.1h0M586.3 474.1h0M586.2 481.3h0M585.5 479.9h0M584.3 472.1h0M586.7 483.8h0M586.1 475.9h0M585.5 474.2h0M584.5 473.5h0M585.4 485.2h0M584.7 496.8h0M602.8 482.2h0M601.9 482.1h0M599.9 483.8h0M603.3 481.6h0M602.8 490.3h0M601.9 479.1h0M602.0 486.3h0M604.2 491.9h0M601.5 492.7h0M604.0 495.3h0M611.4 479.6h0M611.8 476.7h0M611.1 491.8h0M610.9 482.2h0M610.4 473.3h0M611.0 470.3h0M610.7 471.3h0M610.2 492.3h0M609.6 475.6h0M610.9 476.1h0M610.8 475.2h0M671.2 480.5h0M672.5 478.7h0M671.9 470.7h0M673.0 489.3h0M672.7 495.0h0M671.3 492.4h0M670.5 489.9h0M672.1 485.4h0M678.1 484.6h0M677.4 494.8h0M677.4 492.9h0M679.7 482.4h0M677.0 484.8h0M678.8 486.6h0M678.2 484.7h0M713.1 476.6h0M712.6 471.2h0M712.1 487.7h0M713.1 486.9h0M713.4 477.2h0M711.6 485.5h0M712.0 485.1h0M717.1 486.3h0M717.3 479.0h0M717.1 487.3h0M718.3 479.6h0M717.8 477.1h0M718.7 483.3h0M717.7 473.4h0M718.3 480.2h0M717.1 492.9h0M716.5 488.4h0M719.0 475.3h0M739.9 482.0h0M739.5 484.8h0M741.0 485.1h0M738.4 480.2h0M738.5 490.1h0M738.0 492.7h0M740.7 488.5h0M739.7 482.1h0M741.7 487.5h0M739.3 479.8h0M759.3 495.7h0M760.8 494.1h0M759.1 483.3h0M759.5 495.3h0M760.2 477.7h0M763.8 495.2h0M762.1 488.1h0M759.3 478.8h0M758.7 487.6h0M760.7 484.9h0M760.1 496.8h0M760.7 490.1h0M758.5 493.3h0M759.3 479.6h0M773.3 483.8h0M774.9 487.3h0M774.2 474.0h0M774.0 496.8h0M774.4 481.4h0M785.0 495.7h0M783.2 473.7h0M785.6 477.3h0M784.0 479.2h0M783.3 487.1h0M784.9 485.2h0M782.3 490.2h0M784.6 479.2h0M785.2 474.5h0M783.5 495.8h0M800.0 493.3h0M801.4 479.6h0M801.9 484.6h0M800.3 488.3h0M801.2 488.8h0M800.0 490.6h0M800.7 477.1h0M803.7 476.5h0M801.7 472.0h0M801.6 475.0h0M818.4 487.8h0M817.8 492.1h0M818.6 483.4h0M818.8 473.4h0M818.7 487.2h0M818.7 477.9h0M819.8 496.7h0M820.4 490.7h0M818.7 475.0h0M862.6 481.4h0M862.4 484.0h0M860.9 495.5h0M862.6 473.2h0M862.2 476.1h0M863.1 473.6h0M904.8 476.4h0M905.0 494.8h0M903.4 483.5h0M903.5 477.1h0M905.0 478.9h0M906.8 479.4h0M903.3 477.3h0M905.2 489.9h0M903.6 476.4h0M910.2 482.1h0M910.2 483.0h0M910.8 484.5h0M909.6 484.2h0M911.7 490.0h0M920.6 489.1h0M921.1 485.9h0M919.0 490.1h0M921.6 487.0h0M922.2 486.0h0M921.0 490.2h0M966.2 496.1h0M963.9 479.0h0M965.7 485.2h0M964.2 496.7h0M965.2 488.6h0M964.7 492.9h0M965.1 471.5h0M963.2 478.2h0M963.4 472.9h0M964.8 488.1h0M958.5 480.9h0M955.7 479.8h0M958.5 484.2h0M958.0 487.6h0M958.3 481.3h0M958.8 484.7h0M955.9 495.6h0M957.8 487.5h0M991.2 484.0h0M992.5 473.7h0M991.4 474.1h0M992.1 475.6h0M991.5 496.4h0M989.7 493.0h0M1007.0 492.0h0M1007.7 492.0h0M1006.6 474.1h0M1006.6 490.6h0M1006.4 477.5h0M1008.9 483.5h0M1006.3 488.7h0M1007.5 484.7h0M1008.5 487.1h0M1009.7 475.3h0M1023.2 470.9h0M1027.2 483.8h0M1026.7 481.5h0M1023.2 496.5h0M1025.9 475.5h0M1023.0 482.3h0M1024.7 487.2h0M1025.1 479.6h0M1052.2 491.9h0M1051.3 480.0h0M1050.3 483.6h0M1051.2 489.3h0M1053.0 486.1h0M1052.1 489.6h0M1052.6 490.4h0M1054.5 496.6h0M1052.2 483.3h0M1052.5 489.7h0M1067.7 471.9h0M1067.3 487.1h0M1066.0 487.8h0M1067.4 483.0h0M1066.5 476.5h0M1087.6 479.8h0M1087.9 496.2h0M1088.6 478.5h0M1088.6 485.9h0M1087.4 489.9h0M1088.5 488.4h0M1087.9 483.6h0M1087.0 496.1h0M1111.8 486.1h0M1112.1 473.4h0M1111.2 490.2h0M1111.4 484.1h0M1112.6 474.5h0M1111.1 471.3h0M1112.0 488.9h0M1110.1 480.4h0M1111.0 489.8h0M1113.2 494.8h0M1110.9 474.6h0M1128.4 496.4h0M1128.0 474.1h0M1130.2 478.4h0M1128.5 487.4h0M1129.1 491.6h0M1127.1 475.0h0M1130.2 474.1h0M1129.9 480.3h0M1128.3 496.0h0M1154.7 478.1h0M1155.7 496.8h0M1152.7 486.0h0M1155.8 490.7h0M1156.4 489.7h0M1153.1 493.0h0M1155.1 474.0h0M1155.6 496.2h0M1183.0 481.7h0M1183.7 484.7h0M1184.3 491.1h0M1183.0 481.8h0M1183.1 480.0h0M1183.3 492.2h0M1185.5 484.0h0M1186.1 494.7h0M1187.9 478.9h0M1188.2 490.5h0M1188.4 488.8h0M1189.9 486.1h0M1190.9 495.7h0M1189.5 481.2h0M1190.1 484.3h0M1187.7 482.7h0M1190.0 488.5h0M1215.6 489.8h0M1214.8 485.3h0M1214.0 488.9h0M1215.6 491.8h0M1214.6 493.3h0M1251.8 492.5h0M1248.9 472.7h0M1251.1 489.4h0M1250.4 472.0h0M1250.2 489.3h0M1249.7 477.3h0M1250.1 484.1h0M1250.2 495.8h0M1249.0 481.2h0M1244.1 496.9h0M1243.1 482.7h0M1242.6 487.9h0M1242.8 477.0h0M1243.4 482.3h0M1259.8 476.0h0M1258.2 496.6h0M1258.1 483.3h0M1257.7 483.6h0M1259.1 475.1h0" stroke="#000" stroke-width="3.7" stroke-linecap="round" fill="none"/>
<path d="M652.7 508.0V525.5M788.5 516.1V546.9M1158.0 521.2V548.0M446.6 522.9V547.4M810.6 520.8V548.0M560.7 505.8V545.1M992.9 516.2V544.5M760.8 520.1V548.0M389.9 502.6V513.1M731.5 509.0V521.2M433.4 522.4V545.5M223.9 505.5V526.4M292.9 505.9V537.8M543.0 512.0V547.3M186.8 521.3V544.2M1010.6 517.2V548.0M1044.4 521.6V543.2M192.4 511.8V547.1M742.5 518.9V548.0M640.0 504.8V527.0M606.4 500.5V525.7M248.3 500.6V529.4M1192.8 504.4V514.8M492.9 504.9V526.3M1184.3 514.7V530.7M609.0 518.7V546.1M398.0 506.4V526.7M443.2 528.0V548.0M439.3 524.4V548.0M1045.7 519.6V548.0M1072.2 501.3V526.9M1049.5 526.9V548.0" stroke="#fff" stroke-width="0.8" stroke-opacity="0.5"/>
<path d="M182.1 502.2h0M1195.3 503.9h0M976.7 502.9h0M580.9 504.4h0M363.3 504.1h0M188.3 505.7h0M1185.7 505.1h0M1080.5 505.4h0M303.8 504.3h0M341.4 505.1h0M942.9 503.6h0M317.9 514.8h0M791.0 506.2h0M562.6 502.0h0M797.6 503.1h0M871.1 505.8h0M494.0 504.7h0M494.3 505.9h0M370.8 506.4h0M1216.8 508.2h0M648.6 510.8h0M234.9 503.2h0M706.6 503.5h0M878.8 506.1h0M1142.2 503.9h0M521.3 506.4h0M1027.8 504.4h0M899.5 511.1h0M1183.5 504.1h0M531.7 510.1h0M386.5 505.0h0M177.1 505.4h0M769.6 503.3h0M818.6 513.7h0M597.2 510.6h0M1142.8 505.4h0M430.2 510.0h0M1051.3 502.6h0M1165.5 504.2h0M645.3 502.4h0M210.6 505.5h0M797.2 505.0h0M880.1 512.3h0M1206.1 503.5h0M1122.4 508.0h0M660.3 507.0h0M903.9 509.0h0M389.1 503.6h0M883.5 503.8h0M1024.4 506.2h0M741.5 505.3h0M535.9 503.3h0M205.8 502.4h0M649.9 502.2h0M519.8 510.8h0M1157.3 509.1h0M380.7 503.7h0M186.2 502.8h0M493.4 503.7h0M668.7 502.8h0M458.4 503.9h0M967.3 507.8h0M521.8 503.5h0M369.9 502.5h0M376.7 504.4h0M1058.3 504.3h0M296.8 507.3h0M847.3 503.3h0M717.1 505.0h0M490.3 505.5h0M1077.0 502.5h0M899.3 502.5h0M1075.7 514.4h0M510.9 507.4h0M982.7 515.4h0M733.4 509.2h0M964.1 502.8h0M1009.3 502.7h0M555.5 510.3h0M825.9 504.8h0M1100.3 504.5h0M273.5 503.2h0M1166.4 502.7h0M473.4 506.8h0M990.6 508.5h0M365.4 502.5h0M1241.1 505.0h0M772.4 511.2h0M219.2 509.3h0M602.2 505.4h0M862.7 506.2h0M919.0 505.4h0M533.0 504.8h0M1207.2 508.3h0M620.3 503.0h0M367.9 502.9h0M1049.6 503.9h0M1190.6 506.1h0M955.5 503.8h0M419.3 502.7h0M501.9 507.8h0M979.2 504.1h0M201.1 504.7h0M477.2 502.4h0M709.8 504.2h0M340.1 503.5h0M1105.8 523.8h0M1058.9 502.4h0M969.1 505.9h0M528.9 517.8h0M1118.2 503.3h0M1022.3 502.4h0M711.8 509.4h0M384.7 502.6h0M234.0 504.1h0M796.0 503.3h0M235.6 502.4h0M792.9 502.4h0M186.9 503.8h0M1011.9 503.9h0M1127.8 502.2h0M1094.0 510.5h0M1095.9 506.5h0M909.3 505.4h0M1072.6 504.9h0M406.0 504.1h0M966.1 508.3h0M946.8 503.1h0M763.1 507.3h0M679.2 508.8h0M936.5 507.0h0M172.3 504.4h0M373.7 503.0h0M550.7 514.7h0M1146.7 503.5h0M730.8 502.4h0M559.2 503.3h0M536.2 517.5h0M554.5 502.2h0M1186.5 504.7h0M217.5 502.4h0M602.1 506.7h0M1113.1 502.9h0M1127.8 505.4h0M208.0 504.0h0M521.9 504.6h0M211.1 504.5h0M512.2 514.7h0M553.5 507.8h0M360.2 502.0h0M1235.4 505.7h0M189.4 502.8h0M419.2 503.5h0M881.5 503.4h0M714.7 502.2h0M817.3 512.7h0M186.5 506.0h0M554.6 502.3h0M728.1 503.6h0M249.8 502.7h0" stroke="#fff" stroke-width="1.6" stroke-linecap="round" fill="none"/>
<rect x="1262.4" y="594" width="41.4" height="42" fill="#000"/>
<path d="M1279.0 593.5h0M1302.3 585.9h0M1268.9 587.6h0M1297.7 579.2h0M1269.0 579.5h0M1276.2 578.1h0M1290.3 573.8h0M1287.7 591.9h0M1301.7 585.0h0M1279.2 580.9h0M1301.1 586.0h0M1300.6 594.6h0M1291.8 577.2h0M1263.0 572.7h0M1295.2 590.2h0M1299.5 588.9h0M1283.9 591.0h0M1270.4 594.4h0M1269.7 578.8h0M1297.2 594.1h0M1265.8 591.6h0M1284.8 591.3h0M1270.6 574.5h0M1274.7 575.2h0M1302.7 582.0h0M1273.7 584.2h0M1290.5 579.7h0M1294.0 592.9h0M1274.1 590.3h0M1268.3 592.0h0M1294.2 593.4h0M1281.0 580.7h0M1274.1 579.6h0M1271.0 595.7h0M1302.9 575.1h0M1289.0 593.6h0M1283.9 589.6h0M1266.9 596.0h0M1300.0 594.0h0M1276.0 582.3h0M1294.9 583.1h0M1299.7 594.1h0M1270.7 587.4h0M1302.7 595.5h0M1299.2 583.1h0M1285.6 592.8h0M1292.2 592.4h0M1273.7 594.7h0M1292.2 580.1h0M1280.0 583.4h0M1275.7 579.9h0M1291.1 589.1h0M1278.1 586.2h0M1291.4 585.5h0M1297.5 585.8h0M1273.4 595.4h0M1270.7 595.1h0M1275.5 595.0h0M1279.7 586.1h0M1292.4 591.3h0M1280.3 589.4h0M1290.9 590.9h0M1303.4 574.4h0M1271.9 572.5h0M1293.6 575.7h0M1281.9 575.7h0M1279.5 592.9h0M1287.1 593.3h0M1267.1 593.8h0M1275.3 582.3h0M1273.5 592.7h0M1287.5 588.2h0M1271.5 589.4h0M1264.2 581.3h0M1263.9 589.4h0M1294.3 594.6h0M1290.5 591.4h0M1297.4 594.5h0M1290.2 590.7h0M1264.4 583.1h0M1291.2 585.5h0M1284.8 590.2h0M1302.0 584.8h0M1271.7 595.8h0M1265.4 576.5h0M1296.7 595.8h0M1279.7 582.9h0M1281.7 590.9h0M1291.9 595.9h0M1269.8 586.2h0M1280.9 581.5h0M1295.4 595.6h0M1286.8 580.9h0M1299.6 593.8h0M1298.0 593.5h0M1273.5 588.9h0M1295.1 594.6h0M1288.5 579.8h0M1267.2 591.9h0M1273.1 586.2h0M1293.4 591.6h0M1297.2 590.7h0M1268.6 592.5h0M1291.3 585.1h0M1275.7 572.7h0M1269.8 595.2h0M1266.3 595.4h0M1266.3 583.2h0M1281.4 593.7h0M1267.0 582.2h0M1287.3 593.3h0M1296.4 592.3h0M1279.7 593.4h0M1287.9 580.6h0M1296.8 587.1h0M1296.3 577.9h0M1275.2 589.9h0M1285.6 594.5h0M1281.9 594.2h0M1267.2 574.4h0M1270.5 581.2h0M1282.1 650.0h0M1267.0 657.1h0M1284.0 635.4h0M1291.7 634.8h0M1281.8 635.6h0M1295.0 636.0h0M1270.6 643.7h0M1292.8 638.0h0M1296.3 644.7h0M1292.1 640.4h0M1293.4 635.0h0M1296.8 634.3h0M1264.2 656.2h0M1281.4 653.1h0M1286.1 636.7h0M1277.5 643.3h0M1280.4 648.3h0M1301.0 635.6h0M1263.4 650.7h0M1303.3 635.8h0M1298.7 635.9h0M1268.7 658.3h0M1281.5 638.1h0M1296.3 642.4h0M1276.3 645.3h0M1285.6 637.6h0M1278.2 655.0h0M1300.4 651.1h0M1278.7 637.6h0M1280.8 636.6h0M1280.1 638.6h0M1284.1 634.4h0M1300.6 637.7h0M1286.8 643.2h0M1263.0 644.0h0M1286.1 642.9h0M1264.3 634.2h0M1271.9 635.3h0M1301.1 635.1h0M1262.6 648.5h0M1302.9 645.7h0M1267.7 653.5h0M1273.5 647.1h0M1277.4 635.9h0M1296.3 643.6h0M1300.0 640.7h0M1294.1 644.2h0M1273.5 643.9h0M1297.9 641.6h0M1280.6 643.9h0M1264.9 635.6h0M1282.8 644.8h0M1264.1 640.1h0M1279.3 641.6h0M1284.8 636.1h0M1269.4 635.8h0M1264.5 634.9h0M1299.7 644.5h0M1289.7 644.6h0M1279.6 634.4h0M1293.5 638.5h0M1276.3 639.8h0M1293.8 638.1h0M1286.6 636.8h0M1274.5 649.3h0M1293.4 635.0h0M1278.9 634.1h0M1288.4 641.3h0M1286.5 642.7h0M1284.0 636.6h0M1294.5 643.1h0M1267.9 638.7h0M1263.9 641.3h0M1264.3 644.4h0M1281.4 648.1h0M1268.6 634.0h0M1292.5 635.2h0M1277.0 648.7h0M1280.3 646.6h0M1268.0 658.8h0M1280.8 642.2h0M1297.8 634.9h0M1287.5 634.0h0M1263.5 636.2h0M1286.6 634.7h0M1294.7 634.2h0M1286.9 634.8h0M1277.1 656.9h0M1291.9 641.8h0M1302.9 641.3h0M1281.6 652.4h0M1264.7 648.5h0M1295.9 640.8h0M1289.1 640.5h0M1289.3 635.8h0M1274.7 647.2h0M1283.8 639.5h0M1288.2 642.2h0M1299.5 643.7h0M1274.8 637.6h0M1268.3 639.7h0M1266.0 638.8h0M1264.1 637.6h0M1270.5 649.3h0M1279.5 648.2h0M1272.2 646.1h0M1296.1 644.8h0M1270.1 641.8h0M1276.4 636.3h0M1298.8 634.7h0M1295.8 646.6h0M1276.4 645.2h0M1291.8 643.6h0M1271.9 639.4h0M1301.6 643.7h0M1302.3 634.6h0M1280.6 636.8h0M1262.7 636.6h0M1299.6 642.0h0M1262.7 650.3h0M1268.0 646.2h0M1297.9 639.5h0M1299.9 635.6h0M1297.7 640.7h0M1272.9 635.5h0M1302.2 635.2h0M1291.6 641.8h0M1273.9 634.1h0M1267.3 634.6h0M1269.6 639.2h0M1264.8 643.0h0M1297.6 637.2h0M1295.7 640.6h0" stroke="#000" stroke-width="4.0" stroke-linecap="round" fill="none"/>
<rect x="162.5" y="502" width="1101.5" height="34.7" fill="#ffa500" fill-opacity="0.10"/>
<rect x="1262.4" y="598.8" width="41.9" height="33.4" fill="#ffa500" fill-opacity="0.10"/>
<rect x="105.5" y="498.9" width="1255.3" height="48.8" fill="#ff0000" fill-opacity="0.12"/>
<line x1="162.5" y1="519.3" x2="1264" y2="519.3" stroke="#ffa500" stroke-width="3"/>
<line x1="1262.4" y1="615.1" x2="1304.3" y2="615.1" stroke="#ffa500" stroke-width="3"/>
<line x1="105.5" y1="523.0" x2="1360.8" y2="523.0" stroke="#ff0000" stroke-width="2.08"/>
<path d="M175.0 566.2h0M179.2 567.5h0M178.8 572.5h0M180.0 572.5h0M200.8 565.5h0M210.2 567.5h0M210.2 572.5h0M223.2 565.5h0M238.2 567.5h0M293.2 565.5h0M331.2 569.2h0M334.2 574.5h0M449.2 571.5h0M196.2 609.2h0M219.2 620.2h0M274.2 602.2h0M442.0 644.2h0M477.2 635.2h0M556.2 578.2h0M573.2 573.2h0M587.2 575.2h0M588.2 593.2h0M634.2 603.2h0M698.2 583.2h0M698.2 649.2h0M744.2 617.2h0M747.2 570.2h0M750.2 583.2h0M767.2 636.2h0M770.2 578.2h0M774.2 567.2h0M784.2 571.2h0M804.2 567.2h0M853.2 565.2h0M872.2 572.2h0M899.2 622.2h0M901.2 622.2h0M971.2 583.2h0M1025.2 607.2h0M1032.2 580.2h0M1080.2 571.2h0M1114.2 598.2h0M1141.2 654.2h0M1157.2 566.2h0M1174.2 567.2h0M1258.2 584.2h0M1262.2 565.2h0M923.2 436.2h0M171.9 460.9h0M173.0 461.1h0M169.1 465.9h0M171.0 470.6h0M170.3 472.0h0M171.4 472.7h0M195.2 469.2h0M199.1 470.7h0M211.1 462.3h0M210.9 463.3h0M212.2 464.6h0M213.4 464.9h0M213.4 466.0h0M211.6 472.7h0M259.3 468.9h0M259.8 471.6h0M302.2 460.8h0M301.4 461.4h0M299.1 461.5h0M302.0 465.3h0M302.6 468.8h0M318.0 471.5h0M320.1 473.2h0M360.7 463.5h0M359.0 464.5h0M358.6 472.0h0M360.6 472.2h0M404.8 465.5h0M402.3 470.8h0M405.1 472.6h0M403.9 473.5h0M415.0 471.0h0M423.2 471.1h0M421.1 471.7h0M448.4 454.5h0M448.3 456.7h0M445.8 460.0h0M449.7 460.2h0M448.9 462.9h0M445.9 464.5h0M462.6 457.5h0M464.8 457.6h0M465.4 459.5h0M464.3 464.4h0M463.5 464.6h0M464.5 467.4h0M463.9 467.6h0M463.1 471.1h0M469.0 449.0h0M483.0 471.0h0M492.0 461.0h0M508.9 459.4h0M505.3 460.5h0M508.8 463.1h0M506.0 465.3h0M505.6 465.8h0M508.4 466.0h0M505.3 466.5h0M506.1 467.2h0M504.9 467.9h0M508.1 472.8h0M549.4 461.5h0M549.6 463.9h0M549.0 467.5h0M552.4 472.1h0M549.6 474.2h0M565.6 460.7h0M566.0 462.5h0M565.6 464.2h0M566.0 467.2h0M579.0 474.0h0M585.0 474.0h0M584.8 462.5h0M584.1 465.1h0M585.9 467.4h0M586.3 469.1h0M602.0 473.0h0M611.6 467.0h0M612.7 469.0h0M611.0 471.0h0M673.3 468.3h0M671.2 468.7h0M670.6 470.4h0M670.3 470.7h0M673.1 472.4h0M678.0 474.0h0M714.7 463.9h0M714.1 464.7h0M712.3 468.2h0M713.1 468.6h0M713.7 470.4h0M718.0 464.0h0M740.0 474.0h0M759.4 443.8h0M760.4 443.9h0M762.2 447.3h0M761.6 470.8h0M760.4 473.5h0M775.3 461.6h0M775.7 462.4h0M773.6 464.0h0M775.2 470.6h0M784.0 465.0h0M801.5 463.3h0M799.3 466.3h0M821.1 462.3h0M817.3 463.9h0M817.9 469.4h0M818.7 470.7h0M816.9 472.8h0M864.1 461.5h0M860.6 465.1h0M863.3 465.4h0M864.2 466.4h0M861.2 471.2h0M904.6 461.2h0M903.2 463.4h0M905.3 465.5h0M911.0 475.0h0M921.0 475.0h0M963.9 459.6h0M965.9 463.3h0M961.9 464.5h0M964.9 465.3h0M962.3 468.5h0M965.4 471.6h0M958.0 474.0h0M991.0 468.0h0M1006.8 467.4h0M1008.8 468.7h0M1026.0 458.2h0M1025.7 459.8h0M1023.6 464.2h0M1026.0 465.2h0M1026.0 470.0h0M1052.9 459.8h0M1050.8 460.5h0M1050.5 463.2h0M1052.2 465.2h0M1052.2 467.5h0M1068.8 453.4h0M1068.4 454.9h0M1069.1 455.4h0M1067.4 456.5h0M1067.6 460.6h0M1068.0 465.9h0M1068.1 470.1h0M1088.0 473.0h0M1111.9 467.3h0M1113.8 467.8h0M1110.3 472.7h0M1110.0 474.5h0M1130.7 460.4h0M1127.9 464.1h0M1128.6 464.2h0M1154.1 465.0h0M1153.0 466.7h0M1183.1 467.1h0M1185.0 469.4h0M1185.4 472.2h0M1189.0 473.0h0M1214.3 457.4h0M1213.4 463.4h0M1213.1 464.6h0M1216.9 465.4h0M1217.0 469.1h0M1248.9 453.4h0M1248.4 461.6h0M1249.0 462.6h0M1250.6 465.1h0M1251.3 468.9h0M1249.2 470.9h0M1250.5 472.9h0M1251.7 473.0h0M1243.0 472.0h0M1261.1 450.0h0M1261.0 451.0h0M1259.9 456.8h0M1258.1 466.2h0M1256.9 469.7h0M1259.6 471.5h0M1257.9 472.1h0M1256.8 472.3h0" stroke="#ffa500" stroke-width="3.3" stroke-linecap="round" fill="none"/>
<path d="M438.2 660.6h6l-3 5zM479.0 660.6h6l-3 5zM502.0 660.6h6l-3 5zM610.2 660.6h6l-3 5zM667.2 660.6h6l-3 5zM809.2 660.6h6l-3 5zM849.2 660.6h6l-3 5zM871.2 660.6h6l-3 5zM907.2 660.6h6l-3 5zM1008.2 660.6h6l-3 5zM1021.2 660.6h6l-3 5zM1250.3 660.6h6l-3 5zM1286.4 660.6h6l-3 5zM1295.4 660.6h6l-3 5z" fill="#ffa500"/>
<path d="M1074.5 386.5h6l-3 -5z" fill="#ffa500"/>
</g>
<line x1="162.00" y1="666.5" x2="162.00" y2="380.5" stroke="#800080" stroke-width="2.08" stroke-dasharray="2.08 3.44"/>
<line x1="1261.90" y1="666.5" x2="1261.90" y2="380.5" stroke="#800080" stroke-width="2.08" stroke-dasharray="2.08 3.44"/>
<line x1="1303.00" y1="666.5" x2="1303.00" y2="380.5" stroke="#800080" stroke-width="2.08" stroke-dasharray="2.08 3.44"/>
<rect x="105.5" y="380.5" width="1380.0" height="286.0" fill="none" stroke="#000" stroke-width="1.11"/>
<line x1="162.50" y1="666.5" x2="162.50" y2="671.36" stroke="#000" stroke-width="1.11"/>
<text x="157.89" y="687.30" font-size="14.9" textLength="8.13" lengthAdjust="spacingAndGlyphs" fill="#000">0</text>
<line x1="376.50" y1="666.5" x2="376.50" y2="671.36" stroke="#000" stroke-width="1.11"/>
<text x="357.99" y="687.30" font-size="14.9" textLength="34.52" lengthAdjust="spacingAndGlyphs" fill="#000">5000</text>
<line x1="589.50" y1="666.5" x2="589.50" y2="671.36" stroke="#000" stroke-width="1.11"/>
<text x="566.61" y="687.30" font-size="14.9" textLength="43.45" lengthAdjust="spacingAndGlyphs" fill="#000">10000</text>
<line x1="802.50" y1="666.5" x2="802.50" y2="671.36" stroke="#000" stroke-width="1.11"/>
<text x="779.94" y="687.30" font-size="14.9" textLength="43.45" lengthAdjust="spacingAndGlyphs" fill="#000">15000</text>
<line x1="1016.50" y1="666.5" x2="1016.50" y2="671.36" stroke="#000" stroke-width="1.11"/>
<text x="993.42" y="687.30" font-size="14.9" textLength="43.56" lengthAdjust="spacingAndGlyphs" fill="#000">20000</text>
<line x1="1229.50" y1="666.5" x2="1229.50" y2="671.36" stroke="#000" stroke-width="1.11"/>
<text x="1206.75" y="687.30" font-size="14.9" textLength="43.56" lengthAdjust="spacingAndGlyphs" fill="#000">25000</text>
<line x1="1442.50" y1="666.5" x2="1442.50" y2="671.36" stroke="#000" stroke-width="1.11"/>
<text x="1420.22" y="687.30" font-size="14.9" textLength="43.42" lengthAdjust="spacingAndGlyphs" fill="#000">30000</text>
<line x1="100.64" y1="632.50" x2="105.5" y2="632.50" stroke="#000" stroke-width="1.11"/>
<text x="65.52" y="637.20" font-size="14.9" textLength="30.39" lengthAdjust="spacingAndGlyphs" fill="#000">8.10</text>
<line x1="100.64" y1="584.50" x2="105.5" y2="584.50" stroke="#000" stroke-width="1.11"/>
<text x="65.90" y="589.20" font-size="14.9" textLength="30.27" lengthAdjust="spacingAndGlyphs" fill="#000">8.12</text>
<line x1="100.64" y1="536.50" x2="105.5" y2="536.50" stroke="#000" stroke-width="1.11"/>
<text x="65.39" y="541.20" font-size="14.9" textLength="30.38" lengthAdjust="spacingAndGlyphs" fill="#000">8.14</text>
<line x1="100.64" y1="488.50" x2="105.5" y2="488.50" stroke="#000" stroke-width="1.11"/>
<text x="65.39" y="493.20" font-size="14.9" textLength="30.66" lengthAdjust="spacingAndGlyphs" fill="#000">8.16</text>
<line x1="100.64" y1="440.50" x2="105.5" y2="440.50" stroke="#000" stroke-width="1.11"/>
<text x="65.52" y="445.20" font-size="14.9" textLength="30.53" lengthAdjust="spacingAndGlyphs" fill="#000">8.18</text>
<line x1="100.64" y1="392.50" x2="105.5" y2="392.50" stroke="#000" stroke-width="1.11"/>
<text x="65.52" y="397.20" font-size="14.9" textLength="30.39" lengthAdjust="spacingAndGlyphs" fill="#000">8.20</text>
<text x="689.82" y="657.10" font-size="14.9" textLength="43.25" lengthAdjust="spacingAndGlyphs" fill="#000">17217</text>
<rect x="1365.4" y="387.5" width="113.30" height="48.00" rx="2.8" ry="2.8" fill="#fff" fill-opacity="0.8" stroke="#cccccc" stroke-width="1.1"/>
<line x1="1368.8" y1="399.5" x2="1400" y2="399.5" stroke="#ffa500" stroke-width="3"/>
<line x1="1368.8" y1="421.9" x2="1399" y2="421.9" stroke="#ff0000" stroke-width="2.08"/>
<text x="1409.95" y="403.80" font-size="14.9" textLength="30.44" lengthAdjust="spacingAndGlyphs" fill="#000">mag</text>
<text x="1439.30" y="405.60" font-size="10.4" textLength="32.11" lengthAdjust="spacingAndGlyphs" font-style="italic" fill="#000">OBSID</text>
<text x="1408.65" y="426.70" font-size="14.9" textLength="30.44" lengthAdjust="spacingAndGlyphs" fill="#000">mag</text>
<rect x="1348.3" y="613.7" width="130.50" height="45.40" rx="2.8" ry="2.8" fill="#fff" fill-opacity="0.8" stroke="#cccccc" stroke-width="1.1"/>
<path d="M1367.4 626.2h0" stroke="#ffa500" stroke-width="3.3" stroke-linecap="round" fill="none"/>
<path d="M1367.4 647.0h0" stroke="#000" stroke-width="3.3" stroke-linecap="round" fill="none"/>
<text x="1392.76" y="629.80" font-size="14.9" textLength="79.58" lengthAdjust="spacingAndGlyphs" fill="#000">Highlighted</text>
<text x="1393.09" y="650.90" font-size="14.9" textLength="20.32" lengthAdjust="spacingAndGlyphs" fill="#000">OK</text>
<line x1="105.5" y1="921.50" x2="1485.5" y2="921.50" stroke="#b0b0b0" stroke-width="1.11" stroke-dasharray="1.11 1.83"/>
<line x1="105.5" y1="889.50" x2="1485.5" y2="889.50" stroke="#b0b0b0" stroke-width="1.11" stroke-dasharray="1.11 1.83"/>
<line x1="105.5" y1="856.50" x2="1485.5" y2="856.50" stroke="#b0b0b0" stroke-width="1.11" stroke-dasharray="1.11 1.83"/>
<line x1="105.5" y1="823.50" x2="1485.5" y2="823.50" stroke="#b0b0b0" stroke-width="1.11" stroke-dasharray="1.11 1.83"/>
<line x1="105.5" y1="791.50" x2="1485.5" y2="791.50" stroke="#b0b0b0" stroke-width="1.11" stroke-dasharray="1.11 1.83"/>
<line x1="105.5" y1="758.50" x2="1485.5" y2="758.50" stroke="#b0b0b0" stroke-width="1.11" stroke-dasharray="1.11 1.83"/>
<line x1="105.5" y1="1009.50" x2="1485.5" y2="1009.50" stroke="#b0b0b0" stroke-width="1.11" stroke-dasharray="1.11 1.83"/>
<line x1="105.5" y1="983.50" x2="1485.5" y2="983.50" stroke="#b0b0b0" stroke-width="1.11" stroke-dasharray="1.11 1.83"/>
<line x1="105.5" y1="957.50" x2="1485.5" y2="957.50" stroke="#b0b0b0" stroke-width="1.11" stroke-dasharray="1.11 1.83"/>
<line x1="162.00" y1="954.5" x2="162.00" y2="725.5" stroke="#800080" stroke-width="2.08" stroke-dasharray="2.08 3.44"/>
<line x1="1261.90" y1="954.5" x2="1261.90" y2="725.5" stroke="#800080" stroke-width="2.08" stroke-dasharray="2.08 3.44"/>
<line x1="1303.00" y1="954.5" x2="1303.00" y2="725.5" stroke="#800080" stroke-width="2.08" stroke-dasharray="2.08 3.44"/>
<path d="M181.00 856.50a1 1 0 1 0 2 0a1 1 0 1 0 -2 0M334.50 856.50a1 1 0 1 0 2 0a1 1 0 1 0 -2 0M337.50 856.50a1 1 0 1 0 2 0a1 1 0 1 0 -2 0M348.30 856.50a1 1 0 1 0 2 0a1 1 0 1 0 -2 0M440.25 856.50a1 1 0 1 0 2 0a1 1 0 1 0 -2 0M481.00 856.50a1 1 0 1 0 2 0a1 1 0 1 0 -2 0M669.25 856.50a1 1 0 1 0 2 0a1 1 0 1 0 -2 0M811.50 856.50a1 1 0 1 0 2 0a1 1 0 1 0 -2 0M851.25 856.50a1 1 0 1 0 2 0a1 1 0 1 0 -2 0M873.50 856.50a1 1 0 1 0 2 0a1 1 0 1 0 -2 0M909.50 856.50a1 1 0 1 0 2 0a1 1 0 1 0 -2 0M1010.50 856.50a1 1 0 1 0 2 0a1 1 0 1 0 -2 0M1023.50 856.50a1 1 0 1 0 2 0a1 1 0 1 0 -2 0M1076.50 856.50a1 1 0 1 0 2 0a1 1 0 1 0 -2 0M1292.75 856.50a1 1 0 1 0 2 0a1 1 0 1 0 -2 0" fill="none" stroke="#000" stroke-width="1.1"/>
<path d="M181.00 889.50a1 1 0 1 0 2 0a1 1 0 1 0 -2 0M334.50 889.50a1 1 0 1 0 2 0a1 1 0 1 0 -2 0M337.50 889.50a1 1 0 1 0 2 0a1 1 0 1 0 -2 0M348.30 889.50a1 1 0 1 0 2 0a1 1 0 1 0 -2 0M440.25 889.50a1 1 0 1 0 2 0a1 1 0 1 0 -2 0M481.00 889.50a1 1 0 1 0 2 0a1 1 0 1 0 -2 0M669.25 889.50a1 1 0 1 0 2 0a1 1 0 1 0 -2 0M811.50 889.50a1 1 0 1 0 2 0a1 1 0 1 0 -2 0M851.25 889.50a1 1 0 1 0 2 0a1 1 0 1 0 -2 0M873.50 889.50a1 1 0 1 0 2 0a1 1 0 1 0 -2 0M909.50 889.50a1 1 0 1 0 2 0a1 1 0 1 0 -2 0M1010.50 889.50a1 1 0 1 0 2 0a1 1 0 1 0 -2 0M1023.50 889.50a1 1 0 1 0 2 0a1 1 0 1 0 -2 0M1076.50 889.50a1 1 0 1 0 2 0a1 1 0 1 0 -2 0M1292.75 889.50a1 1 0 1 0 2 0a1 1 0 1 0 -2 0" fill="none" stroke="#000" stroke-width="1.1"/>
<path d="M180.40 958.70h3.2l-1.6 -2.8zM333.90 958.70h3.2l-1.6 -2.8zM336.90 958.70h3.2l-1.6 -2.8zM347.70 958.70h3.2l-1.6 -2.8zM439.65 958.70h3.2l-1.6 -2.8zM480.40 958.70h3.2l-1.6 -2.8zM668.65 958.70h3.2l-1.6 -2.8zM810.90 958.70h3.2l-1.6 -2.8zM850.65 958.70h3.2l-1.6 -2.8zM872.90 958.70h3.2l-1.6 -2.8zM908.90 958.70h3.2l-1.6 -2.8zM1009.90 958.70h3.2l-1.6 -2.8zM1022.90 958.70h3.2l-1.6 -2.8zM1075.90 958.70h3.2l-1.6 -2.8zM1292.15 958.70h3.2l-1.6 -2.8z" fill="none" stroke="#ff0000" stroke-width="1.1" stroke-linejoin="round"/>
<clipPath id="c4"><rect x="105.5" y="954.5" width="1380.0" height="57.0"/></clipPath>
<g clip-path="url(#c4)">
<rect x="162.5" y="1006.6" width="1101" height="4.9" fill="#000"/>
<path d="M1179.5 1009.2h0M925.3 1008.1h0M242.8 1007.9h0M849.8 1009.4h0M682.7 1010.6h0M1097.3 1009.2h0M275.7 1008.3h0M644.2 1010.3h0M669.0 1010.1h0M1163.1 1009.3h0M1034.2 1009.2h0M745.7 1008.6h0M314.5 1008.4h0M968.1 1006.7h0M415.3 1008.7h0M530.1 1008.0h0M319.8 1007.7h0M441.8 1008.6h0M679.1 1009.4h0M452.2 1009.0h0M433.5 1009.7h0M868.2 1009.0h0M779.8 1007.5h0M264.5 1010.8h0M894.8 1008.2h0M1194.3 1008.2h0M897.1 1008.6h0M987.9 1009.2h0M414.3 1007.5h0M666.9 1010.1h0M995.1 1009.2h0M1225.1 1007.7h0M1078.4 1008.2h0M1081.6 1007.5h0M871.0 1007.9h0M704.3 1009.0h0M972.3 1007.8h0M1126.0 1008.0h0M1115.3 1010.2h0M709.1 1008.6h0M379.3 1008.7h0M175.2 1008.7h0M1097.8 1008.6h0M1229.7 1006.6h0M532.2 1007.6h0M295.5 1008.8h0M893.2 1008.2h0M288.8 1009.1h0M375.7 1006.4h0M225.6 1006.9h0M338.3 1009.0h0M1003.3 1006.5h0M644.1 1008.9h0M586.2 1008.3h0M1139.6 1008.8h0M777.2 1009.8h0M179.2 1008.9h0M1234.1 1008.8h0M948.8 1008.5h0M384.2 1009.0h0M321.7 1009.3h0M359.1 1007.8h0M802.7 1009.7h0M815.3 1007.8h0M1050.4 1008.5h0M450.1 1009.1h0M966.8 1008.2h0M1164.0 1009.5h0M679.6 1008.1h0M942.2 1009.4h0M1178.0 1009.4h0M696.3 1008.4h0M430.2 1007.8h0M699.6 1010.2h0M496.8 1009.2h0M1110.0 1009.0h0M1242.5 1007.6h0M1095.9 1006.4h0M1051.1 1008.9h0M818.8 1009.5h0M923.5 1008.8h0M469.1 1008.9h0M428.7 1006.8h0M1075.7 1007.7h0M767.4 1009.2h0M989.7 1008.0h0M1231.0 1008.8h0M370.0 1008.0h0M987.3 1010.8h0M667.9 1009.1h0M281.2 1008.7h0M884.6 1006.6h0M977.7 1010.0h0M1042.2 1008.6h0M591.1 1007.8h0M917.4 1009.3h0M720.7 1008.5h0M1008.5 1009.8h0M723.2 1008.3h0M382.6 1009.3h0M724.5 1009.8h0M1252.4 1009.6h0M343.2 1007.6h0M294.9 1007.4h0M205.9 1008.7h0M459.5 1010.5h0M354.8 1007.9h0M917.9 1009.3h0M408.6 1007.3h0M464.7 1008.6h0M366.0 1009.0h0M819.6 1009.5h0M679.0 1008.8h0M693.9 1007.9h0M1010.1 1009.8h0M608.3 1007.3h0M668.6 1009.7h0M1207.9 1006.4h0M1160.5 1007.7h0M487.9 1008.8h0M674.4 1007.1h0M832.2 1006.4h0M165.0 1007.5h0M406.2 1007.9h0M172.0 1007.4h0M691.2 1009.0h0M674.9 1007.6h0M355.0 1009.2h0M1061.6 1008.3h0M1095.6 1008.6h0M613.4 1007.8h0M929.7 1007.3h0M1191.5 1009.0h0M536.7 1008.3h0M987.8 1009.6h0M251.1 1009.5h0M652.6 1008.6h0M398.0 1009.0h0M1052.3 1008.7h0M458.1 1008.6h0M542.5 1007.3h0M1115.9 1009.1h0M997.6 1010.3h0M1141.6 1008.1h0M523.1 1007.3h0M863.7 1009.6h0M317.8 1008.9h0M1247.0 1009.3h0M537.8 1009.7h0M741.0 1009.3h0M1107.2 1007.8h0M236.0 1007.2h0M369.0 1008.5h0M816.8 1007.2h0M1180.1 1010.1h0M526.4 1008.7h0M262.4 1008.4h0M640.9 1008.0h0M237.4 1009.5h0M641.9 1009.6h0M303.0 1009.0h0M594.5 1009.5h0M736.3 1006.4h0M1070.3 1009.5h0M352.5 1008.6h0M390.2 1008.0h0M1051.3 1007.4h0M496.6 1006.4h0M570.9 1007.7h0M897.5 1008.2h0M243.7 1008.2h0M331.9 1009.2h0M255.1 1010.8h0M692.7 1007.3h0M1239.8 1009.8h0M518.5 1007.6h0M633.6 1009.3h0M240.6 1009.3h0M409.8 1006.9h0M1024.3 1010.2h0M600.1 1008.8h0M825.2 1008.9h0M824.0 1008.2h0M162.7 1006.5h0M808.9 1008.3h0M701.9 1007.8h0M1004.2 1009.6h0M1009.3 1006.8h0M487.7 1009.6h0M241.9 1008.7h0M737.8 1009.6h0M852.6 1007.8h0M1244.8 1007.7h0M964.8 1008.9h0M546.3 1007.7h0M460.8 1008.4h0M1243.5 1007.4h0M558.1 1009.4h0M1156.0 1009.7h0M283.1 1009.7h0M973.2 1009.6h0M962.9 1009.0h0M962.0 1009.1h0M616.1 1007.8h0M866.0 1010.1h0M1230.1 1008.6h0M1227.1 1010.1h0M599.7 1007.4h0M249.7 1008.9h0M384.6 1006.9h0M713.0 1007.2h0M219.7 1008.7h0M1172.8 1008.1h0M1067.6 1008.3h0M889.5 1008.4h0M241.3 1010.0h0M1054.5 1008.5h0M876.6 1006.9h0M1134.0 1009.0h0M372.4 1008.8h0M321.3 1007.8h0M846.6 1009.3h0M1137.2 1008.0h0M1102.1 1009.8h0M410.4 1010.2h0M927.4 1009.0h0M1083.3 1009.2h0M1200.9 1008.7h0M434.7 1008.0h0M760.9 1008.9h0M275.5 1007.9h0M623.5 1007.6h0M341.7 1008.6h0M794.8 1007.9h0M258.0 1008.5h0M186.8 1010.1h0M633.2 1007.7h0M671.3 1009.2h0M451.7 1008.7h0M987.1 1010.5h0M1251.6 1008.1h0M981.1 1009.4h0M204.7 1009.2h0M586.9 1008.4h0M950.5 1008.8h0M470.9 1007.3h0M725.9 1008.3h0M431.6 1009.2h0M967.0 1008.7h0M938.2 1009.5h0M494.2 1008.3h0M344.4 1009.4h0M482.3 1006.7h0M1175.6 1008.8h0M1044.2 1010.4h0M988.7 1007.8h0M1021.4 1009.2h0M1084.3 1008.8h0M696.9 1009.2h0M867.2 1007.5h0M326.4 1007.8h0M959.1 1008.0h0M226.7 1008.7h0M518.6 1007.6h0M640.2 1008.5h0M1212.0 1009.3h0M801.6 1008.1h0M1179.5 1008.5h0M809.6 1009.0h0M231.1 1010.2h0M196.9 1007.4h0M170.7 1009.0h0M437.0 1009.2h0M199.1 1009.6h0M797.4 1009.9h0M890.4 1010.1h0M269.3 1007.5h0M767.6 1009.1h0M963.2 1009.6h0M1078.6 1008.7h0M1120.2 1009.7h0M1010.4 1007.5h0M882.4 1008.1h0M703.2 1007.3h0M180.7 1009.4h0M1012.3 1009.1h0M841.3 1007.7h0M403.2 1007.9h0M555.6 1008.0h0M579.7 1010.3h0M348.6 1007.6h0M706.2 1009.0h0M806.2 1008.4h0M909.4 1009.0h0M614.4 1007.8h0M392.3 1006.4h0M295.6 1008.0h0M600.9 1008.1h0M164.1 1008.0h0M1078.1 1007.5h0M417.4 1009.2h0M229.4 1007.1h0M445.4 1009.0h0M688.4 1009.8h0M391.2 1009.2h0M476.0 1008.7h0M811.3 1008.2h0M1033.4 1008.7h0M369.4 1007.8h0M1257.8 1010.2h0M358.8 1008.6h0M321.5 1006.5h0M295.2 1008.3h0M1224.1 1008.8h0M730.5 1010.5h0M653.8 1006.9h0M850.2 1010.2h0M726.7 1009.0h0M1096.1 1007.2h0M1141.8 1009.0h0M750.2 1010.2h0M442.4 1008.9h0M718.5 1009.6h0M573.2 1008.6h0M492.0 1008.4h0M312.7 1007.3h0M1009.1 1008.5h0M433.0 1009.0h0M681.8 1009.8h0M645.2 1009.8h0M1004.3 1008.0h0M951.9 1009.2h0M537.7 1006.7h0M984.0 1008.4h0M719.6 1006.9h0M481.3 1008.6h0M320.0 1007.9h0M744.3 1008.5h0M598.5 1010.1h0M1026.1 1007.2h0M315.5 1006.7h0M226.1 1008.4h0M1009.3 1010.1h0M968.5 1009.2h0M1221.5 1008.5h0M208.1 1009.0h0M379.2 1009.5h0M453.6 1008.3h0M1034.9 1007.1h0M469.6 1009.4h0M252.7 1009.0h0M794.3 1008.8h0M1024.9 1010.8h0M350.4 1010.0h0M547.9 1008.0h0M1026.3 1009.4h0M653.7 1008.5h0M403.7 1008.4h0M1157.7 1007.6h0M901.7 1006.9h0M1148.4 1007.5h0M923.3 1009.1h0M727.1 1010.3h0M805.9 1008.5h0M691.6 1007.9h0M873.5 1009.7h0M408.8 1010.0h0M406.3 1008.7h0M1067.4 1008.9h0M1064.8 1008.0h0M1139.3 1009.2h0M1004.3 1009.0h0M753.6 1007.5h0M529.7 1010.1h0M1190.6 1010.8h0M931.2 1009.0h0M725.4 1008.5h0M300.9 1008.4h0M541.6 1008.6h0M342.1 1009.5h0M964.5 1009.4h0M971.8 1007.9h0M924.6 1006.4h0M1259.1 1008.5h0M807.4 1008.5h0M179.9 1009.0h0M538.6 1008.9h0M517.8 1010.0h0M817.9 1008.4h0M948.5 1009.6h0M1100.2 1007.9h0M552.6 1008.9h0M1094.0 1010.8h0M253.3 1008.3h0M787.9 1007.5h0M755.9 1007.6h0M663.2 1007.7h0M1258.2 1007.6h0M590.3 1007.8h0M902.8 1008.7h0M1101.9 1009.9h0M820.4 1007.8h0M617.8 1007.6h0M197.5 1008.9h0M582.6 1007.3h0M702.5 1007.8h0M850.1 1007.3h0M1073.1 1007.2h0M629.3 1008.7h0M203.1 1008.3h0M245.3 1008.9h0M285.7 1007.5h0M827.8 1009.1h0M245.6 1008.2h0M870.4 1009.2h0M864.0 1010.8h0M855.0 1008.6h0M516.5 1008.5h0M1105.3 1008.2h0M380.3 1007.3h0M806.5 1009.7h0M902.7 1008.4h0M726.3 1009.1h0M504.4 1008.8h0M450.3 1008.7h0M458.5 1007.9h0M1026.9 1009.0h0M734.4 1008.9h0M489.8 1007.8h0M459.6 1007.5h0M729.4 1010.1h0M1171.4 1008.8h0M522.9 1007.6h0M817.5 1010.8h0M451.3 1010.4h0M816.8 1009.2h0M262.2 1008.0h0M372.9 1009.1h0M968.6 1007.9h0M1155.1 1009.3h0M239.3 1008.1h0M407.4 1007.7h0M1188.8 1008.2h0M789.0 1008.7h0M552.7 1010.8h0M910.0 1008.1h0M1204.8 1009.0h0M467.4 1009.3h0M769.9 1007.7h0M214.0 1008.8h0M658.6 1008.3h0M588.1 1008.9h0M410.9 1008.9h0M293.2 1009.9h0M986.0 1008.2h0M1171.1 1009.9h0M1022.5 1007.4h0M728.8 1009.4h0M1249.4 1007.2h0M271.4 1007.8h0M561.2 1009.5h0M797.2 1007.9h0M955.7 1009.0h0M1228.5 1008.7h0M252.6 1010.5h0M577.4 1007.0h0M215.2 1008.3h0M929.2 1008.7h0M1230.4 1010.3h0M589.3 1008.9h0M442.7 1008.4h0M1059.3 1007.1h0M731.4 1008.2h0M164.2 1007.9h0M321.3 1006.6h0M1146.7 1008.5h0M1239.1 1007.8h0M484.0 1006.8h0M648.2 1009.7h0M1081.3 1009.8h0M741.2 1006.7h0M684.0 1010.8h0M860.5 1009.5h0M963.1 1009.3h0M469.1 1009.1h0M374.1 1009.1h0M277.1 1009.2h0M230.5 1007.8h0M457.2 1007.7h0M1211.4 1009.6h0M304.6 1008.8h0M1221.0 1010.6h0M941.0 1007.9h0M638.1 1009.2h0M166.7 1007.6h0M895.0 1007.7h0M590.4 1007.1h0M537.6 1010.0h0M547.9 1007.7h0M1093.3 1008.1h0M771.7 1007.6h0M175.6 1009.5h0M1210.6 1007.8h0M523.7 1007.8h0M267.1 1007.9h0M591.0 1008.8h0M1250.2 1010.4h0M321.6 1006.8h0M1160.1 1009.5h0M941.2 1009.5h0M410.6 1009.9h0M565.6 1008.5h0M251.7 1007.8h0M1051.6 1008.5h0M314.4 1009.5h0M436.2 1009.2h0M918.3 1007.7h0M1127.7 1007.8h0M627.4 1009.0h0M1060.9 1010.2h0M1056.3 1008.7h0M1259.9 1009.6h0M677.0 1008.2h0M682.2 1009.3h0M596.2 1008.3h0M767.3 1009.0h0M757.0 1008.0h0M177.0 1009.5h0M1223.8 1009.8h0M272.3 1009.0h0M883.2 1008.0h0M613.4 1009.4h0M590.2 1009.4h0M1199.8 1009.5h0M329.1 1009.1h0M1134.6 1010.0h0M944.0 1007.5h0M1031.4 1009.2h0M1222.0 1008.6h0M294.6 1009.7h0M177.1 1008.5h0M823.5 1008.7h0M1188.2 1008.1h0M1109.5 1008.6h0M217.8 1009.4h0M1182.6 1009.1h0M1205.4 1007.8h0M591.0 1008.4h0M353.1 1009.1h0M229.4 1007.3h0M269.2 1009.3h0M645.0 1009.9h0M347.4 1007.3h0M780.7 1007.9h0M748.4 1008.9h0M1222.4 1007.4h0M1031.1 1008.4h0M619.2 1009.0h0M600.6 1010.3h0M685.6 1009.2h0M782.7 1010.2h0M495.5 1008.8h0M251.0 1009.5h0M415.9 1009.4h0M1052.8 1008.7h0M1230.1 1009.0h0M557.5 1008.9h0M353.4 1009.7h0M354.7 1008.1h0M192.2 1008.7h0M697.3 1007.9h0M1157.9 1010.0h0M887.3 1009.1h0M165.5 1006.7h0M754.3 1010.8h0M1151.9 1008.9h0M1007.4 1009.1h0M267.0 1008.4h0M519.5 1007.7h0M602.3 1008.1h0M181.2 1009.3h0M1111.8 1007.6h0M933.0 1010.0h0M1161.2 1006.6h0M397.0 1009.5h0M738.8 1008.0h0M295.8 1007.0h0M1134.5 1008.5h0M1116.2 1008.6h0M258.0 1008.7h0M334.5 1008.0h0M465.2 1010.4h0M493.3 1007.5h0M1192.2 1007.1h0M275.9 1009.4h0M369.6 1008.5h0M207.7 1007.0h0M226.3 1007.0h0M1124.8 1009.6h0M990.1 1008.5h0M267.6 1009.2h0M598.6 1007.1h0M1118.2 1009.2h0M490.4 1008.5h0M792.7 1008.7h0M186.8 1009.0h0M891.5 1008.1h0M456.4 1008.9h0M736.1 1009.2h0M820.6 1006.8h0M173.4 1009.0h0M823.5 1008.6h0M1255.8 1010.6h0M955.4 1009.2h0M1155.8 1008.3h0M1020.2 1009.1h0M788.2 1009.1h0M1153.2 1007.2h0M952.7 1009.3h0M1191.0 1008.7h0M165.4 1009.7h0M313.1 1008.7h0M1173.2 1008.1h0M516.1 1008.2h0M872.8 1008.4h0M719.7 1009.0h0M1127.8 1008.8h0M911.9 1008.7h0M697.4 1008.4h0M471.1 1010.1h0M951.5 1009.4h0M464.2 1007.2h0M824.1 1008.4h0M206.5 1009.1h0M497.9 1007.9h0M740.3 1007.8h0M1076.0 1006.6h0M1156.2 1009.1h0M412.9 1010.0h0M418.0 1009.4h0M1093.3 1010.8h0M930.0 1010.3h0M219.4 1007.5h0M1252.6 1009.4h0M751.9 1006.9h0M417.5 1008.9h0M702.6 1010.8h0M386.5 1010.1h0M1125.3 1008.9h0M1034.8 1009.2h0M919.2 1008.9h0M511.6 1008.8h0M1029.8 1008.2h0M1011.8 1010.0h0M1112.5 1010.5h0M675.8 1008.3h0M505.3 1010.3h0M670.1 1010.8h0M1199.5 1008.2h0M192.9 1009.3h0M982.6 1008.7h0M884.8 1008.5h0M533.8 1008.7h0M166.6 1009.0h0M1093.2 1009.9h0M796.4 1008.4h0M503.6 1008.4h0M988.7 1006.5h0M1263.5 1008.8h0M1125.8 1008.9h0M1150.1 1006.6h0M1197.2 1007.0h0M905.2 1008.9h0M241.9 1008.9h0M1083.8 1009.6h0M520.7 1006.4h0M1177.6 1008.9h0M1229.1 1008.0h0M168.0 1007.6h0M785.9 1007.4h0M219.0 1009.1h0M1258.0 1008.4h0M744.3 1009.0h0M1181.3 1009.2h0M815.4 1008.8h0M290.2 1008.9h0M1155.2 1008.5h0M1046.1 1008.0h0M780.3 1007.5h0M272.0 1007.6h0M1240.0 1008.0h0M644.5 1008.9h0M389.7 1008.1h0M923.2 1008.5h0M1122.1 1009.8h0M952.9 1009.0h0M455.9 1008.8h0M254.4 1009.2h0M784.2 1010.4h0M454.2 1008.1h0M566.4 1008.4h0M983.4 1010.3h0M411.1 1010.1h0M711.2 1009.6h0M365.5 1009.2h0M1042.5 1009.4h0M517.8 1007.7h0M1009.6 1008.0h0M245.4 1009.1h0M384.5 1008.6h0M1123.9 1008.8h0M922.8 1010.0h0M431.9 1008.3h0M746.1 1009.6h0M1204.5 1006.8h0M795.2 1007.6h0M783.0 1008.4h0M988.7 1007.4h0M736.4 1010.1h0M297.6 1009.3h0M1198.2 1010.0h0M1230.2 1009.8h0M869.1 1009.6h0M1139.0 1009.9h0M491.3 1008.5h0M1254.9 1010.6h0M920.0 1007.5h0M325.8 1009.5h0M750.6 1009.0h0M598.9 1008.6h0M352.8 1009.5h0M1173.8 1009.3h0M289.2 1007.9h0M489.3 1009.8h0M1071.7 1008.5h0M890.7 1009.9h0M473.3 1009.0h0M450.7 1009.0h0M253.7 1009.4h0M788.7 1008.0h0M1205.0 1008.0h0M578.0 1008.7h0M856.1 1006.9h0M919.3 1009.7h0M675.5 1008.7h0M1156.9 1007.8h0M1173.0 1008.7h0M537.5 1008.0h0M185.3 1008.8h0M426.4 1008.2h0M889.1 1009.7h0M406.0 1008.0h0M766.0 1009.4h0M395.4 1008.1h0M527.2 1010.1h0M1119.1 1009.5h0M208.0 1009.8h0M819.1 1010.0h0M973.3 1008.1h0M1126.0 1009.0h0M1182.8 1007.7h0M391.7 1008.9h0M927.0 1007.5h0M1159.7 1006.8h0M493.7 1008.0h0M1042.3 1008.8h0M1199.1 1009.6h0M888.7 1010.8h0M329.7 1008.1h0M459.4 1008.8h0M809.0 1008.3h0M731.3 1008.5h0M1061.2 1009.4h0M623.4 1009.0h0M545.3 1007.6h0M1194.4 1007.6h0M1215.0 1008.2h0M1139.1 1007.5h0M938.1 1008.6h0M196.4 1008.8h0M275.8 1008.1h0M1163.4 1007.1h0M283.0 1009.0h0M178.2 1007.7h0M328.6 1009.2h0M445.0 1008.0h0M684.1 1008.1h0M285.9 1009.3h0M629.3 1008.4h0M612.5 1008.1h0M775.1 1010.8h0M571.8 1008.0h0M378.3 1008.5h0M388.0 1008.1h0M612.5 1007.8h0M875.1 1008.8h0M467.1 1009.2h0M482.7 1008.5h0M662.7 1009.4h0M1162.3 1008.0h0M473.3 1007.2h0M207.6 1009.3h0M321.6 1009.5h0M206.1 1007.5h0M989.3 1008.8h0M477.2 1007.3h0M868.8 1009.4h0M421.2 1009.8h0M165.8 1009.0h0M890.9 1007.9h0M749.8 1007.9h0M901.0 1006.6h0M424.9 1010.8h0M181.2 1007.4h0M904.4 1008.6h0M326.6 1009.3h0M366.5 1007.5h0M983.9 1007.5h0M623.3 1010.2h0M835.9 1007.9h0M999.9 1009.5h0M640.8 1006.4h0M1140.9 1008.5h0M217.6 1006.4h0M196.6 1010.3h0M769.2 1008.4h0M838.6 1008.3h0M167.1 1006.7h0M638.0 1009.3h0M944.4 1009.7h0M757.1 1009.4h0M390.1 1009.5h0M1112.9 1008.4h0M1154.8 1007.4h0M267.5 1010.4h0M816.6 1008.2h0M472.4 1008.7h0M1213.8 1008.6h0M581.4 1007.7h0M254.0 1010.1h0M1185.7 1008.0h0M1140.0 1009.8h0M250.4 1009.0h0M1148.5 1007.1h0M664.7 1008.7h0M733.7 1006.7h0M385.4 1008.1h0M852.7 1008.2h0M1029.6 1008.5h0M1254.5 1008.5h0M716.1 1008.6h0M952.1 1008.7h0M923.2 1007.6h0M787.2 1006.6h0M889.8 1009.2h0M711.0 1007.9h0M168.1 1008.2h0M795.0 1009.8h0M333.0 1008.3h0M1103.0 1007.1h0M1258.5 1009.7h0M483.3 1006.5h0M587.0 1006.4h0M1193.2 1010.2h0M803.1 1007.2h0M835.6 1006.7h0M497.1 1008.6h0M379.5 1009.9h0M638.6 1007.3h0M273.9 1006.5h0M649.5 1009.6h0M353.7 1009.8h0M1064.0 1007.8h0M608.1 1009.1h0M168.8 1008.7h0M242.6 1009.0h0M897.4 1009.4h0M1066.2 1009.0h0M222.9 1009.0h0M785.1 1007.9h0M682.0 1007.7h0M346.3 1008.6h0M865.8 1009.6h0M965.0 1009.2h0M1059.2 1007.6h0M732.6 1008.5h0M811.3 1007.8h0M778.1 1007.5h0M976.9 1009.5h0M1197.1 1009.6h0M397.9 1010.3h0M961.0 1009.6h0M630.0 1007.5h0M1249.1 1008.7h0M329.2 1008.4h0M1178.8 1009.0h0M451.1 1007.6h0M1017.6 1008.5h0M559.7 1009.0h0M1020.4 1009.3h0M455.8 1008.0h0M251.4 1008.7h0M968.9 1009.0h0M759.0 1008.7h0M1250.0 1007.4h0M378.2 1007.6h0M941.4 1008.0h0M801.2 1009.5h0M237.8 1008.7h0M1050.2 1007.7h0M216.2 1007.1h0M1155.8 1007.4h0M881.5 1009.7h0M783.9 1008.9h0M552.0 1006.9h0M1118.9 1009.1h0M730.0 1008.3h0M447.9 1008.4h0M167.8 1008.4h0M649.9 1007.5h0M623.1 1010.2h0M976.7 1008.4h0M237.6 1010.5h0M530.2 1010.1h0M246.4 1009.3h0M403.4 1007.1h0M309.4 1007.5h0M593.7 1007.3h0M319.2 1008.0h0M195.4 1010.8h0M296.1 1007.7h0M507.6 1009.7h0M557.0 1007.9h0M555.0 1008.0h0M1006.0 1008.1h0M324.1 1010.7h0M826.0 1009.6h0M532.9 1008.6h0M232.9 1009.1h0M1052.4 1008.3h0M789.0 1010.2h0M566.5 1008.4h0M960.5 1009.3h0M682.9 1009.7h0M959.6 1007.9h0M677.7 1009.6h0M527.4 1007.7h0M721.5 1008.4h0M361.5 1009.0h0M607.9 1009.2h0M210.1 1008.6h0M1233.2 1009.6h0M356.8 1008.1h0M448.6 1007.6h0M474.3 1009.5h0M1027.4 1009.4h0M711.6 1007.8h0M162.9 1009.9h0M1039.2 1009.8h0M1093.6 1009.3h0M405.3 1009.6h0M178.9 1008.8h0M616.5 1007.7h0M528.9 1008.7h0M496.1 1008.0h0M817.8 1009.0h0M1049.5 1009.5h0M637.8 1007.8h0M553.3 1008.8h0M875.9 1008.1h0M496.4 1008.5h0M1033.9 1008.2h0M607.1 1009.4h0M832.9 1008.7h0M346.1 1008.9h0M169.2 1007.3h0M169.7 1009.4h0M585.0 1010.2h0M1060.7 1008.3h0M534.8 1008.8h0M816.9 1009.2h0M270.0 1009.7h0M930.9 1008.4h0M1183.9 1008.3h0M211.4 1008.4h0M227.3 1009.1h0M170.2 1009.5h0M475.4 1007.0h0M500.3 1008.6h0M370.5 1006.4h0M679.0 1009.4h0M1071.8 1010.8h0M1104.4 1007.3h0M920.2 1008.4h0M344.6 1008.5h0M191.2 1007.7h0M1017.1 1010.0h0M294.4 1009.2h0M976.1 1008.7h0M186.1 1009.5h0M322.9 1009.0h0M906.4 1007.3h0M330.8 1009.1h0M356.1 1008.6h0M265.5 1008.1h0M734.3 1007.4h0M372.7 1010.0h0M442.7 1010.3h0M391.1 1008.4h0M269.2 1008.9h0M1189.8 1008.2h0M439.9 1008.4h0M288.5 1009.9h0M368.1 1007.7h0M969.3 1006.4h0M832.0 1008.8h0M1086.1 1008.2h0M694.1 1008.1h0M1064.0 1007.9h0M1074.4 1009.2h0M355.1 1010.8h0M530.9 1008.4h0M241.8 1008.7h0M626.2 1008.4h0M983.1 1008.2h0M1159.5 1009.9h0M1052.5 1008.3h0M366.0 1009.4h0M763.5 1008.7h0M1216.3 1010.3h0M1239.0 1007.9h0M1200.6 1009.5h0M487.2 1008.9h0M173.8 1009.0h0M627.7 1009.1h0M366.6 1008.8h0M545.9 1009.9h0M875.4 1008.2h0M460.8 1008.5h0M1032.5 1007.8h0M665.4 1009.2h0M867.5 1006.7h0M972.1 1008.9h0M414.2 1007.8h0M711.6 1008.6h0M276.9 1010.3h0M1002.0 1009.6h0M336.0 1007.5h0M669.1 1008.8h0M1181.9 1007.2h0M1165.9 1008.4h0M849.8 1008.2h0M495.5 1007.0h0M1027.0 1008.0h0M717.5 1007.8h0M798.9 1009.0h0M955.0 1007.1h0M986.3 1009.4h0M599.0 1008.5h0M659.0 1007.1h0M1067.4 1008.6h0M477.9 1008.9h0M759.9 1010.8h0M1052.6 1007.7h0M1220.9 1008.3h0M670.8 1010.5h0M471.3 1009.6h0M1086.8 1006.4h0M893.0 1007.0h0M1157.7 1010.1h0M824.9 1010.3h0M924.5 1009.9h0M787.2 1009.2h0M1208.6 1009.5h0M171.4 1010.3h0M816.8 1008.7h0M688.9 1008.9h0M444.9 1007.6h0M961.8 1006.8h0M738.9 1008.8h0M920.3 1009.8h0M758.6 1009.3h0M861.7 1009.2h0M722.7 1009.1h0M759.1 1008.6h0M1096.8 1009.8h0M990.4 1008.4h0M789.6 1008.4h0M261.7 1008.8h0M1162.4 1008.0h0M984.4 1008.8h0M1163.3 1009.5h0M452.0 1008.8h0M519.0 1008.3h0M892.7 1008.5h0M510.3 1008.9h0M380.1 1007.7h0M402.5 1007.8h0M818.4 1008.1h0M869.7 1009.8h0" stroke="#000" stroke-width="2.6" stroke-linecap="round" fill="none"/>
<path d="M1248.3 1009.4h0M1206.8 1009.4h0M876.7 1009.5h0M787.2 1008.9h0M610.1 1008.0h0M1064.3 1008.5h0M752.3 1008.4h0M220.9 1008.2h0M575.6 1008.2h0M438.8 1008.7h0M458.8 1009.3h0M208.1 1007.9h0M861.4 1007.7h0M718.4 1008.2h0M694.5 1007.9h0M1096.4 1007.6h0M763.8 1009.0h0M243.0 1009.3h0M1164.7 1008.8h0M478.8 1008.2h0M1144.8 1009.1h0M983.1 1009.5h0M643.3 1009.3h0M303.5 1009.5h0M183.0 1008.1h0M633.5 1009.3h0M755.0 1009.2h0M1092.6 1008.6h0M1049.1 1008.7h0M338.8 1009.3h0M592.4 1008.1h0M540.3 1009.2h0M1071.1 1008.4h0M927.9 1009.0h0M786.2 1008.6h0M466.4 1008.1h0M442.0 1008.6h0M1052.4 1008.3h0M878.9 1007.7h0M233.2 1008.0h0M252.2 1008.8h0M302.2 1008.2h0M1044.6 1009.1h0M425.9 1008.5h0M520.2 1008.7h0M1180.9 1008.4h0M629.8 1008.1h0M197.5 1009.2h0M455.7 1008.3h0M383.6 1009.1h0M794.1 1007.9h0M633.2 1007.9h0M1095.7 1009.3h0M206.4 1007.7h0M780.4 1009.1h0M458.0 1008.3h0M755.4 1008.6h0M241.1 1009.3h0M576.2 1008.7h0M933.0 1009.2h0M727.1 1008.4h0M527.9 1008.3h0M832.5 1008.7h0M1208.4 1009.3h0M688.9 1009.5h0M598.2 1008.1h0M654.6 1009.2h0M799.3 1009.0h0M185.1 1008.1h0M694.1 1008.0h0M240.9 1009.0h0M1097.3 1007.8h0M491.3 1008.2h0M228.7 1009.3h0M304.1 1008.6h0M210.2 1007.9h0M584.8 1008.5h0M202.2 1008.2h0M341.3 1008.9h0M586.4 1009.3h0M191.1 1007.9h0M1038.2 1008.4h0M846.2 1008.5h0M941.6 1009.3h0M1167.4 1009.5h0M200.5 1007.7h0M615.9 1008.2h0M319.0 1008.2h0M1089.3 1008.3h0M839.0 1008.5h0M459.2 1008.8h0M831.5 1007.8h0M365.2 1008.3h0M838.5 1009.4h0M661.9 1009.4h0M1187.7 1008.3h0M666.7 1007.8h0M1258.6 1007.6h0M1080.7 1007.9h0M181.3 1009.6h0M832.1 1008.9h0M838.2 1008.1h0M596.4 1009.2h0M584.6 1007.8h0M482.9 1008.1h0M767.7 1009.5h0M1023.9 1009.5h0M810.2 1007.8h0M331.6 1008.8h0M361.6 1008.8h0M724.8 1009.1h0M911.6 1007.9h0M518.6 1008.8h0M772.1 1009.2h0M1179.2 1008.1h0M1128.9 1009.0h0M1055.4 1009.0h0M821.5 1008.4h0M882.4 1009.1h0M861.5 1009.1h0M505.3 1008.2h0M935.9 1008.7h0M531.2 1008.5h0M916.4 1007.9h0M176.5 1008.5h0M1083.3 1008.6h0M1016.8 1008.4h0M748.6 1008.2h0M189.1 1008.2h0M616.9 1008.2h0M327.9 1008.3h0M1026.4 1007.6h0M1143.1 1009.1h0M699.9 1009.2h0M609.0 1008.7h0M672.6 1007.8h0M422.9 1008.0h0M722.3 1008.3h0M388.3 1008.5h0M400.3 1008.3h0M306.7 1009.6h0M991.8 1008.9h0M882.5 1007.8h0M1202.3 1008.2h0M841.0 1007.8h0M331.0 1007.9h0M356.0 1008.9h0M1138.8 1008.8h0M557.4 1008.5h0M295.2 1007.7h0M311.9 1009.4h0M1050.0 1008.1h0M1202.0 1009.1h0M639.4 1008.9h0M481.0 1008.4h0M517.5 1008.8h0M1054.2 1009.3h0M883.2 1008.4h0M957.9 1008.3h0M459.2 1007.9h0M418.4 1008.5h0M575.4 1009.4h0M1192.4 1009.6h0M618.0 1009.5h0M391.7 1009.2h0M774.9 1008.4h0M1191.8 1009.4h0M486.3 1009.2h0M988.5 1009.0h0M811.5 1008.5h0M293.1 1009.6h0M991.0 1007.8h0M465.4 1009.2h0M822.4 1008.1h0M482.0 1009.4h0M208.4 1007.9h0M653.1 1008.6h0M576.9 1008.0h0M202.8 1008.1h0M438.3 1008.2h0M1091.8 1009.1h0M478.2 1008.8h0M583.1 1008.4h0M1127.3 1007.8h0M544.1 1008.3h0M781.1 1009.2h0M538.5 1008.7h0M304.5 1008.5h0M1211.3 1008.3h0M437.0 1008.2h0M1008.3 1008.6h0M178.6 1008.0h0M194.0 1008.5h0M692.7 1009.6h0M686.4 1008.8h0M1215.8 1009.1h0M745.0 1007.9h0M670.7 1008.0h0M890.4 1008.6h0M1261.9 1007.9h0M1004.2 1008.2h0M368.8 1009.0h0M947.1 1008.3h0M319.7 1008.5h0M839.4 1009.1h0M256.6 1008.3h0M614.3 1008.1h0M268.3 1009.1h0M226.7 1008.9h0M543.6 1008.3h0M355.8 1009.5h0M611.1 1007.9h0M712.6 1008.5h0M537.1 1009.6h0M1155.2 1008.4h0M177.9 1008.4h0M439.7 1008.6h0M473.0 1008.8h0M538.0 1009.3h0M1086.9 1008.8h0M588.7 1008.1h0M869.0 1009.4h0M206.7 1008.9h0M804.4 1008.0h0M724.2 1009.0h0M411.5 1008.2h0M972.1 1007.6h0M848.6 1008.7h0M654.9 1009.5h0M254.3 1008.0h0M632.5 1009.6h0M639.5 1009.3h0M1111.9 1007.8h0M246.2 1007.7h0M1083.5 1009.4h0M675.6 1009.0h0M1225.5 1009.3h0M238.2 1009.2h0M738.4 1008.1h0M1142.9 1009.1h0M307.3 1008.8h0M440.3 1008.8h0M990.6 1009.1h0M1156.8 1008.8h0M183.3 1007.7h0M839.2 1009.2h0M267.1 1008.0h0M1156.6 1008.6h0M834.4 1008.8h0M437.5 1008.1h0M1180.0 1007.8h0M556.6 1009.0h0M288.3 1008.0h0M873.6 1007.9h0M395.5 1009.3h0M967.9 1009.5h0M1111.5 1009.5h0M1155.5 1008.4h0M529.0 1009.3h0M420.5 1008.0h0M1012.4 1008.6h0M440.2 1008.0h0M467.5 1008.9h0M1187.5 1007.8h0M1002.2 1009.2h0M662.5 1008.5h0M603.5 1008.4h0M317.1 1009.0h0M1132.3 1008.6h0M978.3 1009.1h0M1090.8 1008.5h0M881.8 1009.2h0M615.4 1009.5h0M1130.5 1008.7h0M821.0 1007.9h0M1082.4 1009.2h0M890.2 1008.4h0M969.4 1009.2h0M662.5 1008.6h0M425.6 1008.6h0M374.1 1009.1h0M163.7 1009.3h0M371.8 1007.7h0M582.3 1009.3h0M996.3 1008.5h0M1178.7 1008.8h0M585.6 1008.7h0M390.3 1008.8h0M985.2 1008.2h0M557.0 1009.3h0M278.3 1007.7h0M1121.2 1007.9h0M1143.1 1009.1h0M530.0 1008.2h0M976.9 1008.3h0M1024.8 1008.8h0M545.3 1008.1h0M379.4 1008.9h0M869.2 1009.5h0M929.4 1008.0h0M574.5 1009.6h0M206.3 1009.1h0M717.0 1008.7h0M400.0 1009.0h0M413.3 1008.9h0M1243.6 1008.8h0M583.6 1008.8h0M662.0 1008.6h0M1005.3 1008.4h0M930.7 1008.4h0M763.7 1007.6h0M725.0 1008.0h0M187.1 1008.1h0M636.4 1008.3h0M1171.8 1008.3h0M933.4 1009.5h0M419.4 1007.9h0M473.9 1009.1h0M1159.1 1009.1h0M905.2 1008.9h0M1206.9 1009.5h0M1258.5 1008.3h0M763.9 1008.2h0M804.6 1009.0h0M450.9 1009.3h0M722.8 1008.6h0M1114.0 1008.4h0M246.0 1008.5h0M275.9 1009.5h0M1010.3 1008.8h0M224.1 1007.9h0M570.4 1008.1h0M864.4 1008.5h0M1228.9 1008.4h0M974.9 1009.6h0M460.7 1009.2h0M166.7 1009.5h0M649.6 1008.3h0M702.0 1008.4h0M993.8 1009.3h0M546.4 1007.8h0M769.8 1008.9h0M518.0 1008.6h0M855.5 1009.5h0M743.7 1007.9h0M1144.8 1008.8h0M798.1 1008.0h0M1050.6 1007.6h0M774.2 1007.9h0M620.9 1008.2h0M849.8 1009.6h0M620.8 1009.1h0M1254.1 1007.8h0M384.6 1009.2h0M1107.2 1009.1h0M533.0 1008.4h0M848.2 1008.1h0M319.7 1008.6h0M429.8 1009.4h0M1218.0 1009.2h0M1233.9 1009.0h0M1084.3 1007.7h0M1113.0 1007.7h0M178.8 1007.9h0M1081.8 1007.6h0M767.6 1008.7h0M614.7 1008.4h0M284.5 1007.9h0M926.4 1008.6h0M211.3 1007.9h0M1028.7 1007.7h0M706.3 1009.1h0M814.7 1009.2h0M422.0 1008.0h0M166.5 1009.0h0M1043.3 1009.2h0M687.3 1008.4h0M1044.8 1008.9h0M1121.9 1008.2h0M453.6 1009.4h0M927.1 1008.2h0M569.5 1009.5h0M805.5 1009.4h0M567.9 1009.4h0M366.8 1008.6h0M375.2 1008.1h0M581.1 1009.5h0M1248.7 1009.4h0M1229.9 1009.5h0M817.3 1009.4h0M308.0 1008.2h0M635.7 1008.5h0M273.7 1008.1h0M712.3 1008.4h0M1162.1 1008.5h0M1029.9 1008.5h0M653.3 1008.5h0M1181.8 1007.8h0M435.1 1008.9h0M209.0 1008.0h0M787.1 1008.2h0M828.0 1007.9h0M1173.1 1008.3h0M617.0 1007.6h0M1248.6 1008.7h0M636.3 1009.6h0M989.0 1008.9h0M995.0 1008.7h0M1246.6 1008.2h0M996.3 1008.6h0M1112.7 1008.9h0M925.2 1009.2h0M1001.3 1009.1h0M1221.5 1008.7h0M1008.1 1008.3h0M989.7 1008.0h0M372.1 1008.5h0M1032.2 1009.2h0M173.1 1008.4h0M1114.5 1009.1h0M819.8 1009.1h0M966.3 1009.3h0M420.4 1008.5h0M1034.6 1009.3h0M856.0 1007.9h0M401.6 1008.9h0M488.2 1008.1h0M673.4 1007.6h0M619.4 1008.4h0M609.4 1009.4h0M508.4 1009.0h0M536.0 1008.6h0M528.1 1008.0h0M915.6 1008.6h0M410.3 1008.7h0M1048.1 1008.8h0M382.7 1009.5h0M630.1 1008.3h0M798.2 1009.5h0M1200.5 1008.8h0M904.3 1007.9h0M699.8 1008.5h0M965.2 1008.3h0M632.5 1007.6h0M254.3 1008.4h0M714.1 1008.9h0M357.7 1008.2h0M201.2 1009.1h0M591.9 1008.4h0M1164.8 1008.3h0M984.2 1008.7h0M808.9 1009.3h0M861.5 1008.4h0M1247.2 1008.1h0M1231.0 1008.6h0M880.6 1009.0h0M484.4 1009.1h0M1207.1 1009.3h0M509.5 1007.7h0M826.8 1009.2h0M1228.7 1009.5h0M690.4 1007.7h0M1115.7 1008.3h0M478.8 1009.0h0M669.2 1008.7h0M499.9 1008.7h0M735.2 1008.3h0M860.1 1008.8h0M474.2 1008.1h0M379.5 1008.5h0M714.9 1008.7h0M1070.7 1009.3h0M693.0 1008.5h0M1017.7 1009.0h0M704.3 1008.1h0M1098.2 1008.0h0M1122.8 1009.2h0M1033.0 1009.2h0M393.6 1008.2h0M553.2 1008.9h0M1158.6 1008.0h0M204.0 1007.7h0M411.1 1009.0h0M462.5 1008.6h0M715.0 1008.4h0M1089.8 1008.3h0M163.5 1008.5h0M418.5 1008.8h0M570.7 1009.2h0M717.9 1009.4h0M524.5 1009.4h0M651.4 1007.8h0M610.4 1008.8h0M241.0 1009.4h0M1182.0 1008.1h0M398.4 1009.1h0M1132.9 1007.8h0M501.7 1008.0h0M384.1 1008.8h0M978.0 1009.2h0M1017.8 1008.4h0M934.8 1008.0h0M534.6 1009.4h0M1000.5 1007.8h0M792.8 1008.3h0M481.9 1009.0h0M362.1 1009.5h0M1043.8 1007.8h0M729.6 1008.7h0M324.9 1009.4h0M335.9 1008.4h0M1159.8 1007.7h0M791.8 1009.4h0M350.9 1008.4h0M1258.7 1009.4h0M1118.8 1009.5h0M333.3 1007.6h0M1253.3 1008.5h0M280.8 1008.7h0M479.0 1009.1h0M992.8 1008.2h0M556.7 1009.3h0M446.3 1009.3h0M426.0 1007.9h0M362.7 1008.1h0M616.4 1008.5h0M793.1 1008.5h0M810.8 1008.9h0M922.6 1009.0h0M172.3 1009.4h0M465.0 1008.0h0M1198.5 1007.9h0M962.0 1008.6h0M870.2 1008.3h0M1204.8 1009.0h0M1067.7 1009.0h0M395.5 1008.8h0M541.9 1009.1h0M658.1 1008.5h0M1026.0 1009.1h0M295.7 1008.1h0M844.3 1009.0h0M752.7 1009.0h0M496.2 1007.8h0M651.1 1007.8h0M334.6 1009.1h0M441.6 1009.6h0M1089.3 1008.7h0M769.4 1008.2h0M824.2 1008.2h0M1243.5 1008.2h0M1254.7 1009.5h0M490.7 1008.6h0M707.8 1009.3h0M800.3 1009.4h0M168.1 1009.3h0M983.0 1009.0h0M1127.5 1009.4h0M1240.3 1009.1h0M683.8 1009.5h0M554.1 1007.8h0M433.1 1008.4h0M940.4 1009.6h0M866.3 1009.0h0M212.7 1008.7h0M1212.9 1009.6h0M235.2 1008.7h0M535.2 1009.6h0M1253.6 1009.4h0M436.0 1008.4h0M555.7 1009.6h0M843.7 1008.5h0M625.5 1008.9h0M829.4 1007.6h0M776.0 1008.3h0M326.7 1009.1h0M920.0 1009.1h0M445.7 1009.1h0M1073.0 1009.6h0M319.4 1009.5h0M169.1 1008.9h0M948.0 1007.7h0M1085.8 1008.2h0M235.9 1009.5h0M550.2 1009.4h0M381.3 1007.6h0M349.7 1007.7h0M788.7 1009.4h0M958.3 1008.1h0M248.1 1009.1h0M554.1 1008.5h0M565.0 1008.0h0M563.9 1008.7h0M298.5 1008.6h0M485.9 1009.1h0M702.0 1008.0h0M453.0 1007.9h0M586.9 1008.0h0M1259.9 1008.4h0M707.9 1009.2h0M687.5 1008.2h0M635.6 1009.3h0M167.3 1009.4h0M563.1 1008.4h0M1118.8 1007.7h0M533.2 1008.4h0M305.8 1009.5h0M1078.2 1009.1h0M723.3 1009.5h0M973.4 1009.3h0M1145.8 1008.3h0M942.4 1008.5h0M453.5 1007.8h0M837.4 1008.7h0M1047.4 1008.3h0M563.6 1008.9h0M215.4 1009.4h0M425.2 1008.2h0M1075.1 1008.4h0M793.2 1008.0h0M838.1 1009.3h0M1150.5 1008.2h0M573.5 1007.9h0M327.0 1009.1h0M1046.8 1009.6h0M729.2 1007.9h0M807.9 1008.9h0M831.1 1009.1h0M883.0 1008.4h0M1094.3 1008.9h0M191.1 1008.1h0M385.9 1008.6h0M324.0 1009.4h0M599.2 1008.4h0M191.5 1009.3h0M879.8 1009.4h0M410.7 1009.3h0M937.3 1009.0h0M469.2 1009.4h0M657.6 1009.0h0M351.2 1009.0h0M941.4 1009.3h0M445.5 1008.4h0M685.6 1009.0h0M328.9 1009.1h0M441.3 1007.7h0M1058.6 1009.1h0M784.3 1009.0h0M407.0 1008.8h0M525.9 1008.0h0M1035.7 1008.0h0M881.5 1008.7h0M730.1 1008.6h0M711.2 1008.1h0M1023.0 1009.2h0M335.7 1009.0h0M249.3 1008.1h0M631.4 1008.8h0M625.1 1008.0h0M800.9 1007.9h0M672.0 1008.8h0M569.8 1009.3h0M582.1 1008.0h0M814.9 1008.8h0M810.5 1008.9h0M233.0 1008.4h0M1126.1 1009.2h0M1054.8 1008.4h0M1000.9 1009.6h0M409.6 1007.8h0M626.4 1008.8h0M1220.7 1008.0h0M1236.2 1009.5h0M197.1 1009.2h0M687.8 1008.5h0M254.0 1008.7h0M265.7 1008.5h0M1034.3 1009.0h0M1210.4 1008.1h0M1056.3 1009.1h0M781.1 1008.5h0M393.0 1009.4h0M815.3 1008.2h0M1206.3 1007.7h0M1016.8 1008.3h0M439.5 1008.8h0M696.2 1009.2h0M963.0 1008.7h0M984.0 1008.6h0M257.8 1009.3h0M1007.6 1007.8h0M271.8 1007.9h0M463.6 1008.6h0M890.5 1009.1h0M814.8 1009.3h0M1123.1 1008.5h0M225.8 1009.3h0M1134.4 1007.7h0M178.6 1008.8h0M491.2 1008.7h0" stroke="#ffffff" stroke-width="0.9" stroke-linecap="round" fill="none" stroke-opacity="0.6"/>
<rect x="1262.5" y="1005.6" width="41" height="5.9" fill="#000"/>
<path d="M1291.2 1008.3h0M1301.5 1007.9h0M1279.8 1007.3h0M1299.5 1009.1h0M1302.7 1005.7h0M1280.9 1008.1h0M1281.5 1007.1h0M1290.5 1008.3h0M1293.1 1008.6h0M1262.1 1009.1h0M1291.7 1008.4h0M1300.4 1007.8h0M1294.7 1008.0h0M1302.2 1007.6h0M1275.8 1007.1h0M1280.7 1009.1h0M1266.8 1007.6h0M1268.1 1007.8h0M1293.2 1007.9h0M1300.2 1005.9h0M1299.0 1006.5h0M1300.2 1006.2h0M1300.9 1007.1h0M1287.4 1008.9h0M1270.1 1008.8h0M1302.8 1006.7h0M1287.5 1006.5h0M1270.8 1007.7h0M1264.7 1008.0h0M1287.8 1006.9h0M1282.6 1007.4h0M1294.6 1006.3h0M1262.1 1007.1h0M1264.7 1005.3h0M1297.3 1009.0h0M1277.0 1006.8h0M1280.0 1007.4h0M1285.8 1007.8h0M1294.4 1008.9h0M1288.9 1007.6h0M1292.1 1006.2h0M1299.2 1010.1h0M1272.1 1007.3h0M1296.7 1006.7h0M1298.8 1007.6h0M1271.5 1008.7h0M1287.0 1005.8h0M1274.3 1008.2h0M1286.9 1008.5h0M1296.5 1008.2h0M1281.7 1009.8h0M1286.7 1010.1h0M1298.3 1006.5h0M1274.5 1007.5h0M1274.1 1005.1h0M1278.3 1005.1h0M1284.5 1007.4h0M1266.3 1006.8h0M1286.5 1009.8h0M1293.7 1008.3h0M1272.5 1007.9h0M1302.5 1005.6h0M1274.0 1008.9h0M1269.2 1008.0h0M1296.6 1007.6h0M1275.7 1007.6h0M1285.7 1007.3h0M1282.3 1006.7h0M1262.4 1009.1h0M1288.2 1005.9h0M1290.0 1009.3h0M1274.6 1008.1h0M1262.2 1005.8h0M1290.5 1007.1h0M1292.1 1008.2h0M1277.9 1005.7h0M1283.0 1009.7h0M1283.6 1007.6h0M1292.6 1009.3h0M1271.7 1010.1h0M1286.2 1008.8h0M1280.6 1006.5h0M1264.3 1005.9h0M1274.2 1007.7h0M1276.8 1009.1h0M1269.6 1007.2h0M1279.5 1006.4h0M1268.0 1006.6h0M1283.5 1006.3h0M1274.4 1006.1h0M1298.3 1006.7h0M1266.2 1008.3h0M1285.1 1006.9h0M1276.1 1008.0h0M1292.2 1007.1h0M1284.9 1007.2h0M1294.1 1007.8h0M1295.4 1007.4h0M1274.7 1008.2h0M1298.6 1006.4h0M1275.5 1007.8h0M1265.1 1007.1h0M1272.6 1008.0h0M1281.7 1007.2h0M1278.2 1007.7h0M1299.8 1006.2h0M1275.5 1008.1h0M1294.1 1007.9h0M1279.7 1007.0h0M1285.9 1006.8h0M1284.5 1006.1h0M1286.0 1007.3h0M1278.1 1006.2h0M1280.1 1007.7h0M1269.0 1008.6h0M1269.0 1007.3h0M1284.3 1005.1h0M1274.7 1009.7h0M1284.1 1009.2h0M1292.8 1008.7h0M1296.1 1007.6h0M1300.2 1007.6h0M1269.7 1009.2h0M1281.4 1007.0h0M1268.0 1007.8h0M1283.9 1007.3h0M1266.8 1008.3h0M1272.0 1007.1h0M1292.4 1009.0h0M1287.9 1005.9h0M1280.2 1007.6h0M1284.5 1007.2h0M1302.2 1008.0h0M1275.0 1006.5h0M1270.3 1010.0h0M1273.3 1009.2h0M1274.5 1007.4h0M1291.7 1008.5h0M1286.0 1006.0h0M1267.3 1008.9h0M1296.5 1006.6h0M1296.4 1006.6h0M1290.0 1007.5h0M1282.3 1009.0h0M1265.9 1008.8h0M1292.1 1008.1h0M1280.6 1006.2h0M1292.3 1008.7h0M1286.2 1008.4h0M1267.2 1008.6h0M1297.4 1006.1h0M1296.8 1006.8h0M1268.8 1008.7h0M1288.5 1008.6h0M1269.1 1009.0h0M1290.9 1008.2h0M1290.5 1009.2h0M1271.6 1006.4h0M1289.3 1006.2h0M1295.7 1007.6h0" stroke="#000" stroke-width="2.6" stroke-linecap="round" fill="none"/>
</g>
<path d="M1077.5 992.2h0M1253.2 992.2h0" stroke="#ff0000" stroke-width="2.6" stroke-linecap="round" fill="none"/>
<path d="M1011.5 999.2h0M1289.4 1002.8h0" stroke="#000" stroke-width="2.6" stroke-linecap="round" fill="none"/>
<line x1="162.00" y1="1011.5" x2="162.00" y2="954.5" stroke="#800080" stroke-width="2.08" stroke-dasharray="2.08 3.44"/>
<line x1="1261.90" y1="1011.5" x2="1261.90" y2="954.5" stroke="#800080" stroke-width="2.08" stroke-dasharray="2.08 3.44"/>
<line x1="1303.00" y1="1011.5" x2="1303.00" y2="954.5" stroke="#800080" stroke-width="2.08" stroke-dasharray="2.08 3.44"/>
<rect x="105.5" y="725.5" width="1380.0" height="286.0" fill="none" stroke="#000" stroke-width="1.11"/>
<line x1="105.5" y1="954.5" x2="1485.5" y2="954.5" stroke="#000" stroke-width="1.11"/>
<line x1="162.50" y1="1011.5" x2="162.50" y2="1016.36" stroke="#000" stroke-width="1.11"/>
<text x="157.89" y="1032.00" font-size="14.9" textLength="8.13" lengthAdjust="spacingAndGlyphs" fill="#000">0</text>
<line x1="376.50" y1="1011.5" x2="376.50" y2="1016.36" stroke="#000" stroke-width="1.11"/>
<text x="357.99" y="1032.00" font-size="14.9" textLength="34.52" lengthAdjust="spacingAndGlyphs" fill="#000">5000</text>
<line x1="589.50" y1="1011.5" x2="589.50" y2="1016.36" stroke="#000" stroke-width="1.11"/>
<text x="566.61" y="1032.00" font-size="14.9" textLength="43.45" lengthAdjust="spacingAndGlyphs" fill="#000">10000</text>
<line x1="802.50" y1="1011.5" x2="802.50" y2="1016.36" stroke="#000" stroke-width="1.11"/>
<text x="779.94" y="1032.00" font-size="14.9" textLength="43.45" lengthAdjust="spacingAndGlyphs" fill="#000">15000</text>
<line x1="1016.50" y1="1011.5" x2="1016.50" y2="1016.36" stroke="#000" stroke-width="1.11"/>
<text x="993.42" y="1032.00" font-size="14.9" textLength="43.56" lengthAdjust="spacingAndGlyphs" fill="#000">20000</text>
<line x1="1229.50" y1="1011.5" x2="1229.50" y2="1016.36" stroke="#000" stroke-width="1.11"/>
<text x="1206.75" y="1032.00" font-size="14.9" textLength="43.56" lengthAdjust="spacingAndGlyphs" fill="#000">25000</text>
<line x1="1442.50" y1="1011.5" x2="1442.50" y2="1016.36" stroke="#000" stroke-width="1.11"/>
<text x="1420.22" y="1032.00" font-size="14.9" textLength="43.42" lengthAdjust="spacingAndGlyphs" fill="#000">30000</text>
<line x1="100.64" y1="921.50" x2="105.5" y2="921.50" stroke="#000" stroke-width="1.11"/>
<text x="14.43" y="926.20" font-size="14.9" textLength="81.09" lengthAdjust="spacingAndGlyphs" fill="#000">OBS not OK</text>
<line x1="100.64" y1="889.50" x2="105.5" y2="889.50" stroke="#000" stroke-width="1.11"/>
<text x="52.72" y="894.20" font-size="14.9" textLength="43.37" lengthAdjust="spacingAndGlyphs" fill="#000">dr &gt; 5</text>
<line x1="100.64" y1="856.50" x2="105.5" y2="856.50" stroke="#000" stroke-width="1.11"/>
<text x="39.10" y="861.20" font-size="14.9" textLength="57.60" lengthAdjust="spacingAndGlyphs" fill="#000">Ion. rad.</text>
<line x1="100.64" y1="823.50" x2="105.5" y2="823.50" stroke="#000" stroke-width="1.11"/>
<text x="28.27" y="828.20" font-size="14.9" textLength="68.41" lengthAdjust="spacingAndGlyphs" fill="#000">Sat. pixel.</text>
<line x1="100.64" y1="791.50" x2="105.5" y2="791.50" stroke="#000" stroke-width="1.11"/>
<text x="33.08" y="796.20" font-size="14.9" textLength="62.27" lengthAdjust="spacingAndGlyphs" fill="#000">not track</text>
<line x1="100.64" y1="758.50" x2="105.5" y2="758.50" stroke="#000" stroke-width="1.11"/>
<text x="17.50" y="763.20" font-size="14.9" textLength="78.71" lengthAdjust="spacingAndGlyphs" fill="#000">not Kalman</text>
<line x1="100.64" y1="1009.50" x2="105.5" y2="1009.50" stroke="#000" stroke-width="1.11"/>
<text x="87.69" y="1014.40" font-size="14.9" textLength="8.13" lengthAdjust="spacingAndGlyphs" fill="#000">0</text>
<line x1="100.64" y1="983.50" x2="105.5" y2="983.50" stroke="#000" stroke-width="1.11"/>
<text x="88.08" y="988.40" font-size="14.9" textLength="7.83" lengthAdjust="spacingAndGlyphs" fill="#000">5</text>
<line x1="100.64" y1="957.50" x2="105.5" y2="957.50" stroke="#000" stroke-width="1.11"/>
<text x="78.90" y="962.40" font-size="14.9" textLength="16.96" lengthAdjust="spacingAndGlyphs" fill="#000">10</text>
<line x1="102.72" y1="996.50" x2="105.5" y2="996.50" stroke="#000" stroke-width="0.83"/>
<line x1="102.72" y1="970.50" x2="105.5" y2="970.50" stroke="#000" stroke-width="0.83"/>
<g transform="translate(69.3 990.1) rotate(-90)">
<text x="-0.67" y="0.00" font-size="14.9" textLength="14.22" lengthAdjust="spacingAndGlyphs" fill="#000">dr</text>
</g>
</svg></body></html>
